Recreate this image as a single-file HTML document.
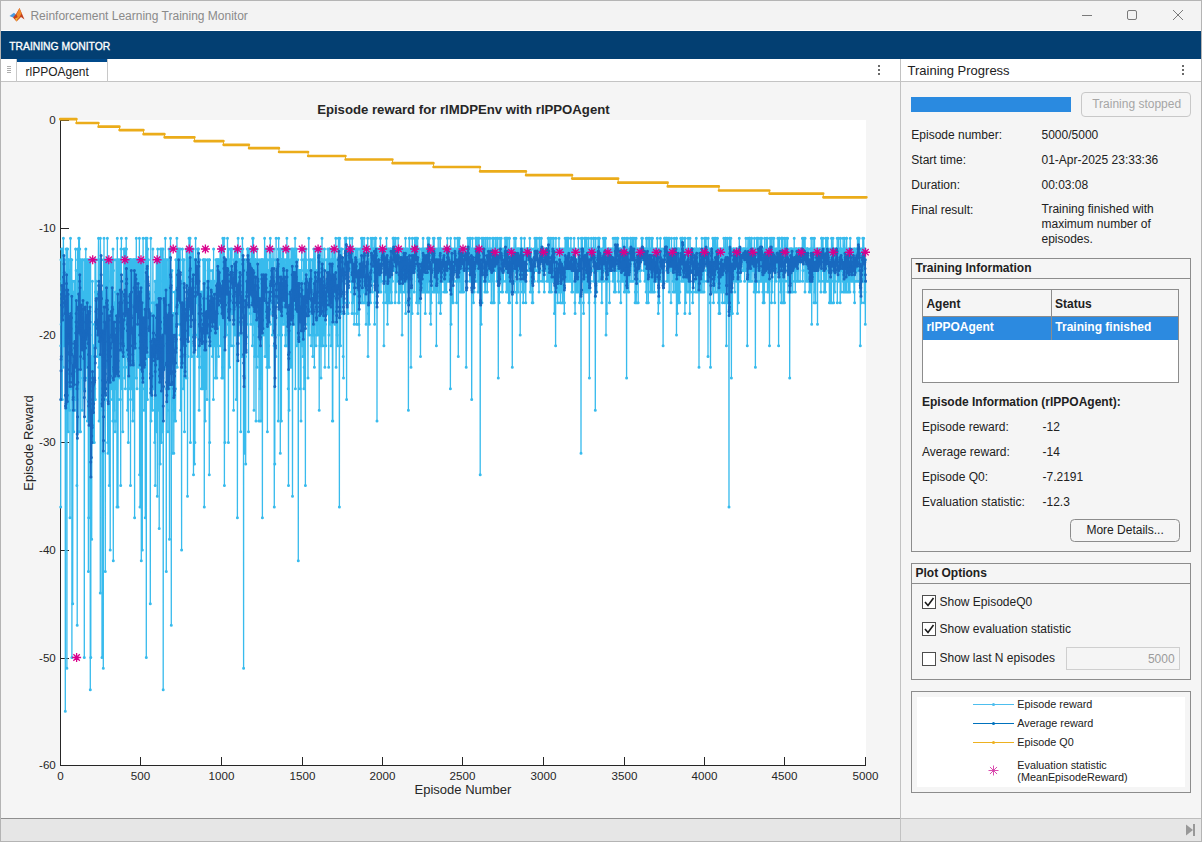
<!DOCTYPE html>
<html><head><meta charset="utf-8"><style>
html,body{margin:0;padding:0;width:1202px;height:842px;overflow:hidden;background:#f5f5f5}
svg{display:block;font-family:"Liberation Sans", sans-serif}
</style></head><body>
<svg width="1202" height="842" viewBox="0 0 1202 842">
<rect x="0" y="0" width="1202" height="842" fill="#f5f5f5"/>
<rect x="0" y="0" width="1202" height="31" fill="#f3f3f3"/>
<rect x="0" y="30" width="1202" height="1" fill="#ffffff"/>
<polygon points="9.5,16 14,12.8 16.5,15.2 13,17.6" fill="#4a9be0"/>
<polygon points="13,17.6 16,14 19.5,8 24.5,19.5 21,17 16.5,21.5" fill="#c4401c"/>
<polygon points="16.5,14.5 19.5,8 21.5,13.5 18.5,19" fill="#ef8a2a"/>
<polygon points="15,18.5 18.5,17 16.5,21.5" fill="#f6b534"/>
<text x="30.4" y="20" font-size="12" font-weight="normal" fill="#8a8a8a" text-anchor="start" >Reinforcement Learning Training Monitor</text>
<rect x="1082" y="15" width="10" height="1" fill="#7a7a7a"/>
<rect x="1127.5" y="10.5" width="9" height="9" rx="1.5" fill="none" stroke="#7a7a7a" stroke-width="1"/>
<path d="M1173,10 L1183,20 M1183,10 L1173,20" stroke="#7a7a7a" stroke-width="1"/>
<rect x="0" y="31" width="1202" height="28" fill="#033f72"/>
<text x="9.2" y="50.4" font-size="11.5" font-weight="normal" fill="#ffffff" text-anchor="start" textLength="101" lengthAdjust="spacingAndGlyphs" stroke="#ffffff" stroke-width="0.35">TRAINING MONITOR</text>
<rect x="0" y="59" width="900" height="23" fill="#ffffff"/>
<rect x="0" y="81" width="900" height="1" fill="#c4c4c4"/>
<rect x="16" y="59" width="1" height="23" fill="#c8c8c8"/>
<rect x="7" y="66.1" width="4" height="0.6" fill="#777"/>
<rect x="7" y="68.1" width="4" height="0.6" fill="#777"/>
<rect x="7" y="70.2" width="4" height="0.6" fill="#777"/>
<rect x="7" y="72.3" width="4" height="0.6" fill="#777"/>
<rect x="17" y="59" width="90" height="3" fill="#004a8b"/>
<rect x="107" y="59" width="1" height="23" fill="#c8c8c8"/>
<text x="25.5" y="76.1" font-size="12" font-weight="normal" fill="#212121" text-anchor="start" >rlPPOAgent</text>
<rect x="878" y="65" width="2" height="2" fill="#6a6a6a"/>
<rect x="878" y="69" width="2" height="2" fill="#6a6a6a"/>
<rect x="878" y="73" width="2" height="2" fill="#6a6a6a"/>
<rect x="901" y="59" width="301" height="23" fill="#ffffff"/>
<rect x="901" y="81" width="301" height="1" fill="#c4c4c4"/>
<text x="907.5" y="75" font-size="13" font-weight="normal" fill="#212121" text-anchor="start" >Training Progress</text>
<rect x="1182" y="65" width="2" height="2" fill="#6a6a6a"/>
<rect x="1182" y="69" width="2" height="2" fill="#6a6a6a"/>
<rect x="1182" y="73" width="2" height="2" fill="#6a6a6a"/>
<rect x="900" y="59" width="1" height="783" fill="#c2c2c2"/>
<rect x="0" y="818" width="1202" height="24" fill="#e6e6e6"/>
<rect x="0" y="818" width="900" height="1" fill="#8f8f8f"/>
<rect x="901" y="818" width="301" height="1" fill="#bdbdbd"/>
<rect x="900" y="818" width="1" height="24" fill="#c2c2c2"/>
<polygon points="1186,824.5 1193,830 1186,835.5" fill="#999"/>
<rect x="1193" y="824" width="2" height="12" fill="#999"/>
<rect x="0" y="350" width="1" height="8" fill="#6e2a30"/>
<rect x="1201" y="350" width="1" height="2" fill="#333"/>
<rect x="0.5" y="0.5" width="1201" height="841" fill="none" stroke="#b4b4b4" stroke-width="1"/>
<rect x="911" y="97" width="160" height="15" fill="#2a8ae0"/>
<rect x="1081.5" y="92.5" width="109" height="24" rx="3.5" fill="#f5f5f5" stroke="#c8c8c8"/>
<text x="1092.2" y="108" font-size="12" font-weight="normal" fill="#a6a6a6" text-anchor="start" >Training stopped</text>
<text x="911.3" y="139.3" font-size="12" font-weight="normal" fill="#212121" text-anchor="start" >Episode number:</text>
<text x="1041.5" y="139.3" font-size="12" font-weight="normal" fill="#212121" text-anchor="start" >5000/5000</text>
<text x="911.3" y="164.4" font-size="12" font-weight="normal" fill="#212121" text-anchor="start" >Start time:</text>
<text x="1041.5" y="164.4" font-size="12" font-weight="normal" fill="#212121" text-anchor="start" >01-Apr-2025 23:33:36</text>
<text x="911.3" y="189.3" font-size="12" font-weight="normal" fill="#212121" text-anchor="start" >Duration:</text>
<text x="1041.5" y="189.3" font-size="12" font-weight="normal" fill="#212121" text-anchor="start" >00:03:08</text>
<text x="911.3" y="214.2" font-size="12" font-weight="normal" fill="#212121" text-anchor="start" >Final result:</text>
<text x="1041.5" y="213.2" font-size="12" font-weight="normal" fill="#212121" text-anchor="start" >Training finished with</text>
<text x="1041.5" y="228.2" font-size="12" font-weight="normal" fill="#212121" text-anchor="start" >maximum number of</text>
<text x="1041.5" y="243.2" font-size="12" font-weight="normal" fill="#212121" text-anchor="start" >episodes.</text>
<rect x="911.5" y="258.5" width="279" height="293" fill="none" stroke="#8c8c8c"/>
<rect x="912" y="278" width="278" height="1" fill="#8c8c8c"/>
<text x="915.5" y="272" font-size="12" font-weight="bold" fill="#212121" text-anchor="start" >Training Information</text>
<rect x="922.5" y="289.5" width="256" height="93" fill="#ffffff" stroke="#8c8c8c"/>
<rect x="923" y="290" width="255" height="26" fill="#f5f5f5"/>
<rect x="923" y="316" width="255" height="1" fill="#8c8c8c"/>
<rect x="923" y="317" width="255" height="23" fill="#2c8ae0"/>
<rect x="1051" y="290" width="1" height="50" fill="#8c8c8c"/>
<text x="926.4" y="308.3" font-size="12" font-weight="bold" fill="#212121" text-anchor="start" >Agent</text>
<text x="1055" y="308.3" font-size="12" font-weight="bold" fill="#212121" text-anchor="start" >Status</text>
<text x="926.4" y="331" font-size="12" font-weight="bold" fill="#ffffff" text-anchor="start" >rlPPOAgent</text>
<text x="1055.3" y="331" font-size="12" font-weight="bold" fill="#ffffff" text-anchor="start" >Training finished</text>
<text x="922" y="405.6" font-size="12" font-weight="bold" fill="#212121" text-anchor="start" >Episode Information (rlPPOAgent):</text>
<text x="922" y="430.7" font-size="12" font-weight="normal" fill="#212121" text-anchor="start" >Episode reward:</text>
<text x="1042.5" y="430.7" font-size="12" font-weight="normal" fill="#212121" text-anchor="start" >-12</text>
<text x="922" y="455.8" font-size="12" font-weight="normal" fill="#212121" text-anchor="start" >Average reward:</text>
<text x="1042.5" y="455.8" font-size="12" font-weight="normal" fill="#212121" text-anchor="start" >-14</text>
<text x="922" y="480.9" font-size="12" font-weight="normal" fill="#212121" text-anchor="start" >Episode Q0:</text>
<text x="1042.5" y="480.9" font-size="12" font-weight="normal" fill="#212121" text-anchor="start" >-7.2191</text>
<text x="922" y="506" font-size="12" font-weight="normal" fill="#212121" text-anchor="start" >Evaluation statistic:</text>
<text x="1042.5" y="506" font-size="12" font-weight="normal" fill="#212121" text-anchor="start" >-12.3</text>
<rect x="1070.5" y="519.5" width="109" height="22" rx="4" fill="#f5f5f5" stroke="#8c8c8c"/>
<text x="1086.4" y="533.7" font-size="12" font-weight="normal" fill="#212121" text-anchor="start" >More Details...</text>
<rect x="911.5" y="563.5" width="279" height="116" fill="none" stroke="#8c8c8c"/>
<rect x="912" y="583" width="278" height="1" fill="#8c8c8c"/>
<text x="915.5" y="577" font-size="12" font-weight="bold" fill="#212121" text-anchor="start" >Plot Options</text>
<rect x="922.5" y="595.5" width="13" height="13" fill="#ffffff" stroke="#4d4d4d"/>
<path d="M925,602.0 L928,605.5 L933.5,598.0" fill="none" stroke="#1a1a1a" stroke-width="1.6"/>
<rect x="922.5" y="622.5" width="13" height="13" fill="#ffffff" stroke="#4d4d4d"/>
<path d="M925,629.0 L928,632.5 L933.5,625.0" fill="none" stroke="#1a1a1a" stroke-width="1.6"/>
<rect x="922.5" y="652.5" width="13" height="13" fill="#ffffff" stroke="#4d4d4d"/>
<text x="939.5" y="606" font-size="12" font-weight="normal" fill="#212121" text-anchor="start" >Show EpisodeQ0</text>
<text x="939.5" y="633" font-size="12" font-weight="normal" fill="#212121" text-anchor="start" >Show evaluation statistic</text>
<text x="939.5" y="661.8" font-size="12" font-weight="normal" fill="#212121" text-anchor="start" >Show last N episodes</text>
<rect x="1066.5" y="647.5" width="113" height="22" fill="#f5f5f5" stroke="#cfcfcf"/>
<text x="1174.6" y="662.5" font-size="12" font-weight="normal" fill="#9b9b9b" text-anchor="end" >5000</text>
<rect x="911.5" y="691.5" width="279" height="101" fill="none" stroke="#8c8c8c"/>
<rect x="917" y="697" width="268" height="90" fill="#ffffff"/>
<rect x="973" y="704.0" width="41" height="1" fill="#4dbeee"/>
<circle cx="993.5" cy="704.5" r="1.5" fill="#4dbeee"/>
<text x="1017.3" y="708" font-size="10.8" font-weight="normal" fill="#212121" text-anchor="start" >Episode reward</text>
<rect x="973" y="723.0" width="41" height="1" fill="#0072bd"/>
<circle cx="993.5" cy="723.5" r="1.5" fill="#0072bd"/>
<text x="1017.3" y="727" font-size="10.8" font-weight="normal" fill="#212121" text-anchor="start" >Average reward</text>
<rect x="973" y="742.0" width="41" height="1" fill="#edb120"/>
<circle cx="993.5" cy="742.5" r="1.5" fill="#edb120"/>
<text x="1017.3" y="745.8" font-size="10.8" font-weight="normal" fill="#212121" text-anchor="start" >Episode Q0</text>
<path d="M988.5,770.5 H998.5 M993.5,765.5 V775.5 M989.9645,766.9645 L997.0355,774.0355 M989.9645,774.0355 L997.0355,766.9645" stroke="#d63aa6" stroke-width="0.9" fill="none"/>
<text x="1017.3" y="769.2" font-size="10.8" font-weight="normal" fill="#212121" text-anchor="start" >Evaluation statistic</text>
<text x="1017.3" y="780.6" font-size="10.8" font-weight="normal" fill="#212121" text-anchor="start" >(MeanEpisodeReward)</text>
<rect x="60" y="120" width="806" height="645" fill="#ffffff"/>
<text x="463.4" y="114.2" font-size="13" font-weight="bold" fill="#262626" text-anchor="middle" textLength="292.5" lengthAdjust="spacingAndGlyphs">Episode reward for rlMDPEnv with rlPPOAgent</text>
<rect x="60" y="120" width="1" height="646" fill="#262626"/>
<rect x="60" y="765" width="806" height="1" fill="#262626"/>
<rect x="61" y="120" width="8" height="1" fill="#262626"/>
<text x="55.8" y="124.2" font-size="11.6" font-weight="normal" fill="#262626" text-anchor="end" >0</text>
<rect x="61" y="228" width="8" height="1" fill="#262626"/>
<text x="55.8" y="232.2" font-size="11.6" font-weight="normal" fill="#262626" text-anchor="end" >-10</text>
<rect x="61" y="335" width="8" height="1" fill="#262626"/>
<text x="55.8" y="339.2" font-size="11.6" font-weight="normal" fill="#262626" text-anchor="end" >-20</text>
<rect x="61" y="442" width="8" height="1" fill="#262626"/>
<text x="55.8" y="446.2" font-size="11.6" font-weight="normal" fill="#262626" text-anchor="end" >-30</text>
<rect x="61" y="550" width="8" height="1" fill="#262626"/>
<text x="55.8" y="554.2" font-size="11.6" font-weight="normal" fill="#262626" text-anchor="end" >-40</text>
<rect x="61" y="658" width="8" height="1" fill="#262626"/>
<text x="55.8" y="662.2" font-size="11.6" font-weight="normal" fill="#262626" text-anchor="end" >-50</text>
<rect x="61" y="765" width="8" height="1" fill="#262626"/>
<text x="55.8" y="769.2" font-size="11.6" font-weight="normal" fill="#262626" text-anchor="end" >-60</text>
<rect x="60" y="757" width="1" height="8" fill="#262626"/>
<text x="60.5" y="779.6" font-size="11.6" font-weight="normal" fill="#262626" text-anchor="middle" >0</text>
<rect x="140" y="757" width="1" height="8" fill="#262626"/>
<text x="140.5" y="779.6" font-size="11.6" font-weight="normal" fill="#262626" text-anchor="middle" >500</text>
<rect x="221" y="757" width="1" height="8" fill="#262626"/>
<text x="221.5" y="779.6" font-size="11.6" font-weight="normal" fill="#262626" text-anchor="middle" >1000</text>
<rect x="302" y="757" width="1" height="8" fill="#262626"/>
<text x="302.5" y="779.6" font-size="11.6" font-weight="normal" fill="#262626" text-anchor="middle" >1500</text>
<rect x="382" y="757" width="1" height="8" fill="#262626"/>
<text x="382.5" y="779.6" font-size="11.6" font-weight="normal" fill="#262626" text-anchor="middle" >2000</text>
<rect x="462" y="757" width="1" height="8" fill="#262626"/>
<text x="462.5" y="779.6" font-size="11.6" font-weight="normal" fill="#262626" text-anchor="middle" >2500</text>
<rect x="543" y="757" width="1" height="8" fill="#262626"/>
<text x="543.5" y="779.6" font-size="11.6" font-weight="normal" fill="#262626" text-anchor="middle" >3000</text>
<rect x="624" y="757" width="1" height="8" fill="#262626"/>
<text x="624.5" y="779.6" font-size="11.6" font-weight="normal" fill="#262626" text-anchor="middle" >3500</text>
<rect x="704" y="757" width="1" height="8" fill="#262626"/>
<text x="704.5" y="779.6" font-size="11.6" font-weight="normal" fill="#262626" text-anchor="middle" >4000</text>
<rect x="784" y="757" width="1" height="8" fill="#262626"/>
<text x="784.5" y="779.6" font-size="11.6" font-weight="normal" fill="#262626" text-anchor="middle" >4500</text>
<rect x="865" y="757" width="1" height="8" fill="#262626"/>
<text x="865.5" y="779.6" font-size="11.6" font-weight="normal" fill="#262626" text-anchor="middle" >5000</text>
<polyline points="60.7,507.0 60.8,345.8 61.0,259.8 61.1,324.2 61.3,345.8 61.5,249.0 61.6,292.0 61.8,281.2 61.9,259.8 62.1,345.8 62.3,399.5 62.4,249.0 62.6,345.8 62.8,259.8 62.9,259.8 63.1,367.2 63.2,259.8 63.4,238.2 63.6,259.8 63.7,259.8 63.9,259.8 64.0,302.8 64.2,281.2 64.4,345.8 64.5,259.8 64.7,292.0 64.8,335.0 65.0,335.0 65.2,302.8 65.3,711.2 65.5,345.8 65.7,345.8 65.8,335.0 66.0,281.2 66.1,249.0 66.3,302.8 66.5,249.0 66.6,292.0 66.8,410.2 66.9,668.2 67.1,249.0 67.3,356.5 67.4,324.2 67.6,249.0 67.7,270.5 67.9,367.2 68.1,259.8 68.2,431.8 68.4,259.8 68.5,356.5 68.7,335.0 68.9,259.8 69.0,378.0 69.2,388.8 69.4,410.2 69.5,324.2 69.7,410.2 69.8,270.5 70.0,517.8 70.2,292.0 70.3,259.8 70.5,238.2 70.6,388.8 70.8,388.8 71.0,367.2 71.1,367.2 71.3,259.8 71.4,335.0 71.6,259.8 71.8,259.8 71.9,657.5 72.1,356.5 72.3,335.0 72.4,302.8 72.6,281.2 72.7,603.8 72.9,410.2 73.1,399.5 73.2,292.0 73.4,345.8 73.5,378.0 73.7,431.8 73.9,335.0 74.0,367.2 74.2,410.2 74.3,281.2 74.5,324.2 74.7,356.5 74.8,335.0 75.0,410.2 75.2,378.0 75.3,313.5 75.5,399.5 75.6,249.0 75.8,324.2 76.0,324.2 76.1,270.5 76.3,335.0 76.4,378.0 76.6,378.0 76.8,367.2 76.9,485.5 77.1,313.5 77.2,625.2 77.4,399.5 77.6,259.8 77.7,249.0 77.9,378.0 78.0,259.8 78.2,388.8 78.4,259.8 78.5,324.2 78.7,238.2 78.9,431.8 79.0,356.5 79.2,313.5 79.3,238.2 79.5,249.0 79.7,249.0 79.8,324.2 80.0,378.0 80.1,335.0 80.3,378.0 80.5,431.8 80.6,259.8 80.8,259.8 80.9,345.8 81.1,324.2 81.3,335.0 81.4,302.8 81.6,367.2 81.8,345.8 81.9,259.8 82.1,367.2 82.2,410.2 82.4,335.0 82.6,324.2 82.7,259.8 82.9,324.2 83.0,259.8 83.2,378.0 83.4,388.8 83.5,345.8 83.7,292.0 83.8,388.8 84.0,324.2 84.2,324.2 84.3,657.5 84.5,388.8 84.7,259.8 84.8,259.8 85.0,335.0 85.1,302.8 85.3,378.0 85.5,378.0 85.6,345.8 85.8,249.0 85.9,345.8 86.1,367.2 86.3,292.0 86.4,324.2 86.6,259.8 86.7,367.2 86.9,345.8 87.1,281.2 87.2,259.8 87.4,421.0 87.5,292.0 87.7,345.8 87.9,259.8 88.0,399.5 88.2,259.8 88.4,571.5 88.5,281.2 88.7,517.8 88.8,378.0 89.0,378.0 89.2,281.2 89.3,259.8 89.5,345.8 89.6,302.8 89.8,367.2 90.0,259.8 90.1,335.0 90.3,689.8 90.4,367.2 90.6,259.8 90.8,657.5 90.9,410.2 91.1,356.5 91.3,442.5 91.4,421.0 91.6,421.0 91.7,539.2 91.9,388.8 92.1,356.5 92.2,431.8 92.4,281.2 92.5,399.5 92.7,421.0 92.9,388.8 93.0,442.5 93.2,410.2 93.3,378.0 93.5,442.5 93.7,345.8 93.8,345.8 94.0,399.5 94.1,378.0 94.3,442.5 94.5,324.2 94.6,367.2 94.8,388.8 95.0,259.8 95.1,399.5 95.3,399.5 95.4,292.0 95.6,259.8 95.8,259.8 95.9,345.8 96.1,345.8 96.2,281.2 96.4,313.5 96.6,335.0 96.7,345.8 96.9,324.2 97.0,292.0 97.2,324.2 97.4,356.5 97.5,324.2 97.7,345.8 97.9,324.2 98.0,324.2 98.2,345.8 98.3,259.8 98.5,238.2 98.7,259.8 98.8,367.2 99.0,281.2 99.1,421.0 99.3,378.0 99.5,259.8 99.6,313.5 99.8,281.2 99.9,324.2 100.1,259.8 100.3,593.0 100.4,238.2 100.6,259.8 100.8,259.8 100.9,259.8 101.1,259.8 101.2,335.0 101.4,313.5 101.6,324.2 101.7,335.0 101.9,388.8 102.0,657.5 102.2,324.2 102.4,292.0 102.5,313.5 102.7,313.5 102.8,410.2 103.0,453.2 103.2,410.2 103.3,668.2 103.5,259.8 103.6,292.0 103.8,367.2 104.0,238.2 104.1,378.0 104.3,388.8 104.5,345.8 104.6,259.8 104.8,378.0 104.9,399.5 105.1,259.8 105.3,571.5 105.4,356.5 105.6,388.8 105.7,335.0 105.9,292.0 106.1,259.8 106.2,259.8 106.4,367.2 106.5,259.8 106.7,356.5 106.9,281.2 107.0,270.5 107.2,356.5 107.4,238.2 107.5,399.5 107.7,442.5 107.8,367.2 108.0,453.2 108.2,345.8 108.3,410.2 108.5,313.5 108.6,259.8 108.8,356.5 109.0,259.8 109.1,388.8 109.3,485.5 109.4,367.2 109.6,313.5 109.8,356.5 109.9,367.2 110.1,324.2 110.2,550.0 110.4,281.2 110.6,259.8 110.7,302.8 110.9,345.8 111.1,388.8 111.2,259.8 111.4,378.0 111.5,302.8 111.7,356.5 111.9,259.8 112.0,259.8 112.2,259.8 112.3,399.5 112.5,367.2 112.7,259.8 112.8,421.0 113.0,249.0 113.1,399.5 113.3,560.8 113.5,270.5 113.6,356.5 113.8,259.8 114.0,410.2 114.1,313.5 114.3,345.8 114.4,356.5 114.6,367.2 114.8,302.8 114.9,421.0 115.1,431.8 115.2,356.5 115.4,292.0 115.6,367.2 115.7,367.2 115.9,388.8 116.0,259.8 116.2,292.0 116.4,335.0 116.5,302.8 116.7,421.0 116.8,302.8 117.0,507.0 117.2,335.0 117.3,238.2 117.5,313.5 117.7,259.8 117.8,324.2 118.0,507.0 118.1,399.5 118.3,367.2 118.5,281.2 118.6,324.2 118.8,378.0 118.9,259.8 119.1,335.0 119.3,259.8 119.4,345.8 119.6,313.5 119.7,313.5 119.9,281.2 120.1,259.8 120.2,281.2 120.4,399.5 120.6,324.2 120.7,485.5 120.9,259.8 121.0,249.0 121.2,335.0 121.4,238.2 121.5,292.0 121.7,292.0 121.8,302.8 122.0,388.8 122.2,302.8 122.3,313.5 122.5,313.5 122.6,367.2 122.8,431.8 123.0,292.0 123.1,356.5 123.3,335.0 123.5,313.5 123.6,345.8 123.8,249.0 123.9,356.5 124.1,335.0 124.3,281.2 124.4,249.0 124.6,259.8 124.7,378.0 124.9,313.5 125.1,249.0 125.2,249.0 125.4,388.8 125.5,335.0 125.7,249.0 125.9,259.8 126.0,335.0 126.2,238.2 126.3,259.8 126.5,249.0 126.7,313.5 126.8,356.5 127.0,335.0 127.2,367.2 127.3,281.2 127.5,410.2 127.6,259.8 127.8,292.0 128.0,302.8 128.1,335.0 128.3,442.5 128.4,399.5 128.6,313.5 128.8,388.8 128.9,259.8 129.1,324.2 129.2,378.0 129.4,259.8 129.6,259.8 129.7,259.8 129.9,356.5 130.1,335.0 130.2,388.8 130.4,259.8 130.5,485.5 130.7,259.8 130.9,259.8 131.0,259.8 131.2,313.5 131.3,259.8 131.5,367.2 131.7,388.8 131.8,335.0 132.0,313.5 132.1,259.8 132.3,345.8 132.5,399.5 132.6,345.8 132.8,421.0 132.9,292.0 133.1,356.5 133.3,410.2 133.4,259.8 133.6,345.8 133.8,259.8 133.9,259.8 134.1,313.5 134.2,259.8 134.4,259.8 134.6,517.8 134.7,335.0 134.9,345.8 135.0,259.8 135.2,281.2 135.4,313.5 135.5,259.8 135.7,259.8 135.8,302.8 136.0,259.8 136.2,378.0 136.3,238.2 136.5,378.0 136.7,259.8 136.8,259.8 137.0,388.8 137.1,259.8 137.3,335.0 137.5,292.0 137.6,345.8 137.8,259.8 137.9,259.8 138.1,259.8 138.3,356.5 138.4,367.2 138.6,335.0 138.7,259.8 138.9,259.8 139.1,367.2 139.2,335.0 139.4,238.2 139.6,474.8 139.7,259.8 139.9,259.8 140.0,507.0 140.2,324.2 140.4,302.8 140.5,313.5 140.7,259.8 140.8,259.8 141.0,302.8 141.2,378.0 141.3,560.8 141.5,259.8 141.6,259.8 141.8,388.8 142.0,259.8 142.1,345.8 142.3,550.0 142.4,313.5 142.6,335.0 142.8,345.8 142.9,367.2 143.1,238.2 143.3,378.0 143.4,259.8 143.6,356.5 143.7,378.0 143.9,302.8 144.1,410.2 144.2,388.8 144.4,335.0 144.5,313.5 144.7,378.0 144.9,259.8 145.0,259.8 145.2,378.0 145.3,517.8 145.5,259.8 145.7,281.2 145.8,238.2 146.0,345.8 146.2,238.2 146.3,657.5 146.5,259.8 146.6,259.8 146.8,324.2 147.0,259.8 147.1,238.2 147.3,249.0 147.4,399.5 147.6,249.0 147.8,249.0 147.9,259.8 148.1,313.5 148.2,345.8 148.4,259.8 148.6,313.5 148.7,313.5 148.9,356.5 149.1,313.5 149.2,345.8 149.4,324.2 149.5,292.0 149.7,302.8 149.9,313.5 150.0,335.0 150.2,335.0 150.3,603.8 150.5,302.8 150.7,388.8 150.8,238.2 151.0,356.5 151.1,421.0 151.3,388.8 151.5,399.5 151.6,367.2 151.8,399.5 151.9,324.2 152.1,313.5 152.3,324.2 152.4,410.2 152.6,410.2 152.8,302.8 152.9,249.0 153.1,324.2 153.2,378.0 153.4,324.2 153.6,388.8 153.7,335.0 153.9,335.0 154.0,356.5 154.2,367.2 154.4,335.0 154.5,302.8 154.7,442.5 154.8,345.8 155.0,281.2 155.2,485.5 155.3,421.0 155.5,292.0 155.7,345.8 155.8,281.2 156.0,410.2 156.1,378.0 156.3,259.8 156.5,259.8 156.6,431.8 156.8,259.8 156.9,313.5 157.1,259.8 157.3,496.2 157.4,410.2 157.6,313.5 157.7,249.0 157.9,324.2 158.1,410.2 158.2,292.0 158.4,259.8 158.5,259.8 158.7,313.5 158.9,367.2 159.0,292.0 159.2,528.5 159.4,345.8 159.5,345.8 159.7,399.5 159.8,259.8 160.0,259.8 160.2,464.0 160.3,259.8 160.5,249.0 160.6,378.0 160.8,442.5 161.0,356.5 161.1,324.2 161.3,388.8 161.4,442.5 161.6,367.2 161.8,356.5 161.9,249.0 162.1,388.8 162.3,367.2 162.4,388.8 162.6,281.2 162.7,431.8 162.9,378.0 163.1,249.0 163.2,689.8 163.4,356.5 163.5,259.8 163.7,281.2 163.9,259.8 164.0,335.0 164.2,367.2 164.3,259.8 164.5,292.0 164.7,335.0 164.8,367.2 165.0,335.0 165.2,335.0 165.3,238.2 165.5,345.8 165.6,313.5 165.8,292.0 166.0,259.8 166.1,388.8 166.3,571.5 166.4,302.8 166.6,388.8 166.8,356.5 166.9,356.5 167.1,313.5 167.2,259.8 167.4,292.0 167.6,367.2 167.7,410.2 167.9,431.8 168.0,313.5 168.2,399.5 168.4,388.8 168.5,335.0 168.7,259.8 168.9,335.0 169.0,249.0 169.2,345.8 169.3,388.8 169.5,539.2 169.7,302.8 169.8,345.8 170.0,249.0 170.1,249.0 170.3,292.0 170.5,238.2 170.6,259.8 170.8,345.8 170.9,302.8 171.1,281.2 171.3,625.2 171.4,313.5 171.6,335.0 171.8,367.2 171.9,270.5 172.1,292.0 172.2,453.2 172.4,345.8 172.6,313.5 172.7,356.5 172.9,345.8 173.0,324.2 173.2,356.5 173.4,378.0 173.5,388.8 173.7,410.2 173.8,453.2 174.0,313.5 174.2,410.2 174.3,356.5 174.5,421.0 174.6,378.0 174.8,292.0 175.0,367.2 175.1,292.0 175.3,345.8 175.5,388.8 175.6,421.0 175.8,259.8 175.9,345.8 176.1,324.2 176.3,345.8 176.4,292.0 176.6,324.2 176.7,335.0 176.9,238.2 177.1,259.8 177.2,367.2 177.4,249.0 177.5,259.8 177.7,302.8 177.9,313.5 178.0,249.0 178.2,249.0 178.4,281.2 178.5,259.8 178.7,259.8 178.8,313.5 179.0,313.5 179.2,324.2 179.3,249.0 179.5,302.8 179.6,270.5 179.8,259.8 180.0,335.0 180.1,249.0 180.3,259.8 180.4,259.8 180.6,410.2 180.8,335.0 180.9,356.5 181.1,335.0 181.2,313.5 181.4,281.2 181.6,550.0 181.7,302.8 181.9,367.2 182.1,281.2 182.2,313.5 182.4,249.0 182.5,324.2 182.7,356.5 182.9,367.2 183.0,313.5 183.2,292.0 183.3,388.8 183.5,324.2 183.7,259.8 183.8,259.8 184.0,313.5 184.1,259.8 184.3,345.8 184.5,431.8 184.6,378.0 184.8,356.5 185.0,367.2 185.1,324.2 185.3,302.8 185.4,302.8 185.6,302.8 185.8,335.0 185.9,345.8 186.1,313.5 186.2,249.0 186.4,302.8 186.6,249.0 186.7,313.5 186.9,378.0 187.0,313.5 187.2,249.0 187.4,259.8 187.5,496.2 187.7,270.5 187.9,324.2 188.0,356.5 188.2,259.8 188.3,313.5 188.5,259.8 188.7,335.0 188.8,302.8 189.0,238.2 189.1,335.0 189.3,302.8 189.5,259.8 189.6,249.0 189.8,238.2 189.9,302.8 190.1,238.2 190.3,313.5 190.4,442.5 190.6,249.0 190.7,335.0 190.9,292.0 191.1,281.2 191.2,292.0 191.4,335.0 191.6,292.0 191.7,356.5 191.9,292.0 192.0,249.0 192.2,270.5 192.4,313.5 192.5,313.5 192.7,249.0 192.8,259.8 193.0,302.8 193.2,313.5 193.3,249.0 193.5,474.8 193.6,345.8 193.8,324.2 194.0,324.2 194.1,292.0 194.3,324.2 194.5,464.0 194.6,259.8 194.8,259.8 194.9,442.5 195.1,259.8 195.3,259.8 195.4,259.8 195.6,238.2 195.7,281.2 195.9,335.0 196.1,259.8 196.2,259.8 196.4,259.8 196.5,270.5 196.7,281.2 196.9,270.5 197.0,302.8 197.2,292.0 197.3,270.5 197.5,249.0 197.7,356.5 197.8,302.8 198.0,259.8 198.2,249.0 198.3,249.0 198.5,249.0 198.6,259.8 198.8,324.2 199.0,324.2 199.1,410.2 199.3,302.8 199.4,367.2 199.6,292.0 199.8,259.8 199.9,302.8 200.1,302.8 200.2,313.5 200.4,302.8 200.6,324.2 200.7,324.2 200.9,335.0 201.1,367.2 201.2,292.0 201.4,388.8 201.5,313.5 201.7,356.5 201.9,335.0 202.0,324.2 202.2,388.8 202.3,302.8 202.5,292.0 202.7,356.5 202.8,324.2 203.0,388.8 203.1,259.8 203.3,335.0 203.5,259.8 203.6,335.0 203.8,302.8 204.0,259.8 204.1,259.8 204.3,507.0 204.4,335.0 204.6,345.8 204.8,302.8 204.9,259.8 205.1,324.2 205.2,421.0 205.4,259.8 205.6,356.5 205.7,388.8 205.9,281.2 206.0,324.2 206.2,302.8 206.4,313.5 206.5,335.0 206.7,324.2 206.8,292.0 207.0,399.5 207.2,313.5 207.3,302.8 207.5,259.8 207.7,313.5 207.8,302.8 208.0,259.8 208.1,270.5 208.3,335.0 208.5,335.0 208.6,324.2 208.8,292.0 208.9,302.8 209.1,292.0 209.3,474.8 209.4,259.8 209.6,259.8 209.7,442.5 209.9,270.5 210.1,292.0 210.2,302.8 210.4,345.8 210.6,302.8 210.7,281.2 210.9,292.0 211.0,281.2 211.2,292.0 211.4,313.5 211.5,302.8 211.7,302.8 211.8,345.8 212.0,345.8 212.2,313.5 212.3,270.5 212.5,356.5 212.6,292.0 212.8,313.5 213.0,292.0 213.1,292.0 213.3,302.8 213.4,399.5 213.6,249.0 213.8,324.2 213.9,281.2 214.1,335.0 214.3,281.2 214.4,335.0 214.6,345.8 214.7,313.5 214.9,335.0 215.1,313.5 215.2,302.8 215.4,378.0 215.5,335.0 215.7,302.8 215.9,259.8 216.0,313.5 216.2,259.8 216.3,335.0 216.5,259.8 216.7,324.2 216.8,378.0 217.0,345.8 217.2,259.8 217.3,259.8 217.5,281.2 217.6,270.5 217.8,259.8 218.0,281.2 218.1,345.8 218.3,259.8 218.4,281.2 218.6,356.5 218.8,259.8 218.9,259.8 219.1,313.5 219.2,259.8 219.4,270.5 219.6,313.5 219.7,324.2 219.9,292.0 220.1,249.0 220.2,292.0 220.4,281.2 220.5,313.5 220.7,345.8 220.9,249.0 221.0,324.2 221.2,249.0 221.3,335.0 221.5,281.2 221.7,292.0 221.8,378.0 222.0,281.2 222.1,259.8 222.3,270.5 222.5,270.5 222.6,367.2 222.8,238.2 222.9,378.0 223.1,324.2 223.3,281.2 223.4,259.8 223.6,259.8 223.8,281.2 223.9,259.8 224.1,249.0 224.2,238.2 224.4,485.5 224.6,259.8 224.7,259.8 224.9,442.5 225.0,302.8 225.2,259.8 225.4,259.8 225.5,259.8 225.7,259.8 225.8,259.8 226.0,302.8 226.2,259.8 226.3,259.8 226.5,335.0 226.7,302.8 226.8,292.0 227.0,259.8 227.1,281.2 227.3,270.5 227.5,238.2 227.6,292.0 227.8,292.0 227.9,259.8 228.1,324.2 228.3,270.5 228.4,442.5 228.6,259.8 228.7,249.0 228.9,292.0 229.1,313.5 229.2,345.8 229.4,281.2 229.6,367.2 229.7,292.0 229.9,259.8 230.0,270.5 230.2,313.5 230.4,270.5 230.5,259.8 230.7,249.0 230.8,270.5 231.0,345.8 231.2,249.0 231.3,281.2 231.5,249.0 231.6,281.2 231.8,270.5 232.0,313.5 232.1,249.0 232.3,302.8 232.4,270.5 232.6,302.8 232.8,270.5 232.9,281.2 233.1,313.5 233.3,345.8 233.4,270.5 233.6,410.2 233.7,259.8 233.9,313.5 234.1,292.0 234.2,259.8 234.4,259.8 234.5,249.0 234.7,259.8 234.9,335.0 235.0,259.8 235.2,259.8 235.3,313.5 235.5,249.0 235.7,249.0 235.8,292.0 236.0,249.0 236.2,270.5 236.3,399.5 236.5,302.8 236.6,249.0 236.8,259.8 237.0,313.5 237.1,302.8 237.3,324.2 237.4,517.8 237.6,313.5 237.8,313.5 237.9,335.0 238.1,238.2 238.2,335.0 238.4,292.0 238.6,259.8 238.7,292.0 238.9,335.0 239.0,259.8 239.2,324.2 239.4,259.8 239.5,281.2 239.7,259.8 239.9,281.2 240.0,281.2 240.2,324.2 240.3,313.5 240.5,259.8 240.7,431.8 240.8,335.0 241.0,249.0 241.1,335.0 241.3,313.5 241.5,324.2 241.6,259.8 241.8,356.5 241.9,302.8 242.1,302.8 242.3,281.2 242.4,238.2 242.6,249.0 242.8,249.0 242.9,281.2 243.1,259.8 243.2,259.8 243.4,302.8 243.6,668.2 243.7,324.2 243.9,324.2 244.0,313.5 244.2,259.8 244.4,356.5 244.5,453.2 244.7,324.2 244.8,281.2 245.0,335.0 245.2,302.8 245.3,259.8 245.5,356.5 245.7,464.0 245.8,335.0 246.0,335.0 246.1,270.5 246.3,281.2 246.5,302.8 246.6,292.0 246.8,259.8 246.9,324.2 247.1,281.2 247.3,249.0 247.4,249.0 247.6,270.5 247.7,249.0 247.9,259.8 248.1,281.2 248.2,249.0 248.4,259.8 248.5,431.8 248.7,292.0 248.9,249.0 249.0,302.8 249.2,249.0 249.4,259.8 249.5,292.0 249.7,259.8 249.8,259.8 250.0,259.8 250.2,259.8 250.3,313.5 250.5,259.8 250.6,302.8 250.8,324.2 251.0,270.5 251.1,259.8 251.3,249.0 251.4,270.5 251.6,292.0 251.8,281.2 251.9,292.0 252.1,302.8 252.3,302.8 252.4,345.8 252.6,238.2 252.7,324.2 252.9,249.0 253.1,302.8 253.2,238.2 253.4,313.5 253.5,281.2 253.7,249.0 253.9,281.2 254.0,410.2 254.2,249.0 254.3,335.0 254.5,281.2 254.7,270.5 254.8,356.5 255.0,259.8 255.1,259.8 255.3,324.2 255.5,259.8 255.6,281.2 255.8,259.8 256.0,421.0 256.1,313.5 256.3,281.2 256.4,281.2 256.6,302.8 256.8,302.8 256.9,367.2 257.1,249.0 257.2,281.2 257.4,270.5 257.6,259.8 257.7,259.8 257.9,324.2 258.0,292.0 258.2,302.8 258.4,313.5 258.5,356.5 258.7,292.0 258.9,302.8 259.0,421.0 259.2,259.8 259.3,292.0 259.5,292.0 259.7,302.8 259.8,345.8 260.0,388.8 260.1,367.2 260.3,259.8 260.5,367.2 260.6,302.8 260.8,281.2 260.9,421.0 261.1,281.2 261.3,259.8 261.4,259.8 261.6,270.5 261.8,324.2 261.9,259.8 262.1,302.8 262.2,259.8 262.4,517.8 262.6,259.8 262.7,302.8 262.9,302.8 263.0,259.8 263.2,313.5 263.4,270.5 263.5,270.5 263.7,259.8 263.8,292.0 264.0,335.0 264.2,292.0 264.3,313.5 264.5,270.5 264.6,238.2 264.8,292.0 265.0,270.5 265.1,356.5 265.3,270.5 265.5,249.0 265.6,302.8 265.8,259.8 265.9,292.0 266.1,292.0 266.3,292.0 266.4,324.2 266.6,356.5 266.7,249.0 266.9,367.2 267.1,281.2 267.2,292.0 267.4,431.8 267.5,259.8 267.7,292.0 267.9,302.8 268.0,313.5 268.2,367.2 268.4,270.5 268.5,313.5 268.7,345.8 268.8,281.2 269.0,302.8 269.2,367.2 269.3,249.0 269.5,259.8 269.6,313.5 269.8,313.5 270.0,324.2 270.1,292.0 270.3,238.2 270.4,259.8 270.6,302.8 270.8,313.5 270.9,292.0 271.1,259.8 271.2,259.8 271.4,302.8 271.6,270.5 271.7,259.8 271.9,302.8 272.1,249.0 272.2,259.8 272.4,335.0 272.5,281.2 272.7,335.0 272.9,302.8 273.0,324.2 273.2,313.5 273.3,259.8 273.5,281.2 273.7,292.0 273.8,259.8 274.0,249.0 274.1,345.8 274.3,507.0 274.5,302.8 274.6,313.5 274.8,464.0 275.0,302.8 275.1,302.8 275.3,345.8 275.4,324.2 275.6,302.8 275.8,259.8 275.9,356.5 276.1,238.2 276.2,292.0 276.4,270.5 276.6,292.0 276.7,259.8 276.9,302.8 277.0,259.8 277.2,259.8 277.4,259.8 277.5,259.8 277.7,259.8 277.9,259.8 278.0,292.0 278.2,249.0 278.3,421.0 278.5,292.0 278.7,238.2 278.8,335.0 279.0,259.8 279.1,292.0 279.3,302.8 279.5,292.0 279.6,302.8 279.8,281.2 279.9,259.8 280.1,249.0 280.3,453.2 280.4,270.5 280.6,249.0 280.7,313.5 280.9,259.8 281.1,302.8 281.2,259.8 281.4,421.0 281.6,259.8 281.7,335.0 281.9,259.8 282.0,259.8 282.2,324.2 282.4,249.0 282.5,324.2 282.7,302.8 282.8,292.0 283.0,259.8 283.2,281.2 283.3,259.8 283.5,249.0 283.6,302.8 283.8,313.5 284.0,324.2 284.1,302.8 284.3,259.8 284.5,270.5 284.6,313.5 284.8,270.5 284.9,270.5 285.1,281.2 285.3,345.8 285.4,302.8 285.6,335.0 285.7,259.8 285.9,281.2 286.1,313.5 286.2,313.5 286.4,259.8 286.5,259.8 286.7,281.2 286.9,238.2 287.0,345.8 287.2,345.8 287.3,313.5 287.5,324.2 287.7,302.8 287.8,249.0 288.0,345.8 288.2,388.8 288.3,302.8 288.5,485.5 288.6,324.2 288.8,292.0 289.0,249.0 289.1,410.2 289.3,292.0 289.4,324.2 289.6,281.2 289.8,313.5 289.9,335.0 290.1,270.5 290.2,259.8 290.4,292.0 290.6,367.2 290.7,335.0 290.9,281.2 291.1,249.0 291.2,367.2 291.4,324.2 291.5,324.2 291.7,292.0 291.9,249.0 292.0,259.8 292.2,249.0 292.3,281.2 292.5,496.2 292.7,302.8 292.8,249.0 293.0,292.0 293.1,281.2 293.3,259.8 293.5,281.2 293.6,292.0 293.8,249.0 293.9,313.5 294.1,292.0 294.3,313.5 294.4,259.8 294.6,324.2 294.8,249.0 294.9,292.0 295.1,238.2 295.2,302.8 295.4,388.8 295.6,270.5 295.7,302.8 295.9,281.2 296.0,281.2 296.2,259.8 296.4,259.8 296.5,249.0 296.7,259.8 296.8,302.8 297.0,345.8 297.2,292.0 297.3,302.8 297.5,313.5 297.7,281.2 297.8,259.8 298.0,281.2 298.1,281.2 298.3,560.8 298.5,281.2 298.6,292.0 298.8,270.5 298.9,302.8 299.1,281.2 299.3,270.5 299.4,313.5 299.6,313.5 299.7,302.8 299.9,270.5 300.1,335.0 300.2,388.8 300.4,270.5 300.6,270.5 300.7,324.2 300.9,324.2 301.0,421.0 301.2,313.5 301.4,270.5 301.5,324.2 301.7,259.8 301.8,249.0 302.0,345.8 302.2,335.0 302.3,292.0 302.5,302.8 302.6,324.2 302.8,335.0 303.0,356.5 303.1,335.0 303.3,345.8 303.4,281.2 303.6,259.8 303.8,270.5 303.9,388.8 304.1,367.2 304.3,249.0 304.4,345.8 304.6,259.8 304.7,335.0 304.9,292.0 305.1,270.5 305.2,259.8 305.4,485.5 305.5,270.5 305.7,249.0 305.9,313.5 306.0,249.0 306.2,292.0 306.3,292.0 306.5,259.8 306.7,313.5 306.8,292.0 307.0,313.5 307.2,270.5 307.3,324.2 307.5,281.2 307.6,292.0 307.8,302.8 308.0,378.0 308.1,292.0 308.3,281.2 308.4,324.2 308.6,281.2 308.8,238.2 308.9,302.8 309.1,292.0 309.2,335.0 309.4,281.2 309.6,281.2 309.7,270.5 309.9,259.8 310.1,313.5 310.2,270.5 310.4,292.0 310.5,259.8 310.7,270.5 310.9,259.8 311.0,313.5 311.2,345.8 311.3,270.5 311.5,313.5 311.7,292.0 311.8,335.0 312.0,313.5 312.1,302.8 312.3,313.5 312.5,302.8 312.6,259.8 312.8,356.5 312.9,335.0 313.1,259.8 313.3,335.0 313.4,335.0 313.6,292.0 313.8,249.0 313.9,281.2 314.1,313.5 314.2,281.2 314.4,367.2 314.6,270.5 314.7,259.8 314.9,302.8 315.0,281.2 315.2,249.0 315.4,292.0 315.5,281.2 315.7,302.8 315.8,281.2 316.0,345.8 316.2,324.2 316.3,335.0 316.5,313.5 316.7,270.5 316.8,302.8 317.0,335.0 317.1,292.0 317.3,281.2 317.5,249.0 317.6,249.0 317.8,335.0 317.9,281.2 318.1,249.0 318.3,249.0 318.4,259.8 318.6,249.0 318.7,270.5 318.9,249.0 319.1,281.2 319.2,410.2 319.4,302.8 319.5,292.0 319.7,292.0 319.9,259.8 320.0,345.8 320.2,249.0 320.4,249.0 320.5,345.8 320.7,270.5 320.8,313.5 321.0,378.0 321.2,259.8 321.3,281.2 321.5,259.8 321.6,259.8 321.8,302.8 322.0,238.2 322.1,259.8 322.3,259.8 322.4,345.8 322.6,281.2 322.8,281.2 322.9,345.8 323.1,302.8 323.3,281.2 323.4,313.5 323.6,335.0 323.7,259.8 323.9,335.0 324.1,249.0 324.2,302.8 324.4,292.0 324.5,249.0 324.7,259.8 324.9,367.2 325.0,292.0 325.2,313.5 325.3,302.8 325.5,324.2 325.7,292.0 325.8,345.8 326.0,281.2 326.1,302.8 326.3,281.2 326.5,313.5 326.6,281.2 326.8,259.8 327.0,259.8 327.1,302.8 327.3,259.8 327.4,313.5 327.6,313.5 327.8,249.0 327.9,270.5 328.1,259.8 328.2,292.0 328.4,292.0 328.6,270.5 328.7,367.2 328.9,259.8 329.0,335.0 329.2,249.0 329.4,249.0 329.5,292.0 329.7,249.0 329.9,281.2 330.0,249.0 330.2,324.2 330.3,324.2 330.5,313.5 330.7,292.0 330.8,259.8 331.0,345.8 331.1,302.8 331.3,259.8 331.5,259.8 331.6,259.8 331.8,302.8 331.9,249.0 332.1,249.0 332.3,259.8 332.4,421.0 332.6,259.8 332.8,421.0 332.9,249.0 333.1,259.8 333.2,259.8 333.4,292.0 333.6,313.5 333.7,259.8 333.9,292.0 334.0,259.8 334.2,281.2 334.4,302.8 334.5,249.0 334.7,292.0 334.8,324.2 335.0,270.5 335.2,259.8 335.3,302.8 335.5,302.8 335.6,259.8 335.8,238.2 336.0,324.2 336.1,367.2 336.3,302.8 336.5,324.2 336.6,292.0 336.8,292.0 336.9,292.0 337.1,335.0 337.3,259.8 337.4,259.8 337.6,345.8 337.7,270.5 337.9,292.0 338.1,259.8 338.2,259.8 338.4,249.0 338.5,238.2 338.7,249.0 338.9,259.8 339.0,292.0 339.2,249.0 339.4,507.0 339.5,281.2 339.7,259.8 339.8,238.2 340.0,270.5 340.2,249.0 340.3,259.8 340.5,345.8 340.6,281.2 340.8,313.5 341.0,281.2 341.1,249.0 341.3,249.0 341.4,313.5 341.6,281.2 341.8,259.8 341.9,249.0 342.1,259.8 342.2,259.8 342.4,259.8 342.6,259.8 342.7,302.8 342.9,270.5 343.1,270.5 343.2,356.5 343.4,259.8 343.5,378.0 343.7,292.0 343.9,281.2 344.0,259.8 344.2,281.2 344.3,302.8 344.5,270.5 344.7,259.8 344.8,249.0 345.0,238.2 345.1,249.0 345.3,259.8 345.5,270.5 345.6,259.8 345.8,238.2 346.0,249.0 346.1,238.2 346.3,238.2 346.4,259.8 346.6,399.5 346.8,249.0 346.9,313.5 347.1,302.8 347.2,270.5 347.4,249.0 347.6,249.0 347.7,259.8 347.9,281.2 348.0,313.5 348.2,281.2 348.4,302.8 348.5,249.0 348.7,259.8 348.9,249.0 349.0,249.0 349.2,259.8 349.3,259.8 349.5,270.5 349.7,238.2 349.8,249.0 350.0,249.0 350.1,249.0 350.3,249.0 350.5,259.8 350.6,281.2 350.8,259.8 350.9,259.8 351.1,249.0 351.3,249.0 351.4,249.0 351.6,292.0 351.7,259.8 351.9,259.8 352.1,313.5 352.2,238.2 352.4,302.8 352.6,249.0 352.7,302.8 352.9,270.5 353.0,249.0 353.2,249.0 353.4,292.0 353.5,281.2 353.7,259.8 353.8,249.0 354.0,292.0 354.2,324.2 354.3,259.8 354.5,313.5 354.6,281.2 354.8,259.8 355.0,259.8 355.1,259.8 355.3,259.8 355.5,249.0 355.6,281.2 355.8,249.0 355.9,259.8 356.1,259.8 356.3,281.2 356.4,259.8 356.6,324.2 356.7,259.8 356.9,249.0 357.1,270.5 357.2,270.5 357.4,313.5 357.5,281.2 357.7,302.8 357.9,270.5 358.0,249.0 358.2,270.5 358.4,270.5 358.5,292.0 358.7,292.0 358.8,324.2 359.0,302.8 359.2,335.0 359.3,259.8 359.5,259.8 359.6,270.5 359.8,281.2 360.0,249.0 360.1,259.8 360.3,302.8 360.4,249.0 360.6,281.2 360.8,292.0 360.9,249.0 361.1,259.8 361.2,281.2 361.4,238.2 361.6,249.0 361.7,292.0 361.9,302.8 362.1,302.8 362.2,292.0 362.4,249.0 362.5,238.2 362.7,270.5 362.9,302.8 363.0,259.8 363.2,292.0 363.3,249.0 363.5,249.0 363.7,259.8 363.8,281.2 364.0,249.0 364.1,238.2 364.3,249.0 364.5,249.0 364.6,292.0 364.8,302.8 365.0,292.0 365.1,270.5 365.3,270.5 365.4,281.2 365.6,281.2 365.8,302.8 365.9,281.2 366.1,324.2 366.2,249.0 366.4,270.5 366.6,249.0 366.7,249.0 366.9,292.0 367.0,259.8 367.2,259.8 367.4,249.0 367.5,259.8 367.7,238.2 367.8,270.5 368.0,356.5 368.2,302.8 368.3,281.2 368.5,313.5 368.7,259.8 368.8,292.0 369.0,259.8 369.1,259.8 369.3,324.2 369.5,302.8 369.6,302.8 369.8,270.5 369.9,249.0 370.1,302.8 370.3,259.8 370.4,281.2 370.6,302.8 370.7,281.2 370.9,238.2 371.1,249.0 371.2,249.0 371.4,249.0 371.6,281.2 371.7,249.0 371.9,249.0 372.0,259.8 372.2,238.2 372.4,292.0 372.5,249.0 372.7,249.0 372.8,259.8 373.0,281.2 373.2,249.0 373.3,249.0 373.5,249.0 373.6,270.5 373.8,270.5 374.0,249.0 374.1,238.2 374.3,249.0 374.4,249.0 374.6,324.2 374.8,302.8 374.9,302.8 375.1,259.8 375.3,259.8 375.4,281.2 375.6,238.2 375.7,238.2 375.9,238.2 376.1,270.5 376.2,259.8 376.4,270.5 376.5,281.2 376.7,302.8 376.9,259.8 377.0,421.0 377.2,249.0 377.3,249.0 377.5,249.0 377.7,292.0 377.8,270.5 378.0,249.0 378.2,259.8 378.3,259.8 378.5,259.8 378.6,270.5 378.8,249.0 379.0,292.0 379.1,259.8 379.3,292.0 379.4,249.0 379.6,281.2 379.8,249.0 379.9,281.2 380.1,281.2 380.2,270.5 380.4,238.2 380.6,270.5 380.7,270.5 380.9,292.0 381.1,270.5 381.2,259.8 381.4,249.0 381.5,259.8 381.7,281.2 381.9,249.0 382.0,249.0 382.2,249.0 382.3,249.0 382.5,249.0 382.7,249.0 382.8,259.8 383.0,249.0 383.1,249.0 383.3,259.8 383.5,259.8 383.6,302.8 383.8,249.0 383.9,345.8 384.1,249.0 384.3,259.8 384.4,259.8 384.6,259.8 384.8,259.8 384.9,270.5 385.1,259.8 385.2,249.0 385.4,270.5 385.6,249.0 385.7,292.0 385.9,270.5 386.0,249.0 386.2,302.8 386.4,249.0 386.5,238.2 386.7,249.0 386.8,259.8 387.0,281.2 387.2,249.0 387.3,259.8 387.5,324.2 387.7,302.8 387.8,270.5 388.0,249.0 388.1,259.8 388.3,281.2 388.5,292.0 388.6,302.8 388.8,249.0 388.9,249.0 389.1,249.0 389.3,292.0 389.4,270.5 389.6,259.8 389.7,259.8 389.9,302.8 390.1,259.8 390.2,281.2 390.4,249.0 390.6,249.0 390.7,259.8 390.9,249.0 391.0,249.0 391.2,292.0 391.4,270.5 391.5,259.8 391.7,302.8 391.8,249.0 392.0,259.8 392.2,270.5 392.3,270.5 392.5,281.2 392.6,249.0 392.8,259.8 393.0,238.2 393.1,238.2 393.3,270.5 393.4,238.2 393.6,249.0 393.8,249.0 393.9,259.8 394.1,259.8 394.3,249.0 394.4,249.0 394.6,270.5 394.7,249.0 394.9,238.2 395.1,302.8 395.2,249.0 395.4,259.8 395.5,249.0 395.7,238.2 395.9,292.0 396.0,292.0 396.2,249.0 396.3,249.0 396.5,281.2 396.7,249.0 396.8,249.0 397.0,259.8 397.2,249.0 397.3,249.0 397.5,270.5 397.6,249.0 397.8,281.2 398.0,259.8 398.1,238.2 398.3,249.0 398.4,270.5 398.6,302.8 398.8,249.0 398.9,249.0 399.1,302.8 399.2,302.8 399.4,270.5 399.6,292.0 399.7,249.0 399.9,249.0 400.0,270.5 400.2,259.8 400.4,259.8 400.5,281.2 400.7,270.5 400.9,292.0 401.0,292.0 401.2,259.8 401.3,281.2 401.5,249.0 401.7,249.0 401.8,249.0 402.0,292.0 402.1,335.0 402.3,270.5 402.5,249.0 402.6,270.5 402.8,249.0 402.9,281.2 403.1,259.8 403.3,249.0 403.4,249.0 403.6,249.0 403.8,259.8 403.9,259.8 404.1,259.8 404.2,281.2 404.4,292.0 404.6,292.0 404.7,281.2 404.9,259.8 405.0,249.0 405.2,270.5 405.4,249.0 405.5,238.2 405.7,313.5 405.8,249.0 406.0,302.8 406.2,270.5 406.3,259.8 406.5,270.5 406.6,249.0 406.8,249.0 407.0,259.8 407.1,281.2 407.3,249.0 407.5,281.2 407.6,270.5 407.8,249.0 407.9,292.0 408.1,292.0 408.3,259.8 408.4,410.2 408.6,302.8 408.7,259.8 408.9,259.8 409.1,259.8 409.2,238.2 409.4,281.2 409.5,238.2 409.7,292.0 409.9,270.5 410.0,292.0 410.2,281.2 410.4,259.8 410.5,249.0 410.7,259.8 410.8,259.8 411.0,367.2 411.2,302.8 411.3,249.0 411.5,259.8 411.6,249.0 411.8,249.0 412.0,270.5 412.1,313.5 412.3,238.2 412.4,270.5 412.6,270.5 412.8,259.8 412.9,259.8 413.1,249.0 413.3,259.8 413.4,249.0 413.6,270.5 413.7,259.8 413.9,249.0 414.1,292.0 414.2,292.0 414.4,249.0 414.5,249.0 414.7,238.2 414.9,270.5 415.0,249.0 415.2,249.0 415.3,270.5 415.5,249.0 415.7,249.0 415.8,238.2 416.0,238.2 416.1,259.8 416.3,249.0 416.5,302.8 416.6,238.2 416.8,249.0 417.0,249.0 417.1,281.2 417.3,270.5 417.4,249.0 417.6,238.2 417.8,249.0 417.9,313.5 418.1,281.2 418.2,270.5 418.4,259.8 418.6,259.8 418.7,281.2 418.9,249.0 419.0,292.0 419.2,302.8 419.4,281.2 419.5,249.0 419.7,249.0 419.9,270.5 420.0,302.8 420.2,292.0 420.3,270.5 420.5,356.5 420.7,270.5 420.8,259.8 421.0,259.8 421.1,292.0 421.3,249.0 421.5,259.8 421.6,292.0 421.8,259.8 421.9,270.5 422.1,292.0 422.3,281.2 422.4,249.0 422.6,270.5 422.8,259.8 422.9,249.0 423.1,238.2 423.2,281.2 423.4,249.0 423.6,292.0 423.7,259.8 423.9,259.8 424.0,292.0 424.2,249.0 424.4,259.8 424.5,259.8 424.7,249.0 424.8,259.8 425.0,292.0 425.2,249.0 425.3,313.5 425.5,249.0 425.6,259.8 425.8,259.8 426.0,249.0 426.1,281.2 426.3,249.0 426.5,249.0 426.6,249.0 426.8,292.0 426.9,292.0 427.1,259.8 427.3,249.0 427.4,270.5 427.6,238.2 427.7,292.0 427.9,238.2 428.1,238.2 428.2,249.0 428.4,259.8 428.5,238.2 428.7,249.0 428.9,270.5 429.0,281.2 429.2,238.2 429.4,292.0 429.5,259.8 429.7,270.5 429.8,249.0 430.0,249.0 430.2,313.5 430.3,259.8 430.5,249.0 430.6,259.8 430.8,324.2 431.0,249.0 431.1,270.5 431.3,302.8 431.4,281.2 431.6,259.8 431.8,249.0 431.9,259.8 432.1,249.0 432.2,249.0 432.4,259.8 432.6,249.0 432.7,249.0 432.9,259.8 433.1,292.0 433.2,238.2 433.4,249.0 433.5,249.0 433.7,259.8 433.9,259.8 434.0,259.8 434.2,238.2 434.3,292.0 434.5,259.8 434.7,259.8 434.8,292.0 435.0,281.2 435.1,259.8 435.3,281.2 435.5,249.0 435.6,259.8 435.8,249.0 436.0,259.8 436.1,292.0 436.3,281.2 436.4,345.8 436.6,249.0 436.8,259.8 436.9,281.2 437.1,259.8 437.2,249.0 437.4,292.0 437.6,259.8 437.7,259.8 437.9,270.5 438.0,281.2 438.2,238.2 438.4,270.5 438.5,259.8 438.7,249.0 438.9,302.8 439.0,249.0 439.2,259.8 439.3,292.0 439.5,249.0 439.7,270.5 439.8,259.8 440.0,238.2 440.1,259.8 440.3,238.2 440.5,313.5 440.6,270.5 440.8,249.0 440.9,270.5 441.1,302.8 441.3,292.0 441.4,249.0 441.6,249.0 441.7,270.5 441.9,281.2 442.1,259.8 442.2,259.8 442.4,259.8 442.6,249.0 442.7,270.5 442.9,259.8 443.0,270.5 443.2,281.2 443.4,249.0 443.5,249.0 443.7,249.0 443.8,259.8 444.0,270.5 444.2,281.2 444.3,292.0 444.5,292.0 444.6,259.8 444.8,249.0 445.0,281.2 445.1,249.0 445.3,281.2 445.5,270.5 445.6,249.0 445.8,292.0 445.9,249.0 446.1,249.0 446.3,270.5 446.4,259.8 446.6,292.0 446.7,270.5 446.9,249.0 447.1,281.2 447.2,249.0 447.4,238.2 447.5,249.0 447.7,249.0 447.9,259.8 448.0,259.8 448.2,270.5 448.3,249.0 448.5,281.2 448.7,249.0 448.8,249.0 449.0,270.5 449.2,259.8 449.3,281.2 449.5,249.0 449.6,249.0 449.8,281.2 450.0,281.2 450.1,249.0 450.3,249.0 450.4,388.8 450.6,238.2 450.8,249.0 450.9,270.5 451.1,324.2 451.2,249.0 451.4,249.0 451.6,249.0 451.7,270.5 451.9,249.0 452.1,292.0 452.2,249.0 452.4,270.5 452.5,302.8 452.7,270.5 452.9,281.2 453.0,270.5 453.2,302.8 453.3,249.0 453.5,259.8 453.7,281.2 453.8,259.8 454.0,281.2 454.1,259.8 454.3,249.0 454.5,259.8 454.6,259.8 454.8,238.2 454.9,249.0 455.1,259.8 455.3,270.5 455.4,259.8 455.6,270.5 455.8,259.8 455.9,259.8 456.1,249.0 456.2,270.5 456.4,281.2 456.6,302.8 456.7,249.0 456.9,281.2 457.0,259.8 457.2,281.2 457.4,238.2 457.5,270.5 457.7,259.8 457.8,270.5 458.0,259.8 458.2,238.2 458.3,356.5 458.5,259.8 458.7,249.0 458.8,249.0 459.0,249.0 459.1,259.8 459.3,259.8 459.5,238.2 459.6,249.0 459.8,281.2 459.9,259.8 460.1,292.0 460.3,259.8 460.4,249.0 460.6,270.5 460.7,249.0 460.9,249.0 461.1,259.8 461.2,259.8 461.4,249.0 461.6,292.0 461.7,249.0 461.9,249.0 462.0,270.5 462.2,249.0 462.4,249.0 462.5,259.8 462.7,249.0 462.8,292.0 463.0,249.0 463.2,270.5 463.3,249.0 463.5,259.8 463.6,292.0 463.8,270.5 464.0,270.5 464.1,259.8 464.3,249.0 464.4,249.0 464.6,270.5 464.8,249.0 464.9,259.8 465.1,249.0 465.3,270.5 465.4,249.0 465.6,249.0 465.7,249.0 465.9,259.8 466.1,281.2 466.2,367.2 466.4,281.2 466.5,259.8 466.7,249.0 466.9,281.2 467.0,270.5 467.2,259.8 467.3,249.0 467.5,249.0 467.7,249.0 467.8,238.2 468.0,249.0 468.2,249.0 468.3,259.8 468.5,270.5 468.6,259.8 468.8,259.8 469.0,270.5 469.1,259.8 469.3,238.2 469.4,270.5 469.6,270.5 469.8,281.2 469.9,281.2 470.1,270.5 470.2,270.5 470.4,238.2 470.6,281.2 470.7,259.8 470.9,259.8 471.1,259.8 471.2,249.0 471.4,249.0 471.5,281.2 471.7,399.5 471.9,270.5 472.0,249.0 472.2,259.8 472.3,281.2 472.5,238.2 472.7,281.2 472.8,259.8 473.0,259.8 473.1,249.0 473.3,292.0 473.5,302.8 473.6,270.5 473.8,292.0 473.9,281.2 474.1,292.0 474.3,270.5 474.4,249.0 474.6,281.2 474.8,249.0 474.9,281.2 475.1,249.0 475.2,259.8 475.4,281.2 475.6,238.2 475.7,270.5 475.9,238.2 476.0,259.8 476.2,249.0 476.4,238.2 476.5,259.8 476.7,249.0 476.8,249.0 477.0,281.2 477.2,249.0 477.3,270.5 477.5,259.8 477.7,249.0 477.8,238.2 478.0,292.0 478.1,249.0 478.3,281.2 478.5,259.8 478.6,259.8 478.8,238.2 478.9,259.8 479.1,238.2 479.3,281.2 479.4,292.0 479.6,249.0 479.7,259.8 479.9,249.0 480.1,281.2 480.2,474.8 480.4,249.0 480.5,249.0 480.7,270.5 480.9,270.5 481.0,259.8 481.2,324.2 481.4,249.0 481.5,249.0 481.7,281.2 481.8,238.2 482.0,302.8 482.2,270.5 482.3,249.0 482.5,281.2 482.6,270.5 482.8,238.2 483.0,259.8 483.1,249.0 483.3,249.0 483.4,249.0 483.6,259.8 483.8,238.2 483.9,249.0 484.1,249.0 484.3,281.2 484.4,281.2 484.6,270.5 484.7,281.2 484.9,292.0 485.1,281.2 485.2,259.8 485.4,238.2 485.5,292.0 485.7,270.5 485.9,249.0 486.0,281.2 486.2,281.2 486.3,281.2 486.5,259.8 486.7,270.5 486.8,259.8 487.0,238.2 487.1,249.0 487.3,292.0 487.5,249.0 487.6,281.2 487.8,238.2 488.0,259.8 488.1,249.0 488.3,259.8 488.4,249.0 488.6,259.8 488.8,281.2 488.9,270.5 489.1,249.0 489.2,270.5 489.4,270.5 489.6,259.8 489.7,259.8 489.9,238.2 490.0,249.0 490.2,259.8 490.4,249.0 490.5,281.2 490.7,281.2 490.9,249.0 491.0,270.5 491.2,249.0 491.3,302.8 491.5,259.8 491.7,281.2 491.8,249.0 492.0,259.8 492.1,259.8 492.3,249.0 492.5,238.2 492.6,249.0 492.8,270.5 492.9,249.0 493.1,302.8 493.3,259.8 493.4,270.5 493.6,238.2 493.8,259.8 493.9,259.8 494.1,249.0 494.2,302.8 494.4,249.0 494.6,259.8 494.7,249.0 494.9,270.5 495.0,270.5 495.2,249.0 495.4,249.0 495.5,238.2 495.7,249.0 495.8,270.5 496.0,270.5 496.2,270.5 496.3,249.0 496.5,259.8 496.6,259.8 496.8,281.2 497.0,238.2 497.1,249.0 497.3,259.8 497.5,249.0 497.6,281.2 497.8,238.2 497.9,281.2 498.1,249.0 498.3,378.0 498.4,259.8 498.6,259.8 498.7,270.5 498.9,259.8 499.1,292.0 499.2,302.8 499.4,292.0 499.5,249.0 499.7,259.8 499.9,238.2 500.0,249.0 500.2,249.0 500.4,249.0 500.5,281.2 500.7,249.0 500.8,249.0 501.0,249.0 501.2,238.2 501.3,281.2 501.5,259.8 501.6,259.8 501.8,259.8 502.0,292.0 502.1,249.0 502.3,259.8 502.4,259.8 502.6,292.0 502.8,281.2 502.9,270.5 503.1,249.0 503.2,270.5 503.4,281.2 503.6,249.0 503.7,259.8 503.9,270.5 504.1,259.8 504.2,259.8 504.4,259.8 504.5,259.8 504.7,259.8 504.9,238.2 505.0,249.0 505.2,249.0 505.3,259.8 505.5,238.2 505.7,259.8 505.8,281.2 506.0,270.5 506.1,238.2 506.3,292.0 506.5,249.0 506.6,270.5 506.8,238.2 507.0,249.0 507.1,259.8 507.3,238.2 507.4,292.0 507.6,249.0 507.8,292.0 507.9,270.5 508.1,259.8 508.2,259.8 508.4,281.2 508.6,249.0 508.7,302.8 508.9,270.5 509.0,238.2 509.2,249.0 509.4,292.0 509.5,238.2 509.7,302.8 509.9,281.2 510.0,270.5 510.2,292.0 510.3,259.8 510.5,270.5 510.7,259.8 510.8,259.8 511.0,281.2 511.1,259.8 511.3,249.0 511.5,249.0 511.6,259.8 511.8,259.8 511.9,292.0 512.1,281.2 512.3,367.2 512.4,270.5 512.6,249.0 512.7,249.0 512.9,270.5 513.1,249.0 513.2,259.8 513.4,259.8 513.6,259.8 513.7,259.8 513.9,259.8 514.0,249.0 514.2,238.2 514.4,292.0 514.5,281.2 514.7,259.8 514.8,259.8 515.0,249.0 515.2,259.8 515.3,259.8 515.5,259.8 515.6,249.0 515.8,238.2 516.0,270.5 516.1,270.5 516.3,249.0 516.5,292.0 516.6,302.8 516.8,249.0 516.9,302.8 517.1,249.0 517.3,249.0 517.4,249.0 517.6,259.8 517.7,259.8 517.9,259.8 518.1,249.0 518.2,292.0 518.4,249.0 518.5,249.0 518.7,270.5 518.9,249.0 519.0,270.5 519.2,270.5 519.4,270.5 519.5,249.0 519.7,259.8 519.8,249.0 520.0,249.0 520.2,335.0 520.3,281.2 520.5,259.8 520.6,270.5 520.8,249.0 521.0,249.0 521.1,238.2 521.3,270.5 521.4,238.2 521.6,259.8 521.8,281.2 521.9,249.0 522.1,270.5 522.2,292.0 522.4,249.0 522.6,249.0 522.7,259.8 522.9,259.8 523.1,259.8 523.2,302.8 523.4,292.0 523.5,281.2 523.7,249.0 523.9,270.5 524.0,259.8 524.2,292.0 524.3,259.8 524.5,238.2 524.7,281.2 524.8,249.0 525.0,281.2 525.1,259.8 525.3,281.2 525.5,281.2 525.6,281.2 525.8,302.8 526.0,259.8 526.1,249.0 526.3,259.8 526.4,249.0 526.6,249.0 526.8,259.8 526.9,259.8 527.1,249.0 527.2,249.0 527.4,249.0 527.6,249.0 527.7,259.8 527.9,249.0 528.0,249.0 528.2,249.0 528.4,270.5 528.5,249.0 528.7,249.0 528.8,270.5 529.0,259.8 529.2,270.5 529.3,249.0 529.5,249.0 529.7,259.8 529.8,238.2 530.0,270.5 530.1,249.0 530.3,292.0 530.5,259.8 530.6,270.5 530.8,249.0 530.9,281.2 531.1,259.8 531.3,259.8 531.4,249.0 531.6,249.0 531.7,281.2 531.9,292.0 532.1,259.8 532.2,302.8 532.4,270.5 532.6,292.0 532.7,259.8 532.9,302.8 533.0,259.8 533.2,281.2 533.4,259.8 533.5,259.8 533.7,249.0 533.8,270.5 534.0,249.0 534.2,281.2 534.3,281.2 534.5,249.0 534.6,270.5 534.8,238.2 535.0,249.0 535.1,249.0 535.3,259.8 535.5,259.8 535.6,259.8 535.8,270.5 535.9,238.2 536.1,259.8 536.3,249.0 536.4,259.8 536.6,259.8 536.7,249.0 536.9,238.2 537.1,249.0 537.2,259.8 537.4,259.8 537.5,259.8 537.7,270.5 537.9,259.8 538.0,281.2 538.2,259.8 538.3,259.8 538.5,259.8 538.7,270.5 538.8,281.2 539.0,292.0 539.2,238.2 539.3,281.2 539.5,249.0 539.6,281.2 539.8,238.2 540.0,270.5 540.1,259.8 540.3,259.8 540.4,249.0 540.6,249.0 540.8,249.0 540.9,249.0 541.1,259.8 541.2,249.0 541.4,238.2 541.6,249.0 541.7,249.0 541.9,249.0 542.1,249.0 542.2,281.2 542.4,259.8 542.5,259.8 542.7,249.0 542.9,259.8 543.0,270.5 543.2,281.2 543.3,259.8 543.5,259.8 543.7,281.2 543.8,249.0 544.0,281.2 544.1,270.5 544.3,292.0 544.5,249.0 544.6,249.0 544.8,249.0 544.9,270.5 545.1,249.0 545.3,270.5 545.4,249.0 545.6,270.5 545.8,259.8 545.9,249.0 546.1,249.0 546.2,249.0 546.4,249.0 546.6,249.0 546.7,249.0 546.9,281.2 547.0,259.8 547.2,259.8 547.4,270.5 547.5,249.0 547.7,281.2 547.8,249.0 548.0,249.0 548.2,238.2 548.3,249.0 548.5,238.2 548.7,281.2 548.8,281.2 549.0,238.2 549.1,270.5 549.3,292.0 549.5,259.8 549.6,281.2 549.8,259.8 549.9,249.0 550.1,281.2 550.3,281.2 550.4,238.2 550.6,259.8 550.7,249.0 550.9,292.0 551.1,249.0 551.2,281.2 551.4,249.0 551.5,292.0 551.7,281.2 551.9,281.2 552.0,238.2 552.2,259.8 552.4,249.0 552.5,249.0 552.7,249.0 552.8,249.0 553.0,281.2 553.2,259.8 553.3,249.0 553.5,259.8 553.6,238.2 553.8,249.0 554.0,270.5 554.1,270.5 554.3,281.2 554.4,313.5 554.6,281.2 554.8,281.2 554.9,259.8 555.1,292.0 555.3,249.0 555.4,281.2 555.6,345.8 555.7,292.0 555.9,238.2 556.1,281.2 556.2,259.8 556.4,270.5 556.5,259.8 556.7,281.2 556.9,292.0 557.0,270.5 557.2,292.0 557.3,249.0 557.5,292.0 557.7,302.8 557.8,281.2 558.0,270.5 558.2,259.8 558.3,259.8 558.5,270.5 558.6,259.8 558.8,292.0 559.0,238.2 559.1,259.8 559.3,292.0 559.4,259.8 559.6,249.0 559.8,270.5 559.9,281.2 560.1,259.8 560.2,249.0 560.4,302.8 560.6,292.0 560.7,281.2 560.9,292.0 561.0,249.0 561.2,292.0 561.4,259.8 561.5,259.8 561.7,259.8 561.9,281.2 562.0,281.2 562.2,259.8 562.3,249.0 562.5,302.8 562.7,270.5 562.8,259.8 563.0,281.2 563.1,281.2 563.3,270.5 563.5,249.0 563.6,281.2 563.8,259.8 563.9,302.8 564.1,270.5 564.3,313.5 564.4,302.8 564.6,249.0 564.8,249.0 564.9,270.5 565.1,238.2 565.2,270.5 565.4,281.2 565.6,259.8 565.7,281.2 565.9,249.0 566.0,270.5 566.2,281.2 566.4,238.2 566.5,270.5 566.7,249.0 566.8,259.8 567.0,270.5 567.2,270.5 567.3,259.8 567.5,281.2 567.6,238.2 567.8,270.5 568.0,259.8 568.1,270.5 568.3,238.2 568.5,249.0 568.6,259.8 568.8,249.0 568.9,281.2 569.1,270.5 569.3,281.2 569.4,249.0 569.6,259.8 569.7,281.2 569.9,249.0 570.1,270.5 570.2,249.0 570.4,270.5 570.5,281.2 570.7,270.5 570.9,238.2 571.0,281.2 571.2,259.8 571.4,249.0 571.5,259.8 571.7,281.2 571.8,292.0 572.0,270.5 572.2,249.0 572.3,259.8 572.5,259.8 572.6,292.0 572.8,281.2 573.0,259.8 573.1,259.8 573.3,249.0 573.4,270.5 573.6,249.0 573.8,270.5 573.9,259.8 574.1,238.2 574.3,259.8 574.4,270.5 574.6,259.8 574.7,259.8 574.9,302.8 575.1,313.5 575.2,259.8 575.4,249.0 575.5,259.8 575.7,259.8 575.9,270.5 576.0,270.5 576.2,292.0 576.3,281.2 576.5,270.5 576.7,259.8 576.8,259.8 577.0,281.2 577.1,292.0 577.3,292.0 577.5,270.5 577.6,259.8 577.8,270.5 578.0,259.8 578.1,292.0 578.3,238.2 578.4,270.5 578.6,270.5 578.8,249.0 578.9,249.0 579.1,249.0 579.2,259.8 579.4,270.5 579.6,302.8 579.7,259.8 579.9,249.0 580.0,270.5 580.2,270.5 580.4,249.0 580.5,259.8 580.7,259.8 580.9,259.8 581.0,453.2 581.2,238.2 581.3,249.0 581.5,249.0 581.7,259.8 581.8,249.0 582.0,249.0 582.1,249.0 582.3,238.2 582.5,259.8 582.6,249.0 582.8,259.8 582.9,249.0 583.1,281.2 583.3,249.0 583.4,302.8 583.6,313.5 583.8,249.0 583.9,259.8 584.1,259.8 584.2,259.8 584.4,270.5 584.6,238.2 584.7,249.0 584.9,292.0 585.0,249.0 585.2,292.0 585.4,249.0 585.5,238.2 585.7,270.5 585.8,249.0 586.0,270.5 586.2,270.5 586.3,292.0 586.5,281.2 586.6,249.0 586.8,238.2 587.0,259.8 587.1,259.8 587.3,259.8 587.5,292.0 587.6,270.5 587.8,270.5 587.9,292.0 588.1,281.2 588.3,281.2 588.4,249.0 588.6,238.2 588.7,259.8 588.9,302.8 589.1,249.0 589.2,249.0 589.4,378.0 589.5,249.0 589.7,292.0 589.9,249.0 590.0,270.5 590.2,292.0 590.4,270.5 590.5,281.2 590.7,249.0 590.8,249.0 591.0,249.0 591.2,238.2 591.3,270.5 591.5,249.0 591.6,259.8 591.8,249.0 592.0,259.8 592.1,249.0 592.3,259.8 592.4,249.0 592.6,249.0 592.8,249.0 592.9,249.0 593.1,270.5 593.2,270.5 593.4,238.2 593.6,281.2 593.7,270.5 593.9,238.2 594.1,249.0 594.2,281.2 594.4,249.0 594.5,270.5 594.7,259.8 594.9,302.8 595.0,259.8 595.2,249.0 595.3,410.2 595.5,259.8 595.7,238.2 595.8,270.5 596.0,281.2 596.1,270.5 596.3,259.8 596.5,259.8 596.6,249.0 596.8,292.0 597.0,259.8 597.1,259.8 597.3,259.8 597.4,270.5 597.6,249.0 597.8,249.0 597.9,270.5 598.1,238.2 598.2,249.0 598.4,259.8 598.6,238.2 598.7,249.0 598.9,281.2 599.0,281.2 599.2,281.2 599.4,238.2 599.5,259.8 599.7,249.0 599.9,259.8 600.0,259.8 600.2,259.8 600.3,249.0 600.5,281.2 600.7,259.8 600.8,270.5 601.0,259.8 601.1,249.0 601.3,259.8 601.5,270.5 601.6,259.8 601.8,302.8 601.9,302.8 602.1,249.0 602.3,249.0 602.4,249.0 602.6,259.8 602.7,281.2 602.9,249.0 603.1,270.5 603.2,238.2 603.4,270.5 603.6,249.0 603.7,281.2 603.9,249.0 604.0,270.5 604.2,259.8 604.4,249.0 604.5,238.2 604.7,249.0 604.8,259.8 605.0,270.5 605.2,270.5 605.3,249.0 605.5,259.8 605.6,238.2 605.8,249.0 606.0,335.0 606.1,259.8 606.3,281.2 606.5,270.5 606.6,249.0 606.8,259.8 606.9,313.5 607.1,281.2 607.3,259.8 607.4,259.8 607.6,259.8 607.7,249.0 607.9,259.8 608.1,281.2 608.2,249.0 608.4,249.0 608.5,249.0 608.7,270.5 608.9,249.0 609.0,259.8 609.2,281.2 609.3,249.0 609.5,302.8 609.7,259.8 609.8,249.0 610.0,259.8 610.2,249.0 610.3,259.8 610.5,259.8 610.6,249.0 610.8,270.5 611.0,270.5 611.1,270.5 611.3,270.5 611.4,270.5 611.6,270.5 611.8,249.0 611.9,270.5 612.1,249.0 612.2,249.0 612.4,270.5 612.6,249.0 612.7,270.5 612.9,281.2 613.1,238.2 613.2,259.8 613.4,281.2 613.5,259.8 613.7,259.8 613.9,259.8 614.0,259.8 614.2,259.8 614.3,292.0 614.5,281.2 614.7,249.0 614.8,249.0 615.0,238.2 615.1,238.2 615.3,249.0 615.5,292.0 615.6,249.0 615.8,259.8 616.0,249.0 616.1,270.5 616.3,249.0 616.4,249.0 616.6,249.0 616.8,249.0 616.9,238.2 617.1,249.0 617.2,249.0 617.4,238.2 617.6,270.5 617.7,249.0 617.9,238.2 618.0,281.2 618.2,259.8 618.4,281.2 618.5,259.8 618.7,249.0 618.8,292.0 619.0,259.8 619.2,270.5 619.3,259.8 619.5,249.0 619.7,249.0 619.8,249.0 620.0,249.0 620.1,259.8 620.3,249.0 620.5,270.5 620.6,249.0 620.8,302.8 620.9,249.0 621.1,259.8 621.3,281.2 621.4,270.5 621.6,281.2 621.7,259.8 621.9,249.0 622.1,259.8 622.2,259.8 622.4,238.2 622.6,249.0 622.7,281.2 622.9,281.2 623.0,270.5 623.2,249.0 623.4,270.5 623.5,249.0 623.7,249.0 623.8,249.0 624.0,249.0 624.2,238.2 624.3,292.0 624.5,281.2 624.6,249.0 624.8,259.8 625.0,292.0 625.1,249.0 625.3,259.8 625.4,249.0 625.6,249.0 625.8,249.0 625.9,281.2 626.1,249.0 626.3,238.2 626.4,281.2 626.6,378.0 626.7,259.8 626.9,270.5 627.1,249.0 627.2,281.2 627.4,249.0 627.5,249.0 627.7,238.2 627.9,281.2 628.0,249.0 628.2,292.0 628.3,259.8 628.5,281.2 628.7,249.0 628.8,292.0 629.0,270.5 629.2,281.2 629.3,249.0 629.5,270.5 629.6,281.2 629.8,249.0 630.0,270.5 630.1,249.0 630.3,249.0 630.4,238.2 630.6,259.8 630.8,249.0 630.9,238.2 631.1,259.8 631.2,281.2 631.4,249.0 631.6,259.8 631.7,249.0 631.9,259.8 632.0,249.0 632.2,249.0 632.4,238.2 632.5,259.8 632.7,249.0 632.9,259.8 633.0,249.0 633.2,281.2 633.3,238.2 633.5,249.0 633.7,259.8 633.8,249.0 634.0,249.0 634.1,259.8 634.3,270.5 634.5,270.5 634.6,249.0 634.8,270.5 634.9,238.2 635.1,302.8 635.3,292.0 635.4,292.0 635.6,249.0 635.8,259.8 635.9,302.8 636.1,238.2 636.2,302.8 636.4,292.0 636.6,281.2 636.7,249.0 636.9,270.5 637.0,259.8 637.2,249.0 637.4,249.0 637.5,270.5 637.7,259.8 637.8,249.0 638.0,259.8 638.2,302.8 638.3,249.0 638.5,249.0 638.7,270.5 638.8,270.5 639.0,270.5 639.1,270.5 639.3,249.0 639.5,259.8 639.6,259.8 639.8,259.8 639.9,249.0 640.1,281.2 640.3,249.0 640.4,249.0 640.6,259.8 640.7,270.5 640.9,249.0 641.1,259.8 641.2,249.0 641.4,259.8 641.5,249.0 641.7,238.2 641.9,249.0 642.0,249.0 642.2,249.0 642.4,249.0 642.5,238.2 642.7,259.8 642.8,259.8 643.0,259.8 643.2,259.8 643.3,249.0 643.5,259.8 643.6,259.8 643.8,270.5 644.0,249.0 644.1,249.0 644.3,249.0 644.4,249.0 644.6,259.8 644.8,259.8 644.9,281.2 645.1,270.5 645.3,249.0 645.4,259.8 645.6,249.0 645.7,249.0 645.9,259.8 646.1,292.0 646.2,238.2 646.4,259.8 646.5,249.0 646.7,302.8 646.9,259.8 647.0,238.2 647.2,259.8 647.3,249.0 647.5,249.0 647.7,281.2 647.8,259.8 648.0,281.2 648.1,270.5 648.3,302.8 648.5,259.8 648.6,270.5 648.8,238.2 649.0,270.5 649.1,259.8 649.3,270.5 649.4,238.2 649.6,270.5 649.8,249.0 649.9,249.0 650.1,292.0 650.2,249.0 650.4,292.0 650.6,259.8 650.7,249.0 650.9,270.5 651.0,259.8 651.2,238.2 651.4,281.2 651.5,292.0 651.7,281.2 651.9,270.5 652.0,259.8 652.2,281.2 652.3,270.5 652.5,238.2 652.7,292.0 652.8,249.0 653.0,259.8 653.1,259.8 653.3,259.8 653.5,249.0 653.6,281.2 653.8,249.0 653.9,259.8 654.1,249.0 654.3,281.2 654.4,292.0 654.6,270.5 654.8,281.2 654.9,281.2 655.1,270.5 655.2,270.5 655.4,281.2 655.6,249.0 655.7,270.5 655.9,249.0 656.0,259.8 656.2,249.0 656.4,281.2 656.5,270.5 656.7,281.2 656.8,281.2 657.0,249.0 657.2,249.0 657.3,238.2 657.5,270.5 657.6,259.8 657.8,270.5 658.0,249.0 658.1,292.0 658.3,313.5 658.5,302.8 658.6,281.2 658.8,292.0 658.9,249.0 659.1,270.5 659.3,302.8 659.4,270.5 659.6,270.5 659.7,249.0 659.9,259.8 660.1,259.8 660.2,249.0 660.4,238.2 660.5,281.2 660.7,281.2 660.9,249.0 661.0,259.8 661.2,259.8 661.4,270.5 661.5,259.8 661.7,259.8 661.8,270.5 662.0,249.0 662.2,259.8 662.3,281.2 662.5,281.2 662.6,270.5 662.8,249.0 663.0,281.2 663.1,345.8 663.3,281.2 663.4,281.2 663.6,249.0 663.8,259.8 663.9,259.8 664.1,281.2 664.2,259.8 664.4,238.2 664.6,259.8 664.7,238.2 664.9,249.0 665.1,259.8 665.2,249.0 665.4,238.2 665.5,249.0 665.7,249.0 665.9,249.0 666.0,259.8 666.2,238.2 666.3,238.2 666.5,249.0 666.7,270.5 666.8,270.5 667.0,281.2 667.1,238.2 667.3,281.2 667.5,270.5 667.6,281.2 667.8,281.2 668.0,249.0 668.1,259.8 668.3,259.8 668.4,238.2 668.6,259.8 668.8,249.0 668.9,270.5 669.1,259.8 669.2,292.0 669.4,238.2 669.6,259.8 669.7,270.5 669.9,259.8 670.0,249.0 670.2,259.8 670.4,259.8 670.5,259.8 670.7,249.0 670.9,259.8 671.0,302.8 671.2,249.0 671.3,270.5 671.5,238.2 671.7,270.5 671.8,249.0 672.0,259.8 672.1,259.8 672.3,249.0 672.5,249.0 672.6,270.5 672.8,259.8 672.9,281.2 673.1,259.8 673.3,292.0 673.4,259.8 673.6,270.5 673.7,259.8 673.9,249.0 674.1,249.0 674.2,238.2 674.4,249.0 674.6,281.2 674.7,249.0 674.9,292.0 675.0,249.0 675.2,270.5 675.4,249.0 675.5,249.0 675.7,249.0 675.8,249.0 676.0,249.0 676.2,292.0 676.3,238.2 676.5,335.0 676.6,238.2 676.8,292.0 677.0,249.0 677.1,259.8 677.3,313.5 677.5,249.0 677.6,249.0 677.8,249.0 677.9,270.5 678.1,249.0 678.3,302.8 678.4,249.0 678.6,249.0 678.7,281.2 678.9,270.5 679.1,249.0 679.2,270.5 679.4,249.0 679.5,302.8 679.7,259.8 679.9,292.0 680.0,259.8 680.2,259.8 680.4,270.5 680.5,259.8 680.7,238.2 680.8,259.8 681.0,249.0 681.2,259.8 681.3,270.5 681.5,259.8 681.6,281.2 681.8,249.0 682.0,238.2 682.1,238.2 682.3,238.2 682.4,249.0 682.6,249.0 682.8,249.0 682.9,270.5 683.1,281.2 683.2,270.5 683.4,281.2 683.6,281.2 683.7,270.5 683.9,259.8 684.1,259.8 684.2,249.0 684.4,238.2 684.5,281.2 684.7,249.0 684.9,313.5 685.0,259.8 685.2,238.2 685.3,270.5 685.5,270.5 685.7,302.8 685.8,259.8 686.0,281.2 686.1,259.8 686.3,249.0 686.5,259.8 686.6,270.5 686.8,292.0 687.0,270.5 687.1,292.0 687.3,259.8 687.4,259.8 687.6,259.8 687.8,270.5 687.9,249.0 688.1,238.2 688.2,259.8 688.4,281.2 688.6,281.2 688.7,270.5 688.9,292.0 689.0,270.5 689.2,292.0 689.4,270.5 689.5,259.8 689.7,270.5 689.8,313.5 690.0,238.2 690.2,249.0 690.3,292.0 690.5,259.8 690.7,249.0 690.8,270.5 691.0,249.0 691.1,259.8 691.3,249.0 691.5,249.0 691.6,249.0 691.8,249.0 691.9,249.0 692.1,249.0 692.3,270.5 692.4,249.0 692.6,292.0 692.7,302.8 692.9,292.0 693.1,270.5 693.2,281.2 693.4,249.0 693.6,281.2 693.7,259.8 693.9,259.8 694.0,259.8 694.2,249.0 694.4,259.8 694.5,249.0 694.7,270.5 694.8,259.8 695.0,249.0 695.2,281.2 695.3,259.8 695.5,292.0 695.6,292.0 695.8,270.5 696.0,259.8 696.1,249.0 696.3,238.2 696.5,270.5 696.6,249.0 696.8,259.8 696.9,270.5 697.1,270.5 697.3,292.0 697.4,249.0 697.6,292.0 697.7,249.0 697.9,270.5 698.1,259.8 698.2,292.0 698.4,281.2 698.5,259.8 698.7,249.0 698.9,292.0 699.0,367.2 699.2,249.0 699.3,259.8 699.5,249.0 699.7,259.8 699.8,249.0 700.0,259.8 700.2,292.0 700.3,281.2 700.5,281.2 700.6,270.5 700.8,270.5 701.0,259.8 701.1,292.0 701.3,249.0 701.4,249.0 701.6,249.0 701.8,259.8 701.9,238.2 702.1,292.0 702.2,249.0 702.4,270.5 702.6,259.8 702.7,281.2 702.9,270.5 703.1,270.5 703.2,259.8 703.4,259.8 703.5,249.0 703.7,259.8 703.9,249.0 704.0,292.0 704.2,281.2 704.3,249.0 704.5,238.2 704.7,259.8 704.8,259.8 705.0,259.8 705.1,249.0 705.3,259.8 705.5,249.0 705.6,249.0 705.8,238.2 705.9,259.8 706.1,238.2 706.3,270.5 706.4,259.8 706.6,249.0 706.8,259.8 706.9,281.2 707.1,249.0 707.2,249.0 707.4,270.5 707.6,281.2 707.7,249.0 707.9,249.0 708.0,356.5 708.2,238.2 708.4,249.0 708.5,259.8 708.7,259.8 708.8,259.8 709.0,281.2 709.2,281.2 709.3,259.8 709.5,249.0 709.7,281.2 709.8,249.0 710.0,270.5 710.1,302.8 710.3,281.2 710.5,367.2 710.6,249.0 710.8,270.5 710.9,259.8 711.1,249.0 711.3,249.0 711.4,249.0 711.6,249.0 711.7,249.0 711.9,270.5 712.1,281.2 712.2,270.5 712.4,259.8 712.5,292.0 712.7,238.2 712.9,249.0 713.0,281.2 713.2,270.5 713.4,292.0 713.5,302.8 713.7,270.5 713.8,292.0 714.0,238.2 714.2,281.2 714.3,281.2 714.5,281.2 714.6,270.5 714.8,259.8 715.0,259.8 715.1,238.2 715.3,259.8 715.4,292.0 715.6,270.5 715.8,281.2 715.9,238.2 716.1,249.0 716.3,249.0 716.4,270.5 716.6,249.0 716.7,270.5 716.9,259.8 717.1,292.0 717.2,249.0 717.4,249.0 717.5,238.2 717.7,259.8 717.9,270.5 718.0,259.8 718.2,259.8 718.3,270.5 718.5,302.8 718.7,249.0 718.8,302.8 719.0,313.5 719.2,249.0 719.3,249.0 719.5,270.5 719.6,270.5 719.8,313.5 720.0,249.0 720.1,281.2 720.3,270.5 720.4,259.8 720.6,249.0 720.8,292.0 720.9,270.5 721.1,249.0 721.2,270.5 721.4,259.8 721.6,249.0 721.7,292.0 721.9,270.5 722.0,259.8 722.2,249.0 722.4,292.0 722.5,302.8 722.7,249.0 722.9,249.0 723.0,259.8 723.2,281.2 723.3,292.0 723.5,249.0 723.7,270.5 723.8,238.2 724.0,281.2 724.1,292.0 724.3,249.0 724.5,259.8 724.6,249.0 724.8,249.0 724.9,302.8 725.1,259.8 725.3,238.2 725.4,249.0 725.6,281.2 725.8,281.2 725.9,238.2 726.1,292.0 726.2,270.5 726.4,345.8 726.6,281.2 726.7,281.2 726.9,249.0 727.0,270.5 727.2,259.8 727.4,238.2 727.5,270.5 727.7,249.0 727.8,302.8 728.0,249.0 728.2,259.8 728.3,259.8 728.5,281.2 728.6,249.0 728.8,259.8 729.0,507.0 729.1,281.2 729.3,249.0 729.5,238.2 729.6,238.2 729.8,259.8 729.9,249.0 730.1,259.8 730.3,249.0 730.4,249.0 730.6,270.5 730.7,313.5 730.9,238.2 731.1,270.5 731.2,259.8 731.4,378.0 731.5,281.2 731.7,249.0 731.9,249.0 732.0,281.2 732.2,259.8 732.4,313.5 732.5,270.5 732.7,270.5 732.8,281.2 733.0,249.0 733.2,270.5 733.3,249.0 733.5,249.0 733.6,259.8 733.8,249.0 734.0,249.0 734.1,270.5 734.3,270.5 734.4,249.0 734.6,259.8 734.8,292.0 734.9,249.0 735.1,259.8 735.3,270.5 735.4,249.0 735.6,259.8 735.7,249.0 735.9,270.5 736.1,249.0 736.2,281.2 736.4,249.0 736.5,281.2 736.7,249.0 736.9,259.8 737.0,249.0 737.2,249.0 737.3,259.8 737.5,313.5 737.7,259.8 737.8,281.2 738.0,281.2 738.1,249.0 738.3,249.0 738.5,302.8 738.6,259.8 738.8,259.8 739.0,249.0 739.1,259.8 739.3,238.2 739.4,249.0 739.6,249.0 739.8,249.0 739.9,249.0 740.1,281.2 740.2,270.5 740.4,270.5 740.6,259.8 740.7,281.2 740.9,249.0 741.0,259.8 741.2,249.0 741.4,270.5 741.5,249.0 741.7,249.0 741.9,259.8 742.0,259.8 742.2,259.8 742.3,259.8 742.5,249.0 742.7,259.8 742.8,249.0 743.0,270.5 743.1,249.0 743.3,249.0 743.5,249.0 743.6,249.0 743.8,270.5 743.9,259.8 744.1,259.8 744.3,249.0 744.4,249.0 744.6,281.2 744.8,249.0 744.9,249.0 745.1,259.8 745.2,249.0 745.4,249.0 745.6,259.8 745.7,270.5 745.9,238.2 746.0,259.8 746.2,249.0 746.4,259.8 746.5,259.8 746.7,259.8 746.8,259.8 747.0,259.8 747.2,270.5 747.3,345.8 747.5,259.8 747.6,249.0 747.8,249.0 748.0,238.2 748.1,270.5 748.3,249.0 748.5,281.2 748.6,249.0 748.8,281.2 748.9,259.8 749.1,259.8 749.3,281.2 749.4,238.2 749.6,259.8 749.7,238.2 749.9,249.0 750.1,281.2 750.2,259.8 750.4,270.5 750.5,281.2 750.7,249.0 750.9,249.0 751.0,249.0 751.2,238.2 751.4,259.8 751.5,259.8 751.7,238.2 751.8,259.8 752.0,281.2 752.2,259.8 752.3,249.0 752.5,270.5 752.6,259.8 752.8,249.0 753.0,259.8 753.1,249.0 753.3,259.8 753.4,259.8 753.6,249.0 753.8,270.5 753.9,259.8 754.1,292.0 754.2,249.0 754.4,238.2 754.6,270.5 754.7,249.0 754.9,259.8 755.1,249.0 755.2,249.0 755.4,367.2 755.5,259.8 755.7,281.2 755.9,249.0 756.0,249.0 756.2,259.8 756.3,292.0 756.5,259.8 756.7,238.2 756.8,259.8 757.0,259.8 757.1,281.2 757.3,259.8 757.5,238.2 757.6,270.5 757.8,249.0 758.0,249.0 758.1,238.2 758.3,259.8 758.4,249.0 758.6,270.5 758.8,249.0 758.9,292.0 759.1,281.2 759.2,259.8 759.4,249.0 759.6,249.0 759.7,259.8 759.9,249.0 760.0,249.0 760.2,238.2 760.4,249.0 760.5,249.0 760.7,281.2 760.9,259.8 761.0,249.0 761.2,249.0 761.3,249.0 761.5,249.0 761.7,238.2 761.8,281.2 762.0,249.0 762.1,281.2 762.3,281.2 762.5,270.5 762.6,249.0 762.8,292.0 762.9,259.8 763.1,302.8 763.3,249.0 763.4,259.8 763.6,259.8 763.7,249.0 763.9,259.8 764.1,259.8 764.2,302.8 764.4,292.0 764.6,238.2 764.7,259.8 764.9,249.0 765.0,270.5 765.2,249.0 765.4,249.0 765.5,259.8 765.7,281.2 765.8,281.2 766.0,281.2 766.2,238.2 766.3,249.0 766.5,270.5 766.6,249.0 766.8,281.2 767.0,249.0 767.1,281.2 767.3,238.2 767.5,292.0 767.6,249.0 767.8,249.0 767.9,249.0 768.1,249.0 768.3,259.8 768.4,259.8 768.6,270.5 768.7,281.2 768.9,292.0 769.1,259.8 769.2,249.0 769.4,249.0 769.5,345.8 769.7,249.0 769.9,270.5 770.0,238.2 770.2,249.0 770.3,249.0 770.5,249.0 770.7,249.0 770.8,249.0 771.0,249.0 771.2,249.0 771.3,238.2 771.5,302.8 771.6,259.8 771.8,281.2 772.0,249.0 772.1,292.0 772.3,270.5 772.4,249.0 772.6,249.0 772.8,270.5 772.9,238.2 773.1,259.8 773.2,270.5 773.4,270.5 773.6,270.5 773.7,259.8 773.9,238.2 774.1,259.8 774.2,249.0 774.4,270.5 774.5,270.5 774.7,302.8 774.9,259.8 775.0,259.8 775.2,249.0 775.3,270.5 775.5,259.8 775.7,249.0 775.8,259.8 776.0,259.8 776.1,281.2 776.3,249.0 776.5,259.8 776.6,259.8 776.8,249.0 777.0,249.0 777.1,249.0 777.3,259.8 777.4,259.8 777.6,270.5 777.8,270.5 777.9,238.2 778.1,270.5 778.2,249.0 778.4,259.8 778.6,345.8 778.7,259.8 778.9,259.8 779.0,238.2 779.2,281.2 779.4,238.2 779.5,259.8 779.7,249.0 779.8,259.8 780.0,249.0 780.2,259.8 780.3,270.5 780.5,259.8 780.7,292.0 780.8,249.0 781.0,259.8 781.1,249.0 781.3,302.8 781.5,238.2 781.6,281.2 781.8,238.2 781.9,270.5 782.1,238.2 782.3,259.8 782.4,249.0 782.6,270.5 782.7,249.0 782.9,238.2 783.1,302.8 783.2,259.8 783.4,302.8 783.6,270.5 783.7,249.0 783.9,249.0 784.0,292.0 784.2,270.5 784.4,249.0 784.5,302.8 784.7,238.2 784.8,281.2 785.0,281.2 785.2,249.0 785.3,249.0 785.5,249.0 785.6,259.8 785.8,259.8 786.0,249.0 786.1,238.2 786.3,259.8 786.4,249.0 786.6,249.0 786.8,249.0 786.9,249.0 787.1,270.5 787.3,249.0 787.4,281.2 787.6,238.2 787.7,270.5 787.9,292.0 788.1,281.2 788.2,270.5 788.4,259.8 788.5,259.8 788.7,270.5 788.9,249.0 789.0,259.8 789.2,281.2 789.3,249.0 789.5,259.8 789.7,378.0 789.8,292.0 790.0,249.0 790.2,249.0 790.3,249.0 790.5,281.2 790.6,249.0 790.8,270.5 791.0,270.5 791.1,292.0 791.3,259.8 791.4,249.0 791.6,249.0 791.8,249.0 791.9,249.0 792.1,259.8 792.2,281.2 792.4,259.8 792.6,249.0 792.7,292.0 792.9,270.5 793.0,259.8 793.2,249.0 793.4,270.5 793.5,259.8 793.7,270.5 793.9,259.8 794.0,270.5 794.2,238.2 794.3,259.8 794.5,259.8 794.7,281.2 794.8,249.0 795.0,259.8 795.1,249.0 795.3,292.0 795.5,249.0 795.6,249.0 795.8,270.5 795.9,270.5 796.1,249.0 796.3,249.0 796.4,259.8 796.6,249.0 796.8,249.0 796.9,281.2 797.1,249.0 797.2,270.5 797.4,270.5 797.6,270.5 797.7,249.0 797.9,249.0 798.0,259.8 798.2,281.2 798.4,249.0 798.5,249.0 798.7,259.8 798.8,249.0 799.0,249.0 799.2,259.8 799.3,249.0 799.5,249.0 799.7,259.8 799.8,249.0 800.0,249.0 800.1,281.2 800.3,259.8 800.5,259.8 800.6,259.8 800.8,249.0 800.9,249.0 801.1,249.0 801.3,249.0 801.4,259.8 801.6,249.0 801.7,249.0 801.9,249.0 802.1,259.8 802.2,249.0 802.4,238.2 802.5,249.0 802.7,281.2 802.9,270.5 803.0,259.8 803.2,249.0 803.4,259.8 803.5,238.2 803.7,249.0 803.8,259.8 804.0,249.0 804.2,259.8 804.3,259.8 804.5,238.2 804.6,249.0 804.8,259.8 805.0,292.0 805.1,238.2 805.3,259.8 805.4,249.0 805.6,249.0 805.8,270.5 805.9,259.8 806.1,249.0 806.3,249.0 806.4,281.2 806.6,281.2 806.7,249.0 806.9,259.8 807.1,249.0 807.2,249.0 807.4,270.5 807.5,249.0 807.7,249.0 807.9,249.0 808.0,281.2 808.2,281.2 808.3,259.8 808.5,259.8 808.7,259.8 808.8,249.0 809.0,270.5 809.1,259.8 809.3,292.0 809.5,270.5 809.6,270.5 809.8,270.5 810.0,292.0 810.1,281.2 810.3,292.0 810.4,249.0 810.6,249.0 810.8,249.0 810.9,270.5 811.1,259.8 811.2,238.2 811.4,259.8 811.6,270.5 811.7,324.2 811.9,281.2 812.0,270.5 812.2,249.0 812.4,259.8 812.5,259.8 812.7,259.8 812.9,249.0 813.0,238.2 813.2,281.2 813.3,281.2 813.5,270.5 813.7,249.0 813.8,249.0 814.0,302.8 814.1,270.5 814.3,270.5 814.5,238.2 814.6,249.0 814.8,292.0 814.9,270.5 815.1,259.8 815.3,270.5 815.4,249.0 815.6,302.8 815.8,259.8 815.9,259.8 816.1,249.0 816.2,259.8 816.4,259.8 816.6,259.8 816.7,249.0 816.9,259.8 817.0,249.0 817.2,270.5 817.4,249.0 817.5,324.2 817.7,249.0 817.8,259.8 818.0,249.0 818.2,259.8 818.3,249.0 818.5,249.0 818.6,259.8 818.8,281.2 819.0,281.2 819.1,259.8 819.3,249.0 819.5,249.0 819.6,259.8 819.8,259.8 819.9,249.0 820.1,259.8 820.3,249.0 820.4,259.8 820.6,249.0 820.7,249.0 820.9,292.0 821.1,259.8 821.2,270.5 821.4,238.2 821.5,281.2 821.7,238.2 821.9,259.8 822.0,259.8 822.2,249.0 822.4,249.0 822.5,249.0 822.7,259.8 822.8,249.0 823.0,238.2 823.2,270.5 823.3,249.0 823.5,259.8 823.6,270.5 823.8,281.2 824.0,249.0 824.1,292.0 824.3,259.8 824.4,259.8 824.6,249.0 824.8,249.0 824.9,259.8 825.1,270.5 825.2,249.0 825.4,292.0 825.6,270.5 825.7,238.2 825.9,270.5 826.1,249.0 826.2,249.0 826.4,259.8 826.5,281.2 826.7,249.0 826.9,249.0 827.0,238.2 827.2,249.0 827.3,259.8 827.5,259.8 827.7,259.8 827.8,238.2 828.0,259.8 828.1,259.8 828.3,281.2 828.5,249.0 828.6,270.5 828.8,259.8 829.0,270.5 829.1,259.8 829.3,270.5 829.4,302.8 829.6,249.0 829.8,259.8 829.9,281.2 830.1,259.8 830.2,302.8 830.4,259.8 830.6,281.2 830.7,249.0 830.9,270.5 831.0,259.8 831.2,249.0 831.4,302.8 831.5,238.2 831.7,249.0 831.9,281.2 832.0,259.8 832.2,259.8 832.3,249.0 832.5,249.0 832.7,249.0 832.8,259.8 833.0,238.2 833.1,249.0 833.3,259.8 833.5,270.5 833.6,302.8 833.8,270.5 833.9,249.0 834.1,249.0 834.3,270.5 834.4,292.0 834.6,249.0 834.7,259.8 834.9,292.0 835.1,270.5 835.2,281.2 835.4,259.8 835.6,249.0 835.7,259.8 835.9,249.0 836.0,249.0 836.2,249.0 836.4,249.0 836.5,249.0 836.7,249.0 836.8,259.8 837.0,259.8 837.2,238.2 837.3,302.8 837.5,270.5 837.6,270.5 837.8,249.0 838.0,281.2 838.1,259.8 838.3,270.5 838.5,281.2 838.6,238.2 838.8,281.2 838.9,281.2 839.1,259.8 839.3,249.0 839.4,259.8 839.6,249.0 839.7,270.5 839.9,259.8 840.1,259.8 840.2,302.8 840.4,249.0 840.5,238.2 840.7,249.0 840.9,249.0 841.0,292.0 841.2,249.0 841.4,259.8 841.5,270.5 841.7,249.0 841.8,270.5 842.0,270.5 842.2,259.8 842.3,259.8 842.5,270.5 842.6,270.5 842.8,281.2 843.0,259.8 843.1,238.2 843.3,270.5 843.4,292.0 843.6,281.2 843.8,259.8 843.9,270.5 844.1,292.0 844.2,259.8 844.4,249.0 844.6,238.2 844.7,270.5 844.9,249.0 845.1,281.2 845.2,249.0 845.4,249.0 845.5,292.0 845.7,259.8 845.9,270.5 846.0,270.5 846.2,292.0 846.3,249.0 846.5,238.2 846.7,238.2 846.8,292.0 847.0,259.8 847.1,270.5 847.3,270.5 847.5,270.5 847.6,281.2 847.8,259.8 848.0,249.0 848.1,259.8 848.3,259.8 848.4,249.0 848.6,292.0 848.8,292.0 848.9,281.2 849.1,249.0 849.2,249.0 849.4,270.5 849.6,270.5 849.7,270.5 849.9,292.0 850.0,249.0 850.2,238.2 850.4,259.8 850.5,249.0 850.7,249.0 850.8,270.5 851.0,259.8 851.2,281.2 851.3,281.2 851.5,259.8 851.7,281.2 851.8,270.5 852.0,259.8 852.1,281.2 852.3,259.8 852.5,259.8 852.6,281.2 852.8,259.8 852.9,249.0 853.1,259.8 853.3,259.8 853.4,249.0 853.6,270.5 853.7,259.8 853.9,281.2 854.1,292.0 854.2,249.0 854.4,249.0 854.6,302.8 854.7,249.0 854.9,281.2 855.0,259.8 855.2,270.5 855.4,249.0 855.5,259.8 855.7,259.8 855.8,259.8 856.0,270.5 856.2,249.0 856.3,249.0 856.5,270.5 856.6,249.0 856.8,259.8 857.0,281.2 857.1,270.5 857.3,259.8 857.5,238.2 857.6,270.5 857.8,249.0 857.9,249.0 858.1,238.2 858.3,249.0 858.4,238.2 858.6,259.8 858.7,249.0 858.9,249.0 859.1,281.2 859.2,238.2 859.4,249.0 859.5,270.5 859.7,281.2 859.9,292.0 860.0,259.8 860.2,249.0 860.3,345.8 860.5,292.0 860.7,270.5 860.8,281.2 861.0,292.0 861.2,259.8 861.3,270.5 861.5,302.8 861.6,249.0 861.8,249.0 862.0,281.2 862.1,249.0 862.3,259.8 862.4,259.8 862.6,270.5 862.8,238.2 862.9,259.8 863.1,259.8 863.2,249.0 863.4,259.8 863.6,281.2 863.7,238.2 863.9,249.0 864.1,259.8 864.2,259.8 864.4,302.8 864.5,249.0 864.7,249.0 864.9,249.0 865.0,292.0 865.2,259.8 865.3,324.2 865.5,281.2" fill="none" stroke="#38bbed" stroke-width="1.3" stroke-linejoin="round"/>
<path d="M60.7,507.0h0M60.8,345.8h0M61.0,259.8h0M61.1,324.2h0M61.3,345.8h0M61.5,249.0h0M61.6,292.0h0M61.8,281.2h0M61.9,259.8h0M62.1,345.8h0M62.3,399.5h0M62.4,249.0h0M62.6,345.8h0M62.8,259.8h0M62.9,259.8h0M63.1,367.2h0M63.2,259.8h0M63.4,238.2h0M63.6,259.8h0M63.7,259.8h0M63.9,259.8h0M64.0,302.8h0M64.2,281.2h0M64.4,345.8h0M64.5,259.8h0M64.7,292.0h0M64.8,335.0h0M65.0,335.0h0M65.2,302.8h0M65.3,711.2h0M65.5,345.8h0M65.7,345.8h0M65.8,335.0h0M66.0,281.2h0M66.1,249.0h0M66.3,302.8h0M66.5,249.0h0M66.6,292.0h0M66.8,410.2h0M66.9,668.2h0M67.1,249.0h0M67.3,356.5h0M67.4,324.2h0M67.6,249.0h0M67.7,270.5h0M67.9,367.2h0M68.1,259.8h0M68.2,431.8h0M68.4,259.8h0M68.5,356.5h0M68.7,335.0h0M68.9,259.8h0M69.0,378.0h0M69.2,388.8h0M69.4,410.2h0M69.5,324.2h0M69.7,410.2h0M69.8,270.5h0M70.0,517.8h0M70.2,292.0h0M70.3,259.8h0M70.5,238.2h0M70.6,388.8h0M70.8,388.8h0M71.0,367.2h0M71.1,367.2h0M71.3,259.8h0M71.4,335.0h0M71.6,259.8h0M71.8,259.8h0M71.9,657.5h0M72.1,356.5h0M72.3,335.0h0M72.4,302.8h0M72.6,281.2h0M72.7,603.8h0M72.9,410.2h0M73.1,399.5h0M73.2,292.0h0M73.4,345.8h0M73.5,378.0h0M73.7,431.8h0M73.9,335.0h0M74.0,367.2h0M74.2,410.2h0M74.3,281.2h0M74.5,324.2h0M74.7,356.5h0M74.8,335.0h0M75.0,410.2h0M75.2,378.0h0M75.3,313.5h0M75.5,399.5h0M75.6,249.0h0M75.8,324.2h0M76.0,324.2h0M76.1,270.5h0M76.3,335.0h0M76.4,378.0h0M76.6,378.0h0M76.8,367.2h0M76.9,485.5h0M77.1,313.5h0M77.2,625.2h0M77.4,399.5h0M77.6,259.8h0M77.7,249.0h0M77.9,378.0h0M78.0,259.8h0M78.2,388.8h0M78.4,259.8h0M78.5,324.2h0M78.7,238.2h0M78.9,431.8h0M79.0,356.5h0M79.2,313.5h0M79.3,238.2h0M79.5,249.0h0M79.7,249.0h0M79.8,324.2h0M80.0,378.0h0M80.1,335.0h0M80.3,378.0h0M80.5,431.8h0M80.6,259.8h0M80.8,259.8h0M80.9,345.8h0M81.1,324.2h0M81.3,335.0h0M81.4,302.8h0M81.6,367.2h0M81.8,345.8h0M81.9,259.8h0M82.1,367.2h0M82.2,410.2h0M82.4,335.0h0M82.6,324.2h0M82.7,259.8h0M82.9,324.2h0M83.0,259.8h0M83.2,378.0h0M83.4,388.8h0M83.5,345.8h0M83.7,292.0h0M83.8,388.8h0M84.0,324.2h0M84.2,324.2h0M84.3,657.5h0M84.5,388.8h0M84.7,259.8h0M84.8,259.8h0M85.0,335.0h0M85.1,302.8h0M85.3,378.0h0M85.5,378.0h0M85.6,345.8h0M85.8,249.0h0M85.9,345.8h0M86.1,367.2h0M86.3,292.0h0M86.4,324.2h0M86.6,259.8h0M86.7,367.2h0M86.9,345.8h0M87.1,281.2h0M87.2,259.8h0M87.4,421.0h0M87.5,292.0h0M87.7,345.8h0M87.9,259.8h0M88.0,399.5h0M88.2,259.8h0M88.4,571.5h0M88.5,281.2h0M88.7,517.8h0M88.8,378.0h0M89.0,378.0h0M89.2,281.2h0M89.3,259.8h0M89.5,345.8h0M89.6,302.8h0M89.8,367.2h0M90.0,259.8h0M90.1,335.0h0M90.3,689.8h0M90.4,367.2h0M90.6,259.8h0M90.8,657.5h0M90.9,410.2h0M91.1,356.5h0M91.3,442.5h0M91.4,421.0h0M91.6,421.0h0M91.7,539.2h0M91.9,388.8h0M92.1,356.5h0M92.2,431.8h0M92.4,281.2h0M92.5,399.5h0M92.7,421.0h0M92.9,388.8h0M93.0,442.5h0M93.2,410.2h0M93.3,378.0h0M93.5,442.5h0M93.7,345.8h0M93.8,345.8h0M94.0,399.5h0M94.1,378.0h0M94.3,442.5h0M94.5,324.2h0M94.6,367.2h0M94.8,388.8h0M95.0,259.8h0M95.1,399.5h0M95.3,399.5h0M95.4,292.0h0M95.6,259.8h0M95.8,259.8h0M95.9,345.8h0M96.1,345.8h0M96.2,281.2h0M96.4,313.5h0M96.6,335.0h0M96.7,345.8h0M96.9,324.2h0M97.0,292.0h0M97.2,324.2h0M97.4,356.5h0M97.5,324.2h0M97.7,345.8h0M97.9,324.2h0M98.0,324.2h0M98.2,345.8h0M98.3,259.8h0M98.5,238.2h0M98.7,259.8h0M98.8,367.2h0M99.0,281.2h0M99.1,421.0h0M99.3,378.0h0M99.5,259.8h0M99.6,313.5h0M99.8,281.2h0M99.9,324.2h0M100.1,259.8h0M100.3,593.0h0M100.4,238.2h0M100.6,259.8h0M100.8,259.8h0M100.9,259.8h0M101.1,259.8h0M101.2,335.0h0M101.4,313.5h0M101.6,324.2h0M101.7,335.0h0M101.9,388.8h0M102.0,657.5h0M102.2,324.2h0M102.4,292.0h0M102.5,313.5h0M102.7,313.5h0M102.8,410.2h0M103.0,453.2h0M103.2,410.2h0M103.3,668.2h0M103.5,259.8h0M103.6,292.0h0M103.8,367.2h0M104.0,238.2h0M104.1,378.0h0M104.3,388.8h0M104.5,345.8h0M104.6,259.8h0M104.8,378.0h0M104.9,399.5h0M105.1,259.8h0M105.3,571.5h0M105.4,356.5h0M105.6,388.8h0M105.7,335.0h0M105.9,292.0h0M106.1,259.8h0M106.2,259.8h0M106.4,367.2h0M106.5,259.8h0M106.7,356.5h0M106.9,281.2h0M107.0,270.5h0M107.2,356.5h0M107.4,238.2h0M107.5,399.5h0M107.7,442.5h0M107.8,367.2h0M108.0,453.2h0M108.2,345.8h0M108.3,410.2h0M108.5,313.5h0M108.6,259.8h0M108.8,356.5h0M109.0,259.8h0M109.1,388.8h0M109.3,485.5h0M109.4,367.2h0M109.6,313.5h0M109.8,356.5h0M109.9,367.2h0M110.1,324.2h0M110.2,550.0h0M110.4,281.2h0M110.6,259.8h0M110.7,302.8h0M110.9,345.8h0M111.1,388.8h0M111.2,259.8h0M111.4,378.0h0M111.5,302.8h0M111.7,356.5h0M111.9,259.8h0M112.0,259.8h0M112.2,259.8h0M112.3,399.5h0M112.5,367.2h0M112.7,259.8h0M112.8,421.0h0M113.0,249.0h0M113.1,399.5h0M113.3,560.8h0M113.5,270.5h0M113.6,356.5h0M113.8,259.8h0M114.0,410.2h0M114.1,313.5h0M114.3,345.8h0M114.4,356.5h0M114.6,367.2h0M114.8,302.8h0M114.9,421.0h0M115.1,431.8h0M115.2,356.5h0M115.4,292.0h0M115.6,367.2h0M115.7,367.2h0M115.9,388.8h0M116.0,259.8h0M116.2,292.0h0M116.4,335.0h0M116.5,302.8h0M116.7,421.0h0M116.8,302.8h0M117.0,507.0h0M117.2,335.0h0M117.3,238.2h0M117.5,313.5h0M117.7,259.8h0M117.8,324.2h0M118.0,507.0h0M118.1,399.5h0M118.3,367.2h0M118.5,281.2h0M118.6,324.2h0M118.8,378.0h0M118.9,259.8h0M119.1,335.0h0M119.3,259.8h0M119.4,345.8h0M119.6,313.5h0M119.7,313.5h0M119.9,281.2h0M120.1,259.8h0M120.2,281.2h0M120.4,399.5h0M120.6,324.2h0M120.7,485.5h0M120.9,259.8h0M121.0,249.0h0M121.2,335.0h0M121.4,238.2h0M121.5,292.0h0M121.7,292.0h0M121.8,302.8h0M122.0,388.8h0M122.2,302.8h0M122.3,313.5h0M122.5,313.5h0M122.6,367.2h0M122.8,431.8h0M123.0,292.0h0M123.1,356.5h0M123.3,335.0h0M123.5,313.5h0M123.6,345.8h0M123.8,249.0h0M123.9,356.5h0M124.1,335.0h0M124.3,281.2h0M124.4,249.0h0M124.6,259.8h0M124.7,378.0h0M124.9,313.5h0M125.1,249.0h0M125.2,249.0h0M125.4,388.8h0M125.5,335.0h0M125.7,249.0h0M125.9,259.8h0M126.0,335.0h0M126.2,238.2h0M126.3,259.8h0M126.5,249.0h0M126.7,313.5h0M126.8,356.5h0M127.0,335.0h0M127.2,367.2h0M127.3,281.2h0M127.5,410.2h0M127.6,259.8h0M127.8,292.0h0M128.0,302.8h0M128.1,335.0h0M128.3,442.5h0M128.4,399.5h0M128.6,313.5h0M128.8,388.8h0M128.9,259.8h0M129.1,324.2h0M129.2,378.0h0M129.4,259.8h0M129.6,259.8h0M129.7,259.8h0M129.9,356.5h0M130.1,335.0h0M130.2,388.8h0M130.4,259.8h0M130.5,485.5h0M130.7,259.8h0M130.9,259.8h0M131.0,259.8h0M131.2,313.5h0M131.3,259.8h0M131.5,367.2h0M131.7,388.8h0M131.8,335.0h0M132.0,313.5h0M132.1,259.8h0M132.3,345.8h0M132.5,399.5h0M132.6,345.8h0M132.8,421.0h0M132.9,292.0h0M133.1,356.5h0M133.3,410.2h0M133.4,259.8h0M133.6,345.8h0M133.8,259.8h0M133.9,259.8h0M134.1,313.5h0M134.2,259.8h0M134.4,259.8h0M134.6,517.8h0M134.7,335.0h0M134.9,345.8h0M135.0,259.8h0M135.2,281.2h0M135.4,313.5h0M135.5,259.8h0M135.7,259.8h0M135.8,302.8h0M136.0,259.8h0M136.2,378.0h0M136.3,238.2h0M136.5,378.0h0M136.7,259.8h0M136.8,259.8h0M137.0,388.8h0M137.1,259.8h0M137.3,335.0h0M137.5,292.0h0M137.6,345.8h0M137.8,259.8h0M137.9,259.8h0M138.1,259.8h0M138.3,356.5h0M138.4,367.2h0M138.6,335.0h0M138.7,259.8h0M138.9,259.8h0M139.1,367.2h0M139.2,335.0h0M139.4,238.2h0M139.6,474.8h0M139.7,259.8h0M139.9,259.8h0M140.0,507.0h0M140.2,324.2h0M140.4,302.8h0M140.5,313.5h0M140.7,259.8h0M140.8,259.8h0M141.0,302.8h0M141.2,378.0h0M141.3,560.8h0M141.5,259.8h0M141.6,259.8h0M141.8,388.8h0M142.0,259.8h0M142.1,345.8h0M142.3,550.0h0M142.4,313.5h0M142.6,335.0h0M142.8,345.8h0M142.9,367.2h0M143.1,238.2h0M143.3,378.0h0M143.4,259.8h0M143.6,356.5h0M143.7,378.0h0M143.9,302.8h0M144.1,410.2h0M144.2,388.8h0M144.4,335.0h0M144.5,313.5h0M144.7,378.0h0M144.9,259.8h0M145.0,259.8h0M145.2,378.0h0M145.3,517.8h0M145.5,259.8h0M145.7,281.2h0M145.8,238.2h0M146.0,345.8h0M146.2,238.2h0M146.3,657.5h0M146.5,259.8h0M146.6,259.8h0M146.8,324.2h0M147.0,259.8h0M147.1,238.2h0M147.3,249.0h0M147.4,399.5h0M147.6,249.0h0M147.8,249.0h0M147.9,259.8h0M148.1,313.5h0M148.2,345.8h0M148.4,259.8h0M148.6,313.5h0M148.7,313.5h0M148.9,356.5h0M149.1,313.5h0M149.2,345.8h0M149.4,324.2h0M149.5,292.0h0M149.7,302.8h0M149.9,313.5h0M150.0,335.0h0M150.2,335.0h0M150.3,603.8h0M150.5,302.8h0M150.7,388.8h0M150.8,238.2h0M151.0,356.5h0M151.1,421.0h0M151.3,388.8h0M151.5,399.5h0M151.6,367.2h0M151.8,399.5h0M151.9,324.2h0M152.1,313.5h0M152.3,324.2h0M152.4,410.2h0M152.6,410.2h0M152.8,302.8h0M152.9,249.0h0M153.1,324.2h0M153.2,378.0h0M153.4,324.2h0M153.6,388.8h0M153.7,335.0h0M153.9,335.0h0M154.0,356.5h0M154.2,367.2h0M154.4,335.0h0M154.5,302.8h0M154.7,442.5h0M154.8,345.8h0M155.0,281.2h0M155.2,485.5h0M155.3,421.0h0M155.5,292.0h0M155.7,345.8h0M155.8,281.2h0M156.0,410.2h0M156.1,378.0h0M156.3,259.8h0M156.5,259.8h0M156.6,431.8h0M156.8,259.8h0M156.9,313.5h0M157.1,259.8h0M157.3,496.2h0M157.4,410.2h0M157.6,313.5h0M157.7,249.0h0M157.9,324.2h0M158.1,410.2h0M158.2,292.0h0M158.4,259.8h0M158.5,259.8h0M158.7,313.5h0M158.9,367.2h0M159.0,292.0h0M159.2,528.5h0M159.4,345.8h0M159.5,345.8h0M159.7,399.5h0M159.8,259.8h0M160.0,259.8h0M160.2,464.0h0M160.3,259.8h0M160.5,249.0h0M160.6,378.0h0M160.8,442.5h0M161.0,356.5h0M161.1,324.2h0M161.3,388.8h0M161.4,442.5h0M161.6,367.2h0M161.8,356.5h0M161.9,249.0h0M162.1,388.8h0M162.3,367.2h0M162.4,388.8h0M162.6,281.2h0M162.7,431.8h0M162.9,378.0h0M163.1,249.0h0M163.2,689.8h0M163.4,356.5h0M163.5,259.8h0M163.7,281.2h0M163.9,259.8h0M164.0,335.0h0M164.2,367.2h0M164.3,259.8h0M164.5,292.0h0M164.7,335.0h0M164.8,367.2h0M165.0,335.0h0M165.2,335.0h0M165.3,238.2h0M165.5,345.8h0M165.6,313.5h0M165.8,292.0h0M166.0,259.8h0M166.1,388.8h0M166.3,571.5h0M166.4,302.8h0M166.6,388.8h0M166.8,356.5h0M166.9,356.5h0M167.1,313.5h0M167.2,259.8h0M167.4,292.0h0M167.6,367.2h0M167.7,410.2h0M167.9,431.8h0M168.0,313.5h0M168.2,399.5h0M168.4,388.8h0M168.5,335.0h0M168.7,259.8h0M168.9,335.0h0M169.0,249.0h0M169.2,345.8h0M169.3,388.8h0M169.5,539.2h0M169.7,302.8h0M169.8,345.8h0M170.0,249.0h0M170.1,249.0h0M170.3,292.0h0M170.5,238.2h0M170.6,259.8h0M170.8,345.8h0M170.9,302.8h0M171.1,281.2h0M171.3,625.2h0M171.4,313.5h0M171.6,335.0h0M171.8,367.2h0M171.9,270.5h0M172.1,292.0h0M172.2,453.2h0M172.4,345.8h0M172.6,313.5h0M172.7,356.5h0M172.9,345.8h0M173.0,324.2h0M173.2,356.5h0M173.4,378.0h0M173.5,388.8h0M173.7,410.2h0M173.8,453.2h0M174.0,313.5h0M174.2,410.2h0M174.3,356.5h0M174.5,421.0h0M174.6,378.0h0M174.8,292.0h0M175.0,367.2h0M175.1,292.0h0M175.3,345.8h0M175.5,388.8h0M175.6,421.0h0M175.8,259.8h0M175.9,345.8h0M176.1,324.2h0M176.3,345.8h0M176.4,292.0h0M176.6,324.2h0M176.7,335.0h0M176.9,238.2h0M177.1,259.8h0M177.2,367.2h0M177.4,249.0h0M177.5,259.8h0M177.7,302.8h0M177.9,313.5h0M178.0,249.0h0M178.2,249.0h0M178.4,281.2h0M178.5,259.8h0M178.7,259.8h0M178.8,313.5h0M179.0,313.5h0M179.2,324.2h0M179.3,249.0h0M179.5,302.8h0M179.6,270.5h0M179.8,259.8h0M180.0,335.0h0M180.1,249.0h0M180.3,259.8h0M180.4,259.8h0M180.6,410.2h0M180.8,335.0h0M180.9,356.5h0M181.1,335.0h0M181.2,313.5h0M181.4,281.2h0M181.6,550.0h0M181.7,302.8h0M181.9,367.2h0M182.1,281.2h0M182.2,313.5h0M182.4,249.0h0M182.5,324.2h0M182.7,356.5h0M182.9,367.2h0M183.0,313.5h0M183.2,292.0h0M183.3,388.8h0M183.5,324.2h0M183.7,259.8h0M183.8,259.8h0M184.0,313.5h0M184.1,259.8h0M184.3,345.8h0M184.5,431.8h0M184.6,378.0h0M184.8,356.5h0M185.0,367.2h0M185.1,324.2h0M185.3,302.8h0M185.4,302.8h0M185.6,302.8h0M185.8,335.0h0M185.9,345.8h0M186.1,313.5h0M186.2,249.0h0M186.4,302.8h0M186.6,249.0h0M186.7,313.5h0M186.9,378.0h0M187.0,313.5h0M187.2,249.0h0M187.4,259.8h0M187.5,496.2h0M187.7,270.5h0M187.9,324.2h0M188.0,356.5h0M188.2,259.8h0M188.3,313.5h0M188.5,259.8h0M188.7,335.0h0M188.8,302.8h0M189.0,238.2h0M189.1,335.0h0M189.3,302.8h0M189.5,259.8h0M189.6,249.0h0M189.8,238.2h0M189.9,302.8h0M190.1,238.2h0M190.3,313.5h0M190.4,442.5h0M190.6,249.0h0M190.7,335.0h0M190.9,292.0h0M191.1,281.2h0M191.2,292.0h0M191.4,335.0h0M191.6,292.0h0M191.7,356.5h0M191.9,292.0h0M192.0,249.0h0M192.2,270.5h0M192.4,313.5h0M192.5,313.5h0M192.7,249.0h0M192.8,259.8h0M193.0,302.8h0M193.2,313.5h0M193.3,249.0h0M193.5,474.8h0M193.6,345.8h0M193.8,324.2h0M194.0,324.2h0M194.1,292.0h0M194.3,324.2h0M194.5,464.0h0M194.6,259.8h0M194.8,259.8h0M194.9,442.5h0M195.1,259.8h0M195.3,259.8h0M195.4,259.8h0M195.6,238.2h0M195.7,281.2h0M195.9,335.0h0M196.1,259.8h0M196.2,259.8h0M196.4,259.8h0M196.5,270.5h0M196.7,281.2h0M196.9,270.5h0M197.0,302.8h0M197.2,292.0h0M197.3,270.5h0M197.5,249.0h0M197.7,356.5h0M197.8,302.8h0M198.0,259.8h0M198.2,249.0h0M198.3,249.0h0M198.5,249.0h0M198.6,259.8h0M198.8,324.2h0M199.0,324.2h0M199.1,410.2h0M199.3,302.8h0M199.4,367.2h0M199.6,292.0h0M199.8,259.8h0M199.9,302.8h0M200.1,302.8h0M200.2,313.5h0M200.4,302.8h0M200.6,324.2h0M200.7,324.2h0M200.9,335.0h0M201.1,367.2h0M201.2,292.0h0M201.4,388.8h0M201.5,313.5h0M201.7,356.5h0M201.9,335.0h0M202.0,324.2h0M202.2,388.8h0M202.3,302.8h0M202.5,292.0h0M202.7,356.5h0M202.8,324.2h0M203.0,388.8h0M203.1,259.8h0M203.3,335.0h0M203.5,259.8h0M203.6,335.0h0M203.8,302.8h0M204.0,259.8h0M204.1,259.8h0M204.3,507.0h0M204.4,335.0h0M204.6,345.8h0M204.8,302.8h0M204.9,259.8h0M205.1,324.2h0M205.2,421.0h0M205.4,259.8h0M205.6,356.5h0M205.7,388.8h0M205.9,281.2h0M206.0,324.2h0M206.2,302.8h0M206.4,313.5h0M206.5,335.0h0M206.7,324.2h0M206.8,292.0h0M207.0,399.5h0M207.2,313.5h0M207.3,302.8h0M207.5,259.8h0M207.7,313.5h0M207.8,302.8h0M208.0,259.8h0M208.1,270.5h0M208.3,335.0h0M208.5,335.0h0M208.6,324.2h0M208.8,292.0h0M208.9,302.8h0M209.1,292.0h0M209.3,474.8h0M209.4,259.8h0M209.6,259.8h0M209.7,442.5h0M209.9,270.5h0M210.1,292.0h0M210.2,302.8h0M210.4,345.8h0M210.6,302.8h0M210.7,281.2h0M210.9,292.0h0M211.0,281.2h0M211.2,292.0h0M211.4,313.5h0M211.5,302.8h0M211.7,302.8h0M211.8,345.8h0M212.0,345.8h0M212.2,313.5h0M212.3,270.5h0M212.5,356.5h0M212.6,292.0h0M212.8,313.5h0M213.0,292.0h0M213.1,292.0h0M213.3,302.8h0M213.4,399.5h0M213.6,249.0h0M213.8,324.2h0M213.9,281.2h0M214.1,335.0h0M214.3,281.2h0M214.4,335.0h0M214.6,345.8h0M214.7,313.5h0M214.9,335.0h0M215.1,313.5h0M215.2,302.8h0M215.4,378.0h0M215.5,335.0h0M215.7,302.8h0M215.9,259.8h0M216.0,313.5h0M216.2,259.8h0M216.3,335.0h0M216.5,259.8h0M216.7,324.2h0M216.8,378.0h0M217.0,345.8h0M217.2,259.8h0M217.3,259.8h0M217.5,281.2h0M217.6,270.5h0M217.8,259.8h0M218.0,281.2h0M218.1,345.8h0M218.3,259.8h0M218.4,281.2h0M218.6,356.5h0M218.8,259.8h0M218.9,259.8h0M219.1,313.5h0M219.2,259.8h0M219.4,270.5h0M219.6,313.5h0M219.7,324.2h0M219.9,292.0h0M220.1,249.0h0M220.2,292.0h0M220.4,281.2h0M220.5,313.5h0M220.7,345.8h0M220.9,249.0h0M221.0,324.2h0M221.2,249.0h0M221.3,335.0h0M221.5,281.2h0M221.7,292.0h0M221.8,378.0h0M222.0,281.2h0M222.1,259.8h0M222.3,270.5h0M222.5,270.5h0M222.6,367.2h0M222.8,238.2h0M222.9,378.0h0M223.1,324.2h0M223.3,281.2h0M223.4,259.8h0M223.6,259.8h0M223.8,281.2h0M223.9,259.8h0M224.1,249.0h0M224.2,238.2h0M224.4,485.5h0M224.6,259.8h0M224.7,259.8h0M224.9,442.5h0M225.0,302.8h0M225.2,259.8h0M225.4,259.8h0M225.5,259.8h0M225.7,259.8h0M225.8,259.8h0M226.0,302.8h0M226.2,259.8h0M226.3,259.8h0M226.5,335.0h0M226.7,302.8h0M226.8,292.0h0M227.0,259.8h0M227.1,281.2h0M227.3,270.5h0M227.5,238.2h0M227.6,292.0h0M227.8,292.0h0M227.9,259.8h0M228.1,324.2h0M228.3,270.5h0M228.4,442.5h0M228.6,259.8h0M228.7,249.0h0M228.9,292.0h0M229.1,313.5h0M229.2,345.8h0M229.4,281.2h0M229.6,367.2h0M229.7,292.0h0M229.9,259.8h0M230.0,270.5h0M230.2,313.5h0M230.4,270.5h0M230.5,259.8h0M230.7,249.0h0M230.8,270.5h0M231.0,345.8h0M231.2,249.0h0M231.3,281.2h0M231.5,249.0h0M231.6,281.2h0M231.8,270.5h0M232.0,313.5h0M232.1,249.0h0M232.3,302.8h0M232.4,270.5h0M232.6,302.8h0M232.8,270.5h0M232.9,281.2h0M233.1,313.5h0M233.3,345.8h0M233.4,270.5h0M233.6,410.2h0M233.7,259.8h0M233.9,313.5h0M234.1,292.0h0M234.2,259.8h0M234.4,259.8h0M234.5,249.0h0M234.7,259.8h0M234.9,335.0h0M235.0,259.8h0M235.2,259.8h0M235.3,313.5h0M235.5,249.0h0M235.7,249.0h0M235.8,292.0h0M236.0,249.0h0M236.2,270.5h0M236.3,399.5h0M236.5,302.8h0M236.6,249.0h0M236.8,259.8h0M237.0,313.5h0M237.1,302.8h0M237.3,324.2h0M237.4,517.8h0M237.6,313.5h0M237.8,313.5h0M237.9,335.0h0M238.1,238.2h0M238.2,335.0h0M238.4,292.0h0M238.6,259.8h0M238.7,292.0h0M238.9,335.0h0M239.0,259.8h0M239.2,324.2h0M239.4,259.8h0M239.5,281.2h0M239.7,259.8h0M239.9,281.2h0M240.0,281.2h0M240.2,324.2h0M240.3,313.5h0M240.5,259.8h0M240.7,431.8h0M240.8,335.0h0M241.0,249.0h0M241.1,335.0h0M241.3,313.5h0M241.5,324.2h0M241.6,259.8h0M241.8,356.5h0M241.9,302.8h0M242.1,302.8h0M242.3,281.2h0M242.4,238.2h0M242.6,249.0h0M242.8,249.0h0M242.9,281.2h0M243.1,259.8h0M243.2,259.8h0M243.4,302.8h0M243.6,668.2h0M243.7,324.2h0M243.9,324.2h0M244.0,313.5h0M244.2,259.8h0M244.4,356.5h0M244.5,453.2h0M244.7,324.2h0M244.8,281.2h0M245.0,335.0h0M245.2,302.8h0M245.3,259.8h0M245.5,356.5h0M245.7,464.0h0M245.8,335.0h0M246.0,335.0h0M246.1,270.5h0M246.3,281.2h0M246.5,302.8h0M246.6,292.0h0M246.8,259.8h0M246.9,324.2h0M247.1,281.2h0M247.3,249.0h0M247.4,249.0h0M247.6,270.5h0M247.7,249.0h0M247.9,259.8h0M248.1,281.2h0M248.2,249.0h0M248.4,259.8h0M248.5,431.8h0M248.7,292.0h0M248.9,249.0h0M249.0,302.8h0M249.2,249.0h0M249.4,259.8h0M249.5,292.0h0M249.7,259.8h0M249.8,259.8h0M250.0,259.8h0M250.2,259.8h0M250.3,313.5h0M250.5,259.8h0M250.6,302.8h0M250.8,324.2h0M251.0,270.5h0M251.1,259.8h0M251.3,249.0h0M251.4,270.5h0M251.6,292.0h0M251.8,281.2h0M251.9,292.0h0M252.1,302.8h0M252.3,302.8h0M252.4,345.8h0M252.6,238.2h0M252.7,324.2h0M252.9,249.0h0M253.1,302.8h0M253.2,238.2h0M253.4,313.5h0M253.5,281.2h0M253.7,249.0h0M253.9,281.2h0M254.0,410.2h0M254.2,249.0h0M254.3,335.0h0M254.5,281.2h0M254.7,270.5h0M254.8,356.5h0M255.0,259.8h0M255.1,259.8h0M255.3,324.2h0M255.5,259.8h0M255.6,281.2h0M255.8,259.8h0M256.0,421.0h0M256.1,313.5h0M256.3,281.2h0M256.4,281.2h0M256.6,302.8h0M256.8,302.8h0M256.9,367.2h0M257.1,249.0h0M257.2,281.2h0M257.4,270.5h0M257.6,259.8h0M257.7,259.8h0M257.9,324.2h0M258.0,292.0h0M258.2,302.8h0M258.4,313.5h0M258.5,356.5h0M258.7,292.0h0M258.9,302.8h0M259.0,421.0h0M259.2,259.8h0M259.3,292.0h0M259.5,292.0h0M259.7,302.8h0M259.8,345.8h0M260.0,388.8h0M260.1,367.2h0M260.3,259.8h0M260.5,367.2h0M260.6,302.8h0M260.8,281.2h0M260.9,421.0h0M261.1,281.2h0M261.3,259.8h0M261.4,259.8h0M261.6,270.5h0M261.8,324.2h0M261.9,259.8h0M262.1,302.8h0M262.2,259.8h0M262.4,517.8h0M262.6,259.8h0M262.7,302.8h0M262.9,302.8h0M263.0,259.8h0M263.2,313.5h0M263.4,270.5h0M263.5,270.5h0M263.7,259.8h0M263.8,292.0h0M264.0,335.0h0M264.2,292.0h0M264.3,313.5h0M264.5,270.5h0M264.6,238.2h0M264.8,292.0h0M265.0,270.5h0M265.1,356.5h0M265.3,270.5h0M265.5,249.0h0M265.6,302.8h0M265.8,259.8h0M265.9,292.0h0M266.1,292.0h0M266.3,292.0h0M266.4,324.2h0M266.6,356.5h0M266.7,249.0h0M266.9,367.2h0M267.1,281.2h0M267.2,292.0h0M267.4,431.8h0M267.5,259.8h0M267.7,292.0h0M267.9,302.8h0M268.0,313.5h0M268.2,367.2h0M268.4,270.5h0M268.5,313.5h0M268.7,345.8h0M268.8,281.2h0M269.0,302.8h0M269.2,367.2h0M269.3,249.0h0M269.5,259.8h0M269.6,313.5h0M269.8,313.5h0M270.0,324.2h0M270.1,292.0h0M270.3,238.2h0M270.4,259.8h0M270.6,302.8h0M270.8,313.5h0M270.9,292.0h0M271.1,259.8h0M271.2,259.8h0M271.4,302.8h0M271.6,270.5h0M271.7,259.8h0M271.9,302.8h0M272.1,249.0h0M272.2,259.8h0M272.4,335.0h0M272.5,281.2h0M272.7,335.0h0M272.9,302.8h0M273.0,324.2h0M273.2,313.5h0M273.3,259.8h0M273.5,281.2h0M273.7,292.0h0M273.8,259.8h0M274.0,249.0h0M274.1,345.8h0M274.3,507.0h0M274.5,302.8h0M274.6,313.5h0M274.8,464.0h0M275.0,302.8h0M275.1,302.8h0M275.3,345.8h0M275.4,324.2h0M275.6,302.8h0M275.8,259.8h0M275.9,356.5h0M276.1,238.2h0M276.2,292.0h0M276.4,270.5h0M276.6,292.0h0M276.7,259.8h0M276.9,302.8h0M277.0,259.8h0M277.2,259.8h0M277.4,259.8h0M277.5,259.8h0M277.7,259.8h0M277.9,259.8h0M278.0,292.0h0M278.2,249.0h0M278.3,421.0h0M278.5,292.0h0M278.7,238.2h0M278.8,335.0h0M279.0,259.8h0M279.1,292.0h0M279.3,302.8h0M279.5,292.0h0M279.6,302.8h0M279.8,281.2h0M279.9,259.8h0M280.1,249.0h0M280.3,453.2h0M280.4,270.5h0M280.6,249.0h0M280.7,313.5h0M280.9,259.8h0M281.1,302.8h0M281.2,259.8h0M281.4,421.0h0M281.6,259.8h0M281.7,335.0h0M281.9,259.8h0M282.0,259.8h0M282.2,324.2h0M282.4,249.0h0M282.5,324.2h0M282.7,302.8h0M282.8,292.0h0M283.0,259.8h0M283.2,281.2h0M283.3,259.8h0M283.5,249.0h0M283.6,302.8h0M283.8,313.5h0M284.0,324.2h0M284.1,302.8h0M284.3,259.8h0M284.5,270.5h0M284.6,313.5h0M284.8,270.5h0M284.9,270.5h0M285.1,281.2h0M285.3,345.8h0M285.4,302.8h0M285.6,335.0h0M285.7,259.8h0M285.9,281.2h0M286.1,313.5h0M286.2,313.5h0M286.4,259.8h0M286.5,259.8h0M286.7,281.2h0M286.9,238.2h0M287.0,345.8h0M287.2,345.8h0M287.3,313.5h0M287.5,324.2h0M287.7,302.8h0M287.8,249.0h0M288.0,345.8h0M288.2,388.8h0M288.3,302.8h0M288.5,485.5h0M288.6,324.2h0M288.8,292.0h0M289.0,249.0h0M289.1,410.2h0M289.3,292.0h0M289.4,324.2h0M289.6,281.2h0M289.8,313.5h0M289.9,335.0h0M290.1,270.5h0M290.2,259.8h0M290.4,292.0h0M290.6,367.2h0M290.7,335.0h0M290.9,281.2h0M291.1,249.0h0M291.2,367.2h0M291.4,324.2h0M291.5,324.2h0M291.7,292.0h0M291.9,249.0h0M292.0,259.8h0M292.2,249.0h0M292.3,281.2h0M292.5,496.2h0M292.7,302.8h0M292.8,249.0h0M293.0,292.0h0M293.1,281.2h0M293.3,259.8h0M293.5,281.2h0M293.6,292.0h0M293.8,249.0h0M293.9,313.5h0M294.1,292.0h0M294.3,313.5h0M294.4,259.8h0M294.6,324.2h0M294.8,249.0h0M294.9,292.0h0M295.1,238.2h0M295.2,302.8h0M295.4,388.8h0M295.6,270.5h0M295.7,302.8h0M295.9,281.2h0M296.0,281.2h0M296.2,259.8h0M296.4,259.8h0M296.5,249.0h0M296.7,259.8h0M296.8,302.8h0M297.0,345.8h0M297.2,292.0h0M297.3,302.8h0M297.5,313.5h0M297.7,281.2h0M297.8,259.8h0M298.0,281.2h0M298.1,281.2h0M298.3,560.8h0M298.5,281.2h0M298.6,292.0h0M298.8,270.5h0M298.9,302.8h0M299.1,281.2h0M299.3,270.5h0M299.4,313.5h0M299.6,313.5h0M299.7,302.8h0M299.9,270.5h0M300.1,335.0h0M300.2,388.8h0M300.4,270.5h0M300.6,270.5h0M300.7,324.2h0M300.9,324.2h0M301.0,421.0h0M301.2,313.5h0M301.4,270.5h0M301.5,324.2h0M301.7,259.8h0M301.8,249.0h0M302.0,345.8h0M302.2,335.0h0M302.3,292.0h0M302.5,302.8h0M302.6,324.2h0M302.8,335.0h0M303.0,356.5h0M303.1,335.0h0M303.3,345.8h0M303.4,281.2h0M303.6,259.8h0M303.8,270.5h0M303.9,388.8h0M304.1,367.2h0M304.3,249.0h0M304.4,345.8h0M304.6,259.8h0M304.7,335.0h0M304.9,292.0h0M305.1,270.5h0M305.2,259.8h0M305.4,485.5h0M305.5,270.5h0M305.7,249.0h0M305.9,313.5h0M306.0,249.0h0M306.2,292.0h0M306.3,292.0h0M306.5,259.8h0M306.7,313.5h0M306.8,292.0h0M307.0,313.5h0M307.2,270.5h0M307.3,324.2h0M307.5,281.2h0M307.6,292.0h0M307.8,302.8h0M308.0,378.0h0M308.1,292.0h0M308.3,281.2h0M308.4,324.2h0M308.6,281.2h0M308.8,238.2h0M308.9,302.8h0M309.1,292.0h0M309.2,335.0h0M309.4,281.2h0M309.6,281.2h0M309.7,270.5h0M309.9,259.8h0M310.1,313.5h0M310.2,270.5h0M310.4,292.0h0M310.5,259.8h0M310.7,270.5h0M310.9,259.8h0M311.0,313.5h0M311.2,345.8h0M311.3,270.5h0M311.5,313.5h0M311.7,292.0h0M311.8,335.0h0M312.0,313.5h0M312.1,302.8h0M312.3,313.5h0M312.5,302.8h0M312.6,259.8h0M312.8,356.5h0M312.9,335.0h0M313.1,259.8h0M313.3,335.0h0M313.4,335.0h0M313.6,292.0h0M313.8,249.0h0M313.9,281.2h0M314.1,313.5h0M314.2,281.2h0M314.4,367.2h0M314.6,270.5h0M314.7,259.8h0M314.9,302.8h0M315.0,281.2h0M315.2,249.0h0M315.4,292.0h0M315.5,281.2h0M315.7,302.8h0M315.8,281.2h0M316.0,345.8h0M316.2,324.2h0M316.3,335.0h0M316.5,313.5h0M316.7,270.5h0M316.8,302.8h0M317.0,335.0h0M317.1,292.0h0M317.3,281.2h0M317.5,249.0h0M317.6,249.0h0M317.8,335.0h0M317.9,281.2h0M318.1,249.0h0M318.3,249.0h0M318.4,259.8h0M318.6,249.0h0M318.7,270.5h0M318.9,249.0h0M319.1,281.2h0M319.2,410.2h0M319.4,302.8h0M319.5,292.0h0M319.7,292.0h0M319.9,259.8h0M320.0,345.8h0M320.2,249.0h0M320.4,249.0h0M320.5,345.8h0M320.7,270.5h0M320.8,313.5h0M321.0,378.0h0M321.2,259.8h0M321.3,281.2h0M321.5,259.8h0M321.6,259.8h0M321.8,302.8h0M322.0,238.2h0M322.1,259.8h0M322.3,259.8h0M322.4,345.8h0M322.6,281.2h0M322.8,281.2h0M322.9,345.8h0M323.1,302.8h0M323.3,281.2h0M323.4,313.5h0M323.6,335.0h0M323.7,259.8h0M323.9,335.0h0M324.1,249.0h0M324.2,302.8h0M324.4,292.0h0M324.5,249.0h0M324.7,259.8h0M324.9,367.2h0M325.0,292.0h0M325.2,313.5h0M325.3,302.8h0M325.5,324.2h0M325.7,292.0h0M325.8,345.8h0M326.0,281.2h0M326.1,302.8h0M326.3,281.2h0M326.5,313.5h0M326.6,281.2h0M326.8,259.8h0M327.0,259.8h0M327.1,302.8h0M327.3,259.8h0M327.4,313.5h0M327.6,313.5h0M327.8,249.0h0M327.9,270.5h0M328.1,259.8h0M328.2,292.0h0M328.4,292.0h0M328.6,270.5h0M328.7,367.2h0M328.9,259.8h0M329.0,335.0h0M329.2,249.0h0M329.4,249.0h0M329.5,292.0h0M329.7,249.0h0M329.9,281.2h0M330.0,249.0h0M330.2,324.2h0M330.3,324.2h0M330.5,313.5h0M330.7,292.0h0M330.8,259.8h0M331.0,345.8h0M331.1,302.8h0M331.3,259.8h0M331.5,259.8h0M331.6,259.8h0M331.8,302.8h0M331.9,249.0h0M332.1,249.0h0M332.3,259.8h0M332.4,421.0h0M332.6,259.8h0M332.8,421.0h0M332.9,249.0h0M333.1,259.8h0M333.2,259.8h0M333.4,292.0h0M333.6,313.5h0M333.7,259.8h0M333.9,292.0h0M334.0,259.8h0M334.2,281.2h0M334.4,302.8h0M334.5,249.0h0M334.7,292.0h0M334.8,324.2h0M335.0,270.5h0M335.2,259.8h0M335.3,302.8h0M335.5,302.8h0M335.6,259.8h0M335.8,238.2h0M336.0,324.2h0M336.1,367.2h0M336.3,302.8h0M336.5,324.2h0M336.6,292.0h0M336.8,292.0h0M336.9,292.0h0M337.1,335.0h0M337.3,259.8h0M337.4,259.8h0M337.6,345.8h0M337.7,270.5h0M337.9,292.0h0M338.1,259.8h0M338.2,259.8h0M338.4,249.0h0M338.5,238.2h0M338.7,249.0h0M338.9,259.8h0M339.0,292.0h0M339.2,249.0h0M339.4,507.0h0M339.5,281.2h0M339.7,259.8h0M339.8,238.2h0M340.0,270.5h0M340.2,249.0h0M340.3,259.8h0M340.5,345.8h0M340.6,281.2h0M340.8,313.5h0M341.0,281.2h0M341.1,249.0h0M341.3,249.0h0M341.4,313.5h0M341.6,281.2h0M341.8,259.8h0M341.9,249.0h0M342.1,259.8h0M342.2,259.8h0M342.4,259.8h0M342.6,259.8h0M342.7,302.8h0M342.9,270.5h0M343.1,270.5h0M343.2,356.5h0M343.4,259.8h0M343.5,378.0h0M343.7,292.0h0M343.9,281.2h0M344.0,259.8h0M344.2,281.2h0M344.3,302.8h0M344.5,270.5h0M344.7,259.8h0M344.8,249.0h0M345.0,238.2h0M345.1,249.0h0M345.3,259.8h0M345.5,270.5h0M345.6,259.8h0M345.8,238.2h0M346.0,249.0h0M346.1,238.2h0M346.3,238.2h0M346.4,259.8h0M346.6,399.5h0M346.8,249.0h0M346.9,313.5h0M347.1,302.8h0M347.2,270.5h0M347.4,249.0h0M347.6,249.0h0M347.7,259.8h0M347.9,281.2h0M348.0,313.5h0M348.2,281.2h0M348.4,302.8h0M348.5,249.0h0M348.7,259.8h0M348.9,249.0h0M349.0,249.0h0M349.2,259.8h0M349.3,259.8h0M349.5,270.5h0M349.7,238.2h0M349.8,249.0h0M350.0,249.0h0M350.1,249.0h0M350.3,249.0h0M350.5,259.8h0M350.6,281.2h0M350.8,259.8h0M350.9,259.8h0M351.1,249.0h0M351.3,249.0h0M351.4,249.0h0M351.6,292.0h0M351.7,259.8h0M351.9,259.8h0M352.1,313.5h0M352.2,238.2h0M352.4,302.8h0M352.6,249.0h0M352.7,302.8h0M352.9,270.5h0M353.0,249.0h0M353.2,249.0h0M353.4,292.0h0M353.5,281.2h0M353.7,259.8h0M353.8,249.0h0M354.0,292.0h0M354.2,324.2h0M354.3,259.8h0M354.5,313.5h0M354.6,281.2h0M354.8,259.8h0M355.0,259.8h0M355.1,259.8h0M355.3,259.8h0M355.5,249.0h0M355.6,281.2h0M355.8,249.0h0M355.9,259.8h0M356.1,259.8h0M356.3,281.2h0M356.4,259.8h0M356.6,324.2h0M356.7,259.8h0M356.9,249.0h0M357.1,270.5h0M357.2,270.5h0M357.4,313.5h0M357.5,281.2h0M357.7,302.8h0M357.9,270.5h0M358.0,249.0h0M358.2,270.5h0M358.4,270.5h0M358.5,292.0h0M358.7,292.0h0M358.8,324.2h0M359.0,302.8h0M359.2,335.0h0M359.3,259.8h0M359.5,259.8h0M359.6,270.5h0M359.8,281.2h0M360.0,249.0h0M360.1,259.8h0M360.3,302.8h0M360.4,249.0h0M360.6,281.2h0M360.8,292.0h0M360.9,249.0h0M361.1,259.8h0M361.2,281.2h0M361.4,238.2h0M361.6,249.0h0M361.7,292.0h0M361.9,302.8h0M362.1,302.8h0M362.2,292.0h0M362.4,249.0h0M362.5,238.2h0M362.7,270.5h0M362.9,302.8h0M363.0,259.8h0M363.2,292.0h0M363.3,249.0h0M363.5,249.0h0M363.7,259.8h0M363.8,281.2h0M364.0,249.0h0M364.1,238.2h0M364.3,249.0h0M364.5,249.0h0M364.6,292.0h0M364.8,302.8h0M365.0,292.0h0M365.1,270.5h0M365.3,270.5h0M365.4,281.2h0M365.6,281.2h0M365.8,302.8h0M365.9,281.2h0M366.1,324.2h0M366.2,249.0h0M366.4,270.5h0M366.6,249.0h0M366.7,249.0h0M366.9,292.0h0M367.0,259.8h0M367.2,259.8h0M367.4,249.0h0M367.5,259.8h0M367.7,238.2h0M367.8,270.5h0M368.0,356.5h0M368.2,302.8h0M368.3,281.2h0M368.5,313.5h0M368.7,259.8h0M368.8,292.0h0M369.0,259.8h0M369.1,259.8h0M369.3,324.2h0M369.5,302.8h0M369.6,302.8h0M369.8,270.5h0M369.9,249.0h0M370.1,302.8h0M370.3,259.8h0M370.4,281.2h0M370.6,302.8h0M370.7,281.2h0M370.9,238.2h0M371.1,249.0h0M371.2,249.0h0M371.4,249.0h0M371.6,281.2h0M371.7,249.0h0M371.9,249.0h0M372.0,259.8h0M372.2,238.2h0M372.4,292.0h0M372.5,249.0h0M372.7,249.0h0M372.8,259.8h0M373.0,281.2h0M373.2,249.0h0M373.3,249.0h0M373.5,249.0h0M373.6,270.5h0M373.8,270.5h0M374.0,249.0h0M374.1,238.2h0M374.3,249.0h0M374.4,249.0h0M374.6,324.2h0M374.8,302.8h0M374.9,302.8h0M375.1,259.8h0M375.3,259.8h0M375.4,281.2h0M375.6,238.2h0M375.7,238.2h0M375.9,238.2h0M376.1,270.5h0M376.2,259.8h0M376.4,270.5h0M376.5,281.2h0M376.7,302.8h0M376.9,259.8h0M377.0,421.0h0M377.2,249.0h0M377.3,249.0h0M377.5,249.0h0M377.7,292.0h0M377.8,270.5h0M378.0,249.0h0M378.2,259.8h0M378.3,259.8h0M378.5,259.8h0M378.6,270.5h0M378.8,249.0h0M379.0,292.0h0M379.1,259.8h0M379.3,292.0h0M379.4,249.0h0M379.6,281.2h0M379.8,249.0h0M379.9,281.2h0M380.1,281.2h0M380.2,270.5h0M380.4,238.2h0M380.6,270.5h0M380.7,270.5h0M380.9,292.0h0M381.1,270.5h0M381.2,259.8h0M381.4,249.0h0M381.5,259.8h0M381.7,281.2h0M381.9,249.0h0M382.0,249.0h0M382.2,249.0h0M382.3,249.0h0M382.5,249.0h0M382.7,249.0h0M382.8,259.8h0M383.0,249.0h0M383.1,249.0h0M383.3,259.8h0M383.5,259.8h0M383.6,302.8h0M383.8,249.0h0M383.9,345.8h0M384.1,249.0h0M384.3,259.8h0M384.4,259.8h0M384.6,259.8h0M384.8,259.8h0M384.9,270.5h0M385.1,259.8h0M385.2,249.0h0M385.4,270.5h0M385.6,249.0h0M385.7,292.0h0M385.9,270.5h0M386.0,249.0h0M386.2,302.8h0M386.4,249.0h0M386.5,238.2h0M386.7,249.0h0M386.8,259.8h0M387.0,281.2h0M387.2,249.0h0M387.3,259.8h0M387.5,324.2h0M387.7,302.8h0M387.8,270.5h0M388.0,249.0h0M388.1,259.8h0M388.3,281.2h0M388.5,292.0h0M388.6,302.8h0M388.8,249.0h0M388.9,249.0h0M389.1,249.0h0M389.3,292.0h0M389.4,270.5h0M389.6,259.8h0M389.7,259.8h0M389.9,302.8h0M390.1,259.8h0M390.2,281.2h0M390.4,249.0h0M390.6,249.0h0M390.7,259.8h0M390.9,249.0h0M391.0,249.0h0M391.2,292.0h0M391.4,270.5h0M391.5,259.8h0M391.7,302.8h0M391.8,249.0h0M392.0,259.8h0M392.2,270.5h0M392.3,270.5h0M392.5,281.2h0M392.6,249.0h0M392.8,259.8h0M393.0,238.2h0M393.1,238.2h0M393.3,270.5h0M393.4,238.2h0M393.6,249.0h0M393.8,249.0h0M393.9,259.8h0M394.1,259.8h0M394.3,249.0h0M394.4,249.0h0M394.6,270.5h0M394.7,249.0h0M394.9,238.2h0M395.1,302.8h0M395.2,249.0h0M395.4,259.8h0M395.5,249.0h0M395.7,238.2h0M395.9,292.0h0M396.0,292.0h0M396.2,249.0h0M396.3,249.0h0M396.5,281.2h0M396.7,249.0h0M396.8,249.0h0M397.0,259.8h0M397.2,249.0h0M397.3,249.0h0M397.5,270.5h0M397.6,249.0h0M397.8,281.2h0M398.0,259.8h0M398.1,238.2h0M398.3,249.0h0M398.4,270.5h0M398.6,302.8h0M398.8,249.0h0M398.9,249.0h0M399.1,302.8h0M399.2,302.8h0M399.4,270.5h0M399.6,292.0h0M399.7,249.0h0M399.9,249.0h0M400.0,270.5h0M400.2,259.8h0M400.4,259.8h0M400.5,281.2h0M400.7,270.5h0M400.9,292.0h0M401.0,292.0h0M401.2,259.8h0M401.3,281.2h0M401.5,249.0h0M401.7,249.0h0M401.8,249.0h0M402.0,292.0h0M402.1,335.0h0M402.3,270.5h0M402.5,249.0h0M402.6,270.5h0M402.8,249.0h0M402.9,281.2h0M403.1,259.8h0M403.3,249.0h0M403.4,249.0h0M403.6,249.0h0M403.8,259.8h0M403.9,259.8h0M404.1,259.8h0M404.2,281.2h0M404.4,292.0h0M404.6,292.0h0M404.7,281.2h0M404.9,259.8h0M405.0,249.0h0M405.2,270.5h0M405.4,249.0h0M405.5,238.2h0M405.7,313.5h0M405.8,249.0h0M406.0,302.8h0M406.2,270.5h0M406.3,259.8h0M406.5,270.5h0M406.6,249.0h0M406.8,249.0h0M407.0,259.8h0M407.1,281.2h0M407.3,249.0h0M407.5,281.2h0M407.6,270.5h0M407.8,249.0h0M407.9,292.0h0M408.1,292.0h0M408.3,259.8h0M408.4,410.2h0M408.6,302.8h0M408.7,259.8h0M408.9,259.8h0M409.1,259.8h0M409.2,238.2h0M409.4,281.2h0M409.5,238.2h0M409.7,292.0h0M409.9,270.5h0M410.0,292.0h0M410.2,281.2h0M410.4,259.8h0M410.5,249.0h0M410.7,259.8h0M410.8,259.8h0M411.0,367.2h0M411.2,302.8h0M411.3,249.0h0M411.5,259.8h0M411.6,249.0h0M411.8,249.0h0M412.0,270.5h0M412.1,313.5h0M412.3,238.2h0M412.4,270.5h0M412.6,270.5h0M412.8,259.8h0M412.9,259.8h0M413.1,249.0h0M413.3,259.8h0M413.4,249.0h0M413.6,270.5h0M413.7,259.8h0M413.9,249.0h0M414.1,292.0h0M414.2,292.0h0M414.4,249.0h0M414.5,249.0h0M414.7,238.2h0M414.9,270.5h0M415.0,249.0h0M415.2,249.0h0M415.3,270.5h0M415.5,249.0h0M415.7,249.0h0M415.8,238.2h0M416.0,238.2h0M416.1,259.8h0M416.3,249.0h0M416.5,302.8h0M416.6,238.2h0M416.8,249.0h0M417.0,249.0h0M417.1,281.2h0M417.3,270.5h0M417.4,249.0h0M417.6,238.2h0M417.8,249.0h0M417.9,313.5h0M418.1,281.2h0M418.2,270.5h0M418.4,259.8h0M418.6,259.8h0M418.7,281.2h0M418.9,249.0h0M419.0,292.0h0M419.2,302.8h0M419.4,281.2h0M419.5,249.0h0M419.7,249.0h0M419.9,270.5h0M420.0,302.8h0M420.2,292.0h0M420.3,270.5h0M420.5,356.5h0M420.7,270.5h0M420.8,259.8h0M421.0,259.8h0M421.1,292.0h0M421.3,249.0h0M421.5,259.8h0M421.6,292.0h0M421.8,259.8h0M421.9,270.5h0M422.1,292.0h0M422.3,281.2h0M422.4,249.0h0M422.6,270.5h0M422.8,259.8h0M422.9,249.0h0M423.1,238.2h0M423.2,281.2h0M423.4,249.0h0M423.6,292.0h0M423.7,259.8h0M423.9,259.8h0M424.0,292.0h0M424.2,249.0h0M424.4,259.8h0M424.5,259.8h0M424.7,249.0h0M424.8,259.8h0M425.0,292.0h0M425.2,249.0h0M425.3,313.5h0M425.5,249.0h0M425.6,259.8h0M425.8,259.8h0M426.0,249.0h0M426.1,281.2h0M426.3,249.0h0M426.5,249.0h0M426.6,249.0h0M426.8,292.0h0M426.9,292.0h0M427.1,259.8h0M427.3,249.0h0M427.4,270.5h0M427.6,238.2h0M427.7,292.0h0M427.9,238.2h0M428.1,238.2h0M428.2,249.0h0M428.4,259.8h0M428.5,238.2h0M428.7,249.0h0M428.9,270.5h0M429.0,281.2h0M429.2,238.2h0M429.4,292.0h0M429.5,259.8h0M429.7,270.5h0M429.8,249.0h0M430.0,249.0h0M430.2,313.5h0M430.3,259.8h0M430.5,249.0h0M430.6,259.8h0M430.8,324.2h0M431.0,249.0h0M431.1,270.5h0M431.3,302.8h0M431.4,281.2h0M431.6,259.8h0M431.8,249.0h0M431.9,259.8h0M432.1,249.0h0M432.2,249.0h0M432.4,259.8h0M432.6,249.0h0M432.7,249.0h0M432.9,259.8h0M433.1,292.0h0M433.2,238.2h0M433.4,249.0h0M433.5,249.0h0M433.7,259.8h0M433.9,259.8h0M434.0,259.8h0M434.2,238.2h0M434.3,292.0h0M434.5,259.8h0M434.7,259.8h0M434.8,292.0h0M435.0,281.2h0M435.1,259.8h0M435.3,281.2h0M435.5,249.0h0M435.6,259.8h0M435.8,249.0h0M436.0,259.8h0M436.1,292.0h0M436.3,281.2h0M436.4,345.8h0M436.6,249.0h0M436.8,259.8h0M436.9,281.2h0M437.1,259.8h0M437.2,249.0h0M437.4,292.0h0M437.6,259.8h0M437.7,259.8h0M437.9,270.5h0M438.0,281.2h0M438.2,238.2h0M438.4,270.5h0M438.5,259.8h0M438.7,249.0h0M438.9,302.8h0M439.0,249.0h0M439.2,259.8h0M439.3,292.0h0M439.5,249.0h0M439.7,270.5h0M439.8,259.8h0M440.0,238.2h0M440.1,259.8h0M440.3,238.2h0M440.5,313.5h0M440.6,270.5h0M440.8,249.0h0M440.9,270.5h0M441.1,302.8h0M441.3,292.0h0M441.4,249.0h0M441.6,249.0h0M441.7,270.5h0M441.9,281.2h0M442.1,259.8h0M442.2,259.8h0M442.4,259.8h0M442.6,249.0h0M442.7,270.5h0M442.9,259.8h0M443.0,270.5h0M443.2,281.2h0M443.4,249.0h0M443.5,249.0h0M443.7,249.0h0M443.8,259.8h0M444.0,270.5h0M444.2,281.2h0M444.3,292.0h0M444.5,292.0h0M444.6,259.8h0M444.8,249.0h0M445.0,281.2h0M445.1,249.0h0M445.3,281.2h0M445.5,270.5h0M445.6,249.0h0M445.8,292.0h0M445.9,249.0h0M446.1,249.0h0M446.3,270.5h0M446.4,259.8h0M446.6,292.0h0M446.7,270.5h0M446.9,249.0h0M447.1,281.2h0M447.2,249.0h0M447.4,238.2h0M447.5,249.0h0M447.7,249.0h0M447.9,259.8h0M448.0,259.8h0M448.2,270.5h0M448.3,249.0h0M448.5,281.2h0M448.7,249.0h0M448.8,249.0h0M449.0,270.5h0M449.2,259.8h0M449.3,281.2h0M449.5,249.0h0M449.6,249.0h0M449.8,281.2h0M450.0,281.2h0M450.1,249.0h0M450.3,249.0h0M450.4,388.8h0M450.6,238.2h0M450.8,249.0h0M450.9,270.5h0M451.1,324.2h0M451.2,249.0h0M451.4,249.0h0M451.6,249.0h0M451.7,270.5h0M451.9,249.0h0M452.1,292.0h0M452.2,249.0h0M452.4,270.5h0M452.5,302.8h0M452.7,270.5h0M452.9,281.2h0M453.0,270.5h0M453.2,302.8h0M453.3,249.0h0M453.5,259.8h0M453.7,281.2h0M453.8,259.8h0M454.0,281.2h0M454.1,259.8h0M454.3,249.0h0M454.5,259.8h0M454.6,259.8h0M454.8,238.2h0M454.9,249.0h0M455.1,259.8h0M455.3,270.5h0M455.4,259.8h0M455.6,270.5h0M455.8,259.8h0M455.9,259.8h0M456.1,249.0h0M456.2,270.5h0M456.4,281.2h0M456.6,302.8h0M456.7,249.0h0M456.9,281.2h0M457.0,259.8h0M457.2,281.2h0M457.4,238.2h0M457.5,270.5h0M457.7,259.8h0M457.8,270.5h0M458.0,259.8h0M458.2,238.2h0M458.3,356.5h0M458.5,259.8h0M458.7,249.0h0M458.8,249.0h0M459.0,249.0h0M459.1,259.8h0M459.3,259.8h0M459.5,238.2h0M459.6,249.0h0M459.8,281.2h0M459.9,259.8h0M460.1,292.0h0M460.3,259.8h0M460.4,249.0h0M460.6,270.5h0M460.7,249.0h0M460.9,249.0h0M461.1,259.8h0M461.2,259.8h0M461.4,249.0h0M461.6,292.0h0M461.7,249.0h0M461.9,249.0h0M462.0,270.5h0M462.2,249.0h0M462.4,249.0h0M462.5,259.8h0M462.7,249.0h0M462.8,292.0h0M463.0,249.0h0M463.2,270.5h0M463.3,249.0h0M463.5,259.8h0M463.6,292.0h0M463.8,270.5h0M464.0,270.5h0M464.1,259.8h0M464.3,249.0h0M464.4,249.0h0M464.6,270.5h0M464.8,249.0h0M464.9,259.8h0M465.1,249.0h0M465.3,270.5h0M465.4,249.0h0M465.6,249.0h0M465.7,249.0h0M465.9,259.8h0M466.1,281.2h0M466.2,367.2h0M466.4,281.2h0M466.5,259.8h0M466.7,249.0h0M466.9,281.2h0M467.0,270.5h0M467.2,259.8h0M467.3,249.0h0M467.5,249.0h0M467.7,249.0h0M467.8,238.2h0M468.0,249.0h0M468.2,249.0h0M468.3,259.8h0M468.5,270.5h0M468.6,259.8h0M468.8,259.8h0M469.0,270.5h0M469.1,259.8h0M469.3,238.2h0M469.4,270.5h0M469.6,270.5h0M469.8,281.2h0M469.9,281.2h0M470.1,270.5h0M470.2,270.5h0M470.4,238.2h0M470.6,281.2h0M470.7,259.8h0M470.9,259.8h0M471.1,259.8h0M471.2,249.0h0M471.4,249.0h0M471.5,281.2h0M471.7,399.5h0M471.9,270.5h0M472.0,249.0h0M472.2,259.8h0M472.3,281.2h0M472.5,238.2h0M472.7,281.2h0M472.8,259.8h0M473.0,259.8h0M473.1,249.0h0M473.3,292.0h0M473.5,302.8h0M473.6,270.5h0M473.8,292.0h0M473.9,281.2h0M474.1,292.0h0M474.3,270.5h0M474.4,249.0h0M474.6,281.2h0M474.8,249.0h0M474.9,281.2h0M475.1,249.0h0M475.2,259.8h0M475.4,281.2h0M475.6,238.2h0M475.7,270.5h0M475.9,238.2h0M476.0,259.8h0M476.2,249.0h0M476.4,238.2h0M476.5,259.8h0M476.7,249.0h0M476.8,249.0h0M477.0,281.2h0M477.2,249.0h0M477.3,270.5h0M477.5,259.8h0M477.7,249.0h0M477.8,238.2h0M478.0,292.0h0M478.1,249.0h0M478.3,281.2h0M478.5,259.8h0M478.6,259.8h0M478.8,238.2h0M478.9,259.8h0M479.1,238.2h0M479.3,281.2h0M479.4,292.0h0M479.6,249.0h0M479.7,259.8h0M479.9,249.0h0M480.1,281.2h0M480.2,474.8h0M480.4,249.0h0M480.5,249.0h0M480.7,270.5h0M480.9,270.5h0M481.0,259.8h0M481.2,324.2h0M481.4,249.0h0M481.5,249.0h0M481.7,281.2h0M481.8,238.2h0M482.0,302.8h0M482.2,270.5h0M482.3,249.0h0M482.5,281.2h0M482.6,270.5h0M482.8,238.2h0M483.0,259.8h0M483.1,249.0h0M483.3,249.0h0M483.4,249.0h0M483.6,259.8h0M483.8,238.2h0M483.9,249.0h0M484.1,249.0h0M484.3,281.2h0M484.4,281.2h0M484.6,270.5h0M484.7,281.2h0M484.9,292.0h0M485.1,281.2h0M485.2,259.8h0M485.4,238.2h0M485.5,292.0h0M485.7,270.5h0M485.9,249.0h0M486.0,281.2h0M486.2,281.2h0M486.3,281.2h0M486.5,259.8h0M486.7,270.5h0M486.8,259.8h0M487.0,238.2h0M487.1,249.0h0M487.3,292.0h0M487.5,249.0h0M487.6,281.2h0M487.8,238.2h0M488.0,259.8h0M488.1,249.0h0M488.3,259.8h0M488.4,249.0h0M488.6,259.8h0M488.8,281.2h0M488.9,270.5h0M489.1,249.0h0M489.2,270.5h0M489.4,270.5h0M489.6,259.8h0M489.7,259.8h0M489.9,238.2h0M490.0,249.0h0M490.2,259.8h0M490.4,249.0h0M490.5,281.2h0M490.7,281.2h0M490.9,249.0h0M491.0,270.5h0M491.2,249.0h0M491.3,302.8h0M491.5,259.8h0M491.7,281.2h0M491.8,249.0h0M492.0,259.8h0M492.1,259.8h0M492.3,249.0h0M492.5,238.2h0M492.6,249.0h0M492.8,270.5h0M492.9,249.0h0M493.1,302.8h0M493.3,259.8h0M493.4,270.5h0M493.6,238.2h0M493.8,259.8h0M493.9,259.8h0M494.1,249.0h0M494.2,302.8h0M494.4,249.0h0M494.6,259.8h0M494.7,249.0h0M494.9,270.5h0M495.0,270.5h0M495.2,249.0h0M495.4,249.0h0M495.5,238.2h0M495.7,249.0h0M495.8,270.5h0M496.0,270.5h0M496.2,270.5h0M496.3,249.0h0M496.5,259.8h0M496.6,259.8h0M496.8,281.2h0M497.0,238.2h0M497.1,249.0h0M497.3,259.8h0M497.5,249.0h0M497.6,281.2h0M497.8,238.2h0M497.9,281.2h0M498.1,249.0h0M498.3,378.0h0M498.4,259.8h0M498.6,259.8h0M498.7,270.5h0M498.9,259.8h0M499.1,292.0h0M499.2,302.8h0M499.4,292.0h0M499.5,249.0h0M499.7,259.8h0M499.9,238.2h0M500.0,249.0h0M500.2,249.0h0M500.4,249.0h0M500.5,281.2h0M500.7,249.0h0M500.8,249.0h0M501.0,249.0h0M501.2,238.2h0M501.3,281.2h0M501.5,259.8h0M501.6,259.8h0M501.8,259.8h0M502.0,292.0h0M502.1,249.0h0M502.3,259.8h0M502.4,259.8h0M502.6,292.0h0M502.8,281.2h0M502.9,270.5h0M503.1,249.0h0M503.2,270.5h0M503.4,281.2h0M503.6,249.0h0M503.7,259.8h0M503.9,270.5h0M504.1,259.8h0M504.2,259.8h0M504.4,259.8h0M504.5,259.8h0M504.7,259.8h0M504.9,238.2h0M505.0,249.0h0M505.2,249.0h0M505.3,259.8h0M505.5,238.2h0M505.7,259.8h0M505.8,281.2h0M506.0,270.5h0M506.1,238.2h0M506.3,292.0h0M506.5,249.0h0M506.6,270.5h0M506.8,238.2h0M507.0,249.0h0M507.1,259.8h0M507.3,238.2h0M507.4,292.0h0M507.6,249.0h0M507.8,292.0h0M507.9,270.5h0M508.1,259.8h0M508.2,259.8h0M508.4,281.2h0M508.6,249.0h0M508.7,302.8h0M508.9,270.5h0M509.0,238.2h0M509.2,249.0h0M509.4,292.0h0M509.5,238.2h0M509.7,302.8h0M509.9,281.2h0M510.0,270.5h0M510.2,292.0h0M510.3,259.8h0M510.5,270.5h0M510.7,259.8h0M510.8,259.8h0M511.0,281.2h0M511.1,259.8h0M511.3,249.0h0M511.5,249.0h0M511.6,259.8h0M511.8,259.8h0M511.9,292.0h0M512.1,281.2h0M512.3,367.2h0M512.4,270.5h0M512.6,249.0h0M512.7,249.0h0M512.9,270.5h0M513.1,249.0h0M513.2,259.8h0M513.4,259.8h0M513.6,259.8h0M513.7,259.8h0M513.9,259.8h0M514.0,249.0h0M514.2,238.2h0M514.4,292.0h0M514.5,281.2h0M514.7,259.8h0M514.8,259.8h0M515.0,249.0h0M515.2,259.8h0M515.3,259.8h0M515.5,259.8h0M515.6,249.0h0M515.8,238.2h0M516.0,270.5h0M516.1,270.5h0M516.3,249.0h0M516.5,292.0h0M516.6,302.8h0M516.8,249.0h0M516.9,302.8h0M517.1,249.0h0M517.3,249.0h0M517.4,249.0h0M517.6,259.8h0M517.7,259.8h0M517.9,259.8h0M518.1,249.0h0M518.2,292.0h0M518.4,249.0h0M518.5,249.0h0M518.7,270.5h0M518.9,249.0h0M519.0,270.5h0M519.2,270.5h0M519.4,270.5h0M519.5,249.0h0M519.7,259.8h0M519.8,249.0h0M520.0,249.0h0M520.2,335.0h0M520.3,281.2h0M520.5,259.8h0M520.6,270.5h0M520.8,249.0h0M521.0,249.0h0M521.1,238.2h0M521.3,270.5h0M521.4,238.2h0M521.6,259.8h0M521.8,281.2h0M521.9,249.0h0M522.1,270.5h0M522.2,292.0h0M522.4,249.0h0M522.6,249.0h0M522.7,259.8h0M522.9,259.8h0M523.1,259.8h0M523.2,302.8h0M523.4,292.0h0M523.5,281.2h0M523.7,249.0h0M523.9,270.5h0M524.0,259.8h0M524.2,292.0h0M524.3,259.8h0M524.5,238.2h0M524.7,281.2h0M524.8,249.0h0M525.0,281.2h0M525.1,259.8h0M525.3,281.2h0M525.5,281.2h0M525.6,281.2h0M525.8,302.8h0M526.0,259.8h0M526.1,249.0h0M526.3,259.8h0M526.4,249.0h0M526.6,249.0h0M526.8,259.8h0M526.9,259.8h0M527.1,249.0h0M527.2,249.0h0M527.4,249.0h0M527.6,249.0h0M527.7,259.8h0M527.9,249.0h0M528.0,249.0h0M528.2,249.0h0M528.4,270.5h0M528.5,249.0h0M528.7,249.0h0M528.8,270.5h0M529.0,259.8h0M529.2,270.5h0M529.3,249.0h0M529.5,249.0h0M529.7,259.8h0M529.8,238.2h0M530.0,270.5h0M530.1,249.0h0M530.3,292.0h0M530.5,259.8h0M530.6,270.5h0M530.8,249.0h0M530.9,281.2h0M531.1,259.8h0M531.3,259.8h0M531.4,249.0h0M531.6,249.0h0M531.7,281.2h0M531.9,292.0h0M532.1,259.8h0M532.2,302.8h0M532.4,270.5h0M532.6,292.0h0M532.7,259.8h0M532.9,302.8h0M533.0,259.8h0M533.2,281.2h0M533.4,259.8h0M533.5,259.8h0M533.7,249.0h0M533.8,270.5h0M534.0,249.0h0M534.2,281.2h0M534.3,281.2h0M534.5,249.0h0M534.6,270.5h0M534.8,238.2h0M535.0,249.0h0M535.1,249.0h0M535.3,259.8h0M535.5,259.8h0M535.6,259.8h0M535.8,270.5h0M535.9,238.2h0M536.1,259.8h0M536.3,249.0h0M536.4,259.8h0M536.6,259.8h0M536.7,249.0h0M536.9,238.2h0M537.1,249.0h0M537.2,259.8h0M537.4,259.8h0M537.5,259.8h0M537.7,270.5h0M537.9,259.8h0M538.0,281.2h0M538.2,259.8h0M538.3,259.8h0M538.5,259.8h0M538.7,270.5h0M538.8,281.2h0M539.0,292.0h0M539.2,238.2h0M539.3,281.2h0M539.5,249.0h0M539.6,281.2h0M539.8,238.2h0M540.0,270.5h0M540.1,259.8h0M540.3,259.8h0M540.4,249.0h0M540.6,249.0h0M540.8,249.0h0M540.9,249.0h0M541.1,259.8h0M541.2,249.0h0M541.4,238.2h0M541.6,249.0h0M541.7,249.0h0M541.9,249.0h0M542.1,249.0h0M542.2,281.2h0M542.4,259.8h0M542.5,259.8h0M542.7,249.0h0M542.9,259.8h0M543.0,270.5h0M543.2,281.2h0M543.3,259.8h0M543.5,259.8h0M543.7,281.2h0M543.8,249.0h0M544.0,281.2h0M544.1,270.5h0M544.3,292.0h0M544.5,249.0h0M544.6,249.0h0M544.8,249.0h0M544.9,270.5h0M545.1,249.0h0M545.3,270.5h0M545.4,249.0h0M545.6,270.5h0M545.8,259.8h0M545.9,249.0h0M546.1,249.0h0M546.2,249.0h0M546.4,249.0h0M546.6,249.0h0M546.7,249.0h0M546.9,281.2h0M547.0,259.8h0M547.2,259.8h0M547.4,270.5h0M547.5,249.0h0M547.7,281.2h0M547.8,249.0h0M548.0,249.0h0M548.2,238.2h0M548.3,249.0h0M548.5,238.2h0M548.7,281.2h0M548.8,281.2h0M549.0,238.2h0M549.1,270.5h0M549.3,292.0h0M549.5,259.8h0M549.6,281.2h0M549.8,259.8h0M549.9,249.0h0M550.1,281.2h0M550.3,281.2h0M550.4,238.2h0M550.6,259.8h0M550.7,249.0h0M550.9,292.0h0M551.1,249.0h0M551.2,281.2h0M551.4,249.0h0M551.5,292.0h0M551.7,281.2h0M551.9,281.2h0M552.0,238.2h0M552.2,259.8h0M552.4,249.0h0M552.5,249.0h0M552.7,249.0h0M552.8,249.0h0M553.0,281.2h0M553.2,259.8h0M553.3,249.0h0M553.5,259.8h0M553.6,238.2h0M553.8,249.0h0M554.0,270.5h0M554.1,270.5h0M554.3,281.2h0M554.4,313.5h0M554.6,281.2h0M554.8,281.2h0M554.9,259.8h0M555.1,292.0h0M555.3,249.0h0M555.4,281.2h0M555.6,345.8h0M555.7,292.0h0M555.9,238.2h0M556.1,281.2h0M556.2,259.8h0M556.4,270.5h0M556.5,259.8h0M556.7,281.2h0M556.9,292.0h0M557.0,270.5h0M557.2,292.0h0M557.3,249.0h0M557.5,292.0h0M557.7,302.8h0M557.8,281.2h0M558.0,270.5h0M558.2,259.8h0M558.3,259.8h0M558.5,270.5h0M558.6,259.8h0M558.8,292.0h0M559.0,238.2h0M559.1,259.8h0M559.3,292.0h0M559.4,259.8h0M559.6,249.0h0M559.8,270.5h0M559.9,281.2h0M560.1,259.8h0M560.2,249.0h0M560.4,302.8h0M560.6,292.0h0M560.7,281.2h0M560.9,292.0h0M561.0,249.0h0M561.2,292.0h0M561.4,259.8h0M561.5,259.8h0M561.7,259.8h0M561.9,281.2h0M562.0,281.2h0M562.2,259.8h0M562.3,249.0h0M562.5,302.8h0M562.7,270.5h0M562.8,259.8h0M563.0,281.2h0M563.1,281.2h0M563.3,270.5h0M563.5,249.0h0M563.6,281.2h0M563.8,259.8h0M563.9,302.8h0M564.1,270.5h0M564.3,313.5h0M564.4,302.8h0M564.6,249.0h0M564.8,249.0h0M564.9,270.5h0M565.1,238.2h0M565.2,270.5h0M565.4,281.2h0M565.6,259.8h0M565.7,281.2h0M565.9,249.0h0M566.0,270.5h0M566.2,281.2h0M566.4,238.2h0M566.5,270.5h0M566.7,249.0h0M566.8,259.8h0M567.0,270.5h0M567.2,270.5h0M567.3,259.8h0M567.5,281.2h0M567.6,238.2h0M567.8,270.5h0M568.0,259.8h0M568.1,270.5h0M568.3,238.2h0M568.5,249.0h0M568.6,259.8h0M568.8,249.0h0M568.9,281.2h0M569.1,270.5h0M569.3,281.2h0M569.4,249.0h0M569.6,259.8h0M569.7,281.2h0M569.9,249.0h0M570.1,270.5h0M570.2,249.0h0M570.4,270.5h0M570.5,281.2h0M570.7,270.5h0M570.9,238.2h0M571.0,281.2h0M571.2,259.8h0M571.4,249.0h0M571.5,259.8h0M571.7,281.2h0M571.8,292.0h0M572.0,270.5h0M572.2,249.0h0M572.3,259.8h0M572.5,259.8h0M572.6,292.0h0M572.8,281.2h0M573.0,259.8h0M573.1,259.8h0M573.3,249.0h0M573.4,270.5h0M573.6,249.0h0M573.8,270.5h0M573.9,259.8h0M574.1,238.2h0M574.3,259.8h0M574.4,270.5h0M574.6,259.8h0M574.7,259.8h0M574.9,302.8h0M575.1,313.5h0M575.2,259.8h0M575.4,249.0h0M575.5,259.8h0M575.7,259.8h0M575.9,270.5h0M576.0,270.5h0M576.2,292.0h0M576.3,281.2h0M576.5,270.5h0M576.7,259.8h0M576.8,259.8h0M577.0,281.2h0M577.1,292.0h0M577.3,292.0h0M577.5,270.5h0M577.6,259.8h0M577.8,270.5h0M578.0,259.8h0M578.1,292.0h0M578.3,238.2h0M578.4,270.5h0M578.6,270.5h0M578.8,249.0h0M578.9,249.0h0M579.1,249.0h0M579.2,259.8h0M579.4,270.5h0M579.6,302.8h0M579.7,259.8h0M579.9,249.0h0M580.0,270.5h0M580.2,270.5h0M580.4,249.0h0M580.5,259.8h0M580.7,259.8h0M580.9,259.8h0M581.0,453.2h0M581.2,238.2h0M581.3,249.0h0M581.5,249.0h0M581.7,259.8h0M581.8,249.0h0M582.0,249.0h0M582.1,249.0h0M582.3,238.2h0M582.5,259.8h0M582.6,249.0h0M582.8,259.8h0M582.9,249.0h0M583.1,281.2h0M583.3,249.0h0M583.4,302.8h0M583.6,313.5h0M583.8,249.0h0M583.9,259.8h0M584.1,259.8h0M584.2,259.8h0M584.4,270.5h0M584.6,238.2h0M584.7,249.0h0M584.9,292.0h0M585.0,249.0h0M585.2,292.0h0M585.4,249.0h0M585.5,238.2h0M585.7,270.5h0M585.8,249.0h0M586.0,270.5h0M586.2,270.5h0M586.3,292.0h0M586.5,281.2h0M586.6,249.0h0M586.8,238.2h0M587.0,259.8h0M587.1,259.8h0M587.3,259.8h0M587.5,292.0h0M587.6,270.5h0M587.8,270.5h0M587.9,292.0h0M588.1,281.2h0M588.3,281.2h0M588.4,249.0h0M588.6,238.2h0M588.7,259.8h0M588.9,302.8h0M589.1,249.0h0M589.2,249.0h0M589.4,378.0h0M589.5,249.0h0M589.7,292.0h0M589.9,249.0h0M590.0,270.5h0M590.2,292.0h0M590.4,270.5h0M590.5,281.2h0M590.7,249.0h0M590.8,249.0h0M591.0,249.0h0M591.2,238.2h0M591.3,270.5h0M591.5,249.0h0M591.6,259.8h0M591.8,249.0h0M592.0,259.8h0M592.1,249.0h0M592.3,259.8h0M592.4,249.0h0M592.6,249.0h0M592.8,249.0h0M592.9,249.0h0M593.1,270.5h0M593.2,270.5h0M593.4,238.2h0M593.6,281.2h0M593.7,270.5h0M593.9,238.2h0M594.1,249.0h0M594.2,281.2h0M594.4,249.0h0M594.5,270.5h0M594.7,259.8h0M594.9,302.8h0M595.0,259.8h0M595.2,249.0h0M595.3,410.2h0M595.5,259.8h0M595.7,238.2h0M595.8,270.5h0M596.0,281.2h0M596.1,270.5h0M596.3,259.8h0M596.5,259.8h0M596.6,249.0h0M596.8,292.0h0M597.0,259.8h0M597.1,259.8h0M597.3,259.8h0M597.4,270.5h0M597.6,249.0h0M597.8,249.0h0M597.9,270.5h0M598.1,238.2h0M598.2,249.0h0M598.4,259.8h0M598.6,238.2h0M598.7,249.0h0M598.9,281.2h0M599.0,281.2h0M599.2,281.2h0M599.4,238.2h0M599.5,259.8h0M599.7,249.0h0M599.9,259.8h0M600.0,259.8h0M600.2,259.8h0M600.3,249.0h0M600.5,281.2h0M600.7,259.8h0M600.8,270.5h0M601.0,259.8h0M601.1,249.0h0M601.3,259.8h0M601.5,270.5h0M601.6,259.8h0M601.8,302.8h0M601.9,302.8h0M602.1,249.0h0M602.3,249.0h0M602.4,249.0h0M602.6,259.8h0M602.7,281.2h0M602.9,249.0h0M603.1,270.5h0M603.2,238.2h0M603.4,270.5h0M603.6,249.0h0M603.7,281.2h0M603.9,249.0h0M604.0,270.5h0M604.2,259.8h0M604.4,249.0h0M604.5,238.2h0M604.7,249.0h0M604.8,259.8h0M605.0,270.5h0M605.2,270.5h0M605.3,249.0h0M605.5,259.8h0M605.6,238.2h0M605.8,249.0h0M606.0,335.0h0M606.1,259.8h0M606.3,281.2h0M606.5,270.5h0M606.6,249.0h0M606.8,259.8h0M606.9,313.5h0M607.1,281.2h0M607.3,259.8h0M607.4,259.8h0M607.6,259.8h0M607.7,249.0h0M607.9,259.8h0M608.1,281.2h0M608.2,249.0h0M608.4,249.0h0M608.5,249.0h0M608.7,270.5h0M608.9,249.0h0M609.0,259.8h0M609.2,281.2h0M609.3,249.0h0M609.5,302.8h0M609.7,259.8h0M609.8,249.0h0M610.0,259.8h0M610.2,249.0h0M610.3,259.8h0M610.5,259.8h0M610.6,249.0h0M610.8,270.5h0M611.0,270.5h0M611.1,270.5h0M611.3,270.5h0M611.4,270.5h0M611.6,270.5h0M611.8,249.0h0M611.9,270.5h0M612.1,249.0h0M612.2,249.0h0M612.4,270.5h0M612.6,249.0h0M612.7,270.5h0M612.9,281.2h0M613.1,238.2h0M613.2,259.8h0M613.4,281.2h0M613.5,259.8h0M613.7,259.8h0M613.9,259.8h0M614.0,259.8h0M614.2,259.8h0M614.3,292.0h0M614.5,281.2h0M614.7,249.0h0M614.8,249.0h0M615.0,238.2h0M615.1,238.2h0M615.3,249.0h0M615.5,292.0h0M615.6,249.0h0M615.8,259.8h0M616.0,249.0h0M616.1,270.5h0M616.3,249.0h0M616.4,249.0h0M616.6,249.0h0M616.8,249.0h0M616.9,238.2h0M617.1,249.0h0M617.2,249.0h0M617.4,238.2h0M617.6,270.5h0M617.7,249.0h0M617.9,238.2h0M618.0,281.2h0M618.2,259.8h0M618.4,281.2h0M618.5,259.8h0M618.7,249.0h0M618.8,292.0h0M619.0,259.8h0M619.2,270.5h0M619.3,259.8h0M619.5,249.0h0M619.7,249.0h0M619.8,249.0h0M620.0,249.0h0M620.1,259.8h0M620.3,249.0h0M620.5,270.5h0M620.6,249.0h0M620.8,302.8h0M620.9,249.0h0M621.1,259.8h0M621.3,281.2h0M621.4,270.5h0M621.6,281.2h0M621.7,259.8h0M621.9,249.0h0M622.1,259.8h0M622.2,259.8h0M622.4,238.2h0M622.6,249.0h0M622.7,281.2h0M622.9,281.2h0M623.0,270.5h0M623.2,249.0h0M623.4,270.5h0M623.5,249.0h0M623.7,249.0h0M623.8,249.0h0M624.0,249.0h0M624.2,238.2h0M624.3,292.0h0M624.5,281.2h0M624.6,249.0h0M624.8,259.8h0M625.0,292.0h0M625.1,249.0h0M625.3,259.8h0M625.4,249.0h0M625.6,249.0h0M625.8,249.0h0M625.9,281.2h0M626.1,249.0h0M626.3,238.2h0M626.4,281.2h0M626.6,378.0h0M626.7,259.8h0M626.9,270.5h0M627.1,249.0h0M627.2,281.2h0M627.4,249.0h0M627.5,249.0h0M627.7,238.2h0M627.9,281.2h0M628.0,249.0h0M628.2,292.0h0M628.3,259.8h0M628.5,281.2h0M628.7,249.0h0M628.8,292.0h0M629.0,270.5h0M629.2,281.2h0M629.3,249.0h0M629.5,270.5h0M629.6,281.2h0M629.8,249.0h0M630.0,270.5h0M630.1,249.0h0M630.3,249.0h0M630.4,238.2h0M630.6,259.8h0M630.8,249.0h0M630.9,238.2h0M631.1,259.8h0M631.2,281.2h0M631.4,249.0h0M631.6,259.8h0M631.7,249.0h0M631.9,259.8h0M632.0,249.0h0M632.2,249.0h0M632.4,238.2h0M632.5,259.8h0M632.7,249.0h0M632.9,259.8h0M633.0,249.0h0M633.2,281.2h0M633.3,238.2h0M633.5,249.0h0M633.7,259.8h0M633.8,249.0h0M634.0,249.0h0M634.1,259.8h0M634.3,270.5h0M634.5,270.5h0M634.6,249.0h0M634.8,270.5h0M634.9,238.2h0M635.1,302.8h0M635.3,292.0h0M635.4,292.0h0M635.6,249.0h0M635.8,259.8h0M635.9,302.8h0M636.1,238.2h0M636.2,302.8h0M636.4,292.0h0M636.6,281.2h0M636.7,249.0h0M636.9,270.5h0M637.0,259.8h0M637.2,249.0h0M637.4,249.0h0M637.5,270.5h0M637.7,259.8h0M637.8,249.0h0M638.0,259.8h0M638.2,302.8h0M638.3,249.0h0M638.5,249.0h0M638.7,270.5h0M638.8,270.5h0M639.0,270.5h0M639.1,270.5h0M639.3,249.0h0M639.5,259.8h0M639.6,259.8h0M639.8,259.8h0M639.9,249.0h0M640.1,281.2h0M640.3,249.0h0M640.4,249.0h0M640.6,259.8h0M640.7,270.5h0M640.9,249.0h0M641.1,259.8h0M641.2,249.0h0M641.4,259.8h0M641.5,249.0h0M641.7,238.2h0M641.9,249.0h0M642.0,249.0h0M642.2,249.0h0M642.4,249.0h0M642.5,238.2h0M642.7,259.8h0M642.8,259.8h0M643.0,259.8h0M643.2,259.8h0M643.3,249.0h0M643.5,259.8h0M643.6,259.8h0M643.8,270.5h0M644.0,249.0h0M644.1,249.0h0M644.3,249.0h0M644.4,249.0h0M644.6,259.8h0M644.8,259.8h0M644.9,281.2h0M645.1,270.5h0M645.3,249.0h0M645.4,259.8h0M645.6,249.0h0M645.7,249.0h0M645.9,259.8h0M646.1,292.0h0M646.2,238.2h0M646.4,259.8h0M646.5,249.0h0M646.7,302.8h0M646.9,259.8h0M647.0,238.2h0M647.2,259.8h0M647.3,249.0h0M647.5,249.0h0M647.7,281.2h0M647.8,259.8h0M648.0,281.2h0M648.1,270.5h0M648.3,302.8h0M648.5,259.8h0M648.6,270.5h0M648.8,238.2h0M649.0,270.5h0M649.1,259.8h0M649.3,270.5h0M649.4,238.2h0M649.6,270.5h0M649.8,249.0h0M649.9,249.0h0M650.1,292.0h0M650.2,249.0h0M650.4,292.0h0M650.6,259.8h0M650.7,249.0h0M650.9,270.5h0M651.0,259.8h0M651.2,238.2h0M651.4,281.2h0M651.5,292.0h0M651.7,281.2h0M651.9,270.5h0M652.0,259.8h0M652.2,281.2h0M652.3,270.5h0M652.5,238.2h0M652.7,292.0h0M652.8,249.0h0M653.0,259.8h0M653.1,259.8h0M653.3,259.8h0M653.5,249.0h0M653.6,281.2h0M653.8,249.0h0M653.9,259.8h0M654.1,249.0h0M654.3,281.2h0M654.4,292.0h0M654.6,270.5h0M654.8,281.2h0M654.9,281.2h0M655.1,270.5h0M655.2,270.5h0M655.4,281.2h0M655.6,249.0h0M655.7,270.5h0M655.9,249.0h0M656.0,259.8h0M656.2,249.0h0M656.4,281.2h0M656.5,270.5h0M656.7,281.2h0M656.8,281.2h0M657.0,249.0h0M657.2,249.0h0M657.3,238.2h0M657.5,270.5h0M657.6,259.8h0M657.8,270.5h0M658.0,249.0h0M658.1,292.0h0M658.3,313.5h0M658.5,302.8h0M658.6,281.2h0M658.8,292.0h0M658.9,249.0h0M659.1,270.5h0M659.3,302.8h0M659.4,270.5h0M659.6,270.5h0M659.7,249.0h0M659.9,259.8h0M660.1,259.8h0M660.2,249.0h0M660.4,238.2h0M660.5,281.2h0M660.7,281.2h0M660.9,249.0h0M661.0,259.8h0M661.2,259.8h0M661.4,270.5h0M661.5,259.8h0M661.7,259.8h0M661.8,270.5h0M662.0,249.0h0M662.2,259.8h0M662.3,281.2h0M662.5,281.2h0M662.6,270.5h0M662.8,249.0h0M663.0,281.2h0M663.1,345.8h0M663.3,281.2h0M663.4,281.2h0M663.6,249.0h0M663.8,259.8h0M663.9,259.8h0M664.1,281.2h0M664.2,259.8h0M664.4,238.2h0M664.6,259.8h0M664.7,238.2h0M664.9,249.0h0M665.1,259.8h0M665.2,249.0h0M665.4,238.2h0M665.5,249.0h0M665.7,249.0h0M665.9,249.0h0M666.0,259.8h0M666.2,238.2h0M666.3,238.2h0M666.5,249.0h0M666.7,270.5h0M666.8,270.5h0M667.0,281.2h0M667.1,238.2h0M667.3,281.2h0M667.5,270.5h0M667.6,281.2h0M667.8,281.2h0M668.0,249.0h0M668.1,259.8h0M668.3,259.8h0M668.4,238.2h0M668.6,259.8h0M668.8,249.0h0M668.9,270.5h0M669.1,259.8h0M669.2,292.0h0M669.4,238.2h0M669.6,259.8h0M669.7,270.5h0M669.9,259.8h0M670.0,249.0h0M670.2,259.8h0M670.4,259.8h0M670.5,259.8h0M670.7,249.0h0M670.9,259.8h0M671.0,302.8h0M671.2,249.0h0M671.3,270.5h0M671.5,238.2h0M671.7,270.5h0M671.8,249.0h0M672.0,259.8h0M672.1,259.8h0M672.3,249.0h0M672.5,249.0h0M672.6,270.5h0M672.8,259.8h0M672.9,281.2h0M673.1,259.8h0M673.3,292.0h0M673.4,259.8h0M673.6,270.5h0M673.7,259.8h0M673.9,249.0h0M674.1,249.0h0M674.2,238.2h0M674.4,249.0h0M674.6,281.2h0M674.7,249.0h0M674.9,292.0h0M675.0,249.0h0M675.2,270.5h0M675.4,249.0h0M675.5,249.0h0M675.7,249.0h0M675.8,249.0h0M676.0,249.0h0M676.2,292.0h0M676.3,238.2h0M676.5,335.0h0M676.6,238.2h0M676.8,292.0h0M677.0,249.0h0M677.1,259.8h0M677.3,313.5h0M677.5,249.0h0M677.6,249.0h0M677.8,249.0h0M677.9,270.5h0M678.1,249.0h0M678.3,302.8h0M678.4,249.0h0M678.6,249.0h0M678.7,281.2h0M678.9,270.5h0M679.1,249.0h0M679.2,270.5h0M679.4,249.0h0M679.5,302.8h0M679.7,259.8h0M679.9,292.0h0M680.0,259.8h0M680.2,259.8h0M680.4,270.5h0M680.5,259.8h0M680.7,238.2h0M680.8,259.8h0M681.0,249.0h0M681.2,259.8h0M681.3,270.5h0M681.5,259.8h0M681.6,281.2h0M681.8,249.0h0M682.0,238.2h0M682.1,238.2h0M682.3,238.2h0M682.4,249.0h0M682.6,249.0h0M682.8,249.0h0M682.9,270.5h0M683.1,281.2h0M683.2,270.5h0M683.4,281.2h0M683.6,281.2h0M683.7,270.5h0M683.9,259.8h0M684.1,259.8h0M684.2,249.0h0M684.4,238.2h0M684.5,281.2h0M684.7,249.0h0M684.9,313.5h0M685.0,259.8h0M685.2,238.2h0M685.3,270.5h0M685.5,270.5h0M685.7,302.8h0M685.8,259.8h0M686.0,281.2h0M686.1,259.8h0M686.3,249.0h0M686.5,259.8h0M686.6,270.5h0M686.8,292.0h0M687.0,270.5h0M687.1,292.0h0M687.3,259.8h0M687.4,259.8h0M687.6,259.8h0M687.8,270.5h0M687.9,249.0h0M688.1,238.2h0M688.2,259.8h0M688.4,281.2h0M688.6,281.2h0M688.7,270.5h0M688.9,292.0h0M689.0,270.5h0M689.2,292.0h0M689.4,270.5h0M689.5,259.8h0M689.7,270.5h0M689.8,313.5h0M690.0,238.2h0M690.2,249.0h0M690.3,292.0h0M690.5,259.8h0M690.7,249.0h0M690.8,270.5h0M691.0,249.0h0M691.1,259.8h0M691.3,249.0h0M691.5,249.0h0M691.6,249.0h0M691.8,249.0h0M691.9,249.0h0M692.1,249.0h0M692.3,270.5h0M692.4,249.0h0M692.6,292.0h0M692.7,302.8h0M692.9,292.0h0M693.1,270.5h0M693.2,281.2h0M693.4,249.0h0M693.6,281.2h0M693.7,259.8h0M693.9,259.8h0M694.0,259.8h0M694.2,249.0h0M694.4,259.8h0M694.5,249.0h0M694.7,270.5h0M694.8,259.8h0M695.0,249.0h0M695.2,281.2h0M695.3,259.8h0M695.5,292.0h0M695.6,292.0h0M695.8,270.5h0M696.0,259.8h0M696.1,249.0h0M696.3,238.2h0M696.5,270.5h0M696.6,249.0h0M696.8,259.8h0M696.9,270.5h0M697.1,270.5h0M697.3,292.0h0M697.4,249.0h0M697.6,292.0h0M697.7,249.0h0M697.9,270.5h0M698.1,259.8h0M698.2,292.0h0M698.4,281.2h0M698.5,259.8h0M698.7,249.0h0M698.9,292.0h0M699.0,367.2h0M699.2,249.0h0M699.3,259.8h0M699.5,249.0h0M699.7,259.8h0M699.8,249.0h0M700.0,259.8h0M700.2,292.0h0M700.3,281.2h0M700.5,281.2h0M700.6,270.5h0M700.8,270.5h0M701.0,259.8h0M701.1,292.0h0M701.3,249.0h0M701.4,249.0h0M701.6,249.0h0M701.8,259.8h0M701.9,238.2h0M702.1,292.0h0M702.2,249.0h0M702.4,270.5h0M702.6,259.8h0M702.7,281.2h0M702.9,270.5h0M703.1,270.5h0M703.2,259.8h0M703.4,259.8h0M703.5,249.0h0M703.7,259.8h0M703.9,249.0h0M704.0,292.0h0M704.2,281.2h0M704.3,249.0h0M704.5,238.2h0M704.7,259.8h0M704.8,259.8h0M705.0,259.8h0M705.1,249.0h0M705.3,259.8h0M705.5,249.0h0M705.6,249.0h0M705.8,238.2h0M705.9,259.8h0M706.1,238.2h0M706.3,270.5h0M706.4,259.8h0M706.6,249.0h0M706.8,259.8h0M706.9,281.2h0M707.1,249.0h0M707.2,249.0h0M707.4,270.5h0M707.6,281.2h0M707.7,249.0h0M707.9,249.0h0M708.0,356.5h0M708.2,238.2h0M708.4,249.0h0M708.5,259.8h0M708.7,259.8h0M708.8,259.8h0M709.0,281.2h0M709.2,281.2h0M709.3,259.8h0M709.5,249.0h0M709.7,281.2h0M709.8,249.0h0M710.0,270.5h0M710.1,302.8h0M710.3,281.2h0M710.5,367.2h0M710.6,249.0h0M710.8,270.5h0M710.9,259.8h0M711.1,249.0h0M711.3,249.0h0M711.4,249.0h0M711.6,249.0h0M711.7,249.0h0M711.9,270.5h0M712.1,281.2h0M712.2,270.5h0M712.4,259.8h0M712.5,292.0h0M712.7,238.2h0M712.9,249.0h0M713.0,281.2h0M713.2,270.5h0M713.4,292.0h0M713.5,302.8h0M713.7,270.5h0M713.8,292.0h0M714.0,238.2h0M714.2,281.2h0M714.3,281.2h0M714.5,281.2h0M714.6,270.5h0M714.8,259.8h0M715.0,259.8h0M715.1,238.2h0M715.3,259.8h0M715.4,292.0h0M715.6,270.5h0M715.8,281.2h0M715.9,238.2h0M716.1,249.0h0M716.3,249.0h0M716.4,270.5h0M716.6,249.0h0M716.7,270.5h0M716.9,259.8h0M717.1,292.0h0M717.2,249.0h0M717.4,249.0h0M717.5,238.2h0M717.7,259.8h0M717.9,270.5h0M718.0,259.8h0M718.2,259.8h0M718.3,270.5h0M718.5,302.8h0M718.7,249.0h0M718.8,302.8h0M719.0,313.5h0M719.2,249.0h0M719.3,249.0h0M719.5,270.5h0M719.6,270.5h0M719.8,313.5h0M720.0,249.0h0M720.1,281.2h0M720.3,270.5h0M720.4,259.8h0M720.6,249.0h0M720.8,292.0h0M720.9,270.5h0M721.1,249.0h0M721.2,270.5h0M721.4,259.8h0M721.6,249.0h0M721.7,292.0h0M721.9,270.5h0M722.0,259.8h0M722.2,249.0h0M722.4,292.0h0M722.5,302.8h0M722.7,249.0h0M722.9,249.0h0M723.0,259.8h0M723.2,281.2h0M723.3,292.0h0M723.5,249.0h0M723.7,270.5h0M723.8,238.2h0M724.0,281.2h0M724.1,292.0h0M724.3,249.0h0M724.5,259.8h0M724.6,249.0h0M724.8,249.0h0M724.9,302.8h0M725.1,259.8h0M725.3,238.2h0M725.4,249.0h0M725.6,281.2h0M725.8,281.2h0M725.9,238.2h0M726.1,292.0h0M726.2,270.5h0M726.4,345.8h0M726.6,281.2h0M726.7,281.2h0M726.9,249.0h0M727.0,270.5h0M727.2,259.8h0M727.4,238.2h0M727.5,270.5h0M727.7,249.0h0M727.8,302.8h0M728.0,249.0h0M728.2,259.8h0M728.3,259.8h0M728.5,281.2h0M728.6,249.0h0M728.8,259.8h0M729.0,507.0h0M729.1,281.2h0M729.3,249.0h0M729.5,238.2h0M729.6,238.2h0M729.8,259.8h0M729.9,249.0h0M730.1,259.8h0M730.3,249.0h0M730.4,249.0h0M730.6,270.5h0M730.7,313.5h0M730.9,238.2h0M731.1,270.5h0M731.2,259.8h0M731.4,378.0h0M731.5,281.2h0M731.7,249.0h0M731.9,249.0h0M732.0,281.2h0M732.2,259.8h0M732.4,313.5h0M732.5,270.5h0M732.7,270.5h0M732.8,281.2h0M733.0,249.0h0M733.2,270.5h0M733.3,249.0h0M733.5,249.0h0M733.6,259.8h0M733.8,249.0h0M734.0,249.0h0M734.1,270.5h0M734.3,270.5h0M734.4,249.0h0M734.6,259.8h0M734.8,292.0h0M734.9,249.0h0M735.1,259.8h0M735.3,270.5h0M735.4,249.0h0M735.6,259.8h0M735.7,249.0h0M735.9,270.5h0M736.1,249.0h0M736.2,281.2h0M736.4,249.0h0M736.5,281.2h0M736.7,249.0h0M736.9,259.8h0M737.0,249.0h0M737.2,249.0h0M737.3,259.8h0M737.5,313.5h0M737.7,259.8h0M737.8,281.2h0M738.0,281.2h0M738.1,249.0h0M738.3,249.0h0M738.5,302.8h0M738.6,259.8h0M738.8,259.8h0M739.0,249.0h0M739.1,259.8h0M739.3,238.2h0M739.4,249.0h0M739.6,249.0h0M739.8,249.0h0M739.9,249.0h0M740.1,281.2h0M740.2,270.5h0M740.4,270.5h0M740.6,259.8h0M740.7,281.2h0M740.9,249.0h0M741.0,259.8h0M741.2,249.0h0M741.4,270.5h0M741.5,249.0h0M741.7,249.0h0M741.9,259.8h0M742.0,259.8h0M742.2,259.8h0M742.3,259.8h0M742.5,249.0h0M742.7,259.8h0M742.8,249.0h0M743.0,270.5h0M743.1,249.0h0M743.3,249.0h0M743.5,249.0h0M743.6,249.0h0M743.8,270.5h0M743.9,259.8h0M744.1,259.8h0M744.3,249.0h0M744.4,249.0h0M744.6,281.2h0M744.8,249.0h0M744.9,249.0h0M745.1,259.8h0M745.2,249.0h0M745.4,249.0h0M745.6,259.8h0M745.7,270.5h0M745.9,238.2h0M746.0,259.8h0M746.2,249.0h0M746.4,259.8h0M746.5,259.8h0M746.7,259.8h0M746.8,259.8h0M747.0,259.8h0M747.2,270.5h0M747.3,345.8h0M747.5,259.8h0M747.6,249.0h0M747.8,249.0h0M748.0,238.2h0M748.1,270.5h0M748.3,249.0h0M748.5,281.2h0M748.6,249.0h0M748.8,281.2h0M748.9,259.8h0M749.1,259.8h0M749.3,281.2h0M749.4,238.2h0M749.6,259.8h0M749.7,238.2h0M749.9,249.0h0M750.1,281.2h0M750.2,259.8h0M750.4,270.5h0M750.5,281.2h0M750.7,249.0h0M750.9,249.0h0M751.0,249.0h0M751.2,238.2h0M751.4,259.8h0M751.5,259.8h0M751.7,238.2h0M751.8,259.8h0M752.0,281.2h0M752.2,259.8h0M752.3,249.0h0M752.5,270.5h0M752.6,259.8h0M752.8,249.0h0M753.0,259.8h0M753.1,249.0h0M753.3,259.8h0M753.4,259.8h0M753.6,249.0h0M753.8,270.5h0M753.9,259.8h0M754.1,292.0h0M754.2,249.0h0M754.4,238.2h0M754.6,270.5h0M754.7,249.0h0M754.9,259.8h0M755.1,249.0h0M755.2,249.0h0M755.4,367.2h0M755.5,259.8h0M755.7,281.2h0M755.9,249.0h0M756.0,249.0h0M756.2,259.8h0M756.3,292.0h0M756.5,259.8h0M756.7,238.2h0M756.8,259.8h0M757.0,259.8h0M757.1,281.2h0M757.3,259.8h0M757.5,238.2h0M757.6,270.5h0M757.8,249.0h0M758.0,249.0h0M758.1,238.2h0M758.3,259.8h0M758.4,249.0h0M758.6,270.5h0M758.8,249.0h0M758.9,292.0h0M759.1,281.2h0M759.2,259.8h0M759.4,249.0h0M759.6,249.0h0M759.7,259.8h0M759.9,249.0h0M760.0,249.0h0M760.2,238.2h0M760.4,249.0h0M760.5,249.0h0M760.7,281.2h0M760.9,259.8h0M761.0,249.0h0M761.2,249.0h0M761.3,249.0h0M761.5,249.0h0M761.7,238.2h0M761.8,281.2h0M762.0,249.0h0M762.1,281.2h0M762.3,281.2h0M762.5,270.5h0M762.6,249.0h0M762.8,292.0h0M762.9,259.8h0M763.1,302.8h0M763.3,249.0h0M763.4,259.8h0M763.6,259.8h0M763.7,249.0h0M763.9,259.8h0M764.1,259.8h0M764.2,302.8h0M764.4,292.0h0M764.6,238.2h0M764.7,259.8h0M764.9,249.0h0M765.0,270.5h0M765.2,249.0h0M765.4,249.0h0M765.5,259.8h0M765.7,281.2h0M765.8,281.2h0M766.0,281.2h0M766.2,238.2h0M766.3,249.0h0M766.5,270.5h0M766.6,249.0h0M766.8,281.2h0M767.0,249.0h0M767.1,281.2h0M767.3,238.2h0M767.5,292.0h0M767.6,249.0h0M767.8,249.0h0M767.9,249.0h0M768.1,249.0h0M768.3,259.8h0M768.4,259.8h0M768.6,270.5h0M768.7,281.2h0M768.9,292.0h0M769.1,259.8h0M769.2,249.0h0M769.4,249.0h0M769.5,345.8h0M769.7,249.0h0M769.9,270.5h0M770.0,238.2h0M770.2,249.0h0M770.3,249.0h0M770.5,249.0h0M770.7,249.0h0M770.8,249.0h0M771.0,249.0h0M771.2,249.0h0M771.3,238.2h0M771.5,302.8h0M771.6,259.8h0M771.8,281.2h0M772.0,249.0h0M772.1,292.0h0M772.3,270.5h0M772.4,249.0h0M772.6,249.0h0M772.8,270.5h0M772.9,238.2h0M773.1,259.8h0M773.2,270.5h0M773.4,270.5h0M773.6,270.5h0M773.7,259.8h0M773.9,238.2h0M774.1,259.8h0M774.2,249.0h0M774.4,270.5h0M774.5,270.5h0M774.7,302.8h0M774.9,259.8h0M775.0,259.8h0M775.2,249.0h0M775.3,270.5h0M775.5,259.8h0M775.7,249.0h0M775.8,259.8h0M776.0,259.8h0M776.1,281.2h0M776.3,249.0h0M776.5,259.8h0M776.6,259.8h0M776.8,249.0h0M777.0,249.0h0M777.1,249.0h0M777.3,259.8h0M777.4,259.8h0M777.6,270.5h0M777.8,270.5h0M777.9,238.2h0M778.1,270.5h0M778.2,249.0h0M778.4,259.8h0M778.6,345.8h0M778.7,259.8h0M778.9,259.8h0M779.0,238.2h0M779.2,281.2h0M779.4,238.2h0M779.5,259.8h0M779.7,249.0h0M779.8,259.8h0M780.0,249.0h0M780.2,259.8h0M780.3,270.5h0M780.5,259.8h0M780.7,292.0h0M780.8,249.0h0M781.0,259.8h0M781.1,249.0h0M781.3,302.8h0M781.5,238.2h0M781.6,281.2h0M781.8,238.2h0M781.9,270.5h0M782.1,238.2h0M782.3,259.8h0M782.4,249.0h0M782.6,270.5h0M782.7,249.0h0M782.9,238.2h0M783.1,302.8h0M783.2,259.8h0M783.4,302.8h0M783.6,270.5h0M783.7,249.0h0M783.9,249.0h0M784.0,292.0h0M784.2,270.5h0M784.4,249.0h0M784.5,302.8h0M784.7,238.2h0M784.8,281.2h0M785.0,281.2h0M785.2,249.0h0M785.3,249.0h0M785.5,249.0h0M785.6,259.8h0M785.8,259.8h0M786.0,249.0h0M786.1,238.2h0M786.3,259.8h0M786.4,249.0h0M786.6,249.0h0M786.8,249.0h0M786.9,249.0h0M787.1,270.5h0M787.3,249.0h0M787.4,281.2h0M787.6,238.2h0M787.7,270.5h0M787.9,292.0h0M788.1,281.2h0M788.2,270.5h0M788.4,259.8h0M788.5,259.8h0M788.7,270.5h0M788.9,249.0h0M789.0,259.8h0M789.2,281.2h0M789.3,249.0h0M789.5,259.8h0M789.7,378.0h0M789.8,292.0h0M790.0,249.0h0M790.2,249.0h0M790.3,249.0h0M790.5,281.2h0M790.6,249.0h0M790.8,270.5h0M791.0,270.5h0M791.1,292.0h0M791.3,259.8h0M791.4,249.0h0M791.6,249.0h0M791.8,249.0h0M791.9,249.0h0M792.1,259.8h0M792.2,281.2h0M792.4,259.8h0M792.6,249.0h0M792.7,292.0h0M792.9,270.5h0M793.0,259.8h0M793.2,249.0h0M793.4,270.5h0M793.5,259.8h0M793.7,270.5h0M793.9,259.8h0M794.0,270.5h0M794.2,238.2h0M794.3,259.8h0M794.5,259.8h0M794.7,281.2h0M794.8,249.0h0M795.0,259.8h0M795.1,249.0h0M795.3,292.0h0M795.5,249.0h0M795.6,249.0h0M795.8,270.5h0M795.9,270.5h0M796.1,249.0h0M796.3,249.0h0M796.4,259.8h0M796.6,249.0h0M796.8,249.0h0M796.9,281.2h0M797.1,249.0h0M797.2,270.5h0M797.4,270.5h0M797.6,270.5h0M797.7,249.0h0M797.9,249.0h0M798.0,259.8h0M798.2,281.2h0M798.4,249.0h0M798.5,249.0h0M798.7,259.8h0M798.8,249.0h0M799.0,249.0h0M799.2,259.8h0M799.3,249.0h0M799.5,249.0h0M799.7,259.8h0M799.8,249.0h0M800.0,249.0h0M800.1,281.2h0M800.3,259.8h0M800.5,259.8h0M800.6,259.8h0M800.8,249.0h0M800.9,249.0h0M801.1,249.0h0M801.3,249.0h0M801.4,259.8h0M801.6,249.0h0M801.7,249.0h0M801.9,249.0h0M802.1,259.8h0M802.2,249.0h0M802.4,238.2h0M802.5,249.0h0M802.7,281.2h0M802.9,270.5h0M803.0,259.8h0M803.2,249.0h0M803.4,259.8h0M803.5,238.2h0M803.7,249.0h0M803.8,259.8h0M804.0,249.0h0M804.2,259.8h0M804.3,259.8h0M804.5,238.2h0M804.6,249.0h0M804.8,259.8h0M805.0,292.0h0M805.1,238.2h0M805.3,259.8h0M805.4,249.0h0M805.6,249.0h0M805.8,270.5h0M805.9,259.8h0M806.1,249.0h0M806.3,249.0h0M806.4,281.2h0M806.6,281.2h0M806.7,249.0h0M806.9,259.8h0M807.1,249.0h0M807.2,249.0h0M807.4,270.5h0M807.5,249.0h0M807.7,249.0h0M807.9,249.0h0M808.0,281.2h0M808.2,281.2h0M808.3,259.8h0M808.5,259.8h0M808.7,259.8h0M808.8,249.0h0M809.0,270.5h0M809.1,259.8h0M809.3,292.0h0M809.5,270.5h0M809.6,270.5h0M809.8,270.5h0M810.0,292.0h0M810.1,281.2h0M810.3,292.0h0M810.4,249.0h0M810.6,249.0h0M810.8,249.0h0M810.9,270.5h0M811.1,259.8h0M811.2,238.2h0M811.4,259.8h0M811.6,270.5h0M811.7,324.2h0M811.9,281.2h0M812.0,270.5h0M812.2,249.0h0M812.4,259.8h0M812.5,259.8h0M812.7,259.8h0M812.9,249.0h0M813.0,238.2h0M813.2,281.2h0M813.3,281.2h0M813.5,270.5h0M813.7,249.0h0M813.8,249.0h0M814.0,302.8h0M814.1,270.5h0M814.3,270.5h0M814.5,238.2h0M814.6,249.0h0M814.8,292.0h0M814.9,270.5h0M815.1,259.8h0M815.3,270.5h0M815.4,249.0h0M815.6,302.8h0M815.8,259.8h0M815.9,259.8h0M816.1,249.0h0M816.2,259.8h0M816.4,259.8h0M816.6,259.8h0M816.7,249.0h0M816.9,259.8h0M817.0,249.0h0M817.2,270.5h0M817.4,249.0h0M817.5,324.2h0M817.7,249.0h0M817.8,259.8h0M818.0,249.0h0M818.2,259.8h0M818.3,249.0h0M818.5,249.0h0M818.6,259.8h0M818.8,281.2h0M819.0,281.2h0M819.1,259.8h0M819.3,249.0h0M819.5,249.0h0M819.6,259.8h0M819.8,259.8h0M819.9,249.0h0M820.1,259.8h0M820.3,249.0h0M820.4,259.8h0M820.6,249.0h0M820.7,249.0h0M820.9,292.0h0M821.1,259.8h0M821.2,270.5h0M821.4,238.2h0M821.5,281.2h0M821.7,238.2h0M821.9,259.8h0M822.0,259.8h0M822.2,249.0h0M822.4,249.0h0M822.5,249.0h0M822.7,259.8h0M822.8,249.0h0M823.0,238.2h0M823.2,270.5h0M823.3,249.0h0M823.5,259.8h0M823.6,270.5h0M823.8,281.2h0M824.0,249.0h0M824.1,292.0h0M824.3,259.8h0M824.4,259.8h0M824.6,249.0h0M824.8,249.0h0M824.9,259.8h0M825.1,270.5h0M825.2,249.0h0M825.4,292.0h0M825.6,270.5h0M825.7,238.2h0M825.9,270.5h0M826.1,249.0h0M826.2,249.0h0M826.4,259.8h0M826.5,281.2h0M826.7,249.0h0M826.9,249.0h0M827.0,238.2h0M827.2,249.0h0M827.3,259.8h0M827.5,259.8h0M827.7,259.8h0M827.8,238.2h0M828.0,259.8h0M828.1,259.8h0M828.3,281.2h0M828.5,249.0h0M828.6,270.5h0M828.8,259.8h0M829.0,270.5h0M829.1,259.8h0M829.3,270.5h0M829.4,302.8h0M829.6,249.0h0M829.8,259.8h0M829.9,281.2h0M830.1,259.8h0M830.2,302.8h0M830.4,259.8h0M830.6,281.2h0M830.7,249.0h0M830.9,270.5h0M831.0,259.8h0M831.2,249.0h0M831.4,302.8h0M831.5,238.2h0M831.7,249.0h0M831.9,281.2h0M832.0,259.8h0M832.2,259.8h0M832.3,249.0h0M832.5,249.0h0M832.7,249.0h0M832.8,259.8h0M833.0,238.2h0M833.1,249.0h0M833.3,259.8h0M833.5,270.5h0M833.6,302.8h0M833.8,270.5h0M833.9,249.0h0M834.1,249.0h0M834.3,270.5h0M834.4,292.0h0M834.6,249.0h0M834.7,259.8h0M834.9,292.0h0M835.1,270.5h0M835.2,281.2h0M835.4,259.8h0M835.6,249.0h0M835.7,259.8h0M835.9,249.0h0M836.0,249.0h0M836.2,249.0h0M836.4,249.0h0M836.5,249.0h0M836.7,249.0h0M836.8,259.8h0M837.0,259.8h0M837.2,238.2h0M837.3,302.8h0M837.5,270.5h0M837.6,270.5h0M837.8,249.0h0M838.0,281.2h0M838.1,259.8h0M838.3,270.5h0M838.5,281.2h0M838.6,238.2h0M838.8,281.2h0M838.9,281.2h0M839.1,259.8h0M839.3,249.0h0M839.4,259.8h0M839.6,249.0h0M839.7,270.5h0M839.9,259.8h0M840.1,259.8h0M840.2,302.8h0M840.4,249.0h0M840.5,238.2h0M840.7,249.0h0M840.9,249.0h0M841.0,292.0h0M841.2,249.0h0M841.4,259.8h0M841.5,270.5h0M841.7,249.0h0M841.8,270.5h0M842.0,270.5h0M842.2,259.8h0M842.3,259.8h0M842.5,270.5h0M842.6,270.5h0M842.8,281.2h0M843.0,259.8h0M843.1,238.2h0M843.3,270.5h0M843.4,292.0h0M843.6,281.2h0M843.8,259.8h0M843.9,270.5h0M844.1,292.0h0M844.2,259.8h0M844.4,249.0h0M844.6,238.2h0M844.7,270.5h0M844.9,249.0h0M845.1,281.2h0M845.2,249.0h0M845.4,249.0h0M845.5,292.0h0M845.7,259.8h0M845.9,270.5h0M846.0,270.5h0M846.2,292.0h0M846.3,249.0h0M846.5,238.2h0M846.7,238.2h0M846.8,292.0h0M847.0,259.8h0M847.1,270.5h0M847.3,270.5h0M847.5,270.5h0M847.6,281.2h0M847.8,259.8h0M848.0,249.0h0M848.1,259.8h0M848.3,259.8h0M848.4,249.0h0M848.6,292.0h0M848.8,292.0h0M848.9,281.2h0M849.1,249.0h0M849.2,249.0h0M849.4,270.5h0M849.6,270.5h0M849.7,270.5h0M849.9,292.0h0M850.0,249.0h0M850.2,238.2h0M850.4,259.8h0M850.5,249.0h0M850.7,249.0h0M850.8,270.5h0M851.0,259.8h0M851.2,281.2h0M851.3,281.2h0M851.5,259.8h0M851.7,281.2h0M851.8,270.5h0M852.0,259.8h0M852.1,281.2h0M852.3,259.8h0M852.5,259.8h0M852.6,281.2h0M852.8,259.8h0M852.9,249.0h0M853.1,259.8h0M853.3,259.8h0M853.4,249.0h0M853.6,270.5h0M853.7,259.8h0M853.9,281.2h0M854.1,292.0h0M854.2,249.0h0M854.4,249.0h0M854.6,302.8h0M854.7,249.0h0M854.9,281.2h0M855.0,259.8h0M855.2,270.5h0M855.4,249.0h0M855.5,259.8h0M855.7,259.8h0M855.8,259.8h0M856.0,270.5h0M856.2,249.0h0M856.3,249.0h0M856.5,270.5h0M856.6,249.0h0M856.8,259.8h0M857.0,281.2h0M857.1,270.5h0M857.3,259.8h0M857.5,238.2h0M857.6,270.5h0M857.8,249.0h0M857.9,249.0h0M858.1,238.2h0M858.3,249.0h0M858.4,238.2h0M858.6,259.8h0M858.7,249.0h0M858.9,249.0h0M859.1,281.2h0M859.2,238.2h0M859.4,249.0h0M859.5,270.5h0M859.7,281.2h0M859.9,292.0h0M860.0,259.8h0M860.2,249.0h0M860.3,345.8h0M860.5,292.0h0M860.7,270.5h0M860.8,281.2h0M861.0,292.0h0M861.2,259.8h0M861.3,270.5h0M861.5,302.8h0M861.6,249.0h0M861.8,249.0h0M862.0,281.2h0M862.1,249.0h0M862.3,259.8h0M862.4,259.8h0M862.6,270.5h0M862.8,238.2h0M862.9,259.8h0M863.1,259.8h0M863.2,249.0h0M863.4,259.8h0M863.6,281.2h0M863.7,238.2h0M863.9,249.0h0M864.1,259.8h0M864.2,259.8h0M864.4,302.8h0M864.5,249.0h0M864.7,249.0h0M864.9,249.0h0M865.0,292.0h0M865.2,259.8h0M865.3,324.2h0M865.5,281.2h0" stroke="#38bbed" stroke-width="3.0" stroke-linecap="round" fill="none"/>
<polyline points="60.7,399.5 60.8,399.5 61.0,370.8 61.1,359.2 61.3,356.5 61.5,304.9 61.6,294.2 61.8,298.5 61.9,285.6 62.1,285.6 62.3,315.6 62.4,307.0 62.6,320.0 62.8,320.0 62.9,302.8 63.1,296.3 63.2,298.5 63.4,277.0 63.6,276.9 63.7,277.0 63.9,255.4 64.0,264.1 64.2,272.6 64.4,289.9 64.5,289.9 64.7,296.3 64.8,302.8 65.0,313.5 65.2,304.9 65.3,395.2 65.5,405.9 65.7,408.1 65.8,408.1 66.0,403.8 66.1,311.4 66.3,302.8 66.5,283.4 66.6,274.8 66.8,300.6 66.9,384.4 67.1,373.7 67.3,395.2 67.4,401.6 67.6,369.4 67.7,289.9 67.9,313.5 68.1,294.2 68.2,315.7 68.4,317.8 68.5,335.0 68.7,328.5 68.9,328.6 69.0,317.8 69.2,343.6 69.4,354.3 69.5,352.2 69.7,382.3 69.8,360.8 70.0,386.6 70.2,363.0 70.3,350.1 70.5,315.7 70.6,339.3 70.8,313.5 71.0,328.6 71.1,350.1 71.3,354.4 71.4,343.6 71.6,317.8 71.8,296.3 71.9,354.3 72.1,373.7 72.3,373.7 72.4,382.3 72.6,386.6 72.7,375.9 72.9,386.6 73.1,399.5 73.2,397.3 73.4,410.2 73.5,365.1 73.7,369.4 73.9,356.5 74.0,371.6 74.2,384.4 74.3,365.1 74.5,343.6 74.7,347.9 74.8,341.5 75.0,341.5 75.2,360.8 75.3,358.7 75.5,367.2 75.6,350.0 75.8,332.9 76.0,322.1 76.1,313.5 76.3,300.6 76.4,326.4 76.6,337.2 76.8,345.8 76.9,388.8 77.1,384.5 77.2,433.9 77.4,438.2 77.6,416.7 77.7,369.4 77.9,382.3 78.0,309.2 78.2,307.0 78.4,307.1 78.5,322.1 78.7,294.1 78.9,328.6 79.0,322.1 79.2,332.9 79.3,315.6 79.5,317.8 79.7,281.2 79.8,274.8 80.0,287.7 80.1,307.1 80.3,332.9 80.5,369.4 80.6,356.5 80.8,332.9 80.9,335.0 81.1,324.2 81.3,304.9 81.4,313.5 81.6,335.0 81.8,335.0 81.9,322.1 82.1,328.5 82.2,350.0 82.4,343.6 82.6,339.3 82.7,339.3 82.9,330.7 83.0,300.6 83.2,309.2 83.4,322.1 83.5,339.3 83.7,332.9 83.8,358.6 84.0,347.9 84.2,335.0 84.3,397.4 84.5,416.7 84.7,390.9 84.8,378.0 85.0,380.2 85.1,309.2 85.3,307.0 85.5,330.7 85.6,347.9 85.8,330.7 85.9,339.3 86.1,337.2 86.3,320.0 86.4,315.7 86.6,317.8 86.7,322.1 86.9,317.8 87.1,315.6 87.2,302.8 87.4,335.0 87.5,320.0 87.7,319.9 87.9,315.7 88.0,343.6 88.2,311.4 88.4,367.2 88.5,354.4 88.7,405.9 88.8,401.6 89.0,425.3 89.2,367.2 89.3,363.0 89.5,328.6 89.6,313.5 89.8,311.4 90.0,307.1 90.1,322.1 90.3,390.9 90.4,403.8 90.6,382.3 90.8,461.9 90.9,476.9 91.1,410.2 91.3,425.3 91.4,457.6 91.6,410.3 91.7,436.1 91.9,442.5 92.1,425.3 92.2,427.5 92.4,399.5 92.5,371.6 92.7,378.0 92.9,384.4 93.0,386.6 93.2,412.4 93.3,408.1 93.5,412.4 93.7,403.8 93.8,384.4 94.0,382.3 94.1,382.3 94.3,382.3 94.5,378.0 94.6,382.3 94.8,380.2 95.0,356.5 95.1,347.9 95.3,363.0 95.4,347.9 95.6,322.1 95.8,322.1 95.9,311.4 96.1,300.6 96.2,298.5 96.4,309.2 96.6,324.2 96.7,324.2 96.9,320.0 97.0,322.1 97.2,324.2 97.4,328.5 97.5,324.2 97.7,328.6 97.9,335.0 98.0,335.0 98.2,332.9 98.3,320.0 98.5,298.5 98.7,285.6 98.8,294.1 99.0,281.2 99.1,313.5 99.3,341.5 99.5,341.5 99.6,330.7 99.8,330.7 99.9,311.4 100.1,287.7 100.3,354.4 100.4,339.3 100.6,335.0 100.8,322.1 100.9,322.1 101.1,255.4 101.2,274.8 101.4,285.6 101.6,298.4 101.7,313.5 101.9,339.3 102.0,403.8 102.2,405.9 102.4,399.5 102.5,395.2 102.7,380.2 102.8,330.7 103.0,356.5 103.2,380.2 103.3,451.1 103.5,440.4 103.6,416.7 103.8,399.5 104.0,365.1 104.1,307.1 104.3,332.9 104.5,343.6 104.6,322.1 104.8,350.1 104.9,354.4 105.1,328.6 105.3,373.7 105.4,393.1 105.6,395.2 105.7,382.3 105.9,388.8 106.1,326.4 106.2,307.0 106.4,302.8 106.5,287.7 106.7,300.6 106.9,304.9 107.0,307.1 107.2,304.9 107.4,300.6 107.5,309.2 107.7,341.5 107.8,360.8 108.0,380.1 108.2,401.6 108.3,403.8 108.5,378.0 108.6,356.5 108.8,337.2 109.0,320.0 109.1,315.7 109.3,350.0 109.4,371.6 109.6,363.0 109.8,382.3 109.9,378.0 110.1,345.8 110.2,382.3 110.4,375.9 110.6,356.5 110.7,343.6 110.9,347.9 111.1,315.6 111.2,311.4 111.4,335.0 111.5,335.0 111.7,337.2 111.9,311.4 112.0,311.4 112.2,287.7 112.3,307.0 112.5,309.2 112.7,309.2 112.8,341.5 113.0,339.3 113.1,339.3 113.3,378.0 113.5,380.1 113.6,367.2 113.8,369.4 114.0,371.6 114.1,322.1 114.3,337.1 114.4,337.2 114.6,358.7 114.8,337.2 114.9,358.7 115.1,375.9 115.2,375.9 115.4,360.8 115.6,373.7 115.7,363.0 115.9,354.4 116.0,335.0 116.2,335.0 116.4,328.6 116.5,315.7 116.7,322.1 116.8,330.7 117.0,373.7 117.2,373.7 117.3,360.8 117.5,339.3 117.7,330.7 117.8,294.1 118.0,328.6 118.1,360.8 118.3,371.6 118.5,375.9 118.6,375.9 118.8,350.1 118.9,322.1 119.1,315.7 119.3,311.4 119.4,315.6 119.6,302.8 119.7,313.5 119.9,302.8 120.1,302.8 120.2,289.9 120.4,307.0 120.6,309.2 120.7,350.1 120.9,350.1 121.0,343.6 121.2,330.7 121.4,313.5 121.5,274.8 121.7,281.2 121.8,292.0 122.0,302.8 122.2,315.7 122.3,320.0 122.5,324.2 122.6,337.1 122.8,345.8 123.0,343.6 123.1,352.2 123.3,356.5 123.5,345.8 123.6,328.6 123.8,320.0 123.9,320.0 124.1,320.0 124.3,313.5 124.4,294.2 124.6,296.3 124.7,300.6 124.9,296.3 125.1,289.9 125.2,289.9 125.4,315.7 125.5,307.0 125.7,294.2 125.9,296.3 126.0,313.5 126.2,283.4 126.3,268.4 126.5,268.4 126.7,279.1 126.8,283.4 127.0,302.8 127.2,324.2 127.3,330.7 127.5,350.0 127.6,330.7 127.8,322.1 128.0,309.2 128.1,320.0 128.3,326.4 128.4,354.4 128.6,358.7 128.8,375.9 128.9,360.8 129.1,337.2 129.2,332.9 129.4,322.1 129.6,296.3 129.7,296.3 129.9,302.8 130.1,294.2 130.2,320.0 130.4,320.0 130.5,365.1 130.7,345.8 130.9,330.7 131.0,304.9 131.2,315.6 131.3,270.5 131.5,292.0 131.7,317.8 131.8,332.9 132.0,332.9 132.1,332.9 132.3,328.5 132.5,330.7 132.6,332.9 132.8,354.4 132.9,360.8 133.1,363.0 133.3,365.1 133.4,347.9 133.6,332.9 133.8,326.4 133.9,307.0 134.1,287.7 134.2,287.7 134.4,270.5 134.6,322.1 134.7,337.2 134.9,343.6 135.0,343.6 135.2,347.9 135.4,307.0 135.5,292.0 135.7,274.8 135.8,283.4 136.0,279.1 136.2,292.0 136.3,287.7 136.5,311.4 136.7,302.8 136.8,302.8 137.0,304.9 137.1,309.2 137.3,300.6 137.5,307.0 137.6,324.2 137.8,298.5 137.9,298.5 138.1,283.4 138.3,296.3 138.4,300.6 138.6,315.7 138.7,315.7 138.9,315.6 139.1,317.8 139.2,311.4 139.4,292.0 139.6,335.0 139.7,335.0 139.9,313.5 140.0,347.9 140.2,365.1 140.4,330.7 140.5,341.5 140.7,341.5 140.8,292.0 141.0,287.7 141.2,302.8 141.3,352.2 141.5,352.2 141.6,352.2 141.8,369.4 142.0,345.8 142.1,302.8 142.3,360.8 142.4,371.6 142.6,360.8 142.8,378.0 142.9,382.3 143.1,320.0 143.3,332.9 143.4,317.8 143.6,320.0 143.7,322.1 143.9,335.0 144.1,341.5 144.2,367.2 144.4,363.0 144.5,350.1 144.7,365.1 144.9,335.0 145.0,309.2 145.2,317.8 145.3,358.7 145.5,335.0 145.7,339.3 145.8,335.0 146.0,328.5 146.2,272.6 146.3,352.2 146.5,347.9 146.6,352.2 146.8,347.9 147.0,352.2 147.1,268.4 147.3,266.2 147.4,294.2 147.6,279.1 147.8,277.0 147.9,281.2 148.1,294.1 148.2,283.4 148.4,285.6 148.6,298.5 148.7,309.2 148.9,317.8 149.1,311.4 149.2,328.6 149.4,330.7 149.5,326.4 149.7,315.7 149.9,315.6 150.0,313.5 150.2,315.7 150.3,378.0 150.5,378.0 150.7,393.1 150.8,373.7 151.0,378.0 151.1,341.5 151.3,358.7 151.5,360.8 151.6,386.6 151.8,395.2 151.9,375.9 152.1,360.8 152.3,345.8 152.4,354.3 152.6,356.5 152.8,352.2 152.9,339.3 153.1,339.3 153.2,332.9 153.4,315.7 153.6,332.9 153.7,350.1 153.9,352.2 154.0,347.9 154.2,356.5 154.4,345.8 154.5,339.3 154.7,360.8 154.8,358.6 155.0,341.5 155.2,371.6 155.3,395.2 155.5,365.1 155.7,365.1 155.8,365.1 156.0,350.0 156.1,341.5 156.3,335.0 156.5,317.8 156.6,347.9 156.8,317.8 156.9,304.9 157.1,304.9 157.3,352.2 157.4,347.9 157.6,358.7 157.7,345.8 157.9,358.6 158.1,341.5 158.2,317.8 158.4,307.1 158.5,309.2 158.7,307.1 158.9,298.5 159.0,298.5 159.2,352.2 159.4,369.4 159.5,375.9 159.7,382.3 159.8,375.9 160.0,322.1 160.2,345.8 160.3,328.6 160.5,298.5 160.6,322.1 160.8,358.7 161.0,337.2 161.1,350.1 161.3,378.0 161.4,390.9 161.6,375.9 161.8,375.9 161.9,360.8 162.1,360.8 162.3,345.8 162.4,350.1 162.6,335.0 162.7,371.6 162.9,369.4 163.1,345.8 163.2,405.9 163.4,421.0 163.5,386.6 163.7,367.2 163.9,369.4 164.0,298.5 164.2,300.6 164.3,300.6 164.5,302.8 164.7,317.8 164.8,324.2 165.0,317.8 165.2,332.9 165.3,322.1 165.5,324.2 165.6,313.5 165.8,304.9 166.0,289.9 166.1,320.0 166.3,365.1 166.4,363.0 166.6,382.3 166.8,401.7 166.9,395.2 167.1,343.6 167.2,335.0 167.4,315.6 167.6,317.8 167.7,328.5 167.9,352.2 168.0,363.0 168.2,384.4 168.4,388.8 168.5,373.7 168.7,339.3 168.9,343.6 169.0,313.5 169.2,304.9 169.3,315.6 169.5,371.6 169.7,365.1 169.8,384.4 170.0,365.1 170.1,337.2 170.3,287.7 170.5,274.8 170.6,257.6 170.8,277.0 170.9,287.7 171.1,285.6 171.3,363.0 171.4,373.7 171.6,371.6 171.8,384.4 171.9,382.3 172.1,315.6 172.2,343.6 172.4,345.8 172.6,335.0 172.7,352.2 172.9,362.9 173.0,337.2 173.2,339.3 173.4,352.2 173.5,358.7 173.7,371.5 173.8,397.4 174.0,388.8 174.2,395.2 174.3,388.8 174.5,390.9 174.6,375.9 174.8,371.6 175.0,363.0 175.1,350.1 175.3,335.0 175.5,337.1 175.6,363.0 175.8,341.5 175.9,352.2 176.1,347.9 176.3,339.3 176.4,313.5 176.6,326.4 176.7,324.2 176.9,307.1 177.1,289.9 177.2,304.9 177.4,289.9 177.5,274.8 177.7,287.7 177.9,298.5 178.0,274.8 178.2,274.8 178.4,279.1 178.5,270.5 178.7,259.8 178.8,272.6 179.0,285.5 179.2,294.1 179.3,292.0 179.5,300.6 179.6,292.0 179.8,281.2 180.0,283.4 180.1,283.4 180.3,274.8 180.4,272.6 180.6,302.8 180.8,302.8 180.9,324.2 181.1,339.3 181.2,350.1 181.4,324.2 181.6,367.2 181.7,356.5 181.9,363.0 182.1,356.5 182.2,363.0 182.4,302.8 182.5,307.1 182.7,304.9 182.9,322.1 183.0,322.1 183.2,330.7 183.3,343.6 183.5,337.2 183.7,315.7 183.8,304.9 184.0,309.2 184.1,283.4 184.3,287.7 184.5,322.1 184.6,345.8 184.8,354.4 185.0,375.9 185.1,371.6 185.3,345.8 185.4,330.7 185.6,320.0 185.8,313.5 185.9,317.8 186.1,320.0 186.2,309.2 186.4,309.2 186.6,292.0 186.7,285.6 186.9,298.5 187.0,311.4 187.2,300.6 187.4,302.8 187.5,339.3 187.7,317.8 187.9,320.0 188.0,341.5 188.2,341.5 188.3,304.9 188.5,302.8 188.7,304.9 188.8,294.2 189.0,289.9 189.1,294.1 189.3,302.8 189.5,287.7 189.6,277.0 189.8,277.0 189.9,270.5 190.1,257.6 190.3,268.4 190.4,307.0 190.6,309.2 190.7,315.7 190.9,326.4 191.1,320.0 191.2,289.9 191.4,307.0 191.6,298.5 191.7,311.3 191.9,313.5 192.0,304.9 192.2,292.0 192.4,296.3 192.5,287.7 192.7,279.1 192.8,281.2 193.0,287.7 193.2,287.7 193.3,274.8 193.5,320.0 193.6,337.1 193.8,341.5 194.0,343.6 194.1,352.2 194.3,322.1 194.5,345.8 194.6,332.9 194.8,320.0 194.9,350.0 195.1,337.2 195.3,296.3 195.4,296.3 195.6,292.0 195.7,259.8 195.9,274.8 196.1,274.8 196.2,274.8 196.4,279.1 196.5,276.9 196.7,266.2 196.9,268.4 197.0,277.0 197.2,283.4 197.3,283.4 197.5,277.0 197.7,294.2 197.8,294.2 198.0,287.7 198.2,283.4 198.3,283.4 198.5,261.9 198.6,253.3 198.8,266.2 199.0,281.2 199.1,313.5 199.3,324.2 199.4,345.8 199.6,339.3 199.8,326.4 199.9,304.9 200.1,304.9 200.2,294.2 200.4,296.3 200.6,309.2 200.7,313.5 200.9,320.0 201.1,330.7 201.2,328.6 201.4,341.5 201.5,339.3 201.7,343.6 201.9,337.1 202.0,343.6 202.2,343.6 202.3,341.5 202.5,328.6 202.7,332.9 202.8,332.9 203.0,332.9 203.1,324.2 203.3,332.9 203.5,313.5 203.6,315.6 203.8,298.5 204.0,298.5 204.1,283.4 204.3,332.9 204.4,332.9 204.6,341.4 204.8,350.0 204.9,350.0 205.1,313.5 205.2,330.7 205.4,313.5 205.6,324.2 205.7,350.0 205.9,341.5 206.0,322.1 206.2,330.7 206.4,322.1 206.5,311.4 206.7,320.0 206.8,313.5 207.0,332.9 207.2,332.9 207.3,326.4 207.5,313.5 207.7,317.8 207.8,298.5 208.0,287.7 208.1,281.2 208.3,296.3 208.5,300.6 208.6,304.9 208.8,311.4 208.9,317.8 209.1,309.2 209.3,337.2 209.4,324.2 209.6,317.8 209.7,345.8 209.9,341.5 210.1,304.9 210.2,313.5 210.4,330.7 210.6,302.8 210.7,304.9 210.9,304.9 211.0,300.6 211.2,289.9 211.4,292.0 211.5,296.3 211.7,298.5 211.8,311.4 212.0,322.1 212.2,322.1 212.3,315.6 212.5,326.4 212.6,315.7 212.8,309.2 213.0,304.9 213.1,309.2 213.3,298.5 213.4,320.0 213.6,307.0 213.8,313.5 213.9,311.4 214.1,317.8 214.3,294.2 214.4,311.4 214.6,315.6 214.7,322.1 214.9,322.1 215.1,328.5 215.2,322.1 215.4,328.5 215.5,332.9 215.7,326.4 215.9,315.7 216.0,317.8 216.2,294.1 216.3,294.1 216.5,285.6 216.7,298.4 216.8,311.4 217.0,328.6 217.2,313.5 217.3,313.5 217.5,304.9 217.6,283.4 217.8,266.2 218.0,270.5 218.1,287.7 218.3,283.4 218.4,285.6 218.6,304.9 218.8,300.6 218.9,283.4 219.1,294.1 219.2,289.9 219.4,272.6 219.6,283.4 219.7,296.3 219.9,292.0 220.1,289.9 220.2,294.2 220.4,287.7 220.5,285.6 220.7,296.3 220.9,296.3 221.0,302.8 221.2,296.3 221.3,300.6 221.5,287.7 221.7,296.3 221.8,307.1 222.0,313.5 222.1,298.5 222.3,296.3 222.5,292.0 222.6,289.9 222.8,281.2 222.9,304.9 223.1,315.7 223.3,317.8 223.4,296.3 223.6,300.6 223.8,281.2 223.9,268.4 224.1,261.9 224.2,257.6 224.4,302.8 224.6,298.5 224.7,298.5 224.9,337.1 225.0,350.0 225.2,304.9 225.4,304.9 225.5,304.9 225.7,268.4 225.8,259.8 226.0,268.4 226.2,268.4 226.3,268.4 226.5,283.4 226.7,292.0 226.8,289.9 227.0,289.9 227.1,294.2 227.3,281.2 227.5,268.4 227.6,268.4 227.8,274.8 227.9,270.5 228.1,281.2 228.3,287.7 228.4,317.8 228.6,311.4 228.7,309.2 228.9,302.8 229.1,311.4 229.2,292.0 229.4,296.3 229.6,320.0 229.7,320.0 229.9,309.2 230.0,294.1 230.2,300.6 230.4,281.2 230.5,274.8 230.7,272.6 230.8,272.6 231.0,279.1 231.2,274.8 231.3,279.1 231.5,279.1 231.6,281.2 231.8,266.2 232.0,279.1 232.1,272.6 232.3,283.4 232.4,281.2 232.6,287.7 232.8,279.1 232.9,285.6 233.1,287.7 233.3,302.8 233.4,296.3 233.6,324.2 233.7,320.0 233.9,320.0 234.1,309.2 234.2,307.1 234.4,276.9 234.5,274.8 234.7,264.1 234.9,272.6 235.0,272.6 235.2,272.6 235.3,285.5 235.5,283.4 235.7,266.2 235.8,272.7 236.0,270.5 236.2,261.9 236.3,292.0 236.5,302.8 236.6,294.2 236.8,296.3 237.0,304.9 237.1,285.6 237.3,289.9 237.4,343.6 237.6,354.4 237.8,354.4 237.9,360.8 238.1,343.6 238.2,307.0 238.4,302.8 238.6,292.0 238.7,283.4 238.9,302.8 239.0,287.7 239.2,294.1 239.4,294.2 239.5,292.0 239.7,276.9 239.9,281.2 240.0,272.6 240.2,285.6 240.3,292.0 240.5,292.0 240.7,322.1 240.8,332.9 241.0,317.8 241.1,322.1 241.3,332.9 241.5,311.4 241.6,296.3 241.8,317.8 241.9,311.4 242.1,309.2 242.3,300.6 242.4,296.3 242.6,274.8 242.8,264.1 242.9,259.8 243.1,255.4 243.2,259.8 243.4,270.5 243.6,354.4 243.7,363.0 243.9,375.9 244.0,386.6 244.2,378.0 244.4,315.7 244.5,341.5 244.7,341.5 244.8,335.0 245.0,350.1 245.2,339.3 245.3,300.6 245.5,307.0 245.7,343.6 245.8,343.6 246.0,350.0 246.1,352.2 246.3,337.1 246.5,304.9 246.6,296.3 246.8,281.2 246.9,292.0 247.1,292.0 247.3,281.2 247.4,272.6 247.6,274.8 247.7,259.8 247.9,255.5 248.1,261.9 248.2,261.9 248.4,259.8 248.5,296.3 248.7,302.8 248.9,296.3 249.0,307.1 249.2,304.9 249.4,270.5 249.5,270.5 249.7,272.6 249.8,264.0 250.0,266.2 250.2,266.2 250.3,270.5 250.5,270.5 250.6,279.1 250.8,292.0 251.0,294.2 251.1,283.4 251.3,281.2 251.4,274.8 251.6,268.4 251.8,270.5 251.9,277.0 252.1,287.7 252.3,294.2 252.4,304.9 252.6,296.3 252.7,302.8 252.9,292.0 253.1,292.0 253.2,270.5 253.4,285.6 253.5,276.9 253.7,277.0 253.9,272.6 254.0,307.0 254.2,294.2 254.3,304.9 254.5,311.4 254.7,309.2 254.8,298.5 255.0,300.6 255.1,285.6 255.3,294.1 255.5,292.0 255.6,276.9 255.8,276.9 256.0,309.2 256.1,307.1 256.3,311.3 256.4,311.4 256.6,320.0 256.8,296.3 256.9,307.1 257.1,300.6 257.2,300.6 257.4,294.1 257.6,285.6 257.7,264.1 257.9,279.1 258.0,281.2 258.2,287.7 258.4,298.5 258.5,317.8 258.7,311.4 258.9,313.5 259.0,337.1 259.2,326.4 259.3,313.5 259.5,313.5 259.7,313.5 259.8,298.5 260.0,324.2 260.1,339.3 260.3,332.9 260.5,345.8 260.6,337.2 260.8,315.7 260.9,326.4 261.1,330.7 261.3,309.2 261.4,300.6 261.6,298.5 261.8,279.1 261.9,274.8 262.1,283.4 262.2,283.4 262.4,332.9 262.6,320.0 262.7,328.5 262.9,328.5 263.0,328.6 263.2,287.7 263.4,289.9 263.5,283.4 263.7,274.8 263.8,281.2 264.0,285.6 264.2,289.9 264.3,298.5 264.5,300.6 264.6,289.9 264.8,281.2 265.0,277.0 265.1,285.6 265.3,285.6 265.5,287.7 265.6,289.9 265.8,287.7 265.9,274.8 266.1,279.1 266.3,287.7 266.4,292.0 266.6,311.4 266.7,302.8 266.9,317.8 267.1,315.7 267.2,309.2 267.4,324.2 267.5,326.4 267.7,311.4 267.9,315.7 268.0,320.0 268.2,307.1 268.4,309.2 268.5,313.5 268.7,322.1 268.8,315.6 269.0,302.8 269.2,322.1 269.3,309.2 269.5,292.0 269.6,298.5 269.8,300.6 270.0,292.0 270.1,300.6 270.3,296.3 270.4,285.6 270.6,283.4 270.8,281.2 270.9,281.2 271.1,285.6 271.2,285.5 271.4,285.6 271.6,277.0 271.7,270.5 271.9,279.1 272.1,277.0 272.2,268.4 272.4,281.2 272.5,285.6 272.7,292.0 272.9,302.8 273.0,315.6 273.2,311.4 273.3,307.1 273.5,296.3 273.7,294.1 273.8,281.2 274.0,268.4 274.1,285.6 274.3,330.7 274.5,332.8 274.6,343.6 274.8,386.6 275.0,378.0 275.1,337.2 275.3,345.8 275.4,347.9 275.6,315.7 275.8,307.1 275.9,317.8 276.1,296.3 276.2,289.9 276.4,283.4 276.6,289.9 276.7,270.5 276.9,283.4 277.0,276.9 277.2,274.8 277.4,268.4 277.5,268.4 277.7,259.8 277.9,259.8 278.0,266.2 278.2,264.1 278.3,296.3 278.5,302.8 278.7,298.5 278.8,307.0 279.0,309.2 279.1,283.4 279.3,285.6 279.5,296.3 279.6,289.9 279.8,294.2 279.9,287.7 280.1,277.0 280.3,309.2 280.4,302.8 280.6,296.3 280.7,307.1 280.9,309.2 281.1,279.1 281.2,276.9 281.4,311.4 281.6,300.6 281.7,315.7 281.9,307.1 282.0,307.1 282.2,287.7 282.4,285.6 282.5,283.4 282.7,292.0 282.8,298.5 283.0,285.6 283.2,292.0 283.3,279.1 283.5,268.4 283.6,270.5 283.8,281.2 284.0,289.9 284.1,298.5 284.3,300.6 284.5,294.1 284.6,294.2 284.8,283.4 284.9,277.0 285.1,281.2 285.3,296.3 285.4,294.2 285.6,307.0 285.7,304.9 285.9,304.9 286.1,298.5 286.2,300.6 286.4,285.5 286.5,285.5 286.7,285.6 286.9,270.5 287.0,276.9 287.2,294.1 287.3,304.9 287.5,313.5 287.7,326.4 287.8,307.1 288.0,307.1 288.2,322.1 288.3,317.8 288.5,354.4 288.6,369.4 288.8,358.6 289.0,330.7 289.1,352.2 289.3,313.5 289.4,313.5 289.6,311.4 289.8,324.2 289.9,309.2 290.1,304.9 290.2,292.0 290.4,294.1 290.6,304.9 290.7,304.9 290.9,307.1 291.1,304.9 291.2,320.0 291.4,311.4 291.5,309.2 291.7,311.4 291.9,311.4 292.0,289.9 292.2,274.8 292.3,266.2 292.5,307.0 292.7,317.8 292.8,315.7 293.0,324.2 293.1,324.2 293.3,276.9 293.5,272.6 293.6,281.2 293.8,272.6 293.9,279.1 294.1,285.6 294.3,292.0 294.4,285.5 294.6,300.6 294.8,287.7 294.9,287.7 295.1,272.6 295.2,281.2 295.4,294.2 295.6,298.5 295.7,300.6 295.9,309.2 296.0,304.9 296.2,279.1 296.4,276.9 296.5,266.2 296.7,261.9 296.8,266.2 297.0,283.4 297.2,289.9 297.3,300.6 297.5,311.4 297.7,307.0 297.8,289.9 298.0,287.7 298.1,283.4 298.3,332.9 298.5,332.9 298.6,339.3 298.8,337.2 298.9,341.5 299.1,285.6 299.3,283.4 299.4,287.7 299.6,296.3 299.7,296.3 299.9,294.1 300.1,307.1 300.2,322.1 300.4,313.5 300.6,307.1 300.7,317.8 300.9,315.7 301.0,322.1 301.2,330.7 301.4,330.7 301.5,330.7 301.7,317.8 301.8,283.4 302.0,289.9 302.2,302.8 302.3,296.3 302.5,304.9 302.6,319.9 302.8,317.8 303.0,322.1 303.1,330.7 303.3,339.3 303.4,330.7 303.6,315.7 303.8,298.4 303.9,309.2 304.1,313.5 304.3,307.0 304.4,324.2 304.6,322.1 304.7,311.4 304.9,296.3 305.1,300.6 305.2,283.4 305.4,328.5 305.5,315.6 305.7,307.1 305.9,315.7 306.0,313.5 306.2,274.8 306.3,279.1 306.5,281.2 306.7,281.2 306.8,289.9 307.0,294.2 307.2,289.9 307.3,302.8 307.5,296.3 307.6,296.3 307.8,294.2 308.0,315.7 308.1,309.2 308.3,309.2 308.4,315.7 308.6,311.4 308.8,283.4 308.9,285.6 309.1,287.7 309.2,289.9 309.4,289.9 309.6,298.5 309.7,292.0 309.9,285.6 310.1,281.2 310.2,279.1 310.4,281.2 310.5,279.1 310.7,281.2 310.9,270.5 311.0,279.1 311.2,289.9 311.3,292.0 311.5,300.6 311.7,307.1 311.8,311.4 312.0,304.9 312.1,311.4 312.3,311.4 312.5,313.5 312.6,298.5 312.8,307.0 312.9,313.5 313.1,302.8 313.3,309.2 313.4,324.2 313.6,311.4 313.8,294.2 313.9,298.5 314.1,294.2 314.2,283.4 314.4,298.5 314.6,302.8 314.7,298.5 314.9,296.3 315.0,296.3 315.2,272.6 315.4,277.0 315.5,281.2 315.7,281.2 315.8,281.2 316.0,300.6 316.2,307.1 316.3,317.8 316.5,320.0 316.7,317.8 316.8,309.2 317.0,311.4 317.1,302.8 317.3,296.3 317.5,292.0 317.6,281.2 317.8,281.2 317.9,279.1 318.1,272.6 318.3,272.6 318.4,274.8 318.6,257.6 318.7,255.5 318.9,255.5 319.1,261.9 319.2,292.0 319.4,302.8 319.5,307.1 319.7,315.6 319.9,311.4 320.0,298.5 320.2,287.7 320.4,279.1 320.5,289.9 320.7,292.0 320.8,285.6 321.0,311.4 321.2,313.5 321.3,300.6 321.5,298.5 321.6,287.7 321.8,272.6 322.0,268.4 322.1,264.1 322.3,264.0 322.4,281.2 322.6,277.0 322.8,285.6 322.9,302.8 323.1,311.3 323.3,298.5 323.4,304.9 323.6,315.7 323.7,298.5 323.9,304.9 324.1,298.5 324.2,296.3 324.4,287.7 324.5,285.6 324.7,270.5 324.9,294.1 325.0,292.0 325.2,296.3 325.3,307.1 325.5,320.0 325.7,304.9 325.8,315.6 326.0,309.2 326.1,309.2 326.3,300.6 326.5,304.9 326.6,292.0 326.8,287.7 327.0,279.1 327.1,283.4 327.3,272.6 327.4,279.1 327.6,289.9 327.8,287.7 327.9,281.2 328.1,281.2 328.2,277.0 328.4,272.6 328.6,277.0 328.7,296.3 328.9,296.3 329.0,304.9 329.2,296.3 329.4,292.0 329.5,277.0 329.7,274.8 329.9,264.1 330.0,264.1 330.2,279.1 330.3,285.6 330.5,298.5 330.7,300.6 330.8,302.8 331.0,307.1 331.1,302.8 331.3,292.0 331.5,285.6 331.6,285.6 331.8,276.9 331.9,266.2 332.1,264.1 332.3,264.1 332.4,296.3 332.6,287.7 332.8,322.1 332.9,322.1 333.1,322.1 333.2,289.9 333.4,296.3 333.6,274.8 333.7,276.9 333.9,283.4 334.0,283.4 334.2,281.2 334.4,279.1 334.5,277.0 334.7,277.0 334.8,289.9 335.0,287.7 335.2,279.1 335.3,289.9 335.5,292.0 335.6,279.1 335.8,272.6 336.0,285.6 336.1,298.5 336.3,298.5 336.5,311.4 336.6,322.1 336.8,315.6 336.9,300.6 337.1,307.0 337.3,294.2 337.4,287.7 337.6,298.5 337.7,294.1 337.9,285.6 338.1,285.6 338.2,285.5 338.4,266.2 338.5,259.8 338.7,251.2 338.9,251.2 339.0,257.6 339.2,257.6 339.4,311.4 339.5,317.8 339.7,317.8 339.8,307.1 340.0,311.4 340.2,259.8 340.3,255.5 340.5,272.6 340.6,281.2 340.8,289.9 341.0,296.3 341.1,294.2 341.3,274.8 341.4,281.2 341.6,274.8 341.8,270.5 341.9,270.5 342.1,272.6 342.2,261.9 342.4,257.6 342.6,257.6 342.7,268.4 342.9,270.5 343.1,272.7 343.2,292.0 343.4,292.0 343.5,307.0 343.7,311.4 343.9,313.5 344.0,294.2 344.2,298.5 344.3,283.4 344.5,279.1 344.7,274.8 344.8,272.6 345.0,264.1 345.1,253.3 345.3,251.2 345.5,253.3 345.6,255.5 345.8,255.5 346.0,255.4 346.1,251.2 346.3,244.7 346.4,244.7 346.6,277.0 346.8,276.9 346.9,292.0 347.1,304.9 347.2,307.1 347.4,277.0 347.6,277.0 347.7,266.2 347.9,261.9 348.0,270.5 348.2,276.9 348.4,287.7 348.5,285.6 348.7,281.2 348.9,268.4 349.0,261.9 349.2,253.3 349.3,255.4 349.5,257.6 349.7,255.5 349.8,255.4 350.0,253.3 350.1,251.2 350.3,246.9 350.5,251.2 350.6,257.6 350.8,259.8 350.9,261.9 351.1,261.9 351.3,259.8 351.4,253.3 351.6,259.8 351.7,259.8 351.9,261.9 352.1,274.8 352.2,272.6 352.4,274.8 352.6,272.6 352.7,281.2 352.9,272.6 353.0,274.8 353.2,264.1 353.4,272.7 353.5,268.4 353.7,266.2 353.8,266.2 354.0,274.8 354.2,281.2 354.3,276.9 354.5,287.7 354.6,294.1 354.8,287.7 355.0,274.8 355.1,274.8 355.3,264.0 355.5,257.6 355.6,261.9 355.8,259.8 355.9,259.8 356.1,259.8 356.3,266.2 356.4,261.9 356.6,276.9 356.7,276.9 356.9,274.8 357.1,272.6 357.2,274.8 357.4,272.6 357.5,277.0 357.7,287.7 357.9,287.7 358.0,283.4 358.2,274.8 358.4,272.7 358.5,270.5 358.7,274.8 358.8,289.9 359.0,296.3 359.2,309.2 359.3,302.8 359.5,296.3 359.6,285.6 359.8,281.2 360.0,264.1 360.1,264.1 360.3,272.6 360.4,268.4 360.6,268.4 360.8,277.0 360.9,274.8 361.1,266.2 361.2,272.6 361.4,264.1 361.6,255.4 361.7,264.0 361.9,272.6 362.1,277.0 362.2,287.7 362.4,287.7 362.5,277.0 362.7,270.5 362.9,270.5 363.0,264.1 363.2,272.6 363.3,274.8 363.5,270.5 363.7,261.9 363.8,266.2 364.0,257.6 364.1,255.5 364.3,255.4 364.5,253.3 364.6,255.5 364.8,266.2 365.0,277.0 365.1,281.2 365.3,285.6 365.4,283.4 365.6,279.1 365.8,281.2 365.9,283.4 366.1,294.1 366.2,287.7 366.4,285.6 366.6,274.8 366.7,268.4 366.9,261.9 367.0,264.1 367.2,261.9 367.4,261.9 367.5,264.1 367.7,253.3 367.8,255.5 368.0,274.8 368.2,285.6 368.3,289.9 368.5,304.9 368.7,302.8 368.8,289.9 369.0,281.2 369.1,276.9 369.3,279.1 369.5,287.7 369.6,289.9 369.8,292.0 369.9,289.9 370.1,285.6 370.3,277.0 370.4,272.6 370.6,279.1 370.7,285.6 370.9,272.6 371.1,270.5 371.2,264.1 371.4,253.3 371.6,253.3 371.7,255.5 371.9,255.5 372.0,257.6 372.2,255.5 372.4,257.6 372.5,257.6 372.7,257.6 372.8,257.6 373.0,266.2 373.2,257.6 373.3,257.6 373.5,257.6 373.6,259.8 373.8,257.6 374.0,257.6 374.1,255.5 374.3,255.4 374.4,251.2 374.6,261.9 374.8,272.6 374.9,285.6 375.1,287.7 375.3,289.9 375.4,281.2 375.6,268.4 375.7,255.4 375.9,251.2 376.1,253.3 376.2,249.0 376.4,255.5 376.5,264.1 376.7,277.0 376.9,274.8 377.0,307.1 377.2,302.8 377.3,296.3 377.5,285.6 377.7,292.0 377.8,261.9 378.0,261.9 378.2,264.1 378.3,266.2 378.5,259.8 378.6,259.8 378.8,259.8 379.0,266.2 379.1,266.2 379.3,272.7 379.4,268.4 379.6,274.8 379.8,266.2 379.9,270.5 380.1,268.4 380.2,272.6 380.4,264.1 380.6,268.4 380.7,266.2 380.9,268.4 381.1,268.4 381.2,272.6 381.4,268.4 381.5,266.2 381.7,264.1 381.9,259.8 382.0,257.6 382.2,257.6 382.3,255.5 382.5,249.0 382.7,249.0 382.8,251.2 383.0,251.2 383.1,251.2 383.3,253.3 383.5,255.4 383.6,264.1 383.8,264.1 383.9,283.4 384.1,281.2 384.3,281.2 384.4,272.6 384.6,274.8 384.8,257.6 384.9,261.9 385.1,261.9 385.2,259.8 385.4,261.9 385.6,259.8 385.7,264.1 385.9,266.2 386.0,266.2 386.2,272.6 386.4,272.6 386.5,261.9 386.7,257.6 386.8,259.8 387.0,255.5 387.2,255.5 387.3,259.8 387.5,274.8 387.7,283.4 387.8,281.2 388.0,281.2 388.1,281.2 388.3,272.6 388.5,270.5 388.6,276.9 388.8,277.0 388.9,274.8 389.1,268.4 389.3,268.4 389.4,261.9 389.6,264.1 389.7,266.2 389.9,276.9 390.1,270.5 390.2,272.6 390.4,270.5 390.6,268.4 390.7,259.8 390.9,257.6 391.0,251.2 391.2,259.8 391.4,264.1 391.5,264.1 391.7,274.8 391.8,274.8 392.0,268.4 392.2,268.4 392.3,270.5 392.5,266.2 392.6,266.2 392.8,266.2 393.0,259.8 393.1,253.3 393.3,251.2 393.4,249.0 393.6,246.9 393.8,249.0 393.9,253.3 394.1,251.2 394.3,253.3 394.4,253.3 394.6,257.6 394.7,255.5 394.9,251.2 395.1,261.9 395.2,261.9 395.4,259.8 395.5,259.8 395.7,259.8 395.9,257.6 396.0,266.2 396.2,264.1 396.3,264.1 396.5,272.6 396.7,264.1 396.8,255.5 397.0,257.6 397.2,257.6 397.3,251.2 397.5,255.5 397.6,255.5 397.8,259.8 398.0,261.9 398.1,259.8 398.3,255.4 398.4,259.8 398.6,264.1 398.8,261.9 398.9,264.1 399.1,274.8 399.2,281.2 399.4,274.8 399.6,283.4 399.7,283.4 399.9,272.7 400.0,266.2 400.2,264.1 400.4,257.6 400.5,264.1 400.7,268.4 400.9,272.6 401.0,279.1 401.2,279.1 401.3,279.1 401.5,274.8 401.7,266.2 401.8,257.6 402.0,264.1 402.1,274.8 402.3,279.1 402.5,279.1 402.6,283.4 402.8,274.8 402.9,264.1 403.1,261.9 403.3,261.9 403.4,257.6 403.6,257.6 403.8,253.3 403.9,253.3 404.1,255.4 404.2,261.9 404.4,270.5 404.6,276.9 404.7,281.2 404.9,281.2 405.0,274.8 405.2,270.5 405.4,261.9 405.5,253.3 405.7,264.1 405.8,264.1 406.0,270.5 406.2,274.8 406.3,279.1 406.5,270.5 406.6,270.5 406.8,259.8 407.0,257.6 407.1,261.9 407.3,257.6 407.5,264.1 407.6,268.4 407.8,266.2 407.9,268.4 408.1,277.0 408.3,272.6 408.4,300.6 408.6,311.4 408.7,304.9 408.9,298.5 409.1,298.5 409.2,264.0 409.4,259.8 409.5,255.5 409.7,261.9 409.9,264.1 410.0,274.8 410.2,274.8 410.4,279.1 410.5,270.5 410.7,268.4 410.8,261.9 411.0,279.1 411.2,287.7 411.3,287.7 411.5,287.7 411.6,285.6 411.8,261.9 412.0,255.5 412.1,268.4 412.3,264.1 412.4,268.4 412.6,272.7 412.8,270.5 412.9,259.8 413.1,261.9 413.3,259.8 413.4,255.5 413.6,257.6 413.7,257.6 413.9,257.6 414.1,264.1 414.2,272.6 414.4,268.4 414.5,266.2 414.7,264.1 414.9,259.8 415.0,251.2 415.2,251.2 415.3,255.5 415.5,257.6 415.7,253.3 415.8,251.2 416.0,249.0 416.1,246.9 416.3,246.9 416.5,257.6 416.6,257.6 416.8,259.8 417.0,257.6 417.1,264.1 417.3,257.6 417.4,259.8 417.6,257.6 417.8,257.6 417.9,264.1 418.1,266.2 418.2,270.5 418.4,274.8 418.6,276.9 418.7,270.5 418.9,264.1 419.0,268.4 419.2,276.9 419.4,281.2 419.5,274.8 419.7,274.8 419.9,270.5 420.0,270.5 420.2,272.7 420.3,277.0 420.5,298.5 420.7,298.5 420.8,289.9 421.0,283.4 421.1,287.7 421.3,266.2 421.5,264.1 421.6,270.5 421.8,270.5 421.9,266.2 422.1,274.8 422.3,279.1 422.4,270.5 422.6,272.6 422.8,270.5 422.9,261.9 423.1,253.3 423.2,259.8 423.4,255.4 423.6,261.9 423.7,264.1 423.9,268.4 424.0,270.5 424.2,270.5 424.4,264.1 424.5,264.1 424.7,261.9 424.8,255.4 425.0,264.1 425.2,261.9 425.3,272.6 425.5,272.6 425.6,272.6 425.8,266.2 426.0,266.2 426.1,259.8 426.3,259.8 426.5,257.6 426.6,255.5 426.8,264.1 426.9,266.2 427.1,268.4 427.3,268.4 427.4,272.6 427.6,261.9 427.7,261.9 427.9,257.6 428.1,255.4 428.2,251.2 428.4,255.4 428.5,244.7 428.7,246.9 428.9,253.3 429.0,259.8 429.2,255.5 429.4,266.2 429.5,268.4 429.7,268.4 429.8,261.9 430.0,264.1 430.2,268.4 430.3,268.4 430.5,264.1 430.6,266.2 430.8,281.2 431.0,268.4 431.1,270.5 431.3,281.2 431.4,285.6 431.6,272.6 431.8,272.6 431.9,270.5 432.1,259.8 432.2,253.3 432.4,253.3 432.6,253.3 432.7,251.2 432.9,253.3 433.1,261.9 433.2,257.6 433.4,257.6 433.5,257.6 433.7,257.6 433.9,251.2 434.0,255.4 434.2,253.3 434.3,261.9 434.5,261.9 434.7,261.9 434.8,268.4 435.0,277.0 435.1,270.5 435.3,274.8 435.5,272.6 435.6,266.2 435.8,259.8 436.0,259.8 436.1,261.9 436.3,268.4 436.4,285.5 436.6,285.6 436.8,285.6 436.9,283.4 437.1,279.1 437.2,259.8 437.4,268.4 437.6,268.4 437.7,264.0 437.9,266.2 438.0,272.6 438.2,261.9 438.4,264.1 438.5,264.1 438.7,259.8 438.9,264.1 439.0,266.2 439.2,264.1 439.3,270.5 439.5,270.5 439.7,264.1 439.8,266.2 440.0,261.9 440.1,255.4 440.3,253.3 440.5,261.9 440.6,264.1 440.8,266.2 440.9,268.4 441.1,281.2 441.3,277.0 441.4,272.6 441.6,272.7 441.7,272.6 441.9,268.4 442.1,261.9 442.2,264.1 442.4,266.2 442.6,261.9 442.7,259.8 442.9,259.8 443.0,261.9 443.2,266.2 443.4,266.2 443.5,261.9 443.7,259.8 443.8,257.6 444.0,255.5 444.2,261.9 444.3,270.5 444.5,279.1 444.6,279.1 444.8,274.8 445.0,274.8 445.1,266.2 445.3,264.1 445.5,266.2 445.6,266.2 445.8,268.4 445.9,268.4 446.1,261.9 446.3,261.9 446.4,264.1 446.6,264.1 446.7,268.4 446.9,268.4 447.1,270.5 447.2,268.4 447.4,257.6 447.5,253.3 447.7,253.3 447.9,249.0 448.0,251.2 448.2,257.6 448.3,257.6 448.5,264.1 448.7,261.9 448.8,259.8 449.0,259.8 449.2,261.9 449.3,261.9 449.5,261.9 449.6,261.9 449.8,264.1 450.0,268.4 450.1,261.9 450.3,261.9 450.4,289.9 450.6,281.2 450.8,274.8 450.9,279.1 451.1,294.2 451.2,266.2 451.4,268.4 451.6,268.4 451.7,268.4 451.9,253.3 452.1,261.9 452.2,261.9 452.4,266.2 452.5,272.6 452.7,277.0 452.9,274.8 453.0,279.1 453.2,285.6 453.3,274.8 453.5,272.6 453.7,272.6 453.8,270.5 454.0,266.2 454.1,268.4 454.3,266.2 454.5,261.9 454.6,261.9 454.8,253.3 454.9,251.2 455.1,253.3 455.3,255.5 455.4,255.5 455.6,261.9 455.8,264.1 455.9,264.1 456.1,259.8 456.2,261.9 456.4,264.1 456.6,272.6 456.7,270.5 456.9,277.0 457.0,274.8 457.2,274.8 457.4,261.9 457.5,266.2 457.7,261.9 457.8,264.1 458.0,259.8 458.2,259.8 458.3,276.9 458.5,276.9 458.7,272.6 458.8,270.5 459.0,272.6 459.1,253.3 459.3,253.3 459.5,251.2 459.6,251.2 459.8,257.6 459.9,257.6 460.1,264.1 460.3,268.4 460.4,268.4 460.6,266.2 460.7,264.1 460.9,255.5 461.1,255.5 461.2,257.6 461.4,253.3 461.6,261.9 461.7,261.9 461.9,259.8 462.0,261.9 462.2,261.9 462.4,253.3 462.5,255.5 462.7,255.5 462.8,259.8 463.0,259.8 463.2,264.1 463.3,261.9 463.5,264.1 463.6,264.1 463.8,268.4 464.0,268.4 464.1,270.5 464.3,268.4 464.4,259.8 464.6,259.8 464.8,255.5 464.9,255.5 465.1,255.5 465.3,259.8 465.4,255.5 465.6,255.5 465.7,253.3 465.9,255.5 466.1,257.6 466.2,281.2 466.4,287.7 466.5,289.9 466.7,287.7 466.9,287.7 467.0,268.4 467.2,264.1 467.3,261.9 467.5,261.9 467.7,255.5 467.8,249.0 468.0,246.9 468.2,246.9 468.3,249.0 468.5,253.3 468.6,257.6 468.8,259.8 469.0,264.1 469.1,264.1 469.3,257.6 469.4,259.8 469.6,261.9 469.8,264.1 469.9,268.4 470.1,274.8 470.2,274.8 470.4,268.4 470.6,268.4 470.7,264.1 470.9,261.9 471.1,259.8 471.2,261.9 471.4,255.5 471.5,259.8 471.7,287.7 471.9,289.9 472.0,289.9 472.2,292.0 472.3,292.0 472.5,259.8 472.7,261.9 472.8,264.1 473.0,264.0 473.1,257.6 473.3,268.4 473.5,272.6 473.6,274.8 473.8,281.2 473.9,287.7 474.1,287.7 474.3,281.2 474.4,277.0 474.6,274.8 474.8,268.4 474.9,266.2 475.1,261.9 475.2,264.1 475.4,264.1 475.6,261.9 475.7,259.8 475.9,257.6 476.0,257.6 476.2,251.2 476.4,251.2 476.5,249.0 476.7,251.2 476.8,249.0 477.0,255.5 477.2,257.6 477.3,259.8 477.5,261.9 477.7,261.9 477.8,253.3 478.0,261.9 478.1,257.6 478.3,261.9 478.5,264.1 478.6,268.4 478.8,257.6 478.9,259.8 479.1,251.2 479.3,255.5 479.4,261.9 479.6,264.1 479.7,264.1 479.9,266.2 480.1,266.2 480.2,302.8 480.4,302.8 480.5,300.6 480.7,304.9 480.9,302.8 481.0,259.8 481.2,274.8 481.4,274.8 481.5,270.5 481.7,272.6 481.8,268.4 482.0,264.1 482.2,268.4 482.3,268.4 482.5,268.4 482.6,274.8 482.8,261.9 483.0,259.8 483.1,259.8 483.3,253.3 483.4,249.0 483.6,253.3 483.8,249.0 483.9,249.0 484.1,249.0 484.3,255.5 484.4,259.8 484.6,266.2 484.7,272.6 484.9,281.2 485.1,281.2 485.2,276.9 485.4,270.5 485.5,272.6 485.7,268.4 485.9,261.9 486.0,266.2 486.2,274.8 486.3,272.6 486.5,270.5 486.7,274.8 486.8,270.5 487.0,261.9 487.1,255.4 487.3,261.9 487.5,257.6 487.6,261.9 487.8,261.9 488.0,264.1 488.1,255.5 488.3,257.6 488.4,251.2 488.6,255.4 488.8,259.8 488.9,264.1 489.1,261.9 489.2,266.2 489.4,268.4 489.6,264.1 489.7,261.9 489.9,259.8 490.0,255.4 490.2,253.3 490.4,251.2 490.5,255.5 490.7,264.1 490.9,264.1 491.0,266.2 491.2,266.2 491.3,270.5 491.5,266.2 491.7,272.6 491.8,268.4 492.0,270.5 492.1,261.9 492.3,259.8 492.5,251.2 492.6,251.2 492.8,253.3 492.9,251.2 493.1,261.9 493.3,266.2 493.4,270.5 493.6,264.1 493.8,266.2 493.9,257.6 494.1,255.4 494.2,261.9 494.4,264.1 494.6,264.1 494.7,261.9 494.9,266.2 495.0,259.8 495.2,259.8 495.4,257.6 495.5,255.5 495.7,251.2 495.8,251.2 496.0,255.5 496.2,259.8 496.3,261.9 496.5,264.1 496.6,261.9 496.8,264.1 497.0,257.6 497.1,257.6 497.3,257.6 497.5,255.5 497.6,255.5 497.8,255.5 497.9,261.9 498.1,259.8 498.3,285.6 498.4,281.2 498.6,285.6 498.7,283.4 498.9,285.6 499.1,268.4 499.2,276.9 499.4,283.4 499.5,279.1 499.7,279.1 499.9,268.4 500.0,257.6 500.2,249.0 500.4,249.0 500.5,253.3 500.7,255.5 500.8,255.5 501.0,255.5 501.2,253.3 501.3,253.3 501.5,255.4 501.6,257.6 501.8,259.8 502.0,270.5 502.1,264.1 502.3,264.1 502.4,264.1 502.6,270.5 502.8,268.4 502.9,272.6 503.1,270.5 503.2,272.6 503.4,270.5 503.6,264.1 503.7,261.9 503.9,266.2 504.1,264.1 504.2,259.8 504.4,261.9 504.5,261.9 504.7,259.8 504.9,255.5 505.0,253.3 505.2,251.2 505.3,251.2 505.5,246.9 505.7,251.2 505.8,257.6 506.0,261.9 506.1,257.6 506.3,268.4 506.5,266.2 506.6,264.1 506.8,257.6 507.0,259.8 507.1,253.3 507.3,251.2 507.4,255.5 507.6,257.6 507.8,266.2 507.9,268.4 508.1,272.6 508.2,266.2 508.4,272.6 508.6,264.1 508.7,270.5 508.9,272.6 509.0,268.4 509.2,261.9 509.4,270.5 509.5,257.6 509.7,264.1 509.9,272.6 510.0,277.0 510.2,277.0 510.3,281.2 510.5,274.8 510.7,270.5 510.8,268.4 511.0,266.2 511.1,266.2 511.3,261.9 511.5,259.8 511.6,259.8 511.8,255.4 511.9,261.9 512.1,268.4 512.3,292.0 512.4,294.2 512.6,292.0 512.7,283.4 512.9,281.2 513.1,257.6 513.2,255.5 513.4,257.6 513.6,259.8 513.7,257.6 513.9,259.8 514.0,257.6 514.2,253.3 514.4,259.8 514.5,264.1 514.7,264.1 514.8,266.2 515.0,268.4 515.2,261.9 515.3,257.6 515.5,257.6 515.6,255.4 515.8,253.3 516.0,255.5 516.1,257.6 516.3,255.5 516.5,264.1 516.6,276.9 516.8,272.7 516.9,279.1 517.1,279.1 517.3,270.5 517.4,259.8 517.6,261.9 517.7,253.3 517.9,255.4 518.1,255.4 518.2,264.1 518.4,261.9 518.5,259.8 518.7,261.9 518.9,261.9 519.0,257.6 519.2,261.9 519.4,266.2 519.5,261.9 519.7,264.1 519.8,259.8 520.0,255.5 520.2,268.4 520.3,274.8 520.5,274.8 520.6,279.1 520.8,279.1 521.0,261.9 521.1,253.3 521.3,255.5 521.4,249.0 521.6,251.2 521.8,257.6 521.9,259.8 522.1,259.8 522.2,270.5 522.4,268.4 522.6,261.9 522.7,264.1 522.9,261.9 523.1,255.4 523.2,266.2 523.4,274.8 523.5,279.1 523.7,276.9 523.9,279.1 524.0,270.5 524.2,270.5 524.3,266.2 524.5,264.1 524.7,266.2 524.8,264.1 525.0,261.9 525.1,261.9 525.3,270.5 525.5,270.5 525.6,276.9 525.8,281.2 526.0,281.2 526.1,274.8 526.3,270.5 526.4,264.1 526.6,253.3 526.8,253.3 526.9,255.4 527.1,253.3 527.2,253.3 527.4,253.3 527.6,251.2 527.7,251.2 527.9,251.2 528.0,251.2 528.2,251.2 528.4,255.5 528.5,253.3 528.7,253.3 528.8,257.6 529.0,259.8 529.2,259.8 529.3,259.8 529.5,259.8 529.7,257.6 529.8,253.3 530.0,253.3 530.1,253.3 530.3,261.9 530.5,261.9 530.6,268.4 530.8,264.1 530.9,270.5 531.1,264.1 531.3,264.1 531.4,259.8 531.6,259.8 531.7,259.8 531.9,266.2 532.1,266.2 532.2,277.0 532.4,281.2 532.6,283.4 532.7,276.9 532.9,285.6 533.0,276.9 533.2,279.1 533.4,272.6 533.5,272.6 533.7,261.9 533.8,264.1 534.0,257.6 534.2,261.9 534.3,266.2 534.5,266.2 534.6,266.2 534.8,264.1 535.0,257.6 535.1,251.2 535.3,253.3 535.5,251.2 535.6,255.4 535.8,259.8 535.9,257.6 536.1,257.6 536.3,255.5 536.4,255.4 536.6,253.3 536.7,255.4 536.9,251.2 537.1,251.2 537.2,251.2 537.4,251.2 537.5,253.3 537.7,259.8 537.9,261.9 538.0,266.2 538.2,266.2 538.3,266.2 538.5,264.0 538.7,266.2 538.8,266.2 539.0,272.6 539.2,268.4 539.3,272.6 539.5,268.4 539.6,268.4 539.8,257.6 540.0,264.1 540.1,259.8 540.3,261.9 540.4,255.4 540.6,257.6 540.8,253.3 540.9,251.2 541.1,251.2 541.2,251.2 541.4,249.0 541.6,249.0 541.7,249.0 541.9,246.9 542.1,246.9 542.2,255.5 542.4,257.6 542.5,259.8 542.7,259.8 542.9,261.9 543.0,259.8 543.2,264.1 543.3,264.1 543.5,266.2 543.7,270.5 543.8,266.2 544.0,266.2 544.1,268.4 544.3,274.8 544.5,268.4 544.6,268.4 544.8,261.9 544.9,261.9 545.1,253.3 545.3,257.6 545.4,257.6 545.6,261.9 545.8,259.8 545.9,259.8 546.1,255.5 546.2,255.5 546.4,251.2 546.6,249.0 546.7,249.0 546.9,255.5 547.0,257.6 547.2,259.8 547.4,264.1 547.5,264.1 547.7,264.1 547.8,261.9 548.0,259.8 548.2,253.3 548.3,253.3 548.5,244.7 548.7,251.2 548.8,257.6 549.0,257.6 549.1,261.9 549.3,272.6 549.5,268.4 549.6,268.4 549.8,272.6 549.9,268.4 550.1,266.2 550.3,270.5 550.4,261.9 550.6,261.9 550.7,261.9 550.9,264.1 551.1,257.6 551.2,266.2 551.4,264.1 551.5,272.7 551.7,270.5 551.9,277.0 552.0,268.4 552.2,270.5 552.4,261.9 552.5,255.5 552.7,249.0 552.8,251.2 553.0,255.5 553.2,257.6 553.3,257.6 553.5,259.8 553.6,257.6 553.8,251.2 554.0,253.3 554.1,257.6 554.3,261.9 554.4,277.0 554.6,283.4 554.8,285.6 554.9,283.4 555.1,285.5 555.3,272.6 555.4,272.6 555.6,285.6 555.7,292.0 555.9,281.2 556.1,287.7 556.2,283.4 556.4,268.4 556.5,261.9 556.7,270.5 556.9,272.6 557.0,274.8 557.2,279.1 557.3,276.9 557.5,279.1 557.7,281.2 557.8,283.4 558.0,279.1 558.2,281.2 558.3,274.8 558.5,268.4 558.6,264.1 558.8,268.4 559.0,264.0 559.1,264.1 559.3,268.4 559.4,268.4 559.6,259.8 559.8,266.2 559.9,270.5 560.1,264.1 560.2,261.9 560.4,272.6 560.6,277.0 560.7,277.0 560.9,283.4 561.0,283.4 561.2,281.2 561.4,274.8 561.5,270.5 561.7,264.1 561.9,270.5 562.0,268.4 562.2,268.4 562.3,266.2 562.5,274.8 562.7,272.6 562.8,268.4 563.0,272.6 563.1,279.1 563.3,272.6 563.5,268.4 563.6,272.6 563.8,268.4 563.9,272.6 564.1,272.6 564.3,285.6 564.4,289.9 564.6,287.7 564.8,277.0 564.9,277.0 565.1,261.9 565.2,255.5 565.4,261.9 565.6,264.1 565.7,266.2 565.9,268.4 566.0,268.4 566.2,268.4 566.4,264.1 566.5,261.9 566.7,261.9 566.8,259.8 567.0,257.6 567.2,264.1 567.3,261.9 567.5,268.4 567.6,264.1 567.8,264.1 568.0,261.9 568.1,264.1 568.3,255.5 568.5,257.6 568.6,255.4 568.8,253.3 568.9,255.5 569.1,261.9 569.3,268.4 569.4,266.2 569.6,268.4 569.7,268.4 569.9,264.1 570.1,261.9 570.2,261.9 570.4,264.1 570.5,264.1 570.7,268.4 570.9,261.9 571.0,268.4 571.2,266.2 571.4,259.8 571.5,257.6 571.7,266.2 571.8,268.4 572.0,270.5 572.2,270.5 572.3,270.5 572.5,266.2 572.6,266.2 572.8,268.4 573.0,270.5 573.1,270.5 573.3,268.4 573.4,264.1 573.6,257.6 573.8,259.8 573.9,259.8 574.1,257.6 574.3,255.4 574.4,259.8 574.6,257.6 574.7,257.6 574.9,270.5 575.1,281.2 575.2,279.1 575.4,276.9 575.5,276.9 575.7,268.4 575.9,259.8 576.0,261.9 576.2,270.5 576.3,274.8 576.5,277.0 576.7,274.8 576.8,272.6 577.0,270.5 577.1,272.6 577.3,276.9 577.5,279.1 577.6,279.1 577.8,277.0 578.0,270.5 578.1,270.5 578.3,264.0 578.4,266.2 578.6,266.2 578.8,264.1 578.9,255.5 579.1,257.6 579.2,255.5 579.4,255.5 579.6,266.2 579.7,268.4 579.9,268.4 580.0,270.5 580.2,270.5 580.4,259.8 580.5,259.8 580.7,261.9 580.9,259.8 581.0,296.3 581.2,294.1 581.3,292.0 581.5,289.9 581.7,289.9 581.8,249.0 582.0,251.2 582.1,251.2 582.3,249.0 582.5,249.0 582.6,249.0 582.8,251.2 582.9,251.2 583.1,259.8 583.3,257.6 583.4,268.4 583.6,279.1 583.8,279.1 583.9,274.8 584.1,276.9 584.2,268.4 584.4,259.8 584.6,257.6 584.7,255.4 584.9,261.9 585.0,259.8 585.2,264.1 585.4,266.2 585.5,264.1 585.7,259.8 585.8,259.8 586.0,255.5 586.2,259.8 586.3,270.5 586.5,272.7 586.6,272.6 586.8,266.2 587.0,264.1 587.1,257.6 587.3,253.3 587.5,261.9 587.6,268.4 587.8,270.5 587.9,277.0 588.1,281.2 588.3,279.1 588.4,274.8 588.6,268.4 588.7,261.9 588.9,266.2 589.1,259.8 589.2,259.8 589.4,287.7 589.5,285.6 589.7,283.4 589.9,283.4 590.0,287.7 590.2,270.5 590.4,274.8 590.5,272.7 590.7,272.6 590.8,268.4 591.0,259.8 591.2,253.3 591.3,251.2 591.5,251.2 591.6,253.3 591.8,253.3 592.0,257.6 592.1,253.3 592.3,255.4 592.4,253.3 592.6,253.3 592.8,251.2 592.9,251.2 593.1,253.3 593.2,257.6 593.4,255.5 593.6,261.9 593.7,266.2 593.9,259.8 594.1,255.4 594.2,264.1 594.4,257.6 594.5,257.6 594.7,261.9 594.9,272.6 595.0,268.4 595.2,268.4 595.3,296.3 595.5,296.3 595.7,283.4 595.8,285.6 596.0,292.0 596.1,264.1 596.3,264.1 596.5,268.4 596.6,264.1 596.8,266.2 597.0,264.1 597.1,264.0 597.3,264.1 597.4,268.4 597.6,259.8 597.8,257.6 597.9,259.8 598.1,255.5 598.2,251.2 598.4,253.3 598.6,251.2 598.7,246.9 598.9,255.5 599.0,261.9 599.2,266.2 599.4,266.2 599.5,268.4 599.7,261.9 599.9,257.6 600.0,253.3 600.2,257.6 600.3,255.4 600.5,261.9 600.7,261.9 600.8,264.1 601.0,264.1 601.1,264.1 601.3,259.8 601.5,261.9 601.6,259.8 601.8,268.4 601.9,279.1 602.1,277.0 602.3,272.6 602.4,270.5 602.6,261.9 602.7,257.6 602.9,257.6 603.1,261.9 603.2,259.8 603.4,261.9 603.6,255.5 603.7,261.9 603.9,257.6 604.0,264.1 604.2,261.9 604.4,261.9 604.5,253.3 604.7,253.3 604.8,251.2 605.0,253.3 605.2,257.6 605.3,259.8 605.5,261.9 605.6,257.6 605.8,253.3 606.0,266.2 606.1,268.4 606.3,272.6 606.5,279.1 606.6,279.1 606.8,264.1 606.9,274.8 607.1,274.8 607.3,272.6 607.4,274.8 607.6,274.8 607.7,261.9 607.9,257.6 608.1,261.9 608.2,259.8 608.4,257.6 608.5,257.6 608.7,259.8 608.9,253.3 609.0,255.5 609.2,261.9 609.3,261.9 609.5,268.4 609.7,270.5 609.8,268.4 610.0,264.1 610.2,264.1 610.3,255.4 610.5,255.4 610.6,255.4 610.8,257.6 611.0,261.9 611.1,264.1 611.3,266.2 611.4,270.5 611.6,270.5 611.8,266.2 611.9,266.2 612.1,261.9 612.2,257.6 612.4,257.6 612.6,257.6 612.7,257.6 612.9,264.1 613.1,261.9 613.2,259.8 613.4,266.2 613.5,264.1 613.7,259.8 613.9,264.0 614.0,264.0 614.2,259.8 614.3,266.2 614.5,270.5 614.7,268.4 614.8,266.2 615.0,261.9 615.1,251.2 615.3,244.7 615.5,253.3 615.6,253.3 615.8,257.6 616.0,259.8 616.1,264.1 616.3,255.5 616.4,255.5 616.6,253.3 616.8,253.3 616.9,246.9 617.1,246.9 617.2,246.9 617.4,244.7 617.6,249.0 617.7,251.2 617.9,249.0 618.0,255.5 618.2,259.8 618.4,261.9 618.5,264.1 618.7,266.2 618.8,268.4 619.0,268.4 619.2,266.2 619.3,266.2 619.5,266.2 619.7,257.6 619.8,255.5 620.0,251.2 620.1,251.2 620.3,251.2 620.5,255.5 620.6,255.5 620.8,266.2 620.9,264.1 621.1,266.2 621.3,268.4 621.4,272.6 621.6,268.4 621.7,270.5 621.9,268.4 622.1,264.1 622.2,261.9 622.4,253.3 622.6,251.2 622.7,257.6 622.9,261.9 623.0,264.1 623.2,266.2 623.4,270.5 623.5,264.1 623.7,257.6 623.8,253.3 624.0,253.3 624.2,246.9 624.3,255.5 624.5,261.9 624.6,261.9 624.8,264.1 625.0,274.8 625.1,266.2 625.3,261.9 625.4,261.9 625.6,259.8 625.8,251.2 625.9,257.6 626.1,255.5 626.3,253.3 626.4,259.8 626.6,285.6 626.7,281.2 626.9,285.6 627.1,287.7 627.2,287.7 627.4,261.9 627.5,259.8 627.7,253.3 627.9,259.8 628.0,253.3 628.2,261.9 628.3,264.1 628.5,272.6 628.7,266.2 628.8,274.8 629.0,270.5 629.2,274.8 629.3,268.4 629.5,272.6 629.6,270.5 629.8,266.2 630.0,264.1 630.1,264.1 630.3,259.8 630.4,251.2 630.6,253.3 630.8,249.0 630.9,246.9 631.1,249.0 631.2,257.6 631.4,255.5 631.6,257.6 631.7,259.8 631.9,259.8 632.0,253.3 632.2,253.3 632.4,249.0 632.5,251.2 632.7,249.0 632.9,251.2 633.0,251.2 633.2,259.8 633.3,255.5 633.5,255.4 633.7,255.4 633.8,255.5 634.0,249.0 634.1,253.3 634.3,257.6 634.5,259.8 634.6,259.8 634.8,264.1 634.9,259.8 635.1,266.2 635.3,270.5 635.4,279.1 635.6,274.8 635.8,279.1 635.9,279.1 636.1,268.4 636.2,270.5 636.4,279.1 636.6,283.4 636.7,272.6 636.9,279.1 637.0,270.5 637.2,261.9 637.4,255.5 637.5,259.8 637.7,257.6 637.8,255.5 638.0,257.6 638.2,268.4 638.3,264.1 638.5,261.9 638.7,266.2 638.8,268.4 639.0,261.9 639.1,266.2 639.3,266.2 639.5,264.1 639.6,261.9 639.8,259.8 639.9,255.4 640.1,261.9 640.3,259.8 640.4,257.6 640.6,257.6 640.7,261.9 640.9,255.5 641.1,257.6 641.2,257.6 641.4,257.6 641.5,253.3 641.7,251.2 641.9,249.0 642.0,249.0 642.2,246.9 642.4,246.9 642.5,246.9 642.7,249.0 642.8,251.2 643.0,253.3 643.2,255.4 643.3,257.6 643.5,257.6 643.6,257.6 643.8,259.8 644.0,257.6 644.1,257.6 644.3,255.5 644.4,253.3 644.6,251.2 644.8,253.3 644.9,259.8 645.1,264.1 645.3,264.1 645.4,264.1 645.6,261.9 645.7,255.5 645.9,253.3 646.1,261.9 646.2,257.6 646.4,259.8 646.5,259.8 646.7,268.4 646.9,261.9 647.0,261.9 647.2,261.9 647.3,261.9 647.5,251.2 647.7,255.5 647.8,259.8 648.0,264.1 648.1,268.4 648.3,279.1 648.5,274.8 648.6,277.0 648.8,268.4 649.0,268.4 649.1,259.8 649.3,261.9 649.4,255.5 649.6,261.9 649.8,257.6 649.9,255.5 650.1,259.8 650.2,261.9 650.4,266.2 650.6,268.4 650.7,268.4 650.9,264.1 651.0,266.2 651.2,255.5 651.4,259.8 651.5,268.4 651.7,270.5 651.9,272.6 652.0,276.9 652.2,276.9 652.3,272.6 652.5,264.1 652.7,268.4 652.8,266.2 653.0,261.9 653.1,259.8 653.3,264.1 653.5,255.4 653.6,261.9 653.8,259.8 653.9,259.8 654.1,257.6 654.3,264.1 654.4,266.2 654.6,270.5 654.8,274.8 654.9,281.2 655.1,279.1 655.2,274.8 655.4,277.0 655.6,270.5 655.7,268.4 655.9,264.1 656.0,261.9 656.2,255.5 656.4,261.9 656.5,261.9 656.7,268.4 656.8,272.6 657.0,272.6 657.2,266.2 657.3,259.8 657.5,257.6 657.6,253.3 657.8,257.6 658.0,257.6 658.1,268.4 658.3,276.9 658.5,285.6 658.6,287.7 658.8,296.3 658.9,287.7 659.1,279.1 659.3,279.1 659.4,277.0 659.6,272.7 659.7,272.7 659.9,270.5 660.1,261.9 660.2,257.6 660.4,251.2 660.5,257.6 660.7,261.9 660.9,259.8 661.0,261.9 661.2,266.2 661.4,264.1 661.5,259.8 661.7,261.9 661.8,264.1 662.0,261.9 662.2,259.8 662.3,264.1 662.5,268.4 662.6,268.4 662.8,268.4 663.0,272.6 663.1,285.6 663.3,285.6 663.4,287.7 663.6,287.7 663.8,283.4 663.9,266.2 664.1,266.2 664.2,261.9 664.4,259.8 664.6,259.8 664.7,255.5 664.9,249.0 665.1,249.0 665.2,251.2 665.4,246.9 665.5,249.0 665.7,249.0 665.9,246.9 666.0,249.0 666.2,249.0 666.3,246.9 666.5,246.9 666.7,251.2 666.8,253.3 667.0,261.9 667.1,261.9 667.3,268.4 667.5,268.4 667.6,270.5 667.8,270.5 668.0,272.6 668.1,268.4 668.3,266.2 668.4,257.6 668.6,253.3 668.8,253.3 668.9,255.5 669.1,255.5 669.2,266.2 669.4,261.9 669.6,264.1 669.7,264.1 669.9,264.1 670.0,255.5 670.2,259.8 670.4,259.8 670.5,257.6 670.7,255.4 670.9,257.6 671.0,266.2 671.2,264.1 671.3,266.2 671.5,264.1 671.7,266.2 671.8,255.5 672.0,257.6 672.1,255.4 672.3,257.6 672.5,253.3 672.6,257.6 672.8,257.6 672.9,261.9 673.1,264.1 673.3,272.6 673.4,270.5 673.6,272.6 673.7,268.4 673.9,266.2 674.1,257.6 674.2,253.3 674.4,249.0 674.6,253.3 674.7,253.3 674.9,261.9 675.0,264.1 675.2,268.4 675.4,261.9 675.5,261.9 675.7,253.3 675.8,253.3 676.0,249.0 676.2,257.6 676.3,255.5 676.5,272.6 676.6,270.5 676.8,279.1 677.0,270.5 677.1,274.8 677.3,270.5 677.5,272.6 677.6,264.1 677.8,264.1 677.9,266.2 678.1,253.3 678.3,264.1 678.4,264.1 678.6,264.1 678.7,266.2 678.9,270.5 679.1,259.8 679.2,264.1 679.4,264.1 679.5,268.4 679.7,266.2 679.9,274.8 680.0,272.6 680.2,274.8 680.4,268.4 680.5,268.4 680.7,257.6 680.8,257.6 681.0,255.5 681.2,253.3 681.3,255.5 681.5,259.8 681.6,264.1 681.8,264.1 682.0,259.8 682.1,253.3 682.3,249.0 682.4,242.6 682.6,242.6 682.8,244.7 682.9,251.2 683.1,259.8 683.2,264.1 683.4,270.5 683.6,277.0 683.7,277.0 683.9,272.6 684.1,270.5 684.2,264.1 684.4,255.5 684.5,257.6 684.7,255.4 684.9,266.2 685.0,268.4 685.2,268.4 685.3,266.2 685.5,270.5 685.7,268.4 685.8,268.4 686.0,276.9 686.1,274.8 686.3,270.5 686.5,261.9 686.6,264.1 686.8,266.2 687.0,268.4 687.1,277.0 687.3,276.9 687.4,274.8 687.6,268.4 687.8,268.4 687.9,259.8 688.1,255.5 688.2,255.4 688.4,259.8 688.6,261.9 688.7,266.2 688.9,277.0 689.0,279.1 689.2,281.2 689.4,279.1 689.5,276.9 689.7,272.6 689.8,281.2 690.0,270.5 690.2,266.2 690.3,272.7 690.5,270.5 690.7,257.6 690.8,264.1 691.0,264.1 691.1,257.6 691.3,255.5 691.5,255.5 691.6,251.2 691.8,251.2 691.9,249.0 692.1,249.0 692.3,253.3 692.4,253.3 692.6,261.9 692.7,272.6 692.9,281.2 693.1,281.2 693.2,287.7 693.4,279.1 693.6,274.8 693.7,268.4 693.9,266.2 694.0,261.9 694.2,261.9 694.4,257.6 694.5,255.5 694.7,257.6 694.8,257.6 695.0,257.6 695.2,261.9 695.3,264.1 695.5,268.4 695.6,274.8 695.8,279.1 696.0,274.8 696.1,272.6 696.3,261.9 696.5,257.6 696.6,253.3 696.8,253.3 696.9,257.6 697.1,264.1 697.3,268.4 697.4,268.4 697.6,274.8 697.7,270.5 697.9,270.5 698.1,264.1 698.2,272.6 698.4,270.5 698.5,272.6 698.7,268.4 698.9,274.8 699.0,289.9 699.2,283.4 699.3,283.4 699.5,283.4 699.7,277.0 699.8,253.3 700.0,255.4 700.2,261.9 700.3,268.4 700.5,272.6 700.6,277.0 700.8,279.1 701.0,272.6 701.1,274.8 701.3,268.4 701.4,264.1 701.6,259.8 701.8,259.8 701.9,249.0 702.1,257.6 702.2,257.6 702.4,261.9 702.6,261.9 702.7,270.5 702.9,266.2 703.1,270.5 703.2,268.4 703.4,268.4 703.5,261.9 703.7,259.8 703.9,255.5 704.0,261.9 704.2,266.2 704.3,266.2 704.5,261.9 704.7,264.1 704.8,257.6 705.0,253.3 705.1,253.3 705.3,257.6 705.5,255.5 705.6,253.3 705.8,249.0 705.9,251.2 706.1,246.9 706.3,251.2 706.4,253.3 706.6,255.5 706.8,255.4 706.9,264.1 707.1,259.8 707.2,257.6 707.4,261.9 707.6,266.2 707.7,259.8 707.9,259.8 708.0,281.2 708.2,274.8 708.4,268.4 708.5,270.5 708.7,272.6 708.8,253.3 709.0,261.9 709.2,268.4 709.3,268.4 709.5,266.2 709.7,270.5 709.8,264.1 710.0,261.9 710.1,270.5 710.3,277.0 710.5,294.2 710.6,294.2 710.8,294.1 710.9,285.6 711.1,279.1 711.3,255.5 711.4,255.5 711.6,251.2 711.7,249.0 711.9,253.3 712.1,259.8 712.2,264.1 712.4,266.2 712.5,274.8 712.7,268.4 712.9,261.9 713.0,264.1 713.2,266.2 713.4,266.2 713.5,279.1 713.7,283.4 713.8,285.6 714.0,279.1 714.2,277.0 714.3,272.6 714.5,274.8 714.6,270.5 714.8,274.8 715.0,270.5 715.1,261.9 715.3,257.6 715.4,261.9 715.6,264.1 715.8,268.4 715.9,268.4 716.1,266.2 716.3,257.6 716.4,257.6 716.6,251.2 716.7,257.6 716.9,259.8 717.1,268.4 717.2,264.1 717.4,264.1 717.5,257.6 717.7,257.6 717.9,253.3 718.0,255.5 718.2,257.6 718.3,264.1 718.5,272.6 718.7,268.4 718.8,277.0 719.0,287.7 719.2,283.4 719.3,272.6 719.5,277.0 719.6,270.5 719.8,270.5 720.0,270.5 720.1,277.0 720.3,277.0 720.4,274.8 720.6,261.9 720.8,270.5 720.9,268.4 721.1,264.1 721.2,266.2 721.4,268.4 721.6,259.8 721.7,264.1 721.9,268.4 722.0,266.2 722.2,264.1 722.4,272.6 722.5,274.8 722.7,270.5 722.9,268.4 723.0,270.5 723.2,268.4 723.3,266.2 723.5,266.2 723.7,270.5 723.8,266.2 724.0,266.2 724.1,266.2 724.3,266.2 724.5,264.1 724.6,266.2 724.8,259.8 724.9,261.9 725.1,264.1 725.3,259.8 725.4,259.8 725.6,266.2 725.8,261.9 725.9,257.6 726.1,268.4 726.2,272.6 726.4,285.6 726.6,285.6 726.7,294.1 726.9,285.6 727.0,285.6 727.2,268.4 727.4,259.8 727.5,257.6 727.7,257.6 727.8,264.1 728.0,261.9 728.2,266.2 728.3,264.1 728.5,270.5 728.6,259.8 728.8,261.9 729.0,311.4 729.1,315.6 729.3,309.2 729.5,307.1 729.6,302.8 729.8,253.3 729.9,246.9 730.1,249.0 730.3,251.2 730.4,253.3 730.6,255.5 730.7,268.4 730.9,264.1 731.1,268.4 731.2,270.5 731.4,292.0 731.5,285.6 731.7,287.7 731.9,283.4 732.0,287.7 732.2,264.1 732.4,270.5 732.5,274.8 732.7,279.1 732.8,279.1 733.0,277.0 733.2,268.4 733.3,264.1 733.5,259.8 733.6,255.5 733.8,255.5 734.0,251.2 734.1,255.5 734.3,259.8 734.4,257.6 734.6,259.8 734.8,268.4 734.9,264.1 735.1,261.9 735.3,266.2 735.4,264.1 735.6,257.6 735.7,257.6 735.9,259.8 736.1,255.5 736.2,261.9 736.4,259.8 736.5,266.2 736.7,261.9 736.9,264.1 737.0,257.6 737.2,257.6 737.3,253.3 737.5,266.2 737.7,266.2 737.8,272.6 738.0,279.1 738.1,276.9 738.3,264.1 738.5,272.6 738.6,268.4 738.8,264.1 739.0,264.1 739.1,266.2 739.3,253.3 739.4,251.2 739.6,249.0 739.8,249.0 739.9,246.9 740.1,255.5 740.2,259.8 740.4,264.1 740.6,266.2 740.7,272.6 740.9,266.2 741.0,264.1 741.2,259.8 741.4,261.9 741.5,255.5 741.7,255.5 741.9,255.5 742.0,257.6 742.2,255.4 742.3,257.6 742.5,257.6 742.7,257.6 742.8,255.5 743.0,257.6 743.1,255.5 743.3,255.5 743.5,253.3 743.6,253.3 743.8,253.3 743.9,255.5 744.1,257.6 744.3,257.6 744.4,257.6 744.6,259.8 744.8,257.6 744.9,255.5 745.1,257.6 745.2,257.6 745.4,251.2 745.6,253.3 745.7,257.6 745.9,253.3 746.0,255.4 746.2,255.5 746.4,255.4 746.5,253.3 746.7,257.6 746.8,257.6 747.0,259.8 747.2,261.9 747.3,279.1 747.5,279.1 747.6,277.0 747.8,274.8 748.0,268.4 748.1,253.3 748.3,251.2 748.5,257.6 748.6,257.6 748.8,266.2 748.9,264.1 749.1,266.2 749.3,266.2 749.4,264.0 749.6,259.8 749.7,255.5 749.9,253.3 750.1,253.3 750.2,257.6 750.4,259.8 750.5,268.4 750.7,268.4 750.9,261.9 751.0,259.8 751.2,253.3 751.4,249.0 751.5,251.2 751.7,249.0 751.8,251.2 752.0,259.8 752.2,259.8 752.3,257.6 752.5,264.1 752.6,264.1 752.8,257.6 753.0,257.6 753.1,257.6 753.3,255.4 753.4,255.4 753.6,255.4 753.8,257.6 753.9,259.8 754.1,266.2 754.2,264.1 754.4,261.9 754.6,261.9 754.7,259.8 754.9,253.3 755.1,253.3 755.2,255.5 755.4,274.8 755.5,276.9 755.7,281.2 755.9,281.2 756.0,281.2 756.2,259.8 756.3,266.2 756.5,261.9 756.7,259.8 756.8,261.9 757.0,261.9 757.1,259.8 757.3,259.8 757.5,259.8 757.6,261.9 757.8,259.8 758.0,253.3 758.1,249.0 758.3,253.3 758.4,249.0 758.6,253.3 758.8,253.3 758.9,264.1 759.1,268.4 759.2,270.5 759.4,266.2 759.6,266.2 759.7,259.8 759.9,253.3 760.0,251.2 760.2,249.0 760.4,249.0 760.5,246.9 760.7,253.3 760.9,255.4 761.0,257.6 761.2,257.6 761.3,257.6 761.5,251.2 761.7,246.9 761.8,253.3 762.0,253.3 762.1,259.8 762.3,266.2 762.5,272.6 762.6,266.2 762.8,274.8 762.9,270.5 763.1,274.8 763.3,270.5 763.4,272.6 763.6,266.2 763.7,264.1 763.9,255.4 764.1,257.6 764.2,266.2 764.4,272.6 764.6,270.5 764.7,270.5 764.9,268.4 765.0,261.9 765.2,253.3 765.4,255.5 765.5,255.5 765.7,261.9 765.8,264.1 766.0,270.5 766.2,268.4 766.3,266.2 766.5,264.1 766.6,257.6 766.8,257.6 767.0,259.8 767.1,266.2 767.3,259.8 767.5,268.4 767.6,261.9 767.8,261.9 767.9,255.5 768.1,257.6 768.3,251.2 768.4,253.3 768.6,257.6 768.7,264.1 768.9,272.6 769.1,272.6 769.2,270.5 769.4,266.2 769.5,279.1 769.7,270.5 769.9,272.6 770.0,270.5 770.2,270.5 770.3,251.2 770.5,251.2 770.7,246.9 770.8,249.0 771.0,249.0 771.2,249.0 771.3,246.9 771.5,257.6 771.6,259.8 771.8,266.2 772.0,266.2 772.1,277.0 772.3,270.5 772.4,268.4 772.6,261.9 772.8,266.2 772.9,255.5 773.1,253.3 773.2,257.6 773.4,261.9 773.6,261.9 773.7,266.2 773.9,261.9 774.1,259.8 774.2,255.5 774.4,255.5 774.5,257.6 774.7,270.5 774.9,270.5 775.0,272.6 775.2,268.4 775.3,268.4 775.5,259.8 775.7,257.6 775.8,257.6 776.0,259.8 776.1,261.9 776.3,259.8 776.5,261.9 776.6,261.9 776.8,259.8 777.0,253.3 777.1,253.3 777.3,253.3 777.4,253.3 777.6,257.6 777.8,261.9 777.9,259.8 778.1,261.9 778.2,259.8 778.4,257.6 778.6,272.6 778.7,276.9 778.9,274.8 779.0,272.6 779.2,277.0 779.4,255.5 779.5,255.4 779.7,253.3 779.8,257.6 780.0,251.2 780.2,255.4 780.3,257.6 780.5,259.8 780.7,266.2 780.8,266.2 781.0,266.2 781.1,261.9 781.3,270.5 781.5,259.8 781.6,266.2 781.8,261.9 781.9,266.2 782.1,253.3 782.3,257.6 782.4,251.2 782.6,257.6 782.7,253.3 782.9,253.3 783.1,261.9 783.2,264.1 783.4,270.5 783.6,274.8 783.7,277.0 783.9,266.2 784.0,272.7 784.2,266.2 784.4,261.9 784.5,272.6 784.7,270.5 784.8,268.4 785.0,270.5 785.2,270.5 785.3,259.8 785.5,261.9 785.6,257.6 785.8,253.3 786.0,253.3 786.1,251.2 786.3,253.3 786.4,251.2 786.6,249.0 786.8,249.0 786.9,251.2 787.1,253.3 787.3,253.3 787.4,259.8 787.6,257.6 787.7,261.9 787.9,266.2 788.1,272.6 788.2,270.5 788.4,274.8 788.5,272.6 788.7,268.4 788.9,261.9 789.0,259.8 789.2,264.1 789.3,261.9 789.5,259.8 789.7,285.6 789.8,292.0 790.0,285.6 790.2,285.6 790.3,283.4 790.5,264.1 790.6,255.5 790.8,259.8 791.0,264.1 791.1,272.7 791.3,268.4 791.4,268.4 791.6,264.1 791.8,259.8 791.9,251.2 792.1,251.2 792.2,257.6 792.4,259.8 792.6,259.8 792.7,268.4 792.9,270.5 793.0,266.2 793.2,264.1 793.4,268.4 793.5,261.9 793.7,261.9 793.9,261.9 794.0,266.2 794.2,259.8 794.3,259.8 794.5,257.6 794.7,261.9 794.8,257.6 795.0,261.9 795.1,259.8 795.3,266.2 795.5,259.8 795.6,259.8 795.8,261.9 795.9,266.2 796.1,257.6 796.3,257.6 796.4,259.8 796.6,255.5 796.8,251.2 796.9,257.6 797.1,257.6 797.2,259.8 797.4,264.1 797.6,268.4 797.7,261.9 797.9,261.9 798.0,259.8 798.2,261.9 798.4,257.6 798.5,257.6 798.7,259.8 798.8,257.6 799.0,251.2 799.2,253.3 799.3,253.3 799.5,251.2 799.7,253.3 799.8,253.3 800.0,251.2 800.1,257.6 800.3,259.8 800.5,259.8 800.6,261.9 800.8,261.9 800.9,255.5 801.1,253.3 801.3,251.2 801.4,251.2 801.6,251.2 801.7,251.2 801.9,251.2 802.1,253.3 802.2,251.2 802.4,249.0 802.5,249.0 802.7,255.5 802.9,257.6 803.0,259.8 803.2,261.9 803.4,264.1 803.5,255.5 803.7,251.2 803.8,251.2 804.0,251.2 804.2,251.2 804.3,255.4 804.5,253.3 804.6,251.2 804.8,253.3 805.0,259.8 805.1,255.5 805.3,259.8 805.4,259.8 805.6,257.6 805.8,253.3 805.9,257.6 806.1,255.5 806.3,255.5 806.4,261.9 806.6,264.1 806.7,261.9 806.9,264.1 807.1,264.1 807.2,257.6 807.4,255.5 807.5,255.5 807.7,253.3 807.9,253.3 808.0,259.8 808.2,261.9 808.3,264.1 808.5,266.2 808.7,268.4 808.8,261.9 809.0,259.8 809.1,259.8 809.3,266.2 809.5,268.4 809.6,272.7 809.8,272.7 810.0,279.1 810.1,277.0 810.3,281.2 810.4,276.9 810.6,272.6 810.8,264.1 810.9,261.9 811.1,255.5 811.2,253.3 811.4,255.4 811.6,259.8 811.7,270.5 811.9,274.8 812.0,281.2 812.2,279.1 812.4,277.0 812.5,264.1 812.7,259.8 812.9,255.4 813.0,253.3 813.2,257.6 813.3,261.9 813.5,264.1 813.7,264.1 813.8,266.2 814.0,270.5 814.1,268.4 814.3,268.4 814.5,266.2 814.6,266.2 814.8,264.1 814.9,264.1 815.1,261.9 815.3,268.4 815.4,268.4 815.6,270.5 815.8,268.4 815.9,268.4 816.1,264.1 816.2,266.2 816.4,257.6 816.6,257.6 816.7,255.4 816.9,257.6 817.0,255.5 817.2,257.6 817.4,255.5 817.5,270.5 817.7,268.4 817.8,270.5 818.0,266.2 818.2,268.4 818.3,253.3 818.5,253.3 818.6,253.3 818.8,259.8 819.0,264.1 819.1,266.2 819.3,266.2 819.5,264.1 819.6,259.8 819.8,255.4 819.9,253.3 820.1,255.4 820.3,255.5 820.4,255.4 820.6,253.3 820.7,253.3 820.9,259.8 821.1,261.9 821.2,264.1 821.4,261.9 821.5,268.4 821.7,257.6 821.9,257.6 822.0,255.4 822.2,257.6 822.4,251.2 822.5,253.3 822.7,253.3 822.8,251.2 823.0,249.0 823.2,253.3 823.3,253.3 823.5,253.3 823.6,257.6 823.8,266.2 824.0,261.9 824.1,270.5 824.3,270.5 824.4,268.4 824.6,261.9 824.8,261.9 824.9,255.4 825.1,257.6 825.2,255.5 825.4,264.1 825.6,268.4 825.7,264.1 825.9,264.1 826.1,264.1 826.2,255.5 826.4,253.3 826.5,261.9 826.7,257.6 826.9,257.6 827.0,255.5 827.2,253.3 827.3,249.0 827.5,251.2 827.7,253.3 827.8,253.3 828.0,255.4 828.1,255.4 828.3,259.8 828.5,257.6 828.6,264.1 828.8,264.1 829.0,266.2 829.1,261.9 829.3,266.2 829.4,272.6 829.6,270.5 829.8,268.4 829.9,272.6 830.1,270.5 830.2,270.5 830.4,272.6 830.6,276.9 830.7,270.5 830.9,272.6 831.0,264.1 831.2,261.9 831.4,266.2 831.5,264.1 831.7,259.8 831.9,264.1 832.0,266.2 832.2,257.6 832.3,259.8 832.5,259.8 832.7,253.3 832.8,253.3 833.0,249.0 833.1,249.0 833.3,251.2 833.5,255.5 833.6,264.1 833.8,270.5 833.9,270.5 834.1,268.4 834.3,268.4 834.4,266.2 834.6,261.9 834.7,264.1 834.9,272.6 835.1,272.7 835.2,270.5 835.4,272.6 835.6,270.5 835.7,264.1 835.9,259.8 836.0,253.3 836.2,251.2 836.4,251.2 836.5,249.0 836.7,249.0 836.8,251.2 837.0,253.3 837.2,251.2 837.3,261.9 837.5,266.2 837.6,268.4 837.8,266.2 838.0,274.8 838.1,266.2 838.3,266.2 838.5,268.4 838.6,266.2 838.8,266.2 838.9,270.5 839.1,268.4 839.3,261.9 839.4,266.2 839.6,259.8 839.7,257.6 839.9,257.6 840.1,259.8 840.2,268.4 840.4,268.4 840.5,261.9 840.7,259.8 840.9,257.6 841.0,255.5 841.2,255.5 841.4,259.8 841.5,264.1 841.7,264.1 841.8,259.8 842.0,264.1 842.2,264.1 842.3,261.9 842.5,266.2 842.6,266.2 842.8,268.4 843.0,268.4 843.1,264.1 843.3,264.1 843.4,268.4 843.6,268.4 843.8,268.4 843.9,274.8 844.1,279.1 844.2,272.6 844.4,266.2 844.6,261.9 844.7,261.9 844.9,253.3 845.1,257.6 845.2,257.6 845.4,259.8 845.5,264.1 845.7,266.2 845.9,264.1 846.0,268.4 846.2,277.0 846.3,268.4 846.5,264.1 846.7,257.6 846.8,261.9 847.0,255.4 847.1,259.8 847.3,266.2 847.5,272.7 847.6,270.5 847.8,270.5 848.0,266.2 848.1,264.1 848.3,261.9 848.4,255.4 848.6,261.9 848.8,270.5 848.9,274.8 849.1,272.6 849.2,272.6 849.4,268.4 849.6,264.1 849.7,261.9 849.9,270.5 850.0,270.5 850.2,264.1 850.4,261.9 850.5,257.6 850.7,249.0 850.8,253.3 851.0,257.6 851.2,261.9 851.3,268.4 851.5,270.5 851.7,272.6 851.8,274.8 852.0,270.5 852.1,270.5 852.3,270.5 852.5,266.2 852.6,268.4 852.8,268.4 852.9,261.9 853.1,261.9 853.3,261.9 853.4,255.4 853.6,257.6 853.7,259.8 853.9,264.1 854.1,270.5 854.2,270.5 854.4,266.2 854.6,274.8 854.7,268.4 854.9,266.2 855.0,268.4 855.2,272.6 855.4,261.9 855.5,264.1 855.7,259.8 855.8,259.8 856.0,259.8 856.2,259.8 856.3,257.6 856.5,259.8 856.6,257.6 856.8,255.5 857.0,261.9 857.1,266.2 857.3,264.1 857.5,261.9 857.6,264.1 857.8,257.6 857.9,253.3 858.1,249.0 858.3,251.2 858.4,244.7 858.6,246.9 858.7,246.9 858.9,249.0 859.1,255.5 859.2,255.5 859.4,253.3 859.5,257.6 859.7,264.1 859.9,266.2 860.0,270.5 860.2,270.5 860.3,285.6 860.5,287.7 860.7,283.4 860.8,287.7 861.0,296.3 861.2,279.1 861.3,274.8 861.5,281.2 861.6,274.8 861.8,266.2 862.0,270.5 862.1,266.2 862.3,257.6 862.4,259.8 862.6,264.1 862.8,255.5 862.9,257.6 863.1,257.6 863.2,255.4 863.4,253.3 863.6,261.9 863.7,257.6 863.9,255.4 864.1,257.6 864.2,257.6 864.4,261.9 864.5,264.1 864.7,264.1 864.9,261.9 865.0,268.4 865.2,259.8 865.3,274.8 865.5,281.2" fill="none" stroke="#1869bf" stroke-width="1.5" stroke-linejoin="round"/>
<path d="M60.7,399.5h0M60.8,399.5h0M61.0,370.8h0M61.1,359.2h0M61.3,356.5h0M61.5,304.9h0M61.6,294.2h0M61.8,298.5h0M61.9,285.6h0M62.1,285.6h0M62.3,315.6h0M62.4,307.0h0M62.6,320.0h0M62.8,320.0h0M62.9,302.8h0M63.1,296.3h0M63.2,298.5h0M63.4,277.0h0M63.6,276.9h0M63.7,277.0h0M63.9,255.4h0M64.0,264.1h0M64.2,272.6h0M64.4,289.9h0M64.5,289.9h0M64.7,296.3h0M64.8,302.8h0M65.0,313.5h0M65.2,304.9h0M65.3,395.2h0M65.5,405.9h0M65.7,408.1h0M65.8,408.1h0M66.0,403.8h0M66.1,311.4h0M66.3,302.8h0M66.5,283.4h0M66.6,274.8h0M66.8,300.6h0M66.9,384.4h0M67.1,373.7h0M67.3,395.2h0M67.4,401.6h0M67.6,369.4h0M67.7,289.9h0M67.9,313.5h0M68.1,294.2h0M68.2,315.7h0M68.4,317.8h0M68.5,335.0h0M68.7,328.5h0M68.9,328.6h0M69.0,317.8h0M69.2,343.6h0M69.4,354.3h0M69.5,352.2h0M69.7,382.3h0M69.8,360.8h0M70.0,386.6h0M70.2,363.0h0M70.3,350.1h0M70.5,315.7h0M70.6,339.3h0M70.8,313.5h0M71.0,328.6h0M71.1,350.1h0M71.3,354.4h0M71.4,343.6h0M71.6,317.8h0M71.8,296.3h0M71.9,354.3h0M72.1,373.7h0M72.3,373.7h0M72.4,382.3h0M72.6,386.6h0M72.7,375.9h0M72.9,386.6h0M73.1,399.5h0M73.2,397.3h0M73.4,410.2h0M73.5,365.1h0M73.7,369.4h0M73.9,356.5h0M74.0,371.6h0M74.2,384.4h0M74.3,365.1h0M74.5,343.6h0M74.7,347.9h0M74.8,341.5h0M75.0,341.5h0M75.2,360.8h0M75.3,358.7h0M75.5,367.2h0M75.6,350.0h0M75.8,332.9h0M76.0,322.1h0M76.1,313.5h0M76.3,300.6h0M76.4,326.4h0M76.6,337.2h0M76.8,345.8h0M76.9,388.8h0M77.1,384.5h0M77.2,433.9h0M77.4,438.2h0M77.6,416.7h0M77.7,369.4h0M77.9,382.3h0M78.0,309.2h0M78.2,307.0h0M78.4,307.1h0M78.5,322.1h0M78.7,294.1h0M78.9,328.6h0M79.0,322.1h0M79.2,332.9h0M79.3,315.6h0M79.5,317.8h0M79.7,281.2h0M79.8,274.8h0M80.0,287.7h0M80.1,307.1h0M80.3,332.9h0M80.5,369.4h0M80.6,356.5h0M80.8,332.9h0M80.9,335.0h0M81.1,324.2h0M81.3,304.9h0M81.4,313.5h0M81.6,335.0h0M81.8,335.0h0M81.9,322.1h0M82.1,328.5h0M82.2,350.0h0M82.4,343.6h0M82.6,339.3h0M82.7,339.3h0M82.9,330.7h0M83.0,300.6h0M83.2,309.2h0M83.4,322.1h0M83.5,339.3h0M83.7,332.9h0M83.8,358.6h0M84.0,347.9h0M84.2,335.0h0M84.3,397.4h0M84.5,416.7h0M84.7,390.9h0M84.8,378.0h0M85.0,380.2h0M85.1,309.2h0M85.3,307.0h0M85.5,330.7h0M85.6,347.9h0M85.8,330.7h0M85.9,339.3h0M86.1,337.2h0M86.3,320.0h0M86.4,315.7h0M86.6,317.8h0M86.7,322.1h0M86.9,317.8h0M87.1,315.6h0M87.2,302.8h0M87.4,335.0h0M87.5,320.0h0M87.7,319.9h0M87.9,315.7h0M88.0,343.6h0M88.2,311.4h0M88.4,367.2h0M88.5,354.4h0M88.7,405.9h0M88.8,401.6h0M89.0,425.3h0M89.2,367.2h0M89.3,363.0h0M89.5,328.6h0M89.6,313.5h0M89.8,311.4h0M90.0,307.1h0M90.1,322.1h0M90.3,390.9h0M90.4,403.8h0M90.6,382.3h0M90.8,461.9h0M90.9,476.9h0M91.1,410.2h0M91.3,425.3h0M91.4,457.6h0M91.6,410.3h0M91.7,436.1h0M91.9,442.5h0M92.1,425.3h0M92.2,427.5h0M92.4,399.5h0M92.5,371.6h0M92.7,378.0h0M92.9,384.4h0M93.0,386.6h0M93.2,412.4h0M93.3,408.1h0M93.5,412.4h0M93.7,403.8h0M93.8,384.4h0M94.0,382.3h0M94.1,382.3h0M94.3,382.3h0M94.5,378.0h0M94.6,382.3h0M94.8,380.2h0M95.0,356.5h0M95.1,347.9h0M95.3,363.0h0M95.4,347.9h0M95.6,322.1h0M95.8,322.1h0M95.9,311.4h0M96.1,300.6h0M96.2,298.5h0M96.4,309.2h0M96.6,324.2h0M96.7,324.2h0M96.9,320.0h0M97.0,322.1h0M97.2,324.2h0M97.4,328.5h0M97.5,324.2h0M97.7,328.6h0M97.9,335.0h0M98.0,335.0h0M98.2,332.9h0M98.3,320.0h0M98.5,298.5h0M98.7,285.6h0M98.8,294.1h0M99.0,281.2h0M99.1,313.5h0M99.3,341.5h0M99.5,341.5h0M99.6,330.7h0M99.8,330.7h0M99.9,311.4h0M100.1,287.7h0M100.3,354.4h0M100.4,339.3h0M100.6,335.0h0M100.8,322.1h0M100.9,322.1h0M101.1,255.4h0M101.2,274.8h0M101.4,285.6h0M101.6,298.4h0M101.7,313.5h0M101.9,339.3h0M102.0,403.8h0M102.2,405.9h0M102.4,399.5h0M102.5,395.2h0M102.7,380.2h0M102.8,330.7h0M103.0,356.5h0M103.2,380.2h0M103.3,451.1h0M103.5,440.4h0M103.6,416.7h0M103.8,399.5h0M104.0,365.1h0M104.1,307.1h0M104.3,332.9h0M104.5,343.6h0M104.6,322.1h0M104.8,350.1h0M104.9,354.4h0M105.1,328.6h0M105.3,373.7h0M105.4,393.1h0M105.6,395.2h0M105.7,382.3h0M105.9,388.8h0M106.1,326.4h0M106.2,307.0h0M106.4,302.8h0M106.5,287.7h0M106.7,300.6h0M106.9,304.9h0M107.0,307.1h0M107.2,304.9h0M107.4,300.6h0M107.5,309.2h0M107.7,341.5h0M107.8,360.8h0M108.0,380.1h0M108.2,401.6h0M108.3,403.8h0M108.5,378.0h0M108.6,356.5h0M108.8,337.2h0M109.0,320.0h0M109.1,315.7h0M109.3,350.0h0M109.4,371.6h0M109.6,363.0h0M109.8,382.3h0M109.9,378.0h0M110.1,345.8h0M110.2,382.3h0M110.4,375.9h0M110.6,356.5h0M110.7,343.6h0M110.9,347.9h0M111.1,315.6h0M111.2,311.4h0M111.4,335.0h0M111.5,335.0h0M111.7,337.2h0M111.9,311.4h0M112.0,311.4h0M112.2,287.7h0M112.3,307.0h0M112.5,309.2h0M112.7,309.2h0M112.8,341.5h0M113.0,339.3h0M113.1,339.3h0M113.3,378.0h0M113.5,380.1h0M113.6,367.2h0M113.8,369.4h0M114.0,371.6h0M114.1,322.1h0M114.3,337.1h0M114.4,337.2h0M114.6,358.7h0M114.8,337.2h0M114.9,358.7h0M115.1,375.9h0M115.2,375.9h0M115.4,360.8h0M115.6,373.7h0M115.7,363.0h0M115.9,354.4h0M116.0,335.0h0M116.2,335.0h0M116.4,328.6h0M116.5,315.7h0M116.7,322.1h0M116.8,330.7h0M117.0,373.7h0M117.2,373.7h0M117.3,360.8h0M117.5,339.3h0M117.7,330.7h0M117.8,294.1h0M118.0,328.6h0M118.1,360.8h0M118.3,371.6h0M118.5,375.9h0M118.6,375.9h0M118.8,350.1h0M118.9,322.1h0M119.1,315.7h0M119.3,311.4h0M119.4,315.6h0M119.6,302.8h0M119.7,313.5h0M119.9,302.8h0M120.1,302.8h0M120.2,289.9h0M120.4,307.0h0M120.6,309.2h0M120.7,350.1h0M120.9,350.1h0M121.0,343.6h0M121.2,330.7h0M121.4,313.5h0M121.5,274.8h0M121.7,281.2h0M121.8,292.0h0M122.0,302.8h0M122.2,315.7h0M122.3,320.0h0M122.5,324.2h0M122.6,337.1h0M122.8,345.8h0M123.0,343.6h0M123.1,352.2h0M123.3,356.5h0M123.5,345.8h0M123.6,328.6h0M123.8,320.0h0M123.9,320.0h0M124.1,320.0h0M124.3,313.5h0M124.4,294.2h0M124.6,296.3h0M124.7,300.6h0M124.9,296.3h0M125.1,289.9h0M125.2,289.9h0M125.4,315.7h0M125.5,307.0h0M125.7,294.2h0M125.9,296.3h0M126.0,313.5h0M126.2,283.4h0M126.3,268.4h0M126.5,268.4h0M126.7,279.1h0M126.8,283.4h0M127.0,302.8h0M127.2,324.2h0M127.3,330.7h0M127.5,350.0h0M127.6,330.7h0M127.8,322.1h0M128.0,309.2h0M128.1,320.0h0M128.3,326.4h0M128.4,354.4h0M128.6,358.7h0M128.8,375.9h0M128.9,360.8h0M129.1,337.2h0M129.2,332.9h0M129.4,322.1h0M129.6,296.3h0M129.7,296.3h0M129.9,302.8h0M130.1,294.2h0M130.2,320.0h0M130.4,320.0h0M130.5,365.1h0M130.7,345.8h0M130.9,330.7h0M131.0,304.9h0M131.2,315.6h0M131.3,270.5h0M131.5,292.0h0M131.7,317.8h0M131.8,332.9h0M132.0,332.9h0M132.1,332.9h0M132.3,328.5h0M132.5,330.7h0M132.6,332.9h0M132.8,354.4h0M132.9,360.8h0M133.1,363.0h0M133.3,365.1h0M133.4,347.9h0M133.6,332.9h0M133.8,326.4h0M133.9,307.0h0M134.1,287.7h0M134.2,287.7h0M134.4,270.5h0M134.6,322.1h0M134.7,337.2h0M134.9,343.6h0M135.0,343.6h0M135.2,347.9h0M135.4,307.0h0M135.5,292.0h0M135.7,274.8h0M135.8,283.4h0M136.0,279.1h0M136.2,292.0h0M136.3,287.7h0M136.5,311.4h0M136.7,302.8h0M136.8,302.8h0M137.0,304.9h0M137.1,309.2h0M137.3,300.6h0M137.5,307.0h0M137.6,324.2h0M137.8,298.5h0M137.9,298.5h0M138.1,283.4h0M138.3,296.3h0M138.4,300.6h0M138.6,315.7h0M138.7,315.7h0M138.9,315.6h0M139.1,317.8h0M139.2,311.4h0M139.4,292.0h0M139.6,335.0h0M139.7,335.0h0M139.9,313.5h0M140.0,347.9h0M140.2,365.1h0M140.4,330.7h0M140.5,341.5h0M140.7,341.5h0M140.8,292.0h0M141.0,287.7h0M141.2,302.8h0M141.3,352.2h0M141.5,352.2h0M141.6,352.2h0M141.8,369.4h0M142.0,345.8h0M142.1,302.8h0M142.3,360.8h0M142.4,371.6h0M142.6,360.8h0M142.8,378.0h0M142.9,382.3h0M143.1,320.0h0M143.3,332.9h0M143.4,317.8h0M143.6,320.0h0M143.7,322.1h0M143.9,335.0h0M144.1,341.5h0M144.2,367.2h0M144.4,363.0h0M144.5,350.1h0M144.7,365.1h0M144.9,335.0h0M145.0,309.2h0M145.2,317.8h0M145.3,358.7h0M145.5,335.0h0M145.7,339.3h0M145.8,335.0h0M146.0,328.5h0M146.2,272.6h0M146.3,352.2h0M146.5,347.9h0M146.6,352.2h0M146.8,347.9h0M147.0,352.2h0M147.1,268.4h0M147.3,266.2h0M147.4,294.2h0M147.6,279.1h0M147.8,277.0h0M147.9,281.2h0M148.1,294.1h0M148.2,283.4h0M148.4,285.6h0M148.6,298.5h0M148.7,309.2h0M148.9,317.8h0M149.1,311.4h0M149.2,328.6h0M149.4,330.7h0M149.5,326.4h0M149.7,315.7h0M149.9,315.6h0M150.0,313.5h0M150.2,315.7h0M150.3,378.0h0M150.5,378.0h0M150.7,393.1h0M150.8,373.7h0M151.0,378.0h0M151.1,341.5h0M151.3,358.7h0M151.5,360.8h0M151.6,386.6h0M151.8,395.2h0M151.9,375.9h0M152.1,360.8h0M152.3,345.8h0M152.4,354.3h0M152.6,356.5h0M152.8,352.2h0M152.9,339.3h0M153.1,339.3h0M153.2,332.9h0M153.4,315.7h0M153.6,332.9h0M153.7,350.1h0M153.9,352.2h0M154.0,347.9h0M154.2,356.5h0M154.4,345.8h0M154.5,339.3h0M154.7,360.8h0M154.8,358.6h0M155.0,341.5h0M155.2,371.6h0M155.3,395.2h0M155.5,365.1h0M155.7,365.1h0M155.8,365.1h0M156.0,350.0h0M156.1,341.5h0M156.3,335.0h0M156.5,317.8h0M156.6,347.9h0M156.8,317.8h0M156.9,304.9h0M157.1,304.9h0M157.3,352.2h0M157.4,347.9h0M157.6,358.7h0M157.7,345.8h0M157.9,358.6h0M158.1,341.5h0M158.2,317.8h0M158.4,307.1h0M158.5,309.2h0M158.7,307.1h0M158.9,298.5h0M159.0,298.5h0M159.2,352.2h0M159.4,369.4h0M159.5,375.9h0M159.7,382.3h0M159.8,375.9h0M160.0,322.1h0M160.2,345.8h0M160.3,328.6h0M160.5,298.5h0M160.6,322.1h0M160.8,358.7h0M161.0,337.2h0M161.1,350.1h0M161.3,378.0h0M161.4,390.9h0M161.6,375.9h0M161.8,375.9h0M161.9,360.8h0M162.1,360.8h0M162.3,345.8h0M162.4,350.1h0M162.6,335.0h0M162.7,371.6h0M162.9,369.4h0M163.1,345.8h0M163.2,405.9h0M163.4,421.0h0M163.5,386.6h0M163.7,367.2h0M163.9,369.4h0M164.0,298.5h0M164.2,300.6h0M164.3,300.6h0M164.5,302.8h0M164.7,317.8h0M164.8,324.2h0M165.0,317.8h0M165.2,332.9h0M165.3,322.1h0M165.5,324.2h0M165.6,313.5h0M165.8,304.9h0M166.0,289.9h0M166.1,320.0h0M166.3,365.1h0M166.4,363.0h0M166.6,382.3h0M166.8,401.7h0M166.9,395.2h0M167.1,343.6h0M167.2,335.0h0M167.4,315.6h0M167.6,317.8h0M167.7,328.5h0M167.9,352.2h0M168.0,363.0h0M168.2,384.4h0M168.4,388.8h0M168.5,373.7h0M168.7,339.3h0M168.9,343.6h0M169.0,313.5h0M169.2,304.9h0M169.3,315.6h0M169.5,371.6h0M169.7,365.1h0M169.8,384.4h0M170.0,365.1h0M170.1,337.2h0M170.3,287.7h0M170.5,274.8h0M170.6,257.6h0M170.8,277.0h0M170.9,287.7h0M171.1,285.6h0M171.3,363.0h0M171.4,373.7h0M171.6,371.6h0M171.8,384.4h0M171.9,382.3h0M172.1,315.6h0M172.2,343.6h0M172.4,345.8h0M172.6,335.0h0M172.7,352.2h0M172.9,362.9h0M173.0,337.2h0M173.2,339.3h0M173.4,352.2h0M173.5,358.7h0M173.7,371.5h0M173.8,397.4h0M174.0,388.8h0M174.2,395.2h0M174.3,388.8h0M174.5,390.9h0M174.6,375.9h0M174.8,371.6h0M175.0,363.0h0M175.1,350.1h0M175.3,335.0h0M175.5,337.1h0M175.6,363.0h0M175.8,341.5h0M175.9,352.2h0M176.1,347.9h0M176.3,339.3h0M176.4,313.5h0M176.6,326.4h0M176.7,324.2h0M176.9,307.1h0M177.1,289.9h0M177.2,304.9h0M177.4,289.9h0M177.5,274.8h0M177.7,287.7h0M177.9,298.5h0M178.0,274.8h0M178.2,274.8h0M178.4,279.1h0M178.5,270.5h0M178.7,259.8h0M178.8,272.6h0M179.0,285.5h0M179.2,294.1h0M179.3,292.0h0M179.5,300.6h0M179.6,292.0h0M179.8,281.2h0M180.0,283.4h0M180.1,283.4h0M180.3,274.8h0M180.4,272.6h0M180.6,302.8h0M180.8,302.8h0M180.9,324.2h0M181.1,339.3h0M181.2,350.1h0M181.4,324.2h0M181.6,367.2h0M181.7,356.5h0M181.9,363.0h0M182.1,356.5h0M182.2,363.0h0M182.4,302.8h0M182.5,307.1h0M182.7,304.9h0M182.9,322.1h0M183.0,322.1h0M183.2,330.7h0M183.3,343.6h0M183.5,337.2h0M183.7,315.7h0M183.8,304.9h0M184.0,309.2h0M184.1,283.4h0M184.3,287.7h0M184.5,322.1h0M184.6,345.8h0M184.8,354.4h0M185.0,375.9h0M185.1,371.6h0M185.3,345.8h0M185.4,330.7h0M185.6,320.0h0M185.8,313.5h0M185.9,317.8h0M186.1,320.0h0M186.2,309.2h0M186.4,309.2h0M186.6,292.0h0M186.7,285.6h0M186.9,298.5h0M187.0,311.4h0M187.2,300.6h0M187.4,302.8h0M187.5,339.3h0M187.7,317.8h0M187.9,320.0h0M188.0,341.5h0M188.2,341.5h0M188.3,304.9h0M188.5,302.8h0M188.7,304.9h0M188.8,294.2h0M189.0,289.9h0M189.1,294.1h0M189.3,302.8h0M189.5,287.7h0M189.6,277.0h0M189.8,277.0h0M189.9,270.5h0M190.1,257.6h0M190.3,268.4h0M190.4,307.0h0M190.6,309.2h0M190.7,315.7h0M190.9,326.4h0M191.1,320.0h0M191.2,289.9h0M191.4,307.0h0M191.6,298.5h0M191.7,311.3h0M191.9,313.5h0M192.0,304.9h0M192.2,292.0h0M192.4,296.3h0M192.5,287.7h0M192.7,279.1h0M192.8,281.2h0M193.0,287.7h0M193.2,287.7h0M193.3,274.8h0M193.5,320.0h0M193.6,337.1h0M193.8,341.5h0M194.0,343.6h0M194.1,352.2h0M194.3,322.1h0M194.5,345.8h0M194.6,332.9h0M194.8,320.0h0M194.9,350.0h0M195.1,337.2h0M195.3,296.3h0M195.4,296.3h0M195.6,292.0h0M195.7,259.8h0M195.9,274.8h0M196.1,274.8h0M196.2,274.8h0M196.4,279.1h0M196.5,276.9h0M196.7,266.2h0M196.9,268.4h0M197.0,277.0h0M197.2,283.4h0M197.3,283.4h0M197.5,277.0h0M197.7,294.2h0M197.8,294.2h0M198.0,287.7h0M198.2,283.4h0M198.3,283.4h0M198.5,261.9h0M198.6,253.3h0M198.8,266.2h0M199.0,281.2h0M199.1,313.5h0M199.3,324.2h0M199.4,345.8h0M199.6,339.3h0M199.8,326.4h0M199.9,304.9h0M200.1,304.9h0M200.2,294.2h0M200.4,296.3h0M200.6,309.2h0M200.7,313.5h0M200.9,320.0h0M201.1,330.7h0M201.2,328.6h0M201.4,341.5h0M201.5,339.3h0M201.7,343.6h0M201.9,337.1h0M202.0,343.6h0M202.2,343.6h0M202.3,341.5h0M202.5,328.6h0M202.7,332.9h0M202.8,332.9h0M203.0,332.9h0M203.1,324.2h0M203.3,332.9h0M203.5,313.5h0M203.6,315.6h0M203.8,298.5h0M204.0,298.5h0M204.1,283.4h0M204.3,332.9h0M204.4,332.9h0M204.6,341.4h0M204.8,350.0h0M204.9,350.0h0M205.1,313.5h0M205.2,330.7h0M205.4,313.5h0M205.6,324.2h0M205.7,350.0h0M205.9,341.5h0M206.0,322.1h0M206.2,330.7h0M206.4,322.1h0M206.5,311.4h0M206.7,320.0h0M206.8,313.5h0M207.0,332.9h0M207.2,332.9h0M207.3,326.4h0M207.5,313.5h0M207.7,317.8h0M207.8,298.5h0M208.0,287.7h0M208.1,281.2h0M208.3,296.3h0M208.5,300.6h0M208.6,304.9h0M208.8,311.4h0M208.9,317.8h0M209.1,309.2h0M209.3,337.2h0M209.4,324.2h0M209.6,317.8h0M209.7,345.8h0M209.9,341.5h0M210.1,304.9h0M210.2,313.5h0M210.4,330.7h0M210.6,302.8h0M210.7,304.9h0M210.9,304.9h0M211.0,300.6h0M211.2,289.9h0M211.4,292.0h0M211.5,296.3h0M211.7,298.5h0M211.8,311.4h0M212.0,322.1h0M212.2,322.1h0M212.3,315.6h0M212.5,326.4h0M212.6,315.7h0M212.8,309.2h0M213.0,304.9h0M213.1,309.2h0M213.3,298.5h0M213.4,320.0h0M213.6,307.0h0M213.8,313.5h0M213.9,311.4h0M214.1,317.8h0M214.3,294.2h0M214.4,311.4h0M214.6,315.6h0M214.7,322.1h0M214.9,322.1h0M215.1,328.5h0M215.2,322.1h0M215.4,328.5h0M215.5,332.9h0M215.7,326.4h0M215.9,315.7h0M216.0,317.8h0M216.2,294.1h0M216.3,294.1h0M216.5,285.6h0M216.7,298.4h0M216.8,311.4h0M217.0,328.6h0M217.2,313.5h0M217.3,313.5h0M217.5,304.9h0M217.6,283.4h0M217.8,266.2h0M218.0,270.5h0M218.1,287.7h0M218.3,283.4h0M218.4,285.6h0M218.6,304.9h0M218.8,300.6h0M218.9,283.4h0M219.1,294.1h0M219.2,289.9h0M219.4,272.6h0M219.6,283.4h0M219.7,296.3h0M219.9,292.0h0M220.1,289.9h0M220.2,294.2h0M220.4,287.7h0M220.5,285.6h0M220.7,296.3h0M220.9,296.3h0M221.0,302.8h0M221.2,296.3h0M221.3,300.6h0M221.5,287.7h0M221.7,296.3h0M221.8,307.1h0M222.0,313.5h0M222.1,298.5h0M222.3,296.3h0M222.5,292.0h0M222.6,289.9h0M222.8,281.2h0M222.9,304.9h0M223.1,315.7h0M223.3,317.8h0M223.4,296.3h0M223.6,300.6h0M223.8,281.2h0M223.9,268.4h0M224.1,261.9h0M224.2,257.6h0M224.4,302.8h0M224.6,298.5h0M224.7,298.5h0M224.9,337.1h0M225.0,350.0h0M225.2,304.9h0M225.4,304.9h0M225.5,304.9h0M225.7,268.4h0M225.8,259.8h0M226.0,268.4h0M226.2,268.4h0M226.3,268.4h0M226.5,283.4h0M226.7,292.0h0M226.8,289.9h0M227.0,289.9h0M227.1,294.2h0M227.3,281.2h0M227.5,268.4h0M227.6,268.4h0M227.8,274.8h0M227.9,270.5h0M228.1,281.2h0M228.3,287.7h0M228.4,317.8h0M228.6,311.4h0M228.7,309.2h0M228.9,302.8h0M229.1,311.4h0M229.2,292.0h0M229.4,296.3h0M229.6,320.0h0M229.7,320.0h0M229.9,309.2h0M230.0,294.1h0M230.2,300.6h0M230.4,281.2h0M230.5,274.8h0M230.7,272.6h0M230.8,272.6h0M231.0,279.1h0M231.2,274.8h0M231.3,279.1h0M231.5,279.1h0M231.6,281.2h0M231.8,266.2h0M232.0,279.1h0M232.1,272.6h0M232.3,283.4h0M232.4,281.2h0M232.6,287.7h0M232.8,279.1h0M232.9,285.6h0M233.1,287.7h0M233.3,302.8h0M233.4,296.3h0M233.6,324.2h0M233.7,320.0h0M233.9,320.0h0M234.1,309.2h0M234.2,307.1h0M234.4,276.9h0M234.5,274.8h0M234.7,264.1h0M234.9,272.6h0M235.0,272.6h0M235.2,272.6h0M235.3,285.5h0M235.5,283.4h0M235.7,266.2h0M235.8,272.7h0M236.0,270.5h0M236.2,261.9h0M236.3,292.0h0M236.5,302.8h0M236.6,294.2h0M236.8,296.3h0M237.0,304.9h0M237.1,285.6h0M237.3,289.9h0M237.4,343.6h0M237.6,354.4h0M237.8,354.4h0M237.9,360.8h0M238.1,343.6h0M238.2,307.0h0M238.4,302.8h0M238.6,292.0h0M238.7,283.4h0M238.9,302.8h0M239.0,287.7h0M239.2,294.1h0M239.4,294.2h0M239.5,292.0h0M239.7,276.9h0M239.9,281.2h0M240.0,272.6h0M240.2,285.6h0M240.3,292.0h0M240.5,292.0h0M240.7,322.1h0M240.8,332.9h0M241.0,317.8h0M241.1,322.1h0M241.3,332.9h0M241.5,311.4h0M241.6,296.3h0M241.8,317.8h0M241.9,311.4h0M242.1,309.2h0M242.3,300.6h0M242.4,296.3h0M242.6,274.8h0M242.8,264.1h0M242.9,259.8h0M243.1,255.4h0M243.2,259.8h0M243.4,270.5h0M243.6,354.4h0M243.7,363.0h0M243.9,375.9h0M244.0,386.6h0M244.2,378.0h0M244.4,315.7h0M244.5,341.5h0M244.7,341.5h0M244.8,335.0h0M245.0,350.1h0M245.2,339.3h0M245.3,300.6h0M245.5,307.0h0M245.7,343.6h0M245.8,343.6h0M246.0,350.0h0M246.1,352.2h0M246.3,337.1h0M246.5,304.9h0M246.6,296.3h0M246.8,281.2h0M246.9,292.0h0M247.1,292.0h0M247.3,281.2h0M247.4,272.6h0M247.6,274.8h0M247.7,259.8h0M247.9,255.5h0M248.1,261.9h0M248.2,261.9h0M248.4,259.8h0M248.5,296.3h0M248.7,302.8h0M248.9,296.3h0M249.0,307.1h0M249.2,304.9h0M249.4,270.5h0M249.5,270.5h0M249.7,272.6h0M249.8,264.0h0M250.0,266.2h0M250.2,266.2h0M250.3,270.5h0M250.5,270.5h0M250.6,279.1h0M250.8,292.0h0M251.0,294.2h0M251.1,283.4h0M251.3,281.2h0M251.4,274.8h0M251.6,268.4h0M251.8,270.5h0M251.9,277.0h0M252.1,287.7h0M252.3,294.2h0M252.4,304.9h0M252.6,296.3h0M252.7,302.8h0M252.9,292.0h0M253.1,292.0h0M253.2,270.5h0M253.4,285.6h0M253.5,276.9h0M253.7,277.0h0M253.9,272.6h0M254.0,307.0h0M254.2,294.2h0M254.3,304.9h0M254.5,311.4h0M254.7,309.2h0M254.8,298.5h0M255.0,300.6h0M255.1,285.6h0M255.3,294.1h0M255.5,292.0h0M255.6,276.9h0M255.8,276.9h0M256.0,309.2h0M256.1,307.1h0M256.3,311.3h0M256.4,311.4h0M256.6,320.0h0M256.8,296.3h0M256.9,307.1h0M257.1,300.6h0M257.2,300.6h0M257.4,294.1h0M257.6,285.6h0M257.7,264.1h0M257.9,279.1h0M258.0,281.2h0M258.2,287.7h0M258.4,298.5h0M258.5,317.8h0M258.7,311.4h0M258.9,313.5h0M259.0,337.1h0M259.2,326.4h0M259.3,313.5h0M259.5,313.5h0M259.7,313.5h0M259.8,298.5h0M260.0,324.2h0M260.1,339.3h0M260.3,332.9h0M260.5,345.8h0M260.6,337.2h0M260.8,315.7h0M260.9,326.4h0M261.1,330.7h0M261.3,309.2h0M261.4,300.6h0M261.6,298.5h0M261.8,279.1h0M261.9,274.8h0M262.1,283.4h0M262.2,283.4h0M262.4,332.9h0M262.6,320.0h0M262.7,328.5h0M262.9,328.5h0M263.0,328.6h0M263.2,287.7h0M263.4,289.9h0M263.5,283.4h0M263.7,274.8h0M263.8,281.2h0M264.0,285.6h0M264.2,289.9h0M264.3,298.5h0M264.5,300.6h0M264.6,289.9h0M264.8,281.2h0M265.0,277.0h0M265.1,285.6h0M265.3,285.6h0M265.5,287.7h0M265.6,289.9h0M265.8,287.7h0M265.9,274.8h0M266.1,279.1h0M266.3,287.7h0M266.4,292.0h0M266.6,311.4h0M266.7,302.8h0M266.9,317.8h0M267.1,315.7h0M267.2,309.2h0M267.4,324.2h0M267.5,326.4h0M267.7,311.4h0M267.9,315.7h0M268.0,320.0h0M268.2,307.1h0M268.4,309.2h0M268.5,313.5h0M268.7,322.1h0M268.8,315.6h0M269.0,302.8h0M269.2,322.1h0M269.3,309.2h0M269.5,292.0h0M269.6,298.5h0M269.8,300.6h0M270.0,292.0h0M270.1,300.6h0M270.3,296.3h0M270.4,285.6h0M270.6,283.4h0M270.8,281.2h0M270.9,281.2h0M271.1,285.6h0M271.2,285.5h0M271.4,285.6h0M271.6,277.0h0M271.7,270.5h0M271.9,279.1h0M272.1,277.0h0M272.2,268.4h0M272.4,281.2h0M272.5,285.6h0M272.7,292.0h0M272.9,302.8h0M273.0,315.6h0M273.2,311.4h0M273.3,307.1h0M273.5,296.3h0M273.7,294.1h0M273.8,281.2h0M274.0,268.4h0M274.1,285.6h0M274.3,330.7h0M274.5,332.8h0M274.6,343.6h0M274.8,386.6h0M275.0,378.0h0M275.1,337.2h0M275.3,345.8h0M275.4,347.9h0M275.6,315.7h0M275.8,307.1h0M275.9,317.8h0M276.1,296.3h0M276.2,289.9h0M276.4,283.4h0M276.6,289.9h0M276.7,270.5h0M276.9,283.4h0M277.0,276.9h0M277.2,274.8h0M277.4,268.4h0M277.5,268.4h0M277.7,259.8h0M277.9,259.8h0M278.0,266.2h0M278.2,264.1h0M278.3,296.3h0M278.5,302.8h0M278.7,298.5h0M278.8,307.0h0M279.0,309.2h0M279.1,283.4h0M279.3,285.6h0M279.5,296.3h0M279.6,289.9h0M279.8,294.2h0M279.9,287.7h0M280.1,277.0h0M280.3,309.2h0M280.4,302.8h0M280.6,296.3h0M280.7,307.1h0M280.9,309.2h0M281.1,279.1h0M281.2,276.9h0M281.4,311.4h0M281.6,300.6h0M281.7,315.7h0M281.9,307.1h0M282.0,307.1h0M282.2,287.7h0M282.4,285.6h0M282.5,283.4h0M282.7,292.0h0M282.8,298.5h0M283.0,285.6h0M283.2,292.0h0M283.3,279.1h0M283.5,268.4h0M283.6,270.5h0M283.8,281.2h0M284.0,289.9h0M284.1,298.5h0M284.3,300.6h0M284.5,294.1h0M284.6,294.2h0M284.8,283.4h0M284.9,277.0h0M285.1,281.2h0M285.3,296.3h0M285.4,294.2h0M285.6,307.0h0M285.7,304.9h0M285.9,304.9h0M286.1,298.5h0M286.2,300.6h0M286.4,285.5h0M286.5,285.5h0M286.7,285.6h0M286.9,270.5h0M287.0,276.9h0M287.2,294.1h0M287.3,304.9h0M287.5,313.5h0M287.7,326.4h0M287.8,307.1h0M288.0,307.1h0M288.2,322.1h0M288.3,317.8h0M288.5,354.4h0M288.6,369.4h0M288.8,358.6h0M289.0,330.7h0M289.1,352.2h0M289.3,313.5h0M289.4,313.5h0M289.6,311.4h0M289.8,324.2h0M289.9,309.2h0M290.1,304.9h0M290.2,292.0h0M290.4,294.1h0M290.6,304.9h0M290.7,304.9h0M290.9,307.1h0M291.1,304.9h0M291.2,320.0h0M291.4,311.4h0M291.5,309.2h0M291.7,311.4h0M291.9,311.4h0M292.0,289.9h0M292.2,274.8h0M292.3,266.2h0M292.5,307.0h0M292.7,317.8h0M292.8,315.7h0M293.0,324.2h0M293.1,324.2h0M293.3,276.9h0M293.5,272.6h0M293.6,281.2h0M293.8,272.6h0M293.9,279.1h0M294.1,285.6h0M294.3,292.0h0M294.4,285.5h0M294.6,300.6h0M294.8,287.7h0M294.9,287.7h0M295.1,272.6h0M295.2,281.2h0M295.4,294.2h0M295.6,298.5h0M295.7,300.6h0M295.9,309.2h0M296.0,304.9h0M296.2,279.1h0M296.4,276.9h0M296.5,266.2h0M296.7,261.9h0M296.8,266.2h0M297.0,283.4h0M297.2,289.9h0M297.3,300.6h0M297.5,311.4h0M297.7,307.0h0M297.8,289.9h0M298.0,287.7h0M298.1,283.4h0M298.3,332.9h0M298.5,332.9h0M298.6,339.3h0M298.8,337.2h0M298.9,341.5h0M299.1,285.6h0M299.3,283.4h0M299.4,287.7h0M299.6,296.3h0M299.7,296.3h0M299.9,294.1h0M300.1,307.1h0M300.2,322.1h0M300.4,313.5h0M300.6,307.1h0M300.7,317.8h0M300.9,315.7h0M301.0,322.1h0M301.2,330.7h0M301.4,330.7h0M301.5,330.7h0M301.7,317.8h0M301.8,283.4h0M302.0,289.9h0M302.2,302.8h0M302.3,296.3h0M302.5,304.9h0M302.6,319.9h0M302.8,317.8h0M303.0,322.1h0M303.1,330.7h0M303.3,339.3h0M303.4,330.7h0M303.6,315.7h0M303.8,298.4h0M303.9,309.2h0M304.1,313.5h0M304.3,307.0h0M304.4,324.2h0M304.6,322.1h0M304.7,311.4h0M304.9,296.3h0M305.1,300.6h0M305.2,283.4h0M305.4,328.5h0M305.5,315.6h0M305.7,307.1h0M305.9,315.7h0M306.0,313.5h0M306.2,274.8h0M306.3,279.1h0M306.5,281.2h0M306.7,281.2h0M306.8,289.9h0M307.0,294.2h0M307.2,289.9h0M307.3,302.8h0M307.5,296.3h0M307.6,296.3h0M307.8,294.2h0M308.0,315.7h0M308.1,309.2h0M308.3,309.2h0M308.4,315.7h0M308.6,311.4h0M308.8,283.4h0M308.9,285.6h0M309.1,287.7h0M309.2,289.9h0M309.4,289.9h0M309.6,298.5h0M309.7,292.0h0M309.9,285.6h0M310.1,281.2h0M310.2,279.1h0M310.4,281.2h0M310.5,279.1h0M310.7,281.2h0M310.9,270.5h0M311.0,279.1h0M311.2,289.9h0M311.3,292.0h0M311.5,300.6h0M311.7,307.1h0M311.8,311.4h0M312.0,304.9h0M312.1,311.4h0M312.3,311.4h0M312.5,313.5h0M312.6,298.5h0M312.8,307.0h0M312.9,313.5h0M313.1,302.8h0M313.3,309.2h0M313.4,324.2h0M313.6,311.4h0M313.8,294.2h0M313.9,298.5h0M314.1,294.2h0M314.2,283.4h0M314.4,298.5h0M314.6,302.8h0M314.7,298.5h0M314.9,296.3h0M315.0,296.3h0M315.2,272.6h0M315.4,277.0h0M315.5,281.2h0M315.7,281.2h0M315.8,281.2h0M316.0,300.6h0M316.2,307.1h0M316.3,317.8h0M316.5,320.0h0M316.7,317.8h0M316.8,309.2h0M317.0,311.4h0M317.1,302.8h0M317.3,296.3h0M317.5,292.0h0M317.6,281.2h0M317.8,281.2h0M317.9,279.1h0M318.1,272.6h0M318.3,272.6h0M318.4,274.8h0M318.6,257.6h0M318.7,255.5h0M318.9,255.5h0M319.1,261.9h0M319.2,292.0h0M319.4,302.8h0M319.5,307.1h0M319.7,315.6h0M319.9,311.4h0M320.0,298.5h0M320.2,287.7h0M320.4,279.1h0M320.5,289.9h0M320.7,292.0h0M320.8,285.6h0M321.0,311.4h0M321.2,313.5h0M321.3,300.6h0M321.5,298.5h0M321.6,287.7h0M321.8,272.6h0M322.0,268.4h0M322.1,264.1h0M322.3,264.0h0M322.4,281.2h0M322.6,277.0h0M322.8,285.6h0M322.9,302.8h0M323.1,311.3h0M323.3,298.5h0M323.4,304.9h0M323.6,315.7h0M323.7,298.5h0M323.9,304.9h0M324.1,298.5h0M324.2,296.3h0M324.4,287.7h0M324.5,285.6h0M324.7,270.5h0M324.9,294.1h0M325.0,292.0h0M325.2,296.3h0M325.3,307.1h0M325.5,320.0h0M325.7,304.9h0M325.8,315.6h0M326.0,309.2h0M326.1,309.2h0M326.3,300.6h0M326.5,304.9h0M326.6,292.0h0M326.8,287.7h0M327.0,279.1h0M327.1,283.4h0M327.3,272.6h0M327.4,279.1h0M327.6,289.9h0M327.8,287.7h0M327.9,281.2h0M328.1,281.2h0M328.2,277.0h0M328.4,272.6h0M328.6,277.0h0M328.7,296.3h0M328.9,296.3h0M329.0,304.9h0M329.2,296.3h0M329.4,292.0h0M329.5,277.0h0M329.7,274.8h0M329.9,264.1h0M330.0,264.1h0M330.2,279.1h0M330.3,285.6h0M330.5,298.5h0M330.7,300.6h0M330.8,302.8h0M331.0,307.1h0M331.1,302.8h0M331.3,292.0h0M331.5,285.6h0M331.6,285.6h0M331.8,276.9h0M331.9,266.2h0M332.1,264.1h0M332.3,264.1h0M332.4,296.3h0M332.6,287.7h0M332.8,322.1h0M332.9,322.1h0M333.1,322.1h0M333.2,289.9h0M333.4,296.3h0M333.6,274.8h0M333.7,276.9h0M333.9,283.4h0M334.0,283.4h0M334.2,281.2h0M334.4,279.1h0M334.5,277.0h0M334.7,277.0h0M334.8,289.9h0M335.0,287.7h0M335.2,279.1h0M335.3,289.9h0M335.5,292.0h0M335.6,279.1h0M335.8,272.6h0M336.0,285.6h0M336.1,298.5h0M336.3,298.5h0M336.5,311.4h0M336.6,322.1h0M336.8,315.6h0M336.9,300.6h0M337.1,307.0h0M337.3,294.2h0M337.4,287.7h0M337.6,298.5h0M337.7,294.1h0M337.9,285.6h0M338.1,285.6h0M338.2,285.5h0M338.4,266.2h0M338.5,259.8h0M338.7,251.2h0M338.9,251.2h0M339.0,257.6h0M339.2,257.6h0M339.4,311.4h0M339.5,317.8h0M339.7,317.8h0M339.8,307.1h0M340.0,311.4h0M340.2,259.8h0M340.3,255.5h0M340.5,272.6h0M340.6,281.2h0M340.8,289.9h0M341.0,296.3h0M341.1,294.2h0M341.3,274.8h0M341.4,281.2h0M341.6,274.8h0M341.8,270.5h0M341.9,270.5h0M342.1,272.6h0M342.2,261.9h0M342.4,257.6h0M342.6,257.6h0M342.7,268.4h0M342.9,270.5h0M343.1,272.7h0M343.2,292.0h0M343.4,292.0h0M343.5,307.0h0M343.7,311.4h0M343.9,313.5h0M344.0,294.2h0M344.2,298.5h0M344.3,283.4h0M344.5,279.1h0M344.7,274.8h0M344.8,272.6h0M345.0,264.1h0M345.1,253.3h0M345.3,251.2h0M345.5,253.3h0M345.6,255.5h0M345.8,255.5h0M346.0,255.4h0M346.1,251.2h0M346.3,244.7h0M346.4,244.7h0M346.6,277.0h0M346.8,276.9h0M346.9,292.0h0M347.1,304.9h0M347.2,307.1h0M347.4,277.0h0M347.6,277.0h0M347.7,266.2h0M347.9,261.9h0M348.0,270.5h0M348.2,276.9h0M348.4,287.7h0M348.5,285.6h0M348.7,281.2h0M348.9,268.4h0M349.0,261.9h0M349.2,253.3h0M349.3,255.4h0M349.5,257.6h0M349.7,255.5h0M349.8,255.4h0M350.0,253.3h0M350.1,251.2h0M350.3,246.9h0M350.5,251.2h0M350.6,257.6h0M350.8,259.8h0M350.9,261.9h0M351.1,261.9h0M351.3,259.8h0M351.4,253.3h0M351.6,259.8h0M351.7,259.8h0M351.9,261.9h0M352.1,274.8h0M352.2,272.6h0M352.4,274.8h0M352.6,272.6h0M352.7,281.2h0M352.9,272.6h0M353.0,274.8h0M353.2,264.1h0M353.4,272.7h0M353.5,268.4h0M353.7,266.2h0M353.8,266.2h0M354.0,274.8h0M354.2,281.2h0M354.3,276.9h0M354.5,287.7h0M354.6,294.1h0M354.8,287.7h0M355.0,274.8h0M355.1,274.8h0M355.3,264.0h0M355.5,257.6h0M355.6,261.9h0M355.8,259.8h0M355.9,259.8h0M356.1,259.8h0M356.3,266.2h0M356.4,261.9h0M356.6,276.9h0M356.7,276.9h0M356.9,274.8h0M357.1,272.6h0M357.2,274.8h0M357.4,272.6h0M357.5,277.0h0M357.7,287.7h0M357.9,287.7h0M358.0,283.4h0M358.2,274.8h0M358.4,272.7h0M358.5,270.5h0M358.7,274.8h0M358.8,289.9h0M359.0,296.3h0M359.2,309.2h0M359.3,302.8h0M359.5,296.3h0M359.6,285.6h0M359.8,281.2h0M360.0,264.1h0M360.1,264.1h0M360.3,272.6h0M360.4,268.4h0M360.6,268.4h0M360.8,277.0h0M360.9,274.8h0M361.1,266.2h0M361.2,272.6h0M361.4,264.1h0M361.6,255.4h0M361.7,264.0h0M361.9,272.6h0M362.1,277.0h0M362.2,287.7h0M362.4,287.7h0M362.5,277.0h0M362.7,270.5h0M362.9,270.5h0M363.0,264.1h0M363.2,272.6h0M363.3,274.8h0M363.5,270.5h0M363.7,261.9h0M363.8,266.2h0M364.0,257.6h0M364.1,255.5h0M364.3,255.4h0M364.5,253.3h0M364.6,255.5h0M364.8,266.2h0M365.0,277.0h0M365.1,281.2h0M365.3,285.6h0M365.4,283.4h0M365.6,279.1h0M365.8,281.2h0M365.9,283.4h0M366.1,294.1h0M366.2,287.7h0M366.4,285.6h0M366.6,274.8h0M366.7,268.4h0M366.9,261.9h0M367.0,264.1h0M367.2,261.9h0M367.4,261.9h0M367.5,264.1h0M367.7,253.3h0M367.8,255.5h0M368.0,274.8h0M368.2,285.6h0M368.3,289.9h0M368.5,304.9h0M368.7,302.8h0M368.8,289.9h0M369.0,281.2h0M369.1,276.9h0M369.3,279.1h0M369.5,287.7h0M369.6,289.9h0M369.8,292.0h0M369.9,289.9h0M370.1,285.6h0M370.3,277.0h0M370.4,272.6h0M370.6,279.1h0M370.7,285.6h0M370.9,272.6h0M371.1,270.5h0M371.2,264.1h0M371.4,253.3h0M371.6,253.3h0M371.7,255.5h0M371.9,255.5h0M372.0,257.6h0M372.2,255.5h0M372.4,257.6h0M372.5,257.6h0M372.7,257.6h0M372.8,257.6h0M373.0,266.2h0M373.2,257.6h0M373.3,257.6h0M373.5,257.6h0M373.6,259.8h0M373.8,257.6h0M374.0,257.6h0M374.1,255.5h0M374.3,255.4h0M374.4,251.2h0M374.6,261.9h0M374.8,272.6h0M374.9,285.6h0M375.1,287.7h0M375.3,289.9h0M375.4,281.2h0M375.6,268.4h0M375.7,255.4h0M375.9,251.2h0M376.1,253.3h0M376.2,249.0h0M376.4,255.5h0M376.5,264.1h0M376.7,277.0h0M376.9,274.8h0M377.0,307.1h0M377.2,302.8h0M377.3,296.3h0M377.5,285.6h0M377.7,292.0h0M377.8,261.9h0M378.0,261.9h0M378.2,264.1h0M378.3,266.2h0M378.5,259.8h0M378.6,259.8h0M378.8,259.8h0M379.0,266.2h0M379.1,266.2h0M379.3,272.7h0M379.4,268.4h0M379.6,274.8h0M379.8,266.2h0M379.9,270.5h0M380.1,268.4h0M380.2,272.6h0M380.4,264.1h0M380.6,268.4h0M380.7,266.2h0M380.9,268.4h0M381.1,268.4h0M381.2,272.6h0M381.4,268.4h0M381.5,266.2h0M381.7,264.1h0M381.9,259.8h0M382.0,257.6h0M382.2,257.6h0M382.3,255.5h0M382.5,249.0h0M382.7,249.0h0M382.8,251.2h0M383.0,251.2h0M383.1,251.2h0M383.3,253.3h0M383.5,255.4h0M383.6,264.1h0M383.8,264.1h0M383.9,283.4h0M384.1,281.2h0M384.3,281.2h0M384.4,272.6h0M384.6,274.8h0M384.8,257.6h0M384.9,261.9h0M385.1,261.9h0M385.2,259.8h0M385.4,261.9h0M385.6,259.8h0M385.7,264.1h0M385.9,266.2h0M386.0,266.2h0M386.2,272.6h0M386.4,272.6h0M386.5,261.9h0M386.7,257.6h0M386.8,259.8h0M387.0,255.5h0M387.2,255.5h0M387.3,259.8h0M387.5,274.8h0M387.7,283.4h0M387.8,281.2h0M388.0,281.2h0M388.1,281.2h0M388.3,272.6h0M388.5,270.5h0M388.6,276.9h0M388.8,277.0h0M388.9,274.8h0M389.1,268.4h0M389.3,268.4h0M389.4,261.9h0M389.6,264.1h0M389.7,266.2h0M389.9,276.9h0M390.1,270.5h0M390.2,272.6h0M390.4,270.5h0M390.6,268.4h0M390.7,259.8h0M390.9,257.6h0M391.0,251.2h0M391.2,259.8h0M391.4,264.1h0M391.5,264.1h0M391.7,274.8h0M391.8,274.8h0M392.0,268.4h0M392.2,268.4h0M392.3,270.5h0M392.5,266.2h0M392.6,266.2h0M392.8,266.2h0M393.0,259.8h0M393.1,253.3h0M393.3,251.2h0M393.4,249.0h0M393.6,246.9h0M393.8,249.0h0M393.9,253.3h0M394.1,251.2h0M394.3,253.3h0M394.4,253.3h0M394.6,257.6h0M394.7,255.5h0M394.9,251.2h0M395.1,261.9h0M395.2,261.9h0M395.4,259.8h0M395.5,259.8h0M395.7,259.8h0M395.9,257.6h0M396.0,266.2h0M396.2,264.1h0M396.3,264.1h0M396.5,272.6h0M396.7,264.1h0M396.8,255.5h0M397.0,257.6h0M397.2,257.6h0M397.3,251.2h0M397.5,255.5h0M397.6,255.5h0M397.8,259.8h0M398.0,261.9h0M398.1,259.8h0M398.3,255.4h0M398.4,259.8h0M398.6,264.1h0M398.8,261.9h0M398.9,264.1h0M399.1,274.8h0M399.2,281.2h0M399.4,274.8h0M399.6,283.4h0M399.7,283.4h0M399.9,272.7h0M400.0,266.2h0M400.2,264.1h0M400.4,257.6h0M400.5,264.1h0M400.7,268.4h0M400.9,272.6h0M401.0,279.1h0M401.2,279.1h0M401.3,279.1h0M401.5,274.8h0M401.7,266.2h0M401.8,257.6h0M402.0,264.1h0M402.1,274.8h0M402.3,279.1h0M402.5,279.1h0M402.6,283.4h0M402.8,274.8h0M402.9,264.1h0M403.1,261.9h0M403.3,261.9h0M403.4,257.6h0M403.6,257.6h0M403.8,253.3h0M403.9,253.3h0M404.1,255.4h0M404.2,261.9h0M404.4,270.5h0M404.6,276.9h0M404.7,281.2h0M404.9,281.2h0M405.0,274.8h0M405.2,270.5h0M405.4,261.9h0M405.5,253.3h0M405.7,264.1h0M405.8,264.1h0M406.0,270.5h0M406.2,274.8h0M406.3,279.1h0M406.5,270.5h0M406.6,270.5h0M406.8,259.8h0M407.0,257.6h0M407.1,261.9h0M407.3,257.6h0M407.5,264.1h0M407.6,268.4h0M407.8,266.2h0M407.9,268.4h0M408.1,277.0h0M408.3,272.6h0M408.4,300.6h0M408.6,311.4h0M408.7,304.9h0M408.9,298.5h0M409.1,298.5h0M409.2,264.0h0M409.4,259.8h0M409.5,255.5h0M409.7,261.9h0M409.9,264.1h0M410.0,274.8h0M410.2,274.8h0M410.4,279.1h0M410.5,270.5h0M410.7,268.4h0M410.8,261.9h0M411.0,279.1h0M411.2,287.7h0M411.3,287.7h0M411.5,287.7h0M411.6,285.6h0M411.8,261.9h0M412.0,255.5h0M412.1,268.4h0M412.3,264.1h0M412.4,268.4h0M412.6,272.7h0M412.8,270.5h0M412.9,259.8h0M413.1,261.9h0M413.3,259.8h0M413.4,255.5h0M413.6,257.6h0M413.7,257.6h0M413.9,257.6h0M414.1,264.1h0M414.2,272.6h0M414.4,268.4h0M414.5,266.2h0M414.7,264.1h0M414.9,259.8h0M415.0,251.2h0M415.2,251.2h0M415.3,255.5h0M415.5,257.6h0M415.7,253.3h0M415.8,251.2h0M416.0,249.0h0M416.1,246.9h0M416.3,246.9h0M416.5,257.6h0M416.6,257.6h0M416.8,259.8h0M417.0,257.6h0M417.1,264.1h0M417.3,257.6h0M417.4,259.8h0M417.6,257.6h0M417.8,257.6h0M417.9,264.1h0M418.1,266.2h0M418.2,270.5h0M418.4,274.8h0M418.6,276.9h0M418.7,270.5h0M418.9,264.1h0M419.0,268.4h0M419.2,276.9h0M419.4,281.2h0M419.5,274.8h0M419.7,274.8h0M419.9,270.5h0M420.0,270.5h0M420.2,272.7h0M420.3,277.0h0M420.5,298.5h0M420.7,298.5h0M420.8,289.9h0M421.0,283.4h0M421.1,287.7h0M421.3,266.2h0M421.5,264.1h0M421.6,270.5h0M421.8,270.5h0M421.9,266.2h0M422.1,274.8h0M422.3,279.1h0M422.4,270.5h0M422.6,272.6h0M422.8,270.5h0M422.9,261.9h0M423.1,253.3h0M423.2,259.8h0M423.4,255.4h0M423.6,261.9h0M423.7,264.1h0M423.9,268.4h0M424.0,270.5h0M424.2,270.5h0M424.4,264.1h0M424.5,264.1h0M424.7,261.9h0M424.8,255.4h0M425.0,264.1h0M425.2,261.9h0M425.3,272.6h0M425.5,272.6h0M425.6,272.6h0M425.8,266.2h0M426.0,266.2h0M426.1,259.8h0M426.3,259.8h0M426.5,257.6h0M426.6,255.5h0M426.8,264.1h0M426.9,266.2h0M427.1,268.4h0M427.3,268.4h0M427.4,272.6h0M427.6,261.9h0M427.7,261.9h0M427.9,257.6h0M428.1,255.4h0M428.2,251.2h0M428.4,255.4h0M428.5,244.7h0M428.7,246.9h0M428.9,253.3h0M429.0,259.8h0M429.2,255.5h0M429.4,266.2h0M429.5,268.4h0M429.7,268.4h0M429.8,261.9h0M430.0,264.1h0M430.2,268.4h0M430.3,268.4h0M430.5,264.1h0M430.6,266.2h0M430.8,281.2h0M431.0,268.4h0M431.1,270.5h0M431.3,281.2h0M431.4,285.6h0M431.6,272.6h0M431.8,272.6h0M431.9,270.5h0M432.1,259.8h0M432.2,253.3h0M432.4,253.3h0M432.6,253.3h0M432.7,251.2h0M432.9,253.3h0M433.1,261.9h0M433.2,257.6h0M433.4,257.6h0M433.5,257.6h0M433.7,257.6h0M433.9,251.2h0M434.0,255.4h0M434.2,253.3h0M434.3,261.9h0M434.5,261.9h0M434.7,261.9h0M434.8,268.4h0M435.0,277.0h0M435.1,270.5h0M435.3,274.8h0M435.5,272.6h0M435.6,266.2h0M435.8,259.8h0M436.0,259.8h0M436.1,261.9h0M436.3,268.4h0M436.4,285.5h0M436.6,285.6h0M436.8,285.6h0M436.9,283.4h0M437.1,279.1h0M437.2,259.8h0M437.4,268.4h0M437.6,268.4h0M437.7,264.0h0M437.9,266.2h0M438.0,272.6h0M438.2,261.9h0M438.4,264.1h0M438.5,264.1h0M438.7,259.8h0M438.9,264.1h0M439.0,266.2h0M439.2,264.1h0M439.3,270.5h0M439.5,270.5h0M439.7,264.1h0M439.8,266.2h0M440.0,261.9h0M440.1,255.4h0M440.3,253.3h0M440.5,261.9h0M440.6,264.1h0M440.8,266.2h0M440.9,268.4h0M441.1,281.2h0M441.3,277.0h0M441.4,272.6h0M441.6,272.7h0M441.7,272.6h0M441.9,268.4h0M442.1,261.9h0M442.2,264.1h0M442.4,266.2h0M442.6,261.9h0M442.7,259.8h0M442.9,259.8h0M443.0,261.9h0M443.2,266.2h0M443.4,266.2h0M443.5,261.9h0M443.7,259.8h0M443.8,257.6h0M444.0,255.5h0M444.2,261.9h0M444.3,270.5h0M444.5,279.1h0M444.6,279.1h0M444.8,274.8h0M445.0,274.8h0M445.1,266.2h0M445.3,264.1h0M445.5,266.2h0M445.6,266.2h0M445.8,268.4h0M445.9,268.4h0M446.1,261.9h0M446.3,261.9h0M446.4,264.1h0M446.6,264.1h0M446.7,268.4h0M446.9,268.4h0M447.1,270.5h0M447.2,268.4h0M447.4,257.6h0M447.5,253.3h0M447.7,253.3h0M447.9,249.0h0M448.0,251.2h0M448.2,257.6h0M448.3,257.6h0M448.5,264.1h0M448.7,261.9h0M448.8,259.8h0M449.0,259.8h0M449.2,261.9h0M449.3,261.9h0M449.5,261.9h0M449.6,261.9h0M449.8,264.1h0M450.0,268.4h0M450.1,261.9h0M450.3,261.9h0M450.4,289.9h0M450.6,281.2h0M450.8,274.8h0M450.9,279.1h0M451.1,294.2h0M451.2,266.2h0M451.4,268.4h0M451.6,268.4h0M451.7,268.4h0M451.9,253.3h0M452.1,261.9h0M452.2,261.9h0M452.4,266.2h0M452.5,272.6h0M452.7,277.0h0M452.9,274.8h0M453.0,279.1h0M453.2,285.6h0M453.3,274.8h0M453.5,272.6h0M453.7,272.6h0M453.8,270.5h0M454.0,266.2h0M454.1,268.4h0M454.3,266.2h0M454.5,261.9h0M454.6,261.9h0M454.8,253.3h0M454.9,251.2h0M455.1,253.3h0M455.3,255.5h0M455.4,255.5h0M455.6,261.9h0M455.8,264.1h0M455.9,264.1h0M456.1,259.8h0M456.2,261.9h0M456.4,264.1h0M456.6,272.6h0M456.7,270.5h0M456.9,277.0h0M457.0,274.8h0M457.2,274.8h0M457.4,261.9h0M457.5,266.2h0M457.7,261.9h0M457.8,264.1h0M458.0,259.8h0M458.2,259.8h0M458.3,276.9h0M458.5,276.9h0M458.7,272.6h0M458.8,270.5h0M459.0,272.6h0M459.1,253.3h0M459.3,253.3h0M459.5,251.2h0M459.6,251.2h0M459.8,257.6h0M459.9,257.6h0M460.1,264.1h0M460.3,268.4h0M460.4,268.4h0M460.6,266.2h0M460.7,264.1h0M460.9,255.5h0M461.1,255.5h0M461.2,257.6h0M461.4,253.3h0M461.6,261.9h0M461.7,261.9h0M461.9,259.8h0M462.0,261.9h0M462.2,261.9h0M462.4,253.3h0M462.5,255.5h0M462.7,255.5h0M462.8,259.8h0M463.0,259.8h0M463.2,264.1h0M463.3,261.9h0M463.5,264.1h0M463.6,264.1h0M463.8,268.4h0M464.0,268.4h0M464.1,270.5h0M464.3,268.4h0M464.4,259.8h0M464.6,259.8h0M464.8,255.5h0M464.9,255.5h0M465.1,255.5h0M465.3,259.8h0M465.4,255.5h0M465.6,255.5h0M465.7,253.3h0M465.9,255.5h0M466.1,257.6h0M466.2,281.2h0M466.4,287.7h0M466.5,289.9h0M466.7,287.7h0M466.9,287.7h0M467.0,268.4h0M467.2,264.1h0M467.3,261.9h0M467.5,261.9h0M467.7,255.5h0M467.8,249.0h0M468.0,246.9h0M468.2,246.9h0M468.3,249.0h0M468.5,253.3h0M468.6,257.6h0M468.8,259.8h0M469.0,264.1h0M469.1,264.1h0M469.3,257.6h0M469.4,259.8h0M469.6,261.9h0M469.8,264.1h0M469.9,268.4h0M470.1,274.8h0M470.2,274.8h0M470.4,268.4h0M470.6,268.4h0M470.7,264.1h0M470.9,261.9h0M471.1,259.8h0M471.2,261.9h0M471.4,255.5h0M471.5,259.8h0M471.7,287.7h0M471.9,289.9h0M472.0,289.9h0M472.2,292.0h0M472.3,292.0h0M472.5,259.8h0M472.7,261.9h0M472.8,264.1h0M473.0,264.0h0M473.1,257.6h0M473.3,268.4h0M473.5,272.6h0M473.6,274.8h0M473.8,281.2h0M473.9,287.7h0M474.1,287.7h0M474.3,281.2h0M474.4,277.0h0M474.6,274.8h0M474.8,268.4h0M474.9,266.2h0M475.1,261.9h0M475.2,264.1h0M475.4,264.1h0M475.6,261.9h0M475.7,259.8h0M475.9,257.6h0M476.0,257.6h0M476.2,251.2h0M476.4,251.2h0M476.5,249.0h0M476.7,251.2h0M476.8,249.0h0M477.0,255.5h0M477.2,257.6h0M477.3,259.8h0M477.5,261.9h0M477.7,261.9h0M477.8,253.3h0M478.0,261.9h0M478.1,257.6h0M478.3,261.9h0M478.5,264.1h0M478.6,268.4h0M478.8,257.6h0M478.9,259.8h0M479.1,251.2h0M479.3,255.5h0M479.4,261.9h0M479.6,264.1h0M479.7,264.1h0M479.9,266.2h0M480.1,266.2h0M480.2,302.8h0M480.4,302.8h0M480.5,300.6h0M480.7,304.9h0M480.9,302.8h0M481.0,259.8h0M481.2,274.8h0M481.4,274.8h0M481.5,270.5h0M481.7,272.6h0M481.8,268.4h0M482.0,264.1h0M482.2,268.4h0M482.3,268.4h0M482.5,268.4h0M482.6,274.8h0M482.8,261.9h0M483.0,259.8h0M483.1,259.8h0M483.3,253.3h0M483.4,249.0h0M483.6,253.3h0M483.8,249.0h0M483.9,249.0h0M484.1,249.0h0M484.3,255.5h0M484.4,259.8h0M484.6,266.2h0M484.7,272.6h0M484.9,281.2h0M485.1,281.2h0M485.2,276.9h0M485.4,270.5h0M485.5,272.6h0M485.7,268.4h0M485.9,261.9h0M486.0,266.2h0M486.2,274.8h0M486.3,272.6h0M486.5,270.5h0M486.7,274.8h0M486.8,270.5h0M487.0,261.9h0M487.1,255.4h0M487.3,261.9h0M487.5,257.6h0M487.6,261.9h0M487.8,261.9h0M488.0,264.1h0M488.1,255.5h0M488.3,257.6h0M488.4,251.2h0M488.6,255.4h0M488.8,259.8h0M488.9,264.1h0M489.1,261.9h0M489.2,266.2h0M489.4,268.4h0M489.6,264.1h0M489.7,261.9h0M489.9,259.8h0M490.0,255.4h0M490.2,253.3h0M490.4,251.2h0M490.5,255.5h0M490.7,264.1h0M490.9,264.1h0M491.0,266.2h0M491.2,266.2h0M491.3,270.5h0M491.5,266.2h0M491.7,272.6h0M491.8,268.4h0M492.0,270.5h0M492.1,261.9h0M492.3,259.8h0M492.5,251.2h0M492.6,251.2h0M492.8,253.3h0M492.9,251.2h0M493.1,261.9h0M493.3,266.2h0M493.4,270.5h0M493.6,264.1h0M493.8,266.2h0M493.9,257.6h0M494.1,255.4h0M494.2,261.9h0M494.4,264.1h0M494.6,264.1h0M494.7,261.9h0M494.9,266.2h0M495.0,259.8h0M495.2,259.8h0M495.4,257.6h0M495.5,255.5h0M495.7,251.2h0M495.8,251.2h0M496.0,255.5h0M496.2,259.8h0M496.3,261.9h0M496.5,264.1h0M496.6,261.9h0M496.8,264.1h0M497.0,257.6h0M497.1,257.6h0M497.3,257.6h0M497.5,255.5h0M497.6,255.5h0M497.8,255.5h0M497.9,261.9h0M498.1,259.8h0M498.3,285.6h0M498.4,281.2h0M498.6,285.6h0M498.7,283.4h0M498.9,285.6h0M499.1,268.4h0M499.2,276.9h0M499.4,283.4h0M499.5,279.1h0M499.7,279.1h0M499.9,268.4h0M500.0,257.6h0M500.2,249.0h0M500.4,249.0h0M500.5,253.3h0M500.7,255.5h0M500.8,255.5h0M501.0,255.5h0M501.2,253.3h0M501.3,253.3h0M501.5,255.4h0M501.6,257.6h0M501.8,259.8h0M502.0,270.5h0M502.1,264.1h0M502.3,264.1h0M502.4,264.1h0M502.6,270.5h0M502.8,268.4h0M502.9,272.6h0M503.1,270.5h0M503.2,272.6h0M503.4,270.5h0M503.6,264.1h0M503.7,261.9h0M503.9,266.2h0M504.1,264.1h0M504.2,259.8h0M504.4,261.9h0M504.5,261.9h0M504.7,259.8h0M504.9,255.5h0M505.0,253.3h0M505.2,251.2h0M505.3,251.2h0M505.5,246.9h0M505.7,251.2h0M505.8,257.6h0M506.0,261.9h0M506.1,257.6h0M506.3,268.4h0M506.5,266.2h0M506.6,264.1h0M506.8,257.6h0M507.0,259.8h0M507.1,253.3h0M507.3,251.2h0M507.4,255.5h0M507.6,257.6h0M507.8,266.2h0M507.9,268.4h0M508.1,272.6h0M508.2,266.2h0M508.4,272.6h0M508.6,264.1h0M508.7,270.5h0M508.9,272.6h0M509.0,268.4h0M509.2,261.9h0M509.4,270.5h0M509.5,257.6h0M509.7,264.1h0M509.9,272.6h0M510.0,277.0h0M510.2,277.0h0M510.3,281.2h0M510.5,274.8h0M510.7,270.5h0M510.8,268.4h0M511.0,266.2h0M511.1,266.2h0M511.3,261.9h0M511.5,259.8h0M511.6,259.8h0M511.8,255.4h0M511.9,261.9h0M512.1,268.4h0M512.3,292.0h0M512.4,294.2h0M512.6,292.0h0M512.7,283.4h0M512.9,281.2h0M513.1,257.6h0M513.2,255.5h0M513.4,257.6h0M513.6,259.8h0M513.7,257.6h0M513.9,259.8h0M514.0,257.6h0M514.2,253.3h0M514.4,259.8h0M514.5,264.1h0M514.7,264.1h0M514.8,266.2h0M515.0,268.4h0M515.2,261.9h0M515.3,257.6h0M515.5,257.6h0M515.6,255.4h0M515.8,253.3h0M516.0,255.5h0M516.1,257.6h0M516.3,255.5h0M516.5,264.1h0M516.6,276.9h0M516.8,272.7h0M516.9,279.1h0M517.1,279.1h0M517.3,270.5h0M517.4,259.8h0M517.6,261.9h0M517.7,253.3h0M517.9,255.4h0M518.1,255.4h0M518.2,264.1h0M518.4,261.9h0M518.5,259.8h0M518.7,261.9h0M518.9,261.9h0M519.0,257.6h0M519.2,261.9h0M519.4,266.2h0M519.5,261.9h0M519.7,264.1h0M519.8,259.8h0M520.0,255.5h0M520.2,268.4h0M520.3,274.8h0M520.5,274.8h0M520.6,279.1h0M520.8,279.1h0M521.0,261.9h0M521.1,253.3h0M521.3,255.5h0M521.4,249.0h0M521.6,251.2h0M521.8,257.6h0M521.9,259.8h0M522.1,259.8h0M522.2,270.5h0M522.4,268.4h0M522.6,261.9h0M522.7,264.1h0M522.9,261.9h0M523.1,255.4h0M523.2,266.2h0M523.4,274.8h0M523.5,279.1h0M523.7,276.9h0M523.9,279.1h0M524.0,270.5h0M524.2,270.5h0M524.3,266.2h0M524.5,264.1h0M524.7,266.2h0M524.8,264.1h0M525.0,261.9h0M525.1,261.9h0M525.3,270.5h0M525.5,270.5h0M525.6,276.9h0M525.8,281.2h0M526.0,281.2h0M526.1,274.8h0M526.3,270.5h0M526.4,264.1h0M526.6,253.3h0M526.8,253.3h0M526.9,255.4h0M527.1,253.3h0M527.2,253.3h0M527.4,253.3h0M527.6,251.2h0M527.7,251.2h0M527.9,251.2h0M528.0,251.2h0M528.2,251.2h0M528.4,255.5h0M528.5,253.3h0M528.7,253.3h0M528.8,257.6h0M529.0,259.8h0M529.2,259.8h0M529.3,259.8h0M529.5,259.8h0M529.7,257.6h0M529.8,253.3h0M530.0,253.3h0M530.1,253.3h0M530.3,261.9h0M530.5,261.9h0M530.6,268.4h0M530.8,264.1h0M530.9,270.5h0M531.1,264.1h0M531.3,264.1h0M531.4,259.8h0M531.6,259.8h0M531.7,259.8h0M531.9,266.2h0M532.1,266.2h0M532.2,277.0h0M532.4,281.2h0M532.6,283.4h0M532.7,276.9h0M532.9,285.6h0M533.0,276.9h0M533.2,279.1h0M533.4,272.6h0M533.5,272.6h0M533.7,261.9h0M533.8,264.1h0M534.0,257.6h0M534.2,261.9h0M534.3,266.2h0M534.5,266.2h0M534.6,266.2h0M534.8,264.1h0M535.0,257.6h0M535.1,251.2h0M535.3,253.3h0M535.5,251.2h0M535.6,255.4h0M535.8,259.8h0M535.9,257.6h0M536.1,257.6h0M536.3,255.5h0M536.4,255.4h0M536.6,253.3h0M536.7,255.4h0M536.9,251.2h0M537.1,251.2h0M537.2,251.2h0M537.4,251.2h0M537.5,253.3h0M537.7,259.8h0M537.9,261.9h0M538.0,266.2h0M538.2,266.2h0M538.3,266.2h0M538.5,264.0h0M538.7,266.2h0M538.8,266.2h0M539.0,272.6h0M539.2,268.4h0M539.3,272.6h0M539.5,268.4h0M539.6,268.4h0M539.8,257.6h0M540.0,264.1h0M540.1,259.8h0M540.3,261.9h0M540.4,255.4h0M540.6,257.6h0M540.8,253.3h0M540.9,251.2h0M541.1,251.2h0M541.2,251.2h0M541.4,249.0h0M541.6,249.0h0M541.7,249.0h0M541.9,246.9h0M542.1,246.9h0M542.2,255.5h0M542.4,257.6h0M542.5,259.8h0M542.7,259.8h0M542.9,261.9h0M543.0,259.8h0M543.2,264.1h0M543.3,264.1h0M543.5,266.2h0M543.7,270.5h0M543.8,266.2h0M544.0,266.2h0M544.1,268.4h0M544.3,274.8h0M544.5,268.4h0M544.6,268.4h0M544.8,261.9h0M544.9,261.9h0M545.1,253.3h0M545.3,257.6h0M545.4,257.6h0M545.6,261.9h0M545.8,259.8h0M545.9,259.8h0M546.1,255.5h0M546.2,255.5h0M546.4,251.2h0M546.6,249.0h0M546.7,249.0h0M546.9,255.5h0M547.0,257.6h0M547.2,259.8h0M547.4,264.1h0M547.5,264.1h0M547.7,264.1h0M547.8,261.9h0M548.0,259.8h0M548.2,253.3h0M548.3,253.3h0M548.5,244.7h0M548.7,251.2h0M548.8,257.6h0M549.0,257.6h0M549.1,261.9h0M549.3,272.6h0M549.5,268.4h0M549.6,268.4h0M549.8,272.6h0M549.9,268.4h0M550.1,266.2h0M550.3,270.5h0M550.4,261.9h0M550.6,261.9h0M550.7,261.9h0M550.9,264.1h0M551.1,257.6h0M551.2,266.2h0M551.4,264.1h0M551.5,272.7h0M551.7,270.5h0M551.9,277.0h0M552.0,268.4h0M552.2,270.5h0M552.4,261.9h0M552.5,255.5h0M552.7,249.0h0M552.8,251.2h0M553.0,255.5h0M553.2,257.6h0M553.3,257.6h0M553.5,259.8h0M553.6,257.6h0M553.8,251.2h0M554.0,253.3h0M554.1,257.6h0M554.3,261.9h0M554.4,277.0h0M554.6,283.4h0M554.8,285.6h0M554.9,283.4h0M555.1,285.5h0M555.3,272.6h0M555.4,272.6h0M555.6,285.6h0M555.7,292.0h0M555.9,281.2h0M556.1,287.7h0M556.2,283.4h0M556.4,268.4h0M556.5,261.9h0M556.7,270.5h0M556.9,272.6h0M557.0,274.8h0M557.2,279.1h0M557.3,276.9h0M557.5,279.1h0M557.7,281.2h0M557.8,283.4h0M558.0,279.1h0M558.2,281.2h0M558.3,274.8h0M558.5,268.4h0M558.6,264.1h0M558.8,268.4h0M559.0,264.0h0M559.1,264.1h0M559.3,268.4h0M559.4,268.4h0M559.6,259.8h0M559.8,266.2h0M559.9,270.5h0M560.1,264.1h0M560.2,261.9h0M560.4,272.6h0M560.6,277.0h0M560.7,277.0h0M560.9,283.4h0M561.0,283.4h0M561.2,281.2h0M561.4,274.8h0M561.5,270.5h0M561.7,264.1h0M561.9,270.5h0M562.0,268.4h0M562.2,268.4h0M562.3,266.2h0M562.5,274.8h0M562.7,272.6h0M562.8,268.4h0M563.0,272.6h0M563.1,279.1h0M563.3,272.6h0M563.5,268.4h0M563.6,272.6h0M563.8,268.4h0M563.9,272.6h0M564.1,272.6h0M564.3,285.6h0M564.4,289.9h0M564.6,287.7h0M564.8,277.0h0M564.9,277.0h0M565.1,261.9h0M565.2,255.5h0M565.4,261.9h0M565.6,264.1h0M565.7,266.2h0M565.9,268.4h0M566.0,268.4h0M566.2,268.4h0M566.4,264.1h0M566.5,261.9h0M566.7,261.9h0M566.8,259.8h0M567.0,257.6h0M567.2,264.1h0M567.3,261.9h0M567.5,268.4h0M567.6,264.1h0M567.8,264.1h0M568.0,261.9h0M568.1,264.1h0M568.3,255.5h0M568.5,257.6h0M568.6,255.4h0M568.8,253.3h0M568.9,255.5h0M569.1,261.9h0M569.3,268.4h0M569.4,266.2h0M569.6,268.4h0M569.7,268.4h0M569.9,264.1h0M570.1,261.9h0M570.2,261.9h0M570.4,264.1h0M570.5,264.1h0M570.7,268.4h0M570.9,261.9h0M571.0,268.4h0M571.2,266.2h0M571.4,259.8h0M571.5,257.6h0M571.7,266.2h0M571.8,268.4h0M572.0,270.5h0M572.2,270.5h0M572.3,270.5h0M572.5,266.2h0M572.6,266.2h0M572.8,268.4h0M573.0,270.5h0M573.1,270.5h0M573.3,268.4h0M573.4,264.1h0M573.6,257.6h0M573.8,259.8h0M573.9,259.8h0M574.1,257.6h0M574.3,255.4h0M574.4,259.8h0M574.6,257.6h0M574.7,257.6h0M574.9,270.5h0M575.1,281.2h0M575.2,279.1h0M575.4,276.9h0M575.5,276.9h0M575.7,268.4h0M575.9,259.8h0M576.0,261.9h0M576.2,270.5h0M576.3,274.8h0M576.5,277.0h0M576.7,274.8h0M576.8,272.6h0M577.0,270.5h0M577.1,272.6h0M577.3,276.9h0M577.5,279.1h0M577.6,279.1h0M577.8,277.0h0M578.0,270.5h0M578.1,270.5h0M578.3,264.0h0M578.4,266.2h0M578.6,266.2h0M578.8,264.1h0M578.9,255.5h0M579.1,257.6h0M579.2,255.5h0M579.4,255.5h0M579.6,266.2h0M579.7,268.4h0M579.9,268.4h0M580.0,270.5h0M580.2,270.5h0M580.4,259.8h0M580.5,259.8h0M580.7,261.9h0M580.9,259.8h0M581.0,296.3h0M581.2,294.1h0M581.3,292.0h0M581.5,289.9h0M581.7,289.9h0M581.8,249.0h0M582.0,251.2h0M582.1,251.2h0M582.3,249.0h0M582.5,249.0h0M582.6,249.0h0M582.8,251.2h0M582.9,251.2h0M583.1,259.8h0M583.3,257.6h0M583.4,268.4h0M583.6,279.1h0M583.8,279.1h0M583.9,274.8h0M584.1,276.9h0M584.2,268.4h0M584.4,259.8h0M584.6,257.6h0M584.7,255.4h0M584.9,261.9h0M585.0,259.8h0M585.2,264.1h0M585.4,266.2h0M585.5,264.1h0M585.7,259.8h0M585.8,259.8h0M586.0,255.5h0M586.2,259.8h0M586.3,270.5h0M586.5,272.7h0M586.6,272.6h0M586.8,266.2h0M587.0,264.1h0M587.1,257.6h0M587.3,253.3h0M587.5,261.9h0M587.6,268.4h0M587.8,270.5h0M587.9,277.0h0M588.1,281.2h0M588.3,279.1h0M588.4,274.8h0M588.6,268.4h0M588.7,261.9h0M588.9,266.2h0M589.1,259.8h0M589.2,259.8h0M589.4,287.7h0M589.5,285.6h0M589.7,283.4h0M589.9,283.4h0M590.0,287.7h0M590.2,270.5h0M590.4,274.8h0M590.5,272.7h0M590.7,272.6h0M590.8,268.4h0M591.0,259.8h0M591.2,253.3h0M591.3,251.2h0M591.5,251.2h0M591.6,253.3h0M591.8,253.3h0M592.0,257.6h0M592.1,253.3h0M592.3,255.4h0M592.4,253.3h0M592.6,253.3h0M592.8,251.2h0M592.9,251.2h0M593.1,253.3h0M593.2,257.6h0M593.4,255.5h0M593.6,261.9h0M593.7,266.2h0M593.9,259.8h0M594.1,255.4h0M594.2,264.1h0M594.4,257.6h0M594.5,257.6h0M594.7,261.9h0M594.9,272.6h0M595.0,268.4h0M595.2,268.4h0M595.3,296.3h0M595.5,296.3h0M595.7,283.4h0M595.8,285.6h0M596.0,292.0h0M596.1,264.1h0M596.3,264.1h0M596.5,268.4h0M596.6,264.1h0M596.8,266.2h0M597.0,264.1h0M597.1,264.0h0M597.3,264.1h0M597.4,268.4h0M597.6,259.8h0M597.8,257.6h0M597.9,259.8h0M598.1,255.5h0M598.2,251.2h0M598.4,253.3h0M598.6,251.2h0M598.7,246.9h0M598.9,255.5h0M599.0,261.9h0M599.2,266.2h0M599.4,266.2h0M599.5,268.4h0M599.7,261.9h0M599.9,257.6h0M600.0,253.3h0M600.2,257.6h0M600.3,255.4h0M600.5,261.9h0M600.7,261.9h0M600.8,264.1h0M601.0,264.1h0M601.1,264.1h0M601.3,259.8h0M601.5,261.9h0M601.6,259.8h0M601.8,268.4h0M601.9,279.1h0M602.1,277.0h0M602.3,272.6h0M602.4,270.5h0M602.6,261.9h0M602.7,257.6h0M602.9,257.6h0M603.1,261.9h0M603.2,259.8h0M603.4,261.9h0M603.6,255.5h0M603.7,261.9h0M603.9,257.6h0M604.0,264.1h0M604.2,261.9h0M604.4,261.9h0M604.5,253.3h0M604.7,253.3h0M604.8,251.2h0M605.0,253.3h0M605.2,257.6h0M605.3,259.8h0M605.5,261.9h0M605.6,257.6h0M605.8,253.3h0M606.0,266.2h0M606.1,268.4h0M606.3,272.6h0M606.5,279.1h0M606.6,279.1h0M606.8,264.1h0M606.9,274.8h0M607.1,274.8h0M607.3,272.6h0M607.4,274.8h0M607.6,274.8h0M607.7,261.9h0M607.9,257.6h0M608.1,261.9h0M608.2,259.8h0M608.4,257.6h0M608.5,257.6h0M608.7,259.8h0M608.9,253.3h0M609.0,255.5h0M609.2,261.9h0M609.3,261.9h0M609.5,268.4h0M609.7,270.5h0M609.8,268.4h0M610.0,264.1h0M610.2,264.1h0M610.3,255.4h0M610.5,255.4h0M610.6,255.4h0M610.8,257.6h0M611.0,261.9h0M611.1,264.1h0M611.3,266.2h0M611.4,270.5h0M611.6,270.5h0M611.8,266.2h0M611.9,266.2h0M612.1,261.9h0M612.2,257.6h0M612.4,257.6h0M612.6,257.6h0M612.7,257.6h0M612.9,264.1h0M613.1,261.9h0M613.2,259.8h0M613.4,266.2h0M613.5,264.1h0M613.7,259.8h0M613.9,264.0h0M614.0,264.0h0M614.2,259.8h0M614.3,266.2h0M614.5,270.5h0M614.7,268.4h0M614.8,266.2h0M615.0,261.9h0M615.1,251.2h0M615.3,244.7h0M615.5,253.3h0M615.6,253.3h0M615.8,257.6h0M616.0,259.8h0M616.1,264.1h0M616.3,255.5h0M616.4,255.5h0M616.6,253.3h0M616.8,253.3h0M616.9,246.9h0M617.1,246.9h0M617.2,246.9h0M617.4,244.7h0M617.6,249.0h0M617.7,251.2h0M617.9,249.0h0M618.0,255.5h0M618.2,259.8h0M618.4,261.9h0M618.5,264.1h0M618.7,266.2h0M618.8,268.4h0M619.0,268.4h0M619.2,266.2h0M619.3,266.2h0M619.5,266.2h0M619.7,257.6h0M619.8,255.5h0M620.0,251.2h0M620.1,251.2h0M620.3,251.2h0M620.5,255.5h0M620.6,255.5h0M620.8,266.2h0M620.9,264.1h0M621.1,266.2h0M621.3,268.4h0M621.4,272.6h0M621.6,268.4h0M621.7,270.5h0M621.9,268.4h0M622.1,264.1h0M622.2,261.9h0M622.4,253.3h0M622.6,251.2h0M622.7,257.6h0M622.9,261.9h0M623.0,264.1h0M623.2,266.2h0M623.4,270.5h0M623.5,264.1h0M623.7,257.6h0M623.8,253.3h0M624.0,253.3h0M624.2,246.9h0M624.3,255.5h0M624.5,261.9h0M624.6,261.9h0M624.8,264.1h0M625.0,274.8h0M625.1,266.2h0M625.3,261.9h0M625.4,261.9h0M625.6,259.8h0M625.8,251.2h0M625.9,257.6h0M626.1,255.5h0M626.3,253.3h0M626.4,259.8h0M626.6,285.6h0M626.7,281.2h0M626.9,285.6h0M627.1,287.7h0M627.2,287.7h0M627.4,261.9h0M627.5,259.8h0M627.7,253.3h0M627.9,259.8h0M628.0,253.3h0M628.2,261.9h0M628.3,264.1h0M628.5,272.6h0M628.7,266.2h0M628.8,274.8h0M629.0,270.5h0M629.2,274.8h0M629.3,268.4h0M629.5,272.6h0M629.6,270.5h0M629.8,266.2h0M630.0,264.1h0M630.1,264.1h0M630.3,259.8h0M630.4,251.2h0M630.6,253.3h0M630.8,249.0h0M630.9,246.9h0M631.1,249.0h0M631.2,257.6h0M631.4,255.5h0M631.6,257.6h0M631.7,259.8h0M631.9,259.8h0M632.0,253.3h0M632.2,253.3h0M632.4,249.0h0M632.5,251.2h0M632.7,249.0h0M632.9,251.2h0M633.0,251.2h0M633.2,259.8h0M633.3,255.5h0M633.5,255.4h0M633.7,255.4h0M633.8,255.5h0M634.0,249.0h0M634.1,253.3h0M634.3,257.6h0M634.5,259.8h0M634.6,259.8h0M634.8,264.1h0M634.9,259.8h0M635.1,266.2h0M635.3,270.5h0M635.4,279.1h0M635.6,274.8h0M635.8,279.1h0M635.9,279.1h0M636.1,268.4h0M636.2,270.5h0M636.4,279.1h0M636.6,283.4h0M636.7,272.6h0M636.9,279.1h0M637.0,270.5h0M637.2,261.9h0M637.4,255.5h0M637.5,259.8h0M637.7,257.6h0M637.8,255.5h0M638.0,257.6h0M638.2,268.4h0M638.3,264.1h0M638.5,261.9h0M638.7,266.2h0M638.8,268.4h0M639.0,261.9h0M639.1,266.2h0M639.3,266.2h0M639.5,264.1h0M639.6,261.9h0M639.8,259.8h0M639.9,255.4h0M640.1,261.9h0M640.3,259.8h0M640.4,257.6h0M640.6,257.6h0M640.7,261.9h0M640.9,255.5h0M641.1,257.6h0M641.2,257.6h0M641.4,257.6h0M641.5,253.3h0M641.7,251.2h0M641.9,249.0h0M642.0,249.0h0M642.2,246.9h0M642.4,246.9h0M642.5,246.9h0M642.7,249.0h0M642.8,251.2h0M643.0,253.3h0M643.2,255.4h0M643.3,257.6h0M643.5,257.6h0M643.6,257.6h0M643.8,259.8h0M644.0,257.6h0M644.1,257.6h0M644.3,255.5h0M644.4,253.3h0M644.6,251.2h0M644.8,253.3h0M644.9,259.8h0M645.1,264.1h0M645.3,264.1h0M645.4,264.1h0M645.6,261.9h0M645.7,255.5h0M645.9,253.3h0M646.1,261.9h0M646.2,257.6h0M646.4,259.8h0M646.5,259.8h0M646.7,268.4h0M646.9,261.9h0M647.0,261.9h0M647.2,261.9h0M647.3,261.9h0M647.5,251.2h0M647.7,255.5h0M647.8,259.8h0M648.0,264.1h0M648.1,268.4h0M648.3,279.1h0M648.5,274.8h0M648.6,277.0h0M648.8,268.4h0M649.0,268.4h0M649.1,259.8h0M649.3,261.9h0M649.4,255.5h0M649.6,261.9h0M649.8,257.6h0M649.9,255.5h0M650.1,259.8h0M650.2,261.9h0M650.4,266.2h0M650.6,268.4h0M650.7,268.4h0M650.9,264.1h0M651.0,266.2h0M651.2,255.5h0M651.4,259.8h0M651.5,268.4h0M651.7,270.5h0M651.9,272.6h0M652.0,276.9h0M652.2,276.9h0M652.3,272.6h0M652.5,264.1h0M652.7,268.4h0M652.8,266.2h0M653.0,261.9h0M653.1,259.8h0M653.3,264.1h0M653.5,255.4h0M653.6,261.9h0M653.8,259.8h0M653.9,259.8h0M654.1,257.6h0M654.3,264.1h0M654.4,266.2h0M654.6,270.5h0M654.8,274.8h0M654.9,281.2h0M655.1,279.1h0M655.2,274.8h0M655.4,277.0h0M655.6,270.5h0M655.7,268.4h0M655.9,264.1h0M656.0,261.9h0M656.2,255.5h0M656.4,261.9h0M656.5,261.9h0M656.7,268.4h0M656.8,272.6h0M657.0,272.6h0M657.2,266.2h0M657.3,259.8h0M657.5,257.6h0M657.6,253.3h0M657.8,257.6h0M658.0,257.6h0M658.1,268.4h0M658.3,276.9h0M658.5,285.6h0M658.6,287.7h0M658.8,296.3h0M658.9,287.7h0M659.1,279.1h0M659.3,279.1h0M659.4,277.0h0M659.6,272.7h0M659.7,272.7h0M659.9,270.5h0M660.1,261.9h0M660.2,257.6h0M660.4,251.2h0M660.5,257.6h0M660.7,261.9h0M660.9,259.8h0M661.0,261.9h0M661.2,266.2h0M661.4,264.1h0M661.5,259.8h0M661.7,261.9h0M661.8,264.1h0M662.0,261.9h0M662.2,259.8h0M662.3,264.1h0M662.5,268.4h0M662.6,268.4h0M662.8,268.4h0M663.0,272.6h0M663.1,285.6h0M663.3,285.6h0M663.4,287.7h0M663.6,287.7h0M663.8,283.4h0M663.9,266.2h0M664.1,266.2h0M664.2,261.9h0M664.4,259.8h0M664.6,259.8h0M664.7,255.5h0M664.9,249.0h0M665.1,249.0h0M665.2,251.2h0M665.4,246.9h0M665.5,249.0h0M665.7,249.0h0M665.9,246.9h0M666.0,249.0h0M666.2,249.0h0M666.3,246.9h0M666.5,246.9h0M666.7,251.2h0M666.8,253.3h0M667.0,261.9h0M667.1,261.9h0M667.3,268.4h0M667.5,268.4h0M667.6,270.5h0M667.8,270.5h0M668.0,272.6h0M668.1,268.4h0M668.3,266.2h0M668.4,257.6h0M668.6,253.3h0M668.8,253.3h0M668.9,255.5h0M669.1,255.5h0M669.2,266.2h0M669.4,261.9h0M669.6,264.1h0M669.7,264.1h0M669.9,264.1h0M670.0,255.5h0M670.2,259.8h0M670.4,259.8h0M670.5,257.6h0M670.7,255.4h0M670.9,257.6h0M671.0,266.2h0M671.2,264.1h0M671.3,266.2h0M671.5,264.1h0M671.7,266.2h0M671.8,255.5h0M672.0,257.6h0M672.1,255.4h0M672.3,257.6h0M672.5,253.3h0M672.6,257.6h0M672.8,257.6h0M672.9,261.9h0M673.1,264.1h0M673.3,272.6h0M673.4,270.5h0M673.6,272.6h0M673.7,268.4h0M673.9,266.2h0M674.1,257.6h0M674.2,253.3h0M674.4,249.0h0M674.6,253.3h0M674.7,253.3h0M674.9,261.9h0M675.0,264.1h0M675.2,268.4h0M675.4,261.9h0M675.5,261.9h0M675.7,253.3h0M675.8,253.3h0M676.0,249.0h0M676.2,257.6h0M676.3,255.5h0M676.5,272.6h0M676.6,270.5h0M676.8,279.1h0M677.0,270.5h0M677.1,274.8h0M677.3,270.5h0M677.5,272.6h0M677.6,264.1h0M677.8,264.1h0M677.9,266.2h0M678.1,253.3h0M678.3,264.1h0M678.4,264.1h0M678.6,264.1h0M678.7,266.2h0M678.9,270.5h0M679.1,259.8h0M679.2,264.1h0M679.4,264.1h0M679.5,268.4h0M679.7,266.2h0M679.9,274.8h0M680.0,272.6h0M680.2,274.8h0M680.4,268.4h0M680.5,268.4h0M680.7,257.6h0M680.8,257.6h0M681.0,255.5h0M681.2,253.3h0M681.3,255.5h0M681.5,259.8h0M681.6,264.1h0M681.8,264.1h0M682.0,259.8h0M682.1,253.3h0M682.3,249.0h0M682.4,242.6h0M682.6,242.6h0M682.8,244.7h0M682.9,251.2h0M683.1,259.8h0M683.2,264.1h0M683.4,270.5h0M683.6,277.0h0M683.7,277.0h0M683.9,272.6h0M684.1,270.5h0M684.2,264.1h0M684.4,255.5h0M684.5,257.6h0M684.7,255.4h0M684.9,266.2h0M685.0,268.4h0M685.2,268.4h0M685.3,266.2h0M685.5,270.5h0M685.7,268.4h0M685.8,268.4h0M686.0,276.9h0M686.1,274.8h0M686.3,270.5h0M686.5,261.9h0M686.6,264.1h0M686.8,266.2h0M687.0,268.4h0M687.1,277.0h0M687.3,276.9h0M687.4,274.8h0M687.6,268.4h0M687.8,268.4h0M687.9,259.8h0M688.1,255.5h0M688.2,255.4h0M688.4,259.8h0M688.6,261.9h0M688.7,266.2h0M688.9,277.0h0M689.0,279.1h0M689.2,281.2h0M689.4,279.1h0M689.5,276.9h0M689.7,272.6h0M689.8,281.2h0M690.0,270.5h0M690.2,266.2h0M690.3,272.7h0M690.5,270.5h0M690.7,257.6h0M690.8,264.1h0M691.0,264.1h0M691.1,257.6h0M691.3,255.5h0M691.5,255.5h0M691.6,251.2h0M691.8,251.2h0M691.9,249.0h0M692.1,249.0h0M692.3,253.3h0M692.4,253.3h0M692.6,261.9h0M692.7,272.6h0M692.9,281.2h0M693.1,281.2h0M693.2,287.7h0M693.4,279.1h0M693.6,274.8h0M693.7,268.4h0M693.9,266.2h0M694.0,261.9h0M694.2,261.9h0M694.4,257.6h0M694.5,255.5h0M694.7,257.6h0M694.8,257.6h0M695.0,257.6h0M695.2,261.9h0M695.3,264.1h0M695.5,268.4h0M695.6,274.8h0M695.8,279.1h0M696.0,274.8h0M696.1,272.6h0M696.3,261.9h0M696.5,257.6h0M696.6,253.3h0M696.8,253.3h0M696.9,257.6h0M697.1,264.1h0M697.3,268.4h0M697.4,268.4h0M697.6,274.8h0M697.7,270.5h0M697.9,270.5h0M698.1,264.1h0M698.2,272.6h0M698.4,270.5h0M698.5,272.6h0M698.7,268.4h0M698.9,274.8h0M699.0,289.9h0M699.2,283.4h0M699.3,283.4h0M699.5,283.4h0M699.7,277.0h0M699.8,253.3h0M700.0,255.4h0M700.2,261.9h0M700.3,268.4h0M700.5,272.6h0M700.6,277.0h0M700.8,279.1h0M701.0,272.6h0M701.1,274.8h0M701.3,268.4h0M701.4,264.1h0M701.6,259.8h0M701.8,259.8h0M701.9,249.0h0M702.1,257.6h0M702.2,257.6h0M702.4,261.9h0M702.6,261.9h0M702.7,270.5h0M702.9,266.2h0M703.1,270.5h0M703.2,268.4h0M703.4,268.4h0M703.5,261.9h0M703.7,259.8h0M703.9,255.5h0M704.0,261.9h0M704.2,266.2h0M704.3,266.2h0M704.5,261.9h0M704.7,264.1h0M704.8,257.6h0M705.0,253.3h0M705.1,253.3h0M705.3,257.6h0M705.5,255.5h0M705.6,253.3h0M705.8,249.0h0M705.9,251.2h0M706.1,246.9h0M706.3,251.2h0M706.4,253.3h0M706.6,255.5h0M706.8,255.4h0M706.9,264.1h0M707.1,259.8h0M707.2,257.6h0M707.4,261.9h0M707.6,266.2h0M707.7,259.8h0M707.9,259.8h0M708.0,281.2h0M708.2,274.8h0M708.4,268.4h0M708.5,270.5h0M708.7,272.6h0M708.8,253.3h0M709.0,261.9h0M709.2,268.4h0M709.3,268.4h0M709.5,266.2h0M709.7,270.5h0M709.8,264.1h0M710.0,261.9h0M710.1,270.5h0M710.3,277.0h0M710.5,294.2h0M710.6,294.2h0M710.8,294.1h0M710.9,285.6h0M711.1,279.1h0M711.3,255.5h0M711.4,255.5h0M711.6,251.2h0M711.7,249.0h0M711.9,253.3h0M712.1,259.8h0M712.2,264.1h0M712.4,266.2h0M712.5,274.8h0M712.7,268.4h0M712.9,261.9h0M713.0,264.1h0M713.2,266.2h0M713.4,266.2h0M713.5,279.1h0M713.7,283.4h0M713.8,285.6h0M714.0,279.1h0M714.2,277.0h0M714.3,272.6h0M714.5,274.8h0M714.6,270.5h0M714.8,274.8h0M715.0,270.5h0M715.1,261.9h0M715.3,257.6h0M715.4,261.9h0M715.6,264.1h0M715.8,268.4h0M715.9,268.4h0M716.1,266.2h0M716.3,257.6h0M716.4,257.6h0M716.6,251.2h0M716.7,257.6h0M716.9,259.8h0M717.1,268.4h0M717.2,264.1h0M717.4,264.1h0M717.5,257.6h0M717.7,257.6h0M717.9,253.3h0M718.0,255.5h0M718.2,257.6h0M718.3,264.1h0M718.5,272.6h0M718.7,268.4h0M718.8,277.0h0M719.0,287.7h0M719.2,283.4h0M719.3,272.6h0M719.5,277.0h0M719.6,270.5h0M719.8,270.5h0M720.0,270.5h0M720.1,277.0h0M720.3,277.0h0M720.4,274.8h0M720.6,261.9h0M720.8,270.5h0M720.9,268.4h0M721.1,264.1h0M721.2,266.2h0M721.4,268.4h0M721.6,259.8h0M721.7,264.1h0M721.9,268.4h0M722.0,266.2h0M722.2,264.1h0M722.4,272.6h0M722.5,274.8h0M722.7,270.5h0M722.9,268.4h0M723.0,270.5h0M723.2,268.4h0M723.3,266.2h0M723.5,266.2h0M723.7,270.5h0M723.8,266.2h0M724.0,266.2h0M724.1,266.2h0M724.3,266.2h0M724.5,264.1h0M724.6,266.2h0M724.8,259.8h0M724.9,261.9h0M725.1,264.1h0M725.3,259.8h0M725.4,259.8h0M725.6,266.2h0M725.8,261.9h0M725.9,257.6h0M726.1,268.4h0M726.2,272.6h0M726.4,285.6h0M726.6,285.6h0M726.7,294.1h0M726.9,285.6h0M727.0,285.6h0M727.2,268.4h0M727.4,259.8h0M727.5,257.6h0M727.7,257.6h0M727.8,264.1h0M728.0,261.9h0M728.2,266.2h0M728.3,264.1h0M728.5,270.5h0M728.6,259.8h0M728.8,261.9h0M729.0,311.4h0M729.1,315.6h0M729.3,309.2h0M729.5,307.1h0M729.6,302.8h0M729.8,253.3h0M729.9,246.9h0M730.1,249.0h0M730.3,251.2h0M730.4,253.3h0M730.6,255.5h0M730.7,268.4h0M730.9,264.1h0M731.1,268.4h0M731.2,270.5h0M731.4,292.0h0M731.5,285.6h0M731.7,287.7h0M731.9,283.4h0M732.0,287.7h0M732.2,264.1h0M732.4,270.5h0M732.5,274.8h0M732.7,279.1h0M732.8,279.1h0M733.0,277.0h0M733.2,268.4h0M733.3,264.1h0M733.5,259.8h0M733.6,255.5h0M733.8,255.5h0M734.0,251.2h0M734.1,255.5h0M734.3,259.8h0M734.4,257.6h0M734.6,259.8h0M734.8,268.4h0M734.9,264.1h0M735.1,261.9h0M735.3,266.2h0M735.4,264.1h0M735.6,257.6h0M735.7,257.6h0M735.9,259.8h0M736.1,255.5h0M736.2,261.9h0M736.4,259.8h0M736.5,266.2h0M736.7,261.9h0M736.9,264.1h0M737.0,257.6h0M737.2,257.6h0M737.3,253.3h0M737.5,266.2h0M737.7,266.2h0M737.8,272.6h0M738.0,279.1h0M738.1,276.9h0M738.3,264.1h0M738.5,272.6h0M738.6,268.4h0M738.8,264.1h0M739.0,264.1h0M739.1,266.2h0M739.3,253.3h0M739.4,251.2h0M739.6,249.0h0M739.8,249.0h0M739.9,246.9h0M740.1,255.5h0M740.2,259.8h0M740.4,264.1h0M740.6,266.2h0M740.7,272.6h0M740.9,266.2h0M741.0,264.1h0M741.2,259.8h0M741.4,261.9h0M741.5,255.5h0M741.7,255.5h0M741.9,255.5h0M742.0,257.6h0M742.2,255.4h0M742.3,257.6h0M742.5,257.6h0M742.7,257.6h0M742.8,255.5h0M743.0,257.6h0M743.1,255.5h0M743.3,255.5h0M743.5,253.3h0M743.6,253.3h0M743.8,253.3h0M743.9,255.5h0M744.1,257.6h0M744.3,257.6h0M744.4,257.6h0M744.6,259.8h0M744.8,257.6h0M744.9,255.5h0M745.1,257.6h0M745.2,257.6h0M745.4,251.2h0M745.6,253.3h0M745.7,257.6h0M745.9,253.3h0M746.0,255.4h0M746.2,255.5h0M746.4,255.4h0M746.5,253.3h0M746.7,257.6h0M746.8,257.6h0M747.0,259.8h0M747.2,261.9h0M747.3,279.1h0M747.5,279.1h0M747.6,277.0h0M747.8,274.8h0M748.0,268.4h0M748.1,253.3h0M748.3,251.2h0M748.5,257.6h0M748.6,257.6h0M748.8,266.2h0M748.9,264.1h0M749.1,266.2h0M749.3,266.2h0M749.4,264.0h0M749.6,259.8h0M749.7,255.5h0M749.9,253.3h0M750.1,253.3h0M750.2,257.6h0M750.4,259.8h0M750.5,268.4h0M750.7,268.4h0M750.9,261.9h0M751.0,259.8h0M751.2,253.3h0M751.4,249.0h0M751.5,251.2h0M751.7,249.0h0M751.8,251.2h0M752.0,259.8h0M752.2,259.8h0M752.3,257.6h0M752.5,264.1h0M752.6,264.1h0M752.8,257.6h0M753.0,257.6h0M753.1,257.6h0M753.3,255.4h0M753.4,255.4h0M753.6,255.4h0M753.8,257.6h0M753.9,259.8h0M754.1,266.2h0M754.2,264.1h0M754.4,261.9h0M754.6,261.9h0M754.7,259.8h0M754.9,253.3h0M755.1,253.3h0M755.2,255.5h0M755.4,274.8h0M755.5,276.9h0M755.7,281.2h0M755.9,281.2h0M756.0,281.2h0M756.2,259.8h0M756.3,266.2h0M756.5,261.9h0M756.7,259.8h0M756.8,261.9h0M757.0,261.9h0M757.1,259.8h0M757.3,259.8h0M757.5,259.8h0M757.6,261.9h0M757.8,259.8h0M758.0,253.3h0M758.1,249.0h0M758.3,253.3h0M758.4,249.0h0M758.6,253.3h0M758.8,253.3h0M758.9,264.1h0M759.1,268.4h0M759.2,270.5h0M759.4,266.2h0M759.6,266.2h0M759.7,259.8h0M759.9,253.3h0M760.0,251.2h0M760.2,249.0h0M760.4,249.0h0M760.5,246.9h0M760.7,253.3h0M760.9,255.4h0M761.0,257.6h0M761.2,257.6h0M761.3,257.6h0M761.5,251.2h0M761.7,246.9h0M761.8,253.3h0M762.0,253.3h0M762.1,259.8h0M762.3,266.2h0M762.5,272.6h0M762.6,266.2h0M762.8,274.8h0M762.9,270.5h0M763.1,274.8h0M763.3,270.5h0M763.4,272.6h0M763.6,266.2h0M763.7,264.1h0M763.9,255.4h0M764.1,257.6h0M764.2,266.2h0M764.4,272.6h0M764.6,270.5h0M764.7,270.5h0M764.9,268.4h0M765.0,261.9h0M765.2,253.3h0M765.4,255.5h0M765.5,255.5h0M765.7,261.9h0M765.8,264.1h0M766.0,270.5h0M766.2,268.4h0M766.3,266.2h0M766.5,264.1h0M766.6,257.6h0M766.8,257.6h0M767.0,259.8h0M767.1,266.2h0M767.3,259.8h0M767.5,268.4h0M767.6,261.9h0M767.8,261.9h0M767.9,255.5h0M768.1,257.6h0M768.3,251.2h0M768.4,253.3h0M768.6,257.6h0M768.7,264.1h0M768.9,272.6h0M769.1,272.6h0M769.2,270.5h0M769.4,266.2h0M769.5,279.1h0M769.7,270.5h0M769.9,272.6h0M770.0,270.5h0M770.2,270.5h0M770.3,251.2h0M770.5,251.2h0M770.7,246.9h0M770.8,249.0h0M771.0,249.0h0M771.2,249.0h0M771.3,246.9h0M771.5,257.6h0M771.6,259.8h0M771.8,266.2h0M772.0,266.2h0M772.1,277.0h0M772.3,270.5h0M772.4,268.4h0M772.6,261.9h0M772.8,266.2h0M772.9,255.5h0M773.1,253.3h0M773.2,257.6h0M773.4,261.9h0M773.6,261.9h0M773.7,266.2h0M773.9,261.9h0M774.1,259.8h0M774.2,255.5h0M774.4,255.5h0M774.5,257.6h0M774.7,270.5h0M774.9,270.5h0M775.0,272.6h0M775.2,268.4h0M775.3,268.4h0M775.5,259.8h0M775.7,257.6h0M775.8,257.6h0M776.0,259.8h0M776.1,261.9h0M776.3,259.8h0M776.5,261.9h0M776.6,261.9h0M776.8,259.8h0M777.0,253.3h0M777.1,253.3h0M777.3,253.3h0M777.4,253.3h0M777.6,257.6h0M777.8,261.9h0M777.9,259.8h0M778.1,261.9h0M778.2,259.8h0M778.4,257.6h0M778.6,272.6h0M778.7,276.9h0M778.9,274.8h0M779.0,272.6h0M779.2,277.0h0M779.4,255.5h0M779.5,255.4h0M779.7,253.3h0M779.8,257.6h0M780.0,251.2h0M780.2,255.4h0M780.3,257.6h0M780.5,259.8h0M780.7,266.2h0M780.8,266.2h0M781.0,266.2h0M781.1,261.9h0M781.3,270.5h0M781.5,259.8h0M781.6,266.2h0M781.8,261.9h0M781.9,266.2h0M782.1,253.3h0M782.3,257.6h0M782.4,251.2h0M782.6,257.6h0M782.7,253.3h0M782.9,253.3h0M783.1,261.9h0M783.2,264.1h0M783.4,270.5h0M783.6,274.8h0M783.7,277.0h0M783.9,266.2h0M784.0,272.7h0M784.2,266.2h0M784.4,261.9h0M784.5,272.6h0M784.7,270.5h0M784.8,268.4h0M785.0,270.5h0M785.2,270.5h0M785.3,259.8h0M785.5,261.9h0M785.6,257.6h0M785.8,253.3h0M786.0,253.3h0M786.1,251.2h0M786.3,253.3h0M786.4,251.2h0M786.6,249.0h0M786.8,249.0h0M786.9,251.2h0M787.1,253.3h0M787.3,253.3h0M787.4,259.8h0M787.6,257.6h0M787.7,261.9h0M787.9,266.2h0M788.1,272.6h0M788.2,270.5h0M788.4,274.8h0M788.5,272.6h0M788.7,268.4h0M788.9,261.9h0M789.0,259.8h0M789.2,264.1h0M789.3,261.9h0M789.5,259.8h0M789.7,285.6h0M789.8,292.0h0M790.0,285.6h0M790.2,285.6h0M790.3,283.4h0M790.5,264.1h0M790.6,255.5h0M790.8,259.8h0M791.0,264.1h0M791.1,272.7h0M791.3,268.4h0M791.4,268.4h0M791.6,264.1h0M791.8,259.8h0M791.9,251.2h0M792.1,251.2h0M792.2,257.6h0M792.4,259.8h0M792.6,259.8h0M792.7,268.4h0M792.9,270.5h0M793.0,266.2h0M793.2,264.1h0M793.4,268.4h0M793.5,261.9h0M793.7,261.9h0M793.9,261.9h0M794.0,266.2h0M794.2,259.8h0M794.3,259.8h0M794.5,257.6h0M794.7,261.9h0M794.8,257.6h0M795.0,261.9h0M795.1,259.8h0M795.3,266.2h0M795.5,259.8h0M795.6,259.8h0M795.8,261.9h0M795.9,266.2h0M796.1,257.6h0M796.3,257.6h0M796.4,259.8h0M796.6,255.5h0M796.8,251.2h0M796.9,257.6h0M797.1,257.6h0M797.2,259.8h0M797.4,264.1h0M797.6,268.4h0M797.7,261.9h0M797.9,261.9h0M798.0,259.8h0M798.2,261.9h0M798.4,257.6h0M798.5,257.6h0M798.7,259.8h0M798.8,257.6h0M799.0,251.2h0M799.2,253.3h0M799.3,253.3h0M799.5,251.2h0M799.7,253.3h0M799.8,253.3h0M800.0,251.2h0M800.1,257.6h0M800.3,259.8h0M800.5,259.8h0M800.6,261.9h0M800.8,261.9h0M800.9,255.5h0M801.1,253.3h0M801.3,251.2h0M801.4,251.2h0M801.6,251.2h0M801.7,251.2h0M801.9,251.2h0M802.1,253.3h0M802.2,251.2h0M802.4,249.0h0M802.5,249.0h0M802.7,255.5h0M802.9,257.6h0M803.0,259.8h0M803.2,261.9h0M803.4,264.1h0M803.5,255.5h0M803.7,251.2h0M803.8,251.2h0M804.0,251.2h0M804.2,251.2h0M804.3,255.4h0M804.5,253.3h0M804.6,251.2h0M804.8,253.3h0M805.0,259.8h0M805.1,255.5h0M805.3,259.8h0M805.4,259.8h0M805.6,257.6h0M805.8,253.3h0M805.9,257.6h0M806.1,255.5h0M806.3,255.5h0M806.4,261.9h0M806.6,264.1h0M806.7,261.9h0M806.9,264.1h0M807.1,264.1h0M807.2,257.6h0M807.4,255.5h0M807.5,255.5h0M807.7,253.3h0M807.9,253.3h0M808.0,259.8h0M808.2,261.9h0M808.3,264.1h0M808.5,266.2h0M808.7,268.4h0M808.8,261.9h0M809.0,259.8h0M809.1,259.8h0M809.3,266.2h0M809.5,268.4h0M809.6,272.7h0M809.8,272.7h0M810.0,279.1h0M810.1,277.0h0M810.3,281.2h0M810.4,276.9h0M810.6,272.6h0M810.8,264.1h0M810.9,261.9h0M811.1,255.5h0M811.2,253.3h0M811.4,255.4h0M811.6,259.8h0M811.7,270.5h0M811.9,274.8h0M812.0,281.2h0M812.2,279.1h0M812.4,277.0h0M812.5,264.1h0M812.7,259.8h0M812.9,255.4h0M813.0,253.3h0M813.2,257.6h0M813.3,261.9h0M813.5,264.1h0M813.7,264.1h0M813.8,266.2h0M814.0,270.5h0M814.1,268.4h0M814.3,268.4h0M814.5,266.2h0M814.6,266.2h0M814.8,264.1h0M814.9,264.1h0M815.1,261.9h0M815.3,268.4h0M815.4,268.4h0M815.6,270.5h0M815.8,268.4h0M815.9,268.4h0M816.1,264.1h0M816.2,266.2h0M816.4,257.6h0M816.6,257.6h0M816.7,255.4h0M816.9,257.6h0M817.0,255.5h0M817.2,257.6h0M817.4,255.5h0M817.5,270.5h0M817.7,268.4h0M817.8,270.5h0M818.0,266.2h0M818.2,268.4h0M818.3,253.3h0M818.5,253.3h0M818.6,253.3h0M818.8,259.8h0M819.0,264.1h0M819.1,266.2h0M819.3,266.2h0M819.5,264.1h0M819.6,259.8h0M819.8,255.4h0M819.9,253.3h0M820.1,255.4h0M820.3,255.5h0M820.4,255.4h0M820.6,253.3h0M820.7,253.3h0M820.9,259.8h0M821.1,261.9h0M821.2,264.1h0M821.4,261.9h0M821.5,268.4h0M821.7,257.6h0M821.9,257.6h0M822.0,255.4h0M822.2,257.6h0M822.4,251.2h0M822.5,253.3h0M822.7,253.3h0M822.8,251.2h0M823.0,249.0h0M823.2,253.3h0M823.3,253.3h0M823.5,253.3h0M823.6,257.6h0M823.8,266.2h0M824.0,261.9h0M824.1,270.5h0M824.3,270.5h0M824.4,268.4h0M824.6,261.9h0M824.8,261.9h0M824.9,255.4h0M825.1,257.6h0M825.2,255.5h0M825.4,264.1h0M825.6,268.4h0M825.7,264.1h0M825.9,264.1h0M826.1,264.1h0M826.2,255.5h0M826.4,253.3h0M826.5,261.9h0M826.7,257.6h0M826.9,257.6h0M827.0,255.5h0M827.2,253.3h0M827.3,249.0h0M827.5,251.2h0M827.7,253.3h0M827.8,253.3h0M828.0,255.4h0M828.1,255.4h0M828.3,259.8h0M828.5,257.6h0M828.6,264.1h0M828.8,264.1h0M829.0,266.2h0M829.1,261.9h0M829.3,266.2h0M829.4,272.6h0M829.6,270.5h0M829.8,268.4h0M829.9,272.6h0M830.1,270.5h0M830.2,270.5h0M830.4,272.6h0M830.6,276.9h0M830.7,270.5h0M830.9,272.6h0M831.0,264.1h0M831.2,261.9h0M831.4,266.2h0M831.5,264.1h0M831.7,259.8h0M831.9,264.1h0M832.0,266.2h0M832.2,257.6h0M832.3,259.8h0M832.5,259.8h0M832.7,253.3h0M832.8,253.3h0M833.0,249.0h0M833.1,249.0h0M833.3,251.2h0M833.5,255.5h0M833.6,264.1h0M833.8,270.5h0M833.9,270.5h0M834.1,268.4h0M834.3,268.4h0M834.4,266.2h0M834.6,261.9h0M834.7,264.1h0M834.9,272.6h0M835.1,272.7h0M835.2,270.5h0M835.4,272.6h0M835.6,270.5h0M835.7,264.1h0M835.9,259.8h0M836.0,253.3h0M836.2,251.2h0M836.4,251.2h0M836.5,249.0h0M836.7,249.0h0M836.8,251.2h0M837.0,253.3h0M837.2,251.2h0M837.3,261.9h0M837.5,266.2h0M837.6,268.4h0M837.8,266.2h0M838.0,274.8h0M838.1,266.2h0M838.3,266.2h0M838.5,268.4h0M838.6,266.2h0M838.8,266.2h0M838.9,270.5h0M839.1,268.4h0M839.3,261.9h0M839.4,266.2h0M839.6,259.8h0M839.7,257.6h0M839.9,257.6h0M840.1,259.8h0M840.2,268.4h0M840.4,268.4h0M840.5,261.9h0M840.7,259.8h0M840.9,257.6h0M841.0,255.5h0M841.2,255.5h0M841.4,259.8h0M841.5,264.1h0M841.7,264.1h0M841.8,259.8h0M842.0,264.1h0M842.2,264.1h0M842.3,261.9h0M842.5,266.2h0M842.6,266.2h0M842.8,268.4h0M843.0,268.4h0M843.1,264.1h0M843.3,264.1h0M843.4,268.4h0M843.6,268.4h0M843.8,268.4h0M843.9,274.8h0M844.1,279.1h0M844.2,272.6h0M844.4,266.2h0M844.6,261.9h0M844.7,261.9h0M844.9,253.3h0M845.1,257.6h0M845.2,257.6h0M845.4,259.8h0M845.5,264.1h0M845.7,266.2h0M845.9,264.1h0M846.0,268.4h0M846.2,277.0h0M846.3,268.4h0M846.5,264.1h0M846.7,257.6h0M846.8,261.9h0M847.0,255.4h0M847.1,259.8h0M847.3,266.2h0M847.5,272.7h0M847.6,270.5h0M847.8,270.5h0M848.0,266.2h0M848.1,264.1h0M848.3,261.9h0M848.4,255.4h0M848.6,261.9h0M848.8,270.5h0M848.9,274.8h0M849.1,272.6h0M849.2,272.6h0M849.4,268.4h0M849.6,264.1h0M849.7,261.9h0M849.9,270.5h0M850.0,270.5h0M850.2,264.1h0M850.4,261.9h0M850.5,257.6h0M850.7,249.0h0M850.8,253.3h0M851.0,257.6h0M851.2,261.9h0M851.3,268.4h0M851.5,270.5h0M851.7,272.6h0M851.8,274.8h0M852.0,270.5h0M852.1,270.5h0M852.3,270.5h0M852.5,266.2h0M852.6,268.4h0M852.8,268.4h0M852.9,261.9h0M853.1,261.9h0M853.3,261.9h0M853.4,255.4h0M853.6,257.6h0M853.7,259.8h0M853.9,264.1h0M854.1,270.5h0M854.2,270.5h0M854.4,266.2h0M854.6,274.8h0M854.7,268.4h0M854.9,266.2h0M855.0,268.4h0M855.2,272.6h0M855.4,261.9h0M855.5,264.1h0M855.7,259.8h0M855.8,259.8h0M856.0,259.8h0M856.2,259.8h0M856.3,257.6h0M856.5,259.8h0M856.6,257.6h0M856.8,255.5h0M857.0,261.9h0M857.1,266.2h0M857.3,264.1h0M857.5,261.9h0M857.6,264.1h0M857.8,257.6h0M857.9,253.3h0M858.1,249.0h0M858.3,251.2h0M858.4,244.7h0M858.6,246.9h0M858.7,246.9h0M858.9,249.0h0M859.1,255.5h0M859.2,255.5h0M859.4,253.3h0M859.5,257.6h0M859.7,264.1h0M859.9,266.2h0M860.0,270.5h0M860.2,270.5h0M860.3,285.6h0M860.5,287.7h0M860.7,283.4h0M860.8,287.7h0M861.0,296.3h0M861.2,279.1h0M861.3,274.8h0M861.5,281.2h0M861.6,274.8h0M861.8,266.2h0M862.0,270.5h0M862.1,266.2h0M862.3,257.6h0M862.4,259.8h0M862.6,264.1h0M862.8,255.5h0M862.9,257.6h0M863.1,257.6h0M863.2,255.4h0M863.4,253.3h0M863.6,261.9h0M863.7,257.6h0M863.9,255.4h0M864.1,257.6h0M864.2,257.6h0M864.4,261.9h0M864.5,264.1h0M864.7,264.1h0M864.9,261.9h0M865.0,268.4h0M865.2,259.8h0M865.3,274.8h0M865.5,281.2h0" stroke="#1869bf" stroke-width="3.0" stroke-linecap="round" fill="none"/>
<path d="M76.4,119.2L76.6,123M98.4,123L98.6,126.7M119.4,126.7L119.6,130.1M143.4,130.1L143.6,134.2M164.4,134.2L164.6,137.3M194.4,137.3L194.6,141.1M223.4,141.1L223.6,144.8M248.9,144.8L249.1,148.2M278.9,148.2L279.1,152M308.0,152L308.2,156M345.4,156L345.6,159.5M392.4,159.5L392.6,163.2M433.4,163.2L433.6,167M479.9,167L480.1,171.4M525.9,171.4L526.1,175.2M572.0,175.2L572.2,178.6M618.1,178.6L618.3,182.7M667.6,182.7L667.8,186.4M718.8,186.4L719.0,190.5M769.3,190.5L769.5,193.6M823.2,193.6L823.4,197.3" fill="none" stroke="#edb120" stroke-width="1"/><path d="M60.2,119.2L76.4,119.2M76.6,123L98.4,123M98.6,126.7L119.4,126.7M119.6,130.1L143.4,130.1M143.6,134.2L164.4,134.2M164.6,137.3L194.4,137.3M194.6,141.1L223.4,141.1M223.6,144.8L248.9,144.8M249.1,148.2L278.9,148.2M279.1,152L308.0,152M308.2,156L345.4,156M345.6,159.5L392.4,159.5M392.6,163.2L433.4,163.2M433.6,167L479.9,167M480.1,171.4L525.9,171.4M526.1,175.2L572.0,175.2M572.2,178.6L618.1,178.6M618.3,182.7L667.6,182.7M667.8,186.4L718.8,186.4M719.0,190.5L769.3,190.5M769.5,193.6L823.2,193.6M823.4,197.3L866.4,197.3" fill="none" stroke="#ebac1a" stroke-width="2.7" stroke-linecap="round"/>
<path d="M72.1,657.5 H81.1 M76.6,653.0 V662.0 M73.41805,654.31805 L79.78195,660.68195 M73.41805,660.68195 L79.78195,654.31805" stroke="#d9008c" stroke-width="1.3" fill="none"/>
<path d="M88.2,259.75 H97.2 M92.7,255.25 V264.25 M89.51805,256.56805 L95.88195,262.93195 M89.51805,262.93195 L95.88195,256.56805" stroke="#d9008c" stroke-width="1.3" fill="none"/>
<path d="M104.3,259.75 H113.3 M108.8,255.25 V264.25 M105.61805,256.56805 L111.98195,262.93195 M105.61805,262.93195 L111.98195,256.56805" stroke="#d9008c" stroke-width="1.3" fill="none"/>
<path d="M120.4,259.75 H129.4 M124.9,255.25 V264.25 M121.71805,256.56805 L128.08195,262.93195 M121.71805,262.93195 L128.08195,256.56805" stroke="#d9008c" stroke-width="1.3" fill="none"/>
<path d="M136.5,259.75 H145.5 M141.0,255.25 V264.25 M137.81805,256.56805 L144.18195,262.93195 M137.81805,262.93195 L144.18195,256.56805" stroke="#d9008c" stroke-width="1.3" fill="none"/>
<path d="M152.6,259.75 H161.6 M157.1,255.25 V264.25 M153.91805,256.56805 L160.28195,262.93195 M153.91805,262.93195 L160.28195,256.56805" stroke="#d9008c" stroke-width="1.3" fill="none"/>
<path d="M168.7,249.0 H177.7 M173.2,244.5 V253.5 M170.01805,245.81805 L176.38195,252.18195 M170.01805,252.18195 L176.38195,245.81805" stroke="#d9008c" stroke-width="1.3" fill="none"/>
<path d="M184.8,249.0 H193.8 M189.3,244.5 V253.5 M186.11805,245.81805 L192.48195,252.18195 M186.11805,252.18195 L192.48195,245.81805" stroke="#d9008c" stroke-width="1.3" fill="none"/>
<path d="M200.9,249.0 H209.9 M205.4,244.5 V253.5 M202.21805,245.81805 L208.58195,252.18195 M202.21805,252.18195 L208.58195,245.81805" stroke="#d9008c" stroke-width="1.3" fill="none"/>
<path d="M217.0,249.0 H226.0 M221.5,244.5 V253.5 M218.31805,245.81805 L224.68195,252.18195 M218.31805,252.18195 L224.68195,245.81805" stroke="#d9008c" stroke-width="1.3" fill="none"/>
<path d="M233.1,249.0 H242.1 M237.6,244.5 V253.5 M234.41805,245.81805 L240.78195,252.18195 M234.41805,252.18195 L240.78195,245.81805" stroke="#d9008c" stroke-width="1.3" fill="none"/>
<path d="M249.2,249.0 H258.2 M253.7,244.5 V253.5 M250.51805,245.81805 L256.88194999999996,252.18195 M250.51805,252.18195 L256.88194999999996,245.81805" stroke="#d9008c" stroke-width="1.3" fill="none"/>
<path d="M265.3,249.0 H274.3 M269.8,244.5 V253.5 M266.61805000000004,245.81805 L272.98195,252.18195 M266.61805000000004,252.18195 L272.98195,245.81805" stroke="#d9008c" stroke-width="1.3" fill="none"/>
<path d="M281.4,249.0 H290.4 M285.9,244.5 V253.5 M282.71805,245.81805 L289.08194999999995,252.18195 M282.71805,252.18195 L289.08194999999995,245.81805" stroke="#d9008c" stroke-width="1.3" fill="none"/>
<path d="M297.5,249.0 H306.5 M302.0,244.5 V253.5 M298.81805,245.81805 L305.18195,252.18195 M298.81805,252.18195 L305.18195,245.81805" stroke="#d9008c" stroke-width="1.3" fill="none"/>
<path d="M313.6,249.0 H322.6 M318.1,244.5 V253.5 M314.91805000000005,245.81805 L321.28195,252.18195 M314.91805000000005,252.18195 L321.28195,245.81805" stroke="#d9008c" stroke-width="1.3" fill="none"/>
<path d="M329.7,249.0 H338.7 M334.2,244.5 V253.5 M331.01805,245.81805 L337.38194999999996,252.18195 M331.01805,252.18195 L337.38194999999996,245.81805" stroke="#d9008c" stroke-width="1.3" fill="none"/>
<path d="M345.8,249.0 H354.8 M350.3,244.5 V253.5 M347.11805000000004,245.81805 L353.48195,252.18195 M347.11805000000004,252.18195 L353.48195,245.81805" stroke="#d9008c" stroke-width="1.3" fill="none"/>
<path d="M361.9,249.0 H370.9 M366.4,244.5 V253.5 M363.21805,245.81805 L369.58194999999995,252.18195 M363.21805,252.18195 L369.58194999999995,245.81805" stroke="#d9008c" stroke-width="1.3" fill="none"/>
<path d="M378.0,249.0 H387.0 M382.5,244.5 V253.5 M379.31805,245.81805 L385.68195,252.18195 M379.31805,252.18195 L385.68195,245.81805" stroke="#d9008c" stroke-width="1.3" fill="none"/>
<path d="M394.1,249.0 H403.1 M398.6,244.5 V253.5 M395.41805000000005,245.81805 L401.78195,252.18195 M395.41805000000005,252.18195 L401.78195,245.81805" stroke="#d9008c" stroke-width="1.3" fill="none"/>
<path d="M410.2,249.0 H419.2 M414.7,244.5 V253.5 M411.51805,245.81805 L417.88194999999996,252.18195 M411.51805,252.18195 L417.88194999999996,245.81805" stroke="#d9008c" stroke-width="1.3" fill="none"/>
<path d="M426.3,249.0 H435.3 M430.8,244.5 V253.5 M427.61805000000004,245.81805 L433.98195,252.18195 M427.61805000000004,252.18195 L433.98195,245.81805" stroke="#d9008c" stroke-width="1.3" fill="none"/>
<path d="M442.4,249.0 H451.4 M446.9,244.5 V253.5 M443.71805,245.81805 L450.08194999999995,252.18195 M443.71805,252.18195 L450.08194999999995,245.81805" stroke="#d9008c" stroke-width="1.3" fill="none"/>
<path d="M458.5,249.0 H467.5 M463.0,244.5 V253.5 M459.81805,245.81805 L466.18195,252.18195 M459.81805,252.18195 L466.18195,245.81805" stroke="#d9008c" stroke-width="1.3" fill="none"/>
<path d="M474.6,249.0 H483.6 M479.1,244.5 V253.5 M475.91805000000005,245.81805 L482.28195,252.18195 M475.91805000000005,252.18195 L482.28195,245.81805" stroke="#d9008c" stroke-width="1.3" fill="none"/>
<path d="M490.7,252.225 H499.7 M495.2,247.725 V256.725 M492.01805,249.04305 L498.38194999999996,255.40695 M492.01805,255.40695 L498.38194999999996,249.04305" stroke="#d9008c" stroke-width="1.3" fill="none"/>
<path d="M506.8,252.225 H515.8 M511.3,247.725 V256.725 M508.11805000000004,249.04305 L514.48195,255.40695 M508.11805000000004,255.40695 L514.48195,249.04305" stroke="#d9008c" stroke-width="1.3" fill="none"/>
<path d="M522.9,252.225 H531.9 M527.4,247.725 V256.725 M524.21805,249.04305 L530.58195,255.40695 M524.21805,255.40695 L530.58195,249.04305" stroke="#d9008c" stroke-width="1.3" fill="none"/>
<path d="M539.0,252.225 H548.0 M543.5,247.725 V256.725 M540.31805,249.04305 L546.68195,255.40695 M540.31805,255.40695 L546.68195,249.04305" stroke="#d9008c" stroke-width="1.3" fill="none"/>
<path d="M555.1,252.225 H564.1 M559.6,247.725 V256.725 M556.41805,249.04305 L562.78195,255.40695 M556.41805,255.40695 L562.78195,249.04305" stroke="#d9008c" stroke-width="1.3" fill="none"/>
<path d="M571.2,252.225 H580.2 M575.7,247.725 V256.725 M572.51805,249.04305 L578.8819500000001,255.40695 M572.51805,255.40695 L578.8819500000001,249.04305" stroke="#d9008c" stroke-width="1.3" fill="none"/>
<path d="M587.3,252.225 H596.3 M591.8,247.725 V256.725 M588.6180499999999,249.04305 L594.98195,255.40695 M588.6180499999999,255.40695 L594.98195,249.04305" stroke="#d9008c" stroke-width="1.3" fill="none"/>
<path d="M603.4,252.225 H612.4 M607.9,247.725 V256.725 M604.71805,249.04305 L611.08195,255.40695 M604.71805,255.40695 L611.08195,249.04305" stroke="#d9008c" stroke-width="1.3" fill="none"/>
<path d="M619.5,252.225 H628.5 M624.0,247.725 V256.725 M620.81805,249.04305 L627.18195,255.40695 M620.81805,255.40695 L627.18195,249.04305" stroke="#d9008c" stroke-width="1.3" fill="none"/>
<path d="M635.6,252.225 H644.6 M640.1,247.725 V256.725 M636.91805,249.04305 L643.28195,255.40695 M636.91805,255.40695 L643.28195,249.04305" stroke="#d9008c" stroke-width="1.3" fill="none"/>
<path d="M651.7,252.225 H660.7 M656.2,247.725 V256.725 M653.01805,249.04305 L659.3819500000001,255.40695 M653.01805,255.40695 L659.3819500000001,249.04305" stroke="#d9008c" stroke-width="1.3" fill="none"/>
<path d="M667.8,252.225 H676.8 M672.3,247.725 V256.725 M669.1180499999999,249.04305 L675.48195,255.40695 M669.1180499999999,255.40695 L675.48195,249.04305" stroke="#d9008c" stroke-width="1.3" fill="none"/>
<path d="M683.9,252.225 H692.9 M688.4,247.725 V256.725 M685.21805,249.04305 L691.58195,255.40695 M685.21805,255.40695 L691.58195,249.04305" stroke="#d9008c" stroke-width="1.3" fill="none"/>
<path d="M700.0,252.225 H709.0 M704.5,247.725 V256.725 M701.31805,249.04305 L707.68195,255.40695 M701.31805,255.40695 L707.68195,249.04305" stroke="#d9008c" stroke-width="1.3" fill="none"/>
<path d="M716.1,252.225 H725.1 M720.6,247.725 V256.725 M717.41805,249.04305 L723.78195,255.40695 M717.41805,255.40695 L723.78195,249.04305" stroke="#d9008c" stroke-width="1.3" fill="none"/>
<path d="M732.2,252.225 H741.2 M736.7,247.725 V256.725 M733.51805,249.04305 L739.8819500000001,255.40695 M733.51805,255.40695 L739.8819500000001,249.04305" stroke="#d9008c" stroke-width="1.3" fill="none"/>
<path d="M748.3,252.225 H757.3 M752.8,247.725 V256.725 M749.6180499999999,249.04305 L755.98195,255.40695 M749.6180499999999,255.40695 L755.98195,249.04305" stroke="#d9008c" stroke-width="1.3" fill="none"/>
<path d="M764.4,252.225 H773.4 M768.9,247.725 V256.725 M765.71805,249.04305 L772.08195,255.40695 M765.71805,255.40695 L772.08195,249.04305" stroke="#d9008c" stroke-width="1.3" fill="none"/>
<path d="M780.5,252.225 H789.5 M785.0,247.725 V256.725 M781.81805,249.04305 L788.18195,255.40695 M781.81805,255.40695 L788.18195,249.04305" stroke="#d9008c" stroke-width="1.3" fill="none"/>
<path d="M796.6,252.225 H805.6 M801.1,247.725 V256.725 M797.91805,249.04305 L804.28195,255.40695 M797.91805,255.40695 L804.28195,249.04305" stroke="#d9008c" stroke-width="1.3" fill="none"/>
<path d="M812.7,252.225 H821.7 M817.2,247.725 V256.725 M814.01805,249.04305 L820.3819500000001,255.40695 M814.01805,255.40695 L820.3819500000001,249.04305" stroke="#d9008c" stroke-width="1.3" fill="none"/>
<path d="M828.8,252.225 H837.8 M833.3,247.725 V256.725 M830.1180499999999,249.04305 L836.48195,255.40695 M830.1180499999999,255.40695 L836.48195,249.04305" stroke="#d9008c" stroke-width="1.3" fill="none"/>
<path d="M844.9,252.225 H853.9 M849.4,247.725 V256.725 M846.21805,249.04305 L852.58195,255.40695 M846.21805,255.40695 L852.58195,249.04305" stroke="#d9008c" stroke-width="1.3" fill="none"/>
<path d="M861.0,252.225 H870.0 M865.5,247.725 V256.725 M862.31805,249.04305 L868.68195,255.40695 M862.31805,255.40695 L868.68195,249.04305" stroke="#d9008c" stroke-width="1.3" fill="none"/>
<text x="463" y="794.4" font-size="13" font-weight="normal" fill="#262626" text-anchor="middle" >Episode Number</text>
<text x="0" y="0" font-size="13" font-weight="normal" fill="#262626" text-anchor="middle" transform="translate(33.2,443) rotate(-90)">Episode Reward</text>
</svg></body></html>
